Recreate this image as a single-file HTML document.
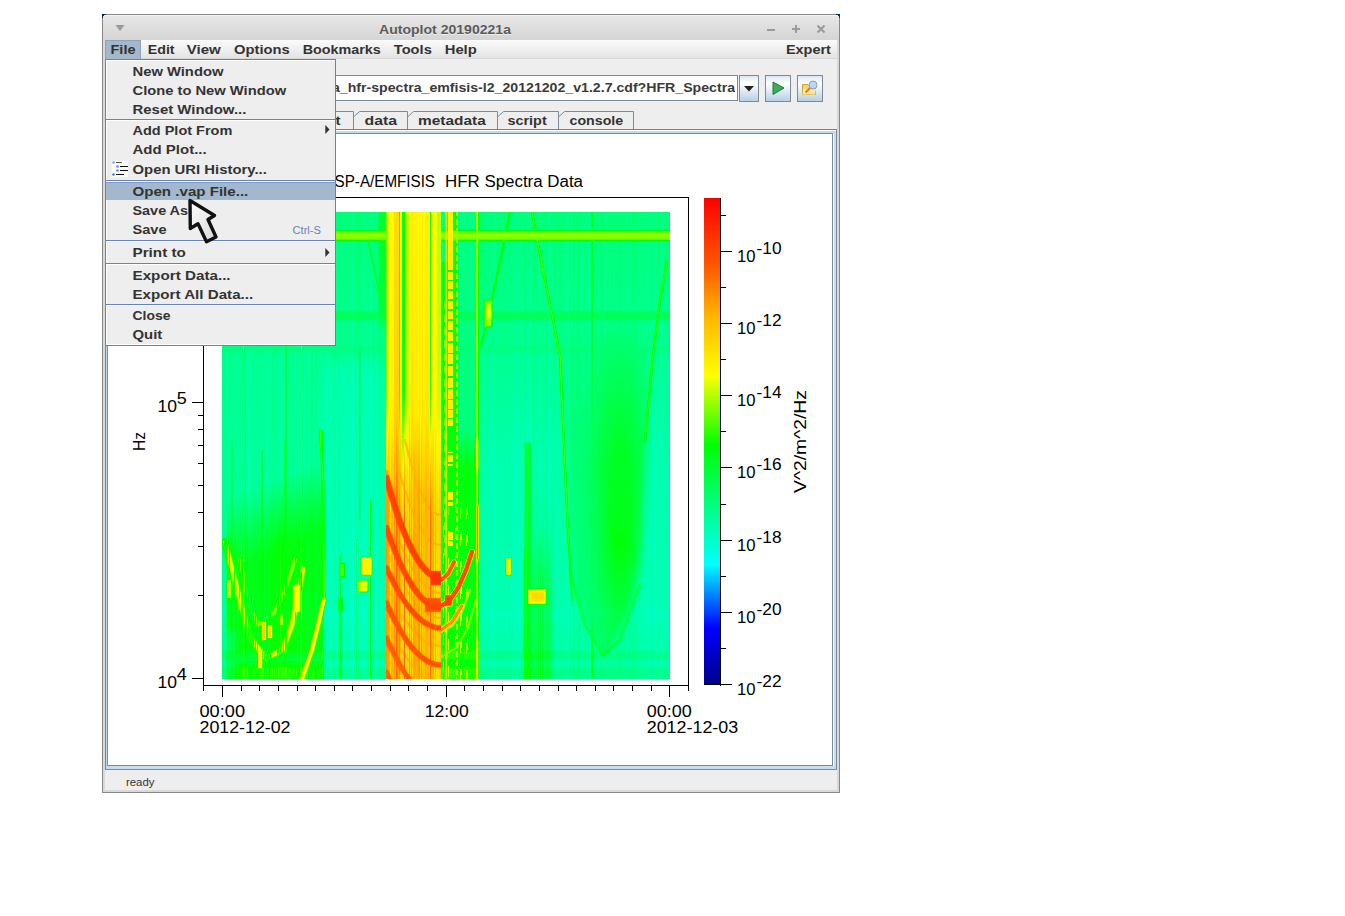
<!DOCTYPE html>
<html><head><meta charset="utf-8"><style>html,body{margin:0;padding:0;background:#fff;width:1345px;height:916px;overflow:hidden;position:relative} #spec i{position:absolute;top:212px;height:467px;display:block}</style></head>
<body>
<svg width="1345" height="916" viewBox="0 0 1345 916" shape-rendering="crispEdges" style="position:absolute;left:0;top:0"><g font-family="Liberation Sans, sans-serif" style="white-space:pre">
<defs>
<linearGradient id="gTitle" x1="0" y1="0" x2="0" y2="1"><stop offset="0" stop-color="#e8e8e8"/><stop offset="1" stop-color="#d4d4d4"/></linearGradient>
<linearGradient id="gMenu" x1="0" y1="0" x2="0" y2="1"><stop offset="0" stop-color="#fbfbfb"/><stop offset="1" stop-color="#e2e2e2"/></linearGradient>
<linearGradient id="gBtn" x1="0" y1="0" x2="0" y2="1"><stop offset="0" stop-color="#dde8f3"/><stop offset="0.3" stop-color="#ffffff"/><stop offset="1" stop-color="#b8cfe5"/></linearGradient>
<linearGradient id="gCbar" x1="0" y1="1" x2="0" y2="0">
<stop offset="0" stop-color="#000089"/><stop offset="0.1176" stop-color="#0000ff"/><stop offset="0.2471" stop-color="#00ffff"/><stop offset="0.4941" stop-color="#00ff00"/><stop offset="0.6353" stop-color="#ffff00"/><stop offset="0.7529" stop-color="#ffb900"/><stop offset="0.8667" stop-color="#ff5400"/><stop offset="1" stop-color="#ff0000"/></linearGradient>
<linearGradient id="gCur" x1="0" y1="0" x2="1" y2="1"><stop offset="0" stop-color="#ffffff"/><stop offset="1" stop-color="#d8d8d8"/></linearGradient>
</defs>
<rect x="0" y="0" width="1345" height="916" fill="#ffffff" />
<rect x="102" y="14" width="738" height="779" fill="#888888" />
<rect x="103" y="15" width="736" height="777" fill="#d9d9d9" />
<rect x="103" y="15" width="736" height="25" fill="url(#gTitle)" />
<rect x="103" y="15" width="734" height="1" fill="#f4f4f4" />
<rect x="102" y="14" width="4" height="1" fill="#0a2a50" />
<rect x="102" y="14" width="1" height="4" fill="#0a2a50" />
<rect x="103" y="15" width="1" height="1" fill="#0a2a50" />
<rect x="836" y="14" width="4" height="1" fill="#0a2a50" />
<rect x="839" y="14" width="1" height="4" fill="#0a2a50" />
<rect x="838" y="15" width="1" height="1" fill="#0a2a50" />
<text x="379" y="34" font-size="13.5" font-weight="bold" fill="#ffffff" textLength="132" lengthAdjust="spacingAndGlyphs" opacity="0.6" transform="translate(0,1)">Autoplot 20190221a</text>
<text x="379" y="34" font-size="13.5" font-weight="bold" fill="#5a5a5a" textLength="132" lengthAdjust="spacingAndGlyphs">Autoplot 20190221a</text>
<path d="M115.5 25 L124.5 25 L120 31 Z" fill="#9a9a9a" shape-rendering="geometricPrecision"/>
<g stroke="#9a9a9a" stroke-width="2" shape-rendering="geometricPrecision" fill="none">
<path d="M767 30 H775"/><path d="M792 29 H800 M796 25 V33"/><path d="M817.5 25.5 L824.5 32.5 M824.5 25.5 L817.5 32.5"/>
</g>
<rect x="105" y="40" width="732" height="19" fill="url(#gMenu)" />
<rect x="105" y="58" width="732" height="1" fill="#d6d6d6" />
<rect x="105" y="59" width="732" height="711" fill="#eeeeee" />
<rect x="105" y="40" width="36" height="19" fill="#a3b8cc" />
<rect x="105" y="40" width="36" height="1" fill="#8fa3b8" />
<rect x="105" y="40" width="1" height="19" fill="#8fa3b8" />
<rect x="140" y="41" width="1" height="18" fill="#8fa3b8" />
<text xml:space="preserve" x="110.5" y="54" font-size="12.5" font-weight="bold" fill="#333333" textLength="25.00" lengthAdjust="spacingAndGlyphs" >File</text>
<text xml:space="preserve" x="147.8" y="54" font-size="12.5" font-weight="bold" fill="#333333" textLength="26.80" lengthAdjust="spacingAndGlyphs" >Edit</text>
<text xml:space="preserve" x="186.8" y="54" font-size="12.5" font-weight="bold" fill="#333333" textLength="33.90" lengthAdjust="spacingAndGlyphs" >View</text>
<text xml:space="preserve" x="234.1" y="54" font-size="12.5" font-weight="bold" fill="#333333" textLength="55.70" lengthAdjust="spacingAndGlyphs" >Options</text>
<text xml:space="preserve" x="302.7" y="54" font-size="12.5" font-weight="bold" fill="#333333" textLength="78.10" lengthAdjust="spacingAndGlyphs" >Bookmarks</text>
<text xml:space="preserve" x="393.8" y="54" font-size="12.5" font-weight="bold" fill="#333333" textLength="38.00" lengthAdjust="spacingAndGlyphs" >Tools</text>
<text xml:space="preserve" x="444.7" y="54" font-size="12.5" font-weight="bold" fill="#333333" textLength="32.10" lengthAdjust="spacingAndGlyphs" >Help</text>
<text xml:space="preserve" x="785.9" y="54" font-size="12.5" font-weight="bold" fill="#333333" textLength="45.00" lengthAdjust="spacingAndGlyphs" >Expert</text>
<rect x="112" y="75" width="626" height="26" fill="#7a8a99" />
<rect x="113" y="76" width="624" height="24" fill="#ffffff" />
<svg x="113" y="76" width="622" height="24"><text x="219" y="16" font-size="12.5" font-weight="bold" fill="#3a3a3a" textLength="403" lengthAdjust="spacingAndGlyphs">a_hfr-spectra_emfisis-l2_20121202_v1.2.7.cdf?HFR_Spectra</text></svg>
<rect x="739" y="75" width="20" height="27" fill="#7a8a99" />
<rect x="740" y="76" width="18" height="25" fill="url(#gBtn)" />
<path d="M744 86 H754 L749 91.5 Z" fill="#222" shape-rendering="geometricPrecision"/>
<rect x="765" y="75" width="26" height="27" fill="#7a8a99" />
<rect x="766" y="76" width="24" height="25" fill="url(#gBtn)" />
<path d="M773 82 L784 88 L773 94.5 Z" fill="#3cae5a" stroke="#1f7a3a" stroke-width="1" shape-rendering="geometricPrecision"/>
<rect x="797" y="75" width="26" height="27" fill="#7a8a99" />
<rect x="798" y="76" width="24" height="25" fill="url(#gBtn)" />
<g shape-rendering="geometricPrecision">
<path d="M802.5 84.5 H808 L809.5 86 H815.5 V94.5 H802.5 Z" fill="#f5d76e" stroke="#c9a23a" stroke-width="1"/>
<path d="M803 89 H816 L815 94.5 H802.5 Z" fill="#fbe9a0"/>
<line x1="805.5" y1="92.5" x2="810.5" y2="87.5" stroke="#e8742a" stroke-width="2"/>
<circle cx="813" cy="85" r="4" fill="#bcd6f0" stroke="#8aa2bc" stroke-width="1"/>
</g>
<path d="M290.5 129 V117 L296.5 111.5 H353.5 V129" fill="#eeeeee" stroke="#7a8a99" stroke-width="1" shape-rendering="geometricPrecision"/>
<text xml:space="preserve" x="296.5" y="125" font-size="12.5" font-weight="bold" fill="#333333" textLength="43.94" lengthAdjust="spacingAndGlyphs" >layout</text>
<path d="M353.5 129 V117 L359.5 111.5 H407.5 V129" fill="#eeeeee" stroke="#7a8a99" stroke-width="1" shape-rendering="geometricPrecision"/>
<text xml:space="preserve" x="364.5" y="125" font-size="12.5" font-weight="bold" fill="#333333" textLength="32.50" lengthAdjust="spacingAndGlyphs" >data</text>
<path d="M407.5 129 V117 L413.5 111.5 H497.5 V129" fill="#eeeeee" stroke="#7a8a99" stroke-width="1" shape-rendering="geometricPrecision"/>
<text xml:space="preserve" x="418" y="125" font-size="12.5" font-weight="bold" fill="#333333" textLength="67.72" lengthAdjust="spacingAndGlyphs" >metadata</text>
<path d="M497.5 129 V117 L503.5 111.5 H558.5 V129" fill="#eeeeee" stroke="#7a8a99" stroke-width="1" shape-rendering="geometricPrecision"/>
<text xml:space="preserve" x="507.5" y="125" font-size="12.5" font-weight="bold" fill="#333333" textLength="39.20" lengthAdjust="spacingAndGlyphs" >script</text>
<path d="M558.5 129 V117 L564.5 111.5 H633.5 V129" fill="#eeeeee" stroke="#7a8a99" stroke-width="1" shape-rendering="geometricPrecision"/>
<text xml:space="preserve" x="569.5" y="125" font-size="12.5" font-weight="bold" fill="#333333" textLength="53.70" lengthAdjust="spacingAndGlyphs" >console</text>
<rect x="105" y="129" width="732" height="641" fill="#6382bf" />
<rect x="106" y="130" width="731" height="640" fill="#7a8a99" />
<rect x="106" y="130" width="730" height="639" fill="#c8dcf0" />
<rect x="106" y="130" width="730" height="1" fill="#ffffff" />
<rect x="107" y="133" width="726" height="633" fill="#7a8a99" />
<rect x="108" y="134" width="724" height="631" fill="#ffffff" />
<rect x="836" y="129" width="1" height="641" fill="#7a8a99" />
<rect x="105" y="769" width="732" height="1" fill="#7a8a99" />
<rect x="833" y="134" width="1" height="632" fill="#ffffff" />
<rect x="105" y="770" width="732" height="20" fill="#eeeeee" />
<text xml:space="preserve" x="126" y="786" font-size="11" fill="#333333" textLength="28.50" lengthAdjust="spacingAndGlyphs" >ready</text>
<rect x="203" y="197" width="1" height="489" fill="#000" />
<rect x="203" y="197" width="486" height="1" fill="#000" />
<rect x="688" y="197" width="1" height="489" fill="#000" />
<rect x="203" y="685" width="486" height="1" fill="#000" />
<rect x="203" y="685" width="1" height="6" fill="#000" />
<rect x="222" y="685" width="1" height="12" fill="#000" />
<rect x="241" y="685" width="1" height="6" fill="#000" />
<rect x="259" y="685" width="1" height="6" fill="#000" />
<rect x="278" y="685" width="1" height="6" fill="#000" />
<rect x="297" y="685" width="1" height="6" fill="#000" />
<rect x="315" y="685" width="1" height="6" fill="#000" />
<rect x="334" y="685" width="1" height="6" fill="#000" />
<rect x="352" y="685" width="1" height="6" fill="#000" />
<rect x="371" y="685" width="1" height="6" fill="#000" />
<rect x="390" y="685" width="1" height="6" fill="#000" />
<rect x="408" y="685" width="1" height="6" fill="#000" />
<rect x="427" y="685" width="1" height="6" fill="#000" />
<rect x="446" y="685" width="1" height="12" fill="#000" />
<rect x="464" y="685" width="1" height="6" fill="#000" />
<rect x="483" y="685" width="1" height="6" fill="#000" />
<rect x="502" y="685" width="1" height="6" fill="#000" />
<rect x="520" y="685" width="1" height="6" fill="#000" />
<rect x="539" y="685" width="1" height="6" fill="#000" />
<rect x="558" y="685" width="1" height="6" fill="#000" />
<rect x="576" y="685" width="1" height="6" fill="#000" />
<rect x="595" y="685" width="1" height="6" fill="#000" />
<rect x="613" y="685" width="1" height="6" fill="#000" />
<rect x="632" y="685" width="1" height="6" fill="#000" />
<rect x="651" y="685" width="1" height="6" fill="#000" />
<rect x="669" y="685" width="1" height="12" fill="#000" />
<rect x="688" y="685" width="1" height="6" fill="#000" />
<rect x="192" y="678" width="11" height="1" fill="#000" />
<rect x="198" y="595" width="5" height="1" fill="#000" />
<rect x="198" y="546" width="5" height="1" fill="#000" />
<rect x="198" y="512" width="5" height="1" fill="#000" />
<rect x="198" y="485" width="5" height="1" fill="#000" />
<rect x="198" y="463" width="5" height="1" fill="#000" />
<rect x="198" y="445" width="5" height="1" fill="#000" />
<rect x="198" y="429" width="5" height="1" fill="#000" />
<rect x="198" y="415" width="5" height="1" fill="#000" />
<rect x="192" y="402" width="11" height="1" fill="#000" />
<rect x="198" y="319" width="5" height="1" fill="#000" />
<rect x="198" y="270" width="5" height="1" fill="#000" />
<rect x="198" y="236" width="5" height="1" fill="#000" />
<rect x="198" y="209" width="5" height="1" fill="#000" />
<text xml:space="preserve" x="157.5" y="412" font-size="16" fill="#000" textLength="19.50" lengthAdjust="spacingAndGlyphs" >10</text>
<text xml:space="preserve" x="176.8" y="403.5" font-size="16" fill="#000" textLength="10.00" lengthAdjust="spacingAndGlyphs" >5</text>
<text xml:space="preserve" x="157.5" y="688" font-size="16" fill="#000" textLength="19.50" lengthAdjust="spacingAndGlyphs" >10</text>
<text xml:space="preserve" x="176.8" y="679.5" font-size="16" fill="#000" textLength="10.00" lengthAdjust="spacingAndGlyphs" >4</text>
<text x="0" y="0" font-size="16" fill="#000" textLength="19" lengthAdjust="spacingAndGlyphs" transform="translate(145,451) rotate(-90)">Hz</text>
<text xml:space="preserve" x="199.5" y="717" font-size="16" fill="#000" textLength="45.50" lengthAdjust="spacingAndGlyphs" >00:00</text>
<text xml:space="preserve" x="199.5" y="733" font-size="16" fill="#000" textLength="91.00" lengthAdjust="spacingAndGlyphs" >2012-12-02</text>
<text xml:space="preserve" x="424.8" y="717" font-size="16" fill="#000" textLength="44.00" lengthAdjust="spacingAndGlyphs" >12:00</text>
<text xml:space="preserve" x="646.7" y="717" font-size="16" fill="#000" textLength="45.00" lengthAdjust="spacingAndGlyphs" >00:00</text>
<text xml:space="preserve" x="646.7" y="733" font-size="16" fill="#000" textLength="91.50" lengthAdjust="spacingAndGlyphs" >2012-12-03</text>
<text xml:space="preserve" x="313.5" y="187" font-size="16" fill="#000" textLength="121.50" lengthAdjust="spacingAndGlyphs" >RBSP-A/EMFISIS</text>
<text xml:space="preserve" x="445" y="187" font-size="16" fill="#000" textLength="138.00" lengthAdjust="spacingAndGlyphs" >HFR Spectra Data</text>
<rect x="704" y="198" width="16" height="487" fill="url(#gCbar)" />
<rect x="720" y="198" width="1" height="488" fill="#000" />
<rect x="704" y="684" width="16" height="1" fill="#000" />
<rect x="720" y="684" width="12" height="1" fill="#000" />
<text xml:space="preserve" x="737" y="695" font-size="16" fill="#000" textLength="18.50" lengthAdjust="spacingAndGlyphs" >10</text>
<text xml:space="preserve" x="756.5" y="687" font-size="16" fill="#000" textLength="25.00" lengthAdjust="spacingAndGlyphs" >-22</text>
<rect x="720" y="648" width="6" height="1" fill="#000" />
<rect x="720" y="612" width="12" height="1" fill="#000" />
<text xml:space="preserve" x="737" y="623" font-size="16" fill="#000" textLength="18.50" lengthAdjust="spacingAndGlyphs" >10</text>
<text xml:space="preserve" x="756.5" y="615" font-size="16" fill="#000" textLength="25.00" lengthAdjust="spacingAndGlyphs" >-20</text>
<rect x="720" y="576" width="6" height="1" fill="#000" />
<rect x="720" y="540" width="12" height="1" fill="#000" />
<text xml:space="preserve" x="737" y="551" font-size="16" fill="#000" textLength="18.50" lengthAdjust="spacingAndGlyphs" >10</text>
<text xml:space="preserve" x="756.5" y="543" font-size="16" fill="#000" textLength="25.00" lengthAdjust="spacingAndGlyphs" >-18</text>
<rect x="720" y="504" width="6" height="1" fill="#000" />
<rect x="720" y="467" width="12" height="1" fill="#000" />
<text xml:space="preserve" x="737" y="478" font-size="16" fill="#000" textLength="18.50" lengthAdjust="spacingAndGlyphs" >10</text>
<text xml:space="preserve" x="756.5" y="470" font-size="16" fill="#000" textLength="25.00" lengthAdjust="spacingAndGlyphs" >-16</text>
<rect x="720" y="431" width="6" height="1" fill="#000" />
<rect x="720" y="395" width="12" height="1" fill="#000" />
<text xml:space="preserve" x="737" y="406" font-size="16" fill="#000" textLength="18.50" lengthAdjust="spacingAndGlyphs" >10</text>
<text xml:space="preserve" x="756.5" y="398" font-size="16" fill="#000" textLength="25.00" lengthAdjust="spacingAndGlyphs" >-14</text>
<rect x="720" y="359" width="6" height="1" fill="#000" />
<rect x="720" y="323" width="12" height="1" fill="#000" />
<text xml:space="preserve" x="737" y="334" font-size="16" fill="#000" textLength="18.50" lengthAdjust="spacingAndGlyphs" >10</text>
<text xml:space="preserve" x="756.5" y="326" font-size="16" fill="#000" textLength="25.00" lengthAdjust="spacingAndGlyphs" >-12</text>
<rect x="720" y="287" width="6" height="1" fill="#000" />
<rect x="720" y="251" width="12" height="1" fill="#000" />
<text xml:space="preserve" x="737" y="262" font-size="16" fill="#000" textLength="18.50" lengthAdjust="spacingAndGlyphs" >10</text>
<text xml:space="preserve" x="756.5" y="254" font-size="16" fill="#000" textLength="25.00" lengthAdjust="spacingAndGlyphs" >-10</text>
<rect x="720" y="215" width="6" height="1" fill="#000" />
<text x="0" y="0" font-size="16" fill="#000" textLength="103" lengthAdjust="spacingAndGlyphs" transform="translate(806,493) rotate(-90)">V^2/m^2/Hz</text>
</g></svg><div id="spec"><i style="left:222px;width:1px;background:linear-gradient(#00ff8a 0px,#00ff8d 16.5px,#00ff62 17.5px,#00ff14 18.5px,#56ff00 19.5px,#81ff00 21.5px,#9bff00 23.5px,#75ff00 26.5px,#55ff00 27.5px,#00ff14 28.5px,#00ff63 29.5px,#00ff8e 30.5px,#00ff90 97.5px,#00ff5e 100.5px,#00ff5e 106.5px,#00ff90 109.5px,#00ff8c 132.5px,#00ff7d 137.5px,#00ff95 143.5px,#00ff99 324.5px,#00ff88 325.5px,#00ff07 328.5px,#19ff00 329.5px,#19ff00 330.5px,#01ff00 331.5px,#00ff7b 339.5px,#00ff99 344.5px,#00ff9d 393.5px,#00ffa4 401.5px,#00ff90 437.5px,#00ff73 440.5px,#00ff75 446.5px,#00ff92 449.5px,#00ff8a 454.5px,#00ff73 457.5px,#00ff7f 467px)"></i><i style="left:223px;width:1px;background:linear-gradient(#00ff85 0px,#00ff8a 16.5px,#00ff60 17.5px,#00ff13 18.5px,#56ff00 19.5px,#81ff00 21.5px,#9bff00 23.5px,#75ff00 26.5px,#56ff00 27.5px,#00ff13 28.5px,#00ff60 29.5px,#00ff8a 30.5px,#00ff8c 97.5px,#00ff5a 101.5px,#00ff5d 106.5px,#00ff8d 109.5px,#00ff89 132.5px,#00ff7b 137.5px,#00ff91 143.5px,#00ff93 324.5px,#00ff45 326.5px,#00ff06 327.5px,#59ff00 328.5px,#c9ff00 329.5px,#caff00 330.5px,#62ff00 332.5px,#2aff00 333.5px,#00ff01 335.5px,#00ff6f 342.5px,#00ff95 347.5px,#00ff9a 393.5px,#00ffa1 401.5px,#00ff8d 437.5px,#00ff70 440.5px,#00ff73 446.5px,#00ff8f 449.5px,#00ff87 454.5px,#00ff70 457.5px,#00ff7b 467px)"></i><i style="left:224px;width:1px;background:linear-gradient(#00ff86 0px,#00ff8a 16.5px,#00ff60 17.5px,#00ff13 18.5px,#56ff00 19.5px,#81ff00 21.5px,#9bff00 23.5px,#75ff00 26.5px,#56ff00 27.5px,#00ff13 28.5px,#00ff60 29.5px,#00ff8b 30.5px,#00ff8d 97.5px,#00ff5d 100.5px,#00ff5d 106.5px,#00ff90 110.5px,#00ff8a 132.5px,#00ff7b 137.5px,#00ff92 143.5px,#00ff90 324.5px,#00ff0f 327.5px,#00ff12 338.5px,#00ff94 350.5px,#00ff9a 393.5px,#00ffa1 401.5px,#00ff8c 437.5px,#00ff70 440.5px,#00ff72 446.5px,#00ff8f 449.5px,#00ff87 454.5px,#00ff70 457.5px,#00ff7b 467px)"></i><i style="left:225px;width:1px;background:linear-gradient(#00ff8b 0px,#00ff8e 16.5px,#00ff63 17.5px,#00ff15 18.5px,#55ff00 19.5px,#81ff00 21.5px,#9bff00 23.5px,#75ff00 26.5px,#55ff00 27.5px,#00ff15 28.5px,#00ff64 29.5px,#00ff8f 30.5px,#00ff91 97.5px,#00ff5f 100.5px,#00ff5f 106.5px,#00ff92 109.5px,#00ff8d 132.5px,#00ff7d 137.5px,#00ff96 142.5px,#00ff94 323.5px,#00ff8e 324.5px,#00ff0f 327.5px,#00ff0c 341.5px,#00ff8d 354.5px,#00ff92 393.5px,#00ff99 401.5px,#00ff8b 429.5px,#00ff89 437.5px,#00ff69 440.5px,#00ff6a 446.5px,#00ff8b 449.5px,#00ff83 454.5px,#00ff6d 457.5px,#00ff77 467px)"></i><i style="left:226px;width:1px;background:linear-gradient(#00ff89 0px,#00ff8c 16.5px,#00ff61 17.5px,#00ff14 18.5px,#56ff00 19.5px,#81ff00 21.5px,#9bff00 23.5px,#75ff00 26.5px,#56ff00 27.5px,#00ff14 28.5px,#00ff62 29.5px,#00ff8d 30.5px,#00ff90 97.5px,#00ff5e 100.5px,#00ff5e 106.5px,#00ff91 109.5px,#00ff8d 132.5px,#00ff7d 137.5px,#00ff96 142.5px,#00ff92 301.5px,#00ff7e 324.5px,#00ff14 327.5px,#00ff03 329.5px,#00ff0b 346.5px,#00ff6a 358.5px,#00ff64 367.5px,#00ff48 369.5px,#00ff4d 385.5px,#00ff69 387.5px,#00ff75 401.5px,#00ff69 413.5px,#00ff7d 429.5px,#00ff7b 437.5px,#00ff4d 441.5px,#00ff50 446.5px,#00ff7d 450.5px,#00ff75 454.5px,#00ff5e 457.5px,#00ff62 467px)"></i><i style="left:227px;width:1px;background:linear-gradient(#00ff81 0px,#00ff84 16.5px,#00ff5b 17.5px,#00ff11 18.5px,#56ff00 19.5px,#81ff00 21.5px,#9bff00 23.5px,#75ff00 26.5px,#56ff00 27.5px,#00ff11 28.5px,#00ff5c 29.5px,#00ff86 30.5px,#00ff8f 97.5px,#00ff5e 100.5px,#00ff5e 106.5px,#00ff91 109.5px,#00ff8f 132.5px,#00ff7f 137.5px,#00ff99 142.5px,#00ff9f 288.5px,#00ff59 324.5px,#00ff16 327.5px,#11ff00 328.5px,#2bff00 329.5px,#beff00 332.5px,#e3ff00 334.5px,#ddff00 345.5px,#a0ff00 347.5px,#28ff00 350.5px,#00ff06 354.5px,#00ff1c 366.5px,#00ff09 367.5px,#7aff00 368.5px,#99ff00 369.5px,#99ff00 384.5px,#7aff00 385.5px,#00ff09 386.5px,#00ff1c 388.5px,#00ff27 401.5px,#00ff1c 414.5px,#00ff5d 421.5px,#00ff5b 437.5px,#00ff41 440.5px,#00ff43 446.5px,#00ff5e 449.5px,#00ff56 454.5px,#00ff3f 457.5px,#00ff39 464.5px,#00ff2f 465.5px,#00ff42 467px)"></i><i style="left:228px;width:1px;background:linear-gradient(#00ff76 0px,#00ff78 16.5px,#00ff52 17.5px,#00ff0d 18.5px,#57ff00 19.5px,#81ff00 21.5px,#9bff00 23.5px,#75ff00 26.5px,#57ff00 27.5px,#00ff0d 28.5px,#00ff54 29.5px,#00ff7b 30.5px,#00ff86 97.5px,#00ff58 101.5px,#00ff5b 106.5px,#00ff8b 110.5px,#00ff88 132.5px,#00ff7a 137.5px,#00ff91 143.5px,#00ff99 286.5px,#00ff4d 325.5px,#00ff03 330.5px,#3dff00 333.5px,#c8ff00 336.5px,#e4ff00 338.5px,#e6ff00 348.5px,#c2ff00 350.5px,#2aff00 354.5px,#00ff01 358.5px,#00ff15 366.5px,#00ff00 367.5px,#9bff00 368.5px,#bfff00 369.5px,#bfff00 384.5px,#9bff00 385.5px,#00ff00 386.5px,#00ff15 387.5px,#00ff20 401.5px,#00ff16 414.5px,#00ff5a 421.5px,#00ff59 437.5px,#00ff3f 440.5px,#00ff42 446.5px,#00ff5c 449.5px,#00ff53 454.5px,#00ff3c 457.5px,#00ff36 464.5px,#00ff2c 465.5px,#00ff3f 467px)"></i><i style="left:229px;width:1px;background:linear-gradient(#00ff7b 0px,#00ff7e 16.5px,#00ff56 17.5px,#00ff0e 18.5px,#57ff00 19.5px,#81ff00 21.5px,#9bff00 23.5px,#75ff00 26.5px,#57ff00 27.5px,#00ff0f 28.5px,#00ff58 29.5px,#00ff80 30.5px,#00ff8b 97.5px,#00ff5c 100.5px,#00ff5d 106.5px,#00ff90 110.5px,#00ff8c 132.5px,#00ff7d 137.5px,#00ff96 142.5px,#00ff9e 286.5px,#00ff4e 326.5px,#00ff00 335.5px,#16ff00 344.5px,#12ff00 358.5px,#00ff0d 365.5px,#00ff11 366.5px,#00ff00 367.5px,#9bff00 368.5px,#bfff00 369.5px,#bfff00 384.5px,#9aff00 385.5px,#00ff03 386.5px,#00ff18 387.5px,#00ff23 401.5px,#00ff19 414.5px,#00ff5c 421.5px,#00ff5a 437.5px,#00ff40 440.5px,#00ff43 446.5px,#00ff5d 449.5px,#00ff54 454.5px,#00ff3d 457.5px,#00ff37 464.5px,#00ff2d 465.5px,#00ff41 467px)"></i><i style="left:230px;width:1px;background:linear-gradient(#00ff74 0px,#00ff77 16.5px,#00ff51 17.5px,#00ff0c 18.5px,#57ff00 19.5px,#81ff00 21.5px,#9bff00 23.5px,#75ff00 26.5px,#57ff00 27.5px,#00ff0d 28.5px,#00ff53 29.5px,#00ff7a 30.5px,#00ff85 97.5px,#00ff57 101.5px,#00ff5a 106.5px,#00ff89 110.5px,#00ff86 132.5px,#00ff79 137.5px,#00ff8f 143.5px,#00ff99 283.5px,#00ff3d 327.5px,#02ff00 337.5px,#3cff00 340.5px,#bdff00 343.5px,#e6ff00 345.5px,#e6ff00 356.5px,#9cff00 359.5px,#2eff00 362.5px,#0dff00 366.5px,#21ff00 367.5px,#89ff00 368.5px,#a1ff00 369.5px,#9fff00 384.5px,#85ff00 385.5px,#11ff00 386.5px,#00ff05 388.5px,#00ff10 401.5px,#00ff06 414.5px,#00ff54 421.5px,#00ff52 437.5px,#00ff39 439.5px,#00ff40 446.5px,#00ff59 448.5px,#00ff4d 454.5px,#00ff36 457.5px,#00ff2e 464.5px,#00ff23 465.5px,#00ff37 467px)"></i><i style="left:231px;width:1px;background:linear-gradient(#00ff8a 0px,#00ff8c 16.5px,#00ff62 17.5px,#00ff14 18.5px,#56ff00 19.5px,#81ff00 21.5px,#9bff00 23.5px,#75ff00 26.5px,#55ff00 27.5px,#00ff15 28.5px,#00ff64 29.5px,#00ff8f 30.5px,#00ff9a 97.5px,#00ff63 100.5px,#00ff63 106.5px,#00ff9c 109.5px,#00ff99 132.5px,#00ff85 136.5px,#00ffa5 142.5px,#00ffb0 226.5px,#00ff6e 229.5px,#00ff5d 296.5px,#00ff1c 335.5px,#02ff00 340.5px,#2dff00 343.5px,#c8ff00 347.5px,#e8ff00 349.5px,#e6ff00 360.5px,#9dff00 363.5px,#37ff00 366.5px,#2bff00 367.5px,#26ff00 384.5px,#09ff00 388.5px,#00ff02 415.5px,#00ff36 420.5px,#00ff37 437.5px,#00ff1f 440.5px,#00ff23 446.5px,#00ff3a 449.5px,#00ff31 454.5px,#00ff1b 457.5px,#00ff11 465.5px,#00ff27 467px)"></i><i style="left:232px;width:1px;background:linear-gradient(#00ff6e 0px,#00ff70 16.5px,#00ff4c 17.5px,#00ff09 18.5px,#58ff00 19.5px,#81ff00 21.5px,#9bff00 23.5px,#75ff00 26.5px,#58ff00 27.5px,#00ff0a 28.5px,#00ff4e 29.5px,#00ff73 30.5px,#00ff7e 97.5px,#00ff55 101.5px,#00ff63 107.5px,#00ff82 110.5px,#00ff80 132.5px,#00ff7a 138.5px,#00ff8a 148.5px,#00ff94 226.5px,#00ff5f 229.5px,#00ff4d 301.5px,#00ff19 339.5px,#03ff00 344.5px,#2eff00 347.5px,#ccff00 351.5px,#e7ff00 353.5px,#e1ff00 364.5px,#8aff00 367.5px,#3cff00 369.5px,#0bff00 373.5px,#00ff16 394.5px,#00ff0f 402.5px,#00ff12 415.5px,#00ff3c 422.5px,#00ff3a 437.5px,#00ff21 440.5px,#00ff23 446.5px,#00ff3d 449.5px,#00ff34 454.5px,#00ff1d 457.5px,#00ff15 465.5px,#00ff29 467px)"></i><i style="left:233px;width:1px;background:linear-gradient(#00ff7b 0px,#00ff7e 16.5px,#00ff57 17.5px,#00ff0f 18.5px,#57ff00 19.5px,#81ff00 21.5px,#9bff00 23.5px,#75ff00 26.5px,#57ff00 27.5px,#00ff0f 28.5px,#00ff58 29.5px,#00ff81 30.5px,#00ff8b 97.5px,#00ff5c 100.5px,#00ff5d 106.5px,#00ff8e 109.5px,#00ff8c 132.5px,#00ff7d 137.5px,#00ff96 142.5px,#00ffa0 283.5px,#00ff2c 341.5px,#00ff02 348.5px,#2cff00 351.5px,#cdff00 355.5px,#e6ff00 357.5px,#dcff00 368.5px,#77ff00 371.5px,#2aff00 373.5px,#00ff04 377.5px,#00ff1d 389.5px,#00ff29 401.5px,#00ff1d 412.5px,#00ff35 417.5px,#00ff58 422.5px,#00ff56 437.5px,#00ff3e 440.5px,#00ff42 446.5px,#00ff59 449.5px,#00ff50 454.5px,#00ff3a 457.5px,#00ff2c 465.5px,#00ff41 467px)"></i><i style="left:234px;width:1px;background:linear-gradient(#00ff75 0px,#00ff78 16.5px,#00ff52 17.5px,#00ff0c 18.5px,#57ff00 19.5px,#81ff00 21.5px,#9bff00 23.5px,#75ff00 26.5px,#57ff00 27.5px,#00ff0d 28.5px,#00ff53 29.5px,#00ff7a 30.5px,#00ff85 97.5px,#00ff58 101.5px,#00ff5a 106.5px,#00ff8a 110.5px,#00ff87 132.5px,#00ff79 137.5px,#00ff90 143.5px,#00ff98 284.5px,#00ff18 347.5px,#0fff00 354.5px,#1cff00 373.5px,#00ff11 385.5px,#00ff29 400.5px,#00ff1a 409.5px,#00ff26 416.5px,#00ff4e 422.5px,#00ff4b 437.5px,#00ff33 439.5px,#00ff4b 447.5px,#00ff50 449.5px,#00ff46 454.5px,#00ff2f 457.5px,#00ff23 465.5px,#00ff3b 467px)"></i><i style="left:235px;width:1px;background:linear-gradient(#00ff7c 0px,#00ff7e 16.5px,#00ff57 17.5px,#00ff0f 18.5px,#57ff00 19.5px,#81ff00 21.5px,#9bff00 23.5px,#75ff00 26.5px,#57ff00 27.5px,#00ff0f 28.5px,#00ff59 29.5px,#00ff81 30.5px,#00ff8c 97.5px,#00ff5a 101.5px,#00ff5d 106.5px,#00ff91 110.5px,#00ff8d 132.5px,#00ff7d 137.5px,#00ff97 142.5px,#00ff9f 282.5px,#00ff2e 329.5px,#07ff00 351.5px,#2aff00 357.5px,#deff00 363.5px,#e8ff00 375.5px,#abff00 378.5px,#2cff00 382.5px,#00ff0a 396.5px,#00ff06 416.5px,#00ff2d 422.5px,#00ff2b 437.5px,#00ff16 439.5px,#00ff32 441.5px,#00ff35 446.5px,#00ff49 448.5px,#00ff2d 450.5px,#00ff25 454.5px,#00ff0e 457.5px,#00ff03 465.5px,#00ff25 467px)"></i><i style="left:236px;width:1px;background:linear-gradient(#00ff7e 0px,#00ff80 16.5px,#00ff58 17.5px,#00ff0f 18.5px,#57ff00 19.5px,#81ff00 21.5px,#9bff00 23.5px,#75ff00 26.5px,#56ff00 27.5px,#00ff10 28.5px,#00ff5a 29.5px,#00ff83 30.5px,#00ff8e 97.5px,#00ff5d 100.5px,#00ff5e 106.5px,#00ff90 109.5px,#00ff8f 132.5px,#00ff7d 136.5px,#00ff99 143.5px,#00ffa1 282.5px,#08ff00 358.5px,#33ff00 362.5px,#c8ff00 366.5px,#e8ff00 368.5px,#e6ff00 379.5px,#9eff00 382.5px,#2dff00 385.5px,#00ff01 391.5px,#00ff1b 398.5px,#00ff0c 412.5px,#00ff2a 425.5px,#00ff28 437.5px,#00ff14 439.5px,#00ff31 441.5px,#00ff34 446.5px,#00ff48 448.5px,#00ff2a 450.5px,#00ff22 454.5px,#00ff0b 457.5px,#00ff04 465.5px,#00ff29 467px)"></i><i style="left:237px;width:1px;background:linear-gradient(#00ff77 0px,#00ff79 16.5px,#00ff53 17.5px,#00ff0d 18.5px,#57ff00 19.5px,#81ff00 21.5px,#9bff00 23.5px,#75ff00 26.5px,#57ff00 27.5px,#00ff0e 28.5px,#00ff55 29.5px,#00ff7c 30.5px,#00ff87 97.5px,#00ff58 101.5px,#00ff5b 106.5px,#00ff8c 110.5px,#00ff88 132.5px,#00ff7a 137.5px,#00ff92 143.5px,#00ff9a 283.5px,#00ff2c 346.5px,#00ff1c 348.5px,#00ff24 355.5px,#0bff00 364.5px,#29ff00 366.5px,#c5ff00 370.5px,#e6ff00 372.5px,#e3ff00 383.5px,#b3ff00 385.5px,#42ff00 388.5px,#00ff09 394.5px,#00ff32 400.5px,#00ff24 410.5px,#00ff2f 437.5px,#00ff1a 439.5px,#00ff34 441.5px,#00ff36 446.5px,#00ff4b 448.5px,#00ff32 450.5px,#00ff2a 454.5px,#00ff13 457.5px,#00ff10 465.5px,#00ff33 467px)"></i><i style="left:238px;width:1px;background:linear-gradient(#00ff74 0px,#00ff76 16.5px,#00ff51 17.5px,#00ff0c 18.5px,#58ff00 19.5px,#81ff00 21.5px,#9bff00 23.5px,#75ff00 26.5px,#57ff00 27.5px,#00ff0c 28.5px,#00ff52 29.5px,#00ff79 30.5px,#00ff84 97.5px,#00ff57 101.5px,#00ff5a 106.5px,#00ff89 110.5px,#00ff86 132.5px,#00ff78 137.5px,#00ff8f 143.5px,#00ff97 282.5px,#00ff1a 345.5px,#18ff00 346.5px,#5bff00 347.5px,#5dff00 348.5px,#05ff00 352.5px,#00ff0e 359.5px,#0eff00 367.5px,#3bff00 370.5px,#cdff00 374.5px,#e7ff00 376.5px,#e4ff00 387.5px,#99ff00 390.5px,#84ff00 396.5px,#6fff00 397.5px,#12ff00 398.5px,#00ff16 400.5px,#00ff14 437.5px,#00ff01 439.5px,#00ff23 440.5px,#00ff3b 447.5px,#00ff40 448.5px,#00ff1e 449.5px,#00ff0e 454.5px,#0eff00 457.5px,#11ff00 465.5px,#00ff20 467px)"></i><i style="left:239px;width:1px;background:linear-gradient(#00ff7c 0px,#00ff7f 16.5px,#00ff57 17.5px,#00ff0f 18.5px,#57ff00 19.5px,#81ff00 21.5px,#9bff00 23.5px,#75ff00 26.5px,#57ff00 27.5px,#00ff10 28.5px,#00ff59 29.5px,#00ff81 30.5px,#00ff8c 97.5px,#00ff5d 100.5px,#00ff5d 106.5px,#00ff8f 109.5px,#00ff8d 132.5px,#00ff7e 137.5px,#00ff97 142.5px,#00ff9f 282.5px,#00ff1f 353.5px,#00ff0a 368.5px,#1bff00 381.5px,#1bff00 384.5px,#2fff00 385.5px,#87ff00 386.5px,#9bff00 388.5px,#9bff00 396.5px,#85ff00 397.5px,#20ff00 398.5px,#00ff0d 399.5px,#00ff1d 424.5px,#00ff1b 437.5px,#00ff08 439.5px,#00ff26 440.5px,#00ff3d 447.5px,#00ff43 448.5px,#00ff25 449.5px,#00ff15 454.5px,#02ff00 457.5px,#02ff00 465.5px,#00ff29 467px)"></i><i style="left:240px;width:1px;background:linear-gradient(#00ff7c 0px,#00ff7e 16.5px,#00ff57 17.5px,#00ff0f 18.5px,#57ff00 19.5px,#81ff00 21.5px,#9bff00 23.5px,#75ff00 26.5px,#57ff00 27.5px,#00ff0f 28.5px,#00ff59 29.5px,#00ff81 30.5px,#00ff8c 97.5px,#00ff5a 101.5px,#00ff5d 106.5px,#00ff91 110.5px,#00ff8d 132.5px,#00ff7d 137.5px,#00ff97 142.5px,#00ff9f 281.5px,#00ff21 344.5px,#00ff13 345.5px,#57ff00 346.5px,#7bff00 347.5px,#7aff00 356.5px,#30ff00 360.5px,#01ff00 362.5px,#00ff14 367.5px,#0cff00 375.5px,#3cff00 378.5px,#d1ff00 382.5px,#e7ff00 384.5px,#e0ff00 395.5px,#89ff00 398.5px,#33ff00 400.5px,#00ff00 404.5px,#00ff16 416.5px,#00ff14 437.5px,#00ff01 439.5px,#00ff23 440.5px,#00ff3b 447.5px,#00ff40 448.5px,#00ff1e 449.5px,#00ff0e 454.5px,#0fff00 457.5px,#0fff00 465.5px,#00ff24 467px)"></i><i style="left:241px;width:1px;background:linear-gradient(#00ff75 0px,#00ff78 16.5px,#00ff51 17.5px,#00ff0c 18.5px,#57ff00 19.5px,#81ff00 21.5px,#9bff00 23.5px,#75ff00 26.5px,#57ff00 27.5px,#00ff0d 28.5px,#00ff53 29.5px,#00ff7a 30.5px,#00ff85 97.5px,#00ff58 101.5px,#00ff5a 106.5px,#00ff8a 110.5px,#00ff87 132.5px,#00ff79 137.5px,#00ff90 143.5px,#00ff98 281.5px,#00ff17 352.5px,#00ff07 375.5px,#31ff00 389.5px,#2eff00 397.5px,#00ff0a 410.5px,#00ff12 437.5px,#00ff00 439.5px,#00ff22 440.5px,#00ff3a 447.5px,#00ff3f 448.5px,#00ff1c 449.5px,#00ff0c 454.5px,#12ff00 458.5px,#12ff00 465.5px,#00ff21 467px)"></i><i style="left:242px;width:1px;background:linear-gradient(#00ff72 0px,#00ff6d 16.5px,#00ff4a 17.5px,#00ff08 18.5px,#58ff00 19.5px,#81ff00 21.5px,#9bff00 23.5px,#75ff00 26.5px,#58ff00 27.5px,#00ff09 28.5px,#00ff4b 29.5px,#00ff70 30.5px,#00ff7a 97.5px,#00ff53 101.5px,#00ff61 107.5px,#00ff7e 110.5px,#00ff76 133.5px,#00ff7d 139.5px,#00ff8e 275.5px,#00ff3e 321.5px,#00ff0b 357.5px,#07ff00 380.5px,#2aff00 390.5px,#1eff00 408.5px,#00ff08 415.5px,#00ff09 437.5px,#10ff00 439.5px,#00ff1b 441.5px,#00ff1d 446.5px,#00ff30 448.5px,#00ff12 449.5px,#00ff03 454.5px,#21ff00 456.5px,#20ff00 465.5px,#00ff1c 467px)"></i><i style="left:243px;width:1px;background:linear-gradient(#1eff00 0px,#8aff00 1.5px,#9bff00 3.5px,#9bff00 345.5px,#a9ff00 346.5px,#fffe00 347.5px,#ffb900 349.5px,#ffb900 411.5px,#fffe00 413.5px,#a9ff00 414.5px,#9bff00 417.5px,#93ff00 465.5px,#4dff00 467px)"></i><i style="left:244px;width:1px;background:linear-gradient(#00ff68 0px,#00ff64 16.5px,#00ff42 17.5px,#00ff05 18.5px,#59ff00 19.5px,#81ff00 21.5px,#9bff00 23.5px,#75ff00 26.5px,#59ff00 27.5px,#00ff05 28.5px,#00ff44 29.5px,#00ff66 30.5px,#00ff71 97.5px,#00ff4f 101.5px,#00ff5b 107.5px,#00ff74 110.5px,#00ff6f 133.5px,#00ff86 272.5px,#00ff41 315.5px,#09ff00 357.5px,#7fff00 364.5px,#7fff00 376.5px,#04ff00 384.5px,#24ff00 391.5px,#3aff00 393.5px,#dcff00 398.5px,#e7ff00 408.5px,#c9ff00 410.5px,#4bff00 413.5px,#19ff00 416.5px,#00ff04 423.5px,#00ff02 437.5px,#1cff00 439.5px,#00ff10 440.5px,#00ff28 447.5px,#00ff2d 448.5px,#00ff0c 449.5px,#06ff00 454.5px,#2eff00 456.5px,#2dff00 465.5px,#00ff14 467px)"></i><i style="left:245px;width:1px;background:linear-gradient(#00ff80 0px,#00ff83 16.5px,#00ff5a 17.5px,#00ff10 18.5px,#56ff00 19.5px,#81ff00 21.5px,#9bff00 23.5px,#75ff00 26.5px,#56ff00 27.5px,#00ff11 28.5px,#00ff5c 29.5px,#00ff85 30.5px,#00ff90 97.5px,#00ff5e 100.5px,#00ff5f 106.5px,#00ff92 109.5px,#00ff91 132.5px,#00ff7f 136.5px,#00ff9b 143.5px,#00ffa3 279.5px,#00ff18 350.5px,#00ff0a 390.5px,#0cff00 395.5px,#1dff00 406.5px,#13ff00 417.5px,#00ff0d 423.5px,#00ff13 437.5px,#00ff01 439.5px,#00ff23 440.5px,#00ff2d 446.5px,#00ff40 448.5px,#00ff1e 449.5px,#00ff0d 454.5px,#0fff00 458.5px,#0fff00 465.5px,#00ff25 467px)"></i><i style="left:246px;width:1px;background:linear-gradient(#00ff8a 0px,#00ff8d 16.5px,#00ff62 17.5px,#00ff14 18.5px,#55ff00 19.5px,#81ff00 21.5px,#9bff00 23.5px,#75ff00 26.5px,#55ff00 27.5px,#00ff15 28.5px,#00ff64 29.5px,#00ff90 30.5px,#00ff9a 97.5px,#00ff63 100.5px,#00ff63 106.5px,#00ff9c 109.5px,#00ff9a 132.5px,#00ff85 136.5px,#00ffa5 142.5px,#00ffae 277.5px,#00ff42 322.5px,#00ff0a 354.5px,#00ff0a 396.5px,#22ff00 405.5px,#16ff00 421.5px,#00ff07 428.5px,#0aff00 438.5px,#10ff00 439.5px,#00ff1e 440.5px,#00ff3a 448.5px,#00ff13 449.5px,#00ff01 454.5px,#25ff00 456.5px,#25ff00 465.5px,#00ff1e 467px)"></i><i style="left:247px;width:1px;background:linear-gradient(#00ff81 0px,#00ff84 16.5px,#00ff5b 17.5px,#00ff11 18.5px,#56ff00 19.5px,#81ff00 21.5px,#9bff00 23.5px,#75ff00 26.5px,#56ff00 27.5px,#00ff12 28.5px,#00ff5d 29.5px,#00ff87 30.5px,#00ff91 97.5px,#00ff5f 100.5px,#00ff5f 106.5px,#00ff93 109.5px,#00ff92 132.5px,#00ff80 136.5px,#00ff9c 142.5px,#00ffa4 277.5px,#00ff08 348.5px,#0aff00 372.5px,#7fff00 379.5px,#82ff00 389.5px,#55ff00 391.5px,#0dff00 393.5px,#00ff0e 397.5px,#18ff00 402.5px,#39ff00 404.5px,#bcff00 407.5px,#e8ff00 409.5px,#e7ff00 418.5px,#b7ff00 420.5px,#34ff00 423.5px,#0cff00 427.5px,#00ff01 437.5px,#18ff00 439.5px,#00ff1c 440.5px,#00ff38 448.5px,#00ff0e 449.5px,#06ff00 454.5px,#2eff00 456.5px,#2eff00 465.5px,#00ff18 467px)"></i><i style="left:248px;width:1px;background:linear-gradient(#00ff7e 0px,#00ff81 16.5px,#00ff59 17.5px,#00ff10 18.5px,#57ff00 19.5px,#81ff00 21.5px,#9bff00 23.5px,#75ff00 26.5px,#56ff00 27.5px,#00ff10 28.5px,#00ff5b 29.5px,#00ff84 30.5px,#00ff8e 97.5px,#00ff5b 101.5px,#00ff5e 106.5px,#00ff91 109.5px,#00ff8f 132.5px,#00ff7f 137.5px,#00ff99 142.5px,#00ffa2 277.5px,#00ff24 350.5px,#00ff26 393.5px,#00ff2d 399.5px,#06ff00 406.5px,#19ff00 414.5px,#0eff00 426.5px,#00ff19 431.5px,#00ff20 437.5px,#00ff0d 439.5px,#00ff2f 441.5px,#00ff31 446.5px,#00ff45 448.5px,#00ff29 449.5px,#00ff1a 454.5px,#00ff03 457.5px,#00ff03 465.5px,#00ff2e 467px)"></i><i style="left:249px;width:1px;background:linear-gradient(#00ff84 0px,#00ff87 16.5px,#00ff5e 17.5px,#00ff12 18.5px,#56ff00 19.5px,#81ff00 21.5px,#9bff00 23.5px,#75ff00 26.5px,#56ff00 27.5px,#00ff13 28.5px,#00ff5f 29.5px,#00ff8a 30.5px,#00ff94 97.5px,#00ff60 100.5px,#00ff61 106.5px,#00ff97 109.5px,#00ff94 132.5px,#00ff81 136.5px,#00ff9f 142.5px,#00ffa8 276.5px,#00ff14 348.5px,#00ff0d 381.5px,#07ff00 383.5px,#7aff00 388.5px,#7fff00 394.5px,#4bff00 396.5px,#00ff13 398.5px,#00ff1c 401.5px,#0bff00 408.5px,#29ff00 410.5px,#d1ff00 414.5px,#e7ff00 416.5px,#e7ff00 424.5px,#bbff00 426.5px,#2bff00 429.5px,#00ff01 431.5px,#00ff0f 437.5px,#03ff00 439.5px,#00ff21 440.5px,#00ff39 447.5px,#00ff3e 448.5px,#00ff1a 449.5px,#09ff00 455.5px,#17ff00 458.5px,#17ff00 465.5px,#00ff23 467px)"></i><i style="left:250px;width:1px;background:linear-gradient(#00ff87 0px,#00ff89 16.5px,#00ff5f 17.5px,#00ff13 18.5px,#56ff00 19.5px,#81ff00 21.5px,#9bff00 23.5px,#75ff00 26.5px,#56ff00 27.5px,#00ff14 28.5px,#00ff61 29.5px,#00ff8c 30.5px,#00ff97 97.5px,#00ff61 100.5px,#00ff62 106.5px,#00ff99 109.5px,#00ff97 132.5px,#00ff83 136.5px,#00ffa2 142.5px,#00ffaa 276.5px,#00ff1d 348.5px,#00ff1e 393.5px,#00ff26 401.5px,#09ff00 412.5px,#1cff00 420.5px,#16ff00 430.5px,#00ff0c 433.5px,#00ff18 437.5px,#00ff05 439.5px,#00ff25 440.5px,#00ff3c 447.5px,#00ff42 448.5px,#00ff22 449.5px,#00ff12 454.5px,#07ff00 457.5px,#07ff00 465.5px,#00ff2a 467px)"></i><i style="left:251px;width:1px;background:linear-gradient(#00ff7a 0px,#00ff7d 16.5px,#00ff56 17.5px,#00ff0e 18.5px,#57ff00 19.5px,#81ff00 21.5px,#9bff00 23.5px,#75ff00 26.5px,#57ff00 27.5px,#00ff0f 28.5px,#00ff57 29.5px,#00ff80 30.5px,#00ff8a 97.5px,#00ff5a 101.5px,#00ff5c 106.5px,#00ff8d 109.5px,#00ff8c 132.5px,#00ff7d 137.5px,#00ff95 142.5px,#00ff9d 276.5px,#00ff13 347.5px,#00ff0b 389.5px,#0cff00 390.5px,#7aff00 393.5px,#7fff00 399.5px,#4cff00 401.5px,#00ff03 403.5px,#00ff0f 408.5px,#09ff00 414.5px,#41ff00 417.5px,#c9ff00 420.5px,#e7ff00 422.5px,#e7ff00 429.5px,#c0ff00 430.5px,#23ff00 432.5px,#00ff02 434.5px,#00ff0e 437.5px,#05ff00 439.5px,#00ff21 440.5px,#00ff3d 448.5px,#00ff19 449.5px,#0aff00 455.5px,#18ff00 458.5px,#18ff00 465.5px,#00ff1f 467px)"></i><i style="left:252px;width:1px;background:linear-gradient(#00ff73 0px,#00ff76 16.5px,#00ff50 17.5px,#00ff0c 18.5px,#58ff00 19.5px,#81ff00 21.5px,#9bff00 23.5px,#75ff00 26.5px,#57ff00 27.5px,#00ff0c 28.5px,#00ff52 29.5px,#00ff78 30.5px,#00ff83 97.5px,#00ff57 101.5px,#00ff59 106.5px,#00ff88 110.5px,#00ff85 132.5px,#00ff78 137.5px,#00ff8e 143.5px,#00ff96 276.5px,#00ff1f 349.5px,#00ff22 393.5px,#00ff2a 401.5px,#00ff07 416.5px,#1aff00 425.5px,#11ff00 433.5px,#00ff12 436.5px,#00ff09 439.5px,#00ff26 440.5px,#00ff3d 447.5px,#00ff43 448.5px,#00ff25 449.5px,#00ff16 454.5px,#00ff00 457.5px,#00ff00 465.5px,#00ff28 467px)"></i><i style="left:253px;width:1px;background:linear-gradient(#00ff7c 0px,#00ff7f 16.5px,#00ff57 17.5px,#00ff0f 18.5px,#57ff00 19.5px,#81ff00 21.5px,#9bff00 23.5px,#75ff00 26.5px,#57ff00 27.5px,#00ff10 28.5px,#00ff59 29.5px,#00ff82 30.5px,#00ff8d 97.5px,#00ff5d 100.5px,#00ff5d 106.5px,#00ff8f 109.5px,#00ff8d 132.5px,#00ff7e 137.5px,#00ff97 142.5px,#00ffa0 274.5px,#00ff10 347.5px,#00ff12 393.5px,#00ff19 401.5px,#09ff00 420.5px,#20ff00 428.5px,#13ff00 435.5px,#00ff00 437.5px,#0bff00 439.5px,#00ff20 440.5px,#00ff3c 448.5px,#00ff17 449.5px,#00ff06 454.5px,#1dff00 457.5px,#1dff00 465.5px,#00ff1e 467px)"></i><i style="left:254px;width:1px;background:linear-gradient(#00ff81 0px,#00ff83 16.5px,#00ff5b 17.5px,#00ff11 18.5px,#56ff00 19.5px,#81ff00 21.5px,#9bff00 23.5px,#75ff00 26.5px,#56ff00 27.5px,#00ff11 28.5px,#00ff5c 29.5px,#00ff86 30.5px,#00ff91 97.5px,#00ff5f 100.5px,#00ff5f 106.5px,#00ff93 109.5px,#00ff91 132.5px,#00ff7f 136.5px,#00ff9c 142.5px,#00ffa4 274.5px,#00ff11 346.5px,#00ff13 393.5px,#00ff1d 396.5px,#00ff11 397.5px,#4dff00 399.5px,#7fff00 401.5px,#7bff00 407.5px,#0eff00 410.5px,#00ff0f 413.5px,#08ff00 423.5px,#31ff00 426.5px,#d3ff00 428.5px,#e7ff00 430.5px,#e7ff00 433.5px,#c6ff00 434.5px,#26ff00 436.5px,#0bff00 437.5px,#17ff00 439.5px,#00ff1c 440.5px,#00ff29 444.5px,#00ff3d 448.5px,#00ff18 449.5px,#00ff07 454.5px,#1bff00 457.5px,#1bff00 465.5px,#00ff20 467px)"></i><i style="left:255px;width:1px;background:linear-gradient(#00ff77 0px,#00ff7a 16.5px,#00ff53 17.5px,#00ff0d 18.5px,#57ff00 19.5px,#81ff00 21.5px,#9bff00 23.5px,#75ff00 26.5px,#57ff00 27.5px,#00ff0e 28.5px,#00ff55 29.5px,#00ff7d 30.5px,#00ff88 97.5px,#00ff59 101.5px,#00ff5b 106.5px,#00ff8a 109.5px,#00ff89 132.5px,#00ff7b 137.5px,#00ff92 142.5px,#00ff9b 274.5px,#00ff14 346.5px,#00ff16 393.5px,#00ff1d 401.5px,#00ff05 424.5px,#1eff00 430.5px,#18ff00 437.5px,#0cff00 438.5px,#28ff00 439.5px,#00ff0d 440.5px,#00ff29 442.5px,#00ff2c 446.5px,#00ff3e 448.5px,#00ff1a 449.5px,#08ff00 455.5px,#16ff00 458.5px,#16ff00 465.5px,#00ff20 467px)"></i><i style="left:256px;width:1px;background:linear-gradient(#00ff75 0px,#00ff77 16.5px,#00ff51 17.5px,#00ff0c 18.5px,#57ff00 19.5px,#81ff00 21.5px,#9bff00 23.5px,#75ff00 26.5px,#57ff00 27.5px,#00ff0d 28.5px,#00ff53 29.5px,#00ff7a 30.5px,#00ff85 97.5px,#00ff58 101.5px,#00ff5a 106.5px,#00ff89 110.5px,#00ff87 132.5px,#00ff79 137.5px,#00ff90 143.5px,#00ff98 274.5px,#00ff1c 347.5px,#00ff1f 393.5px,#00ff2b 400.5px,#00ff10 402.5px,#14ff00 403.5px,#6bff00 405.5px,#7cff00 407.5px,#77ff00 412.5px,#59ff00 413.5px,#16ff00 414.5px,#00ff1b 415.5px,#00ff0e 426.5px,#0fff00 428.5px,#33ff00 429.5px,#98ff00 430.5px,#deff00 431.5px,#e4ff00 436.5px,#abff00 437.5px,#48ff00 438.5px,#12ff00 439.5px,#00ff0f 441.5px,#00ff2d 444.5px,#00ff42 448.5px,#00ff23 449.5px,#00ff13 454.5px,#05ff00 457.5px,#05ff00 465.5px,#00ff26 467px)"></i><i style="left:257px;width:1px;background:linear-gradient(#00ff7d 0px,#00ff80 16.5px,#00ff58 17.5px,#00ff0f 18.5px,#57ff00 19.5px,#81ff00 21.5px,#9bff00 23.5px,#75ff00 26.5px,#57ff00 27.5px,#00ff10 28.5px,#00ff5a 29.5px,#00ff82 30.5px,#00ff8d 97.5px,#00ff5d 100.5px,#00ff5e 106.5px,#00ff92 110.5px,#00ff8e 132.5px,#00ff7e 137.5px,#00ff98 142.5px,#00ffa0 273.5px,#00ff15 345.5px,#00ff17 393.5px,#00ff1e 401.5px,#00ff13 423.5px,#09ff00 429.5px,#1eff00 433.5px,#26ff00 437.5px,#46ff00 438.5px,#49ff00 439.5px,#15ff00 441.5px,#31ff00 442.5px,#05ff00 444.5px,#00ff16 448.5px,#0bff00 449.5px,#17ff00 454.5px,#0eff00 455.5px,#1dff00 456.5px,#14ff00 465.5px,#00ff22 467px)"></i><i style="left:258px;width:1px;background:linear-gradient(#00ff76 0px,#00ff79 16.5px,#00ff52 17.5px,#00ff0d 18.5px,#57ff00 19.5px,#81ff00 21.5px,#9bff00 23.5px,#75ff00 26.5px,#57ff00 27.5px,#00ff0d 28.5px,#00ff54 29.5px,#00ff7b 30.5px,#00ff86 97.5px,#00ff58 101.5px,#00ff5b 106.5px,#00ff8b 110.5px,#00ff88 132.5px,#00ff7a 137.5px,#00ff91 142.5px,#00ff99 273.5px,#00ff1d 346.5px,#00ff20 393.5px,#00ff27 401.5px,#00ff1b 406.5px,#14ff00 408.5px,#6bff00 410.5px,#7cff00 412.5px,#7cff00 413.5px,#59ff00 414.5px,#00ff0f 415.5px,#00ff1c 419.5px,#00ff14 428.5px,#00ff02 430.5px,#19ff00 431.5px,#4fff00 432.5px,#b1ff00 433.5px,#e5ff00 434.5px,#f4ff00 437.5px,#ffea00 439.5px,#fff800 450.5px,#fff800 454.5px,#e0ff00 455.5px,#37ff00 456.5px,#05ff00 457.5px,#05ff00 465.5px,#00ff27 467px)"></i><i style="left:259px;width:1px;background:linear-gradient(#00ff72 0px,#00ff75 16.5px,#00ff4f 17.5px,#00ff0b 18.5px,#58ff00 19.5px,#81ff00 21.5px,#9bff00 23.5px,#75ff00 26.5px,#58ff00 27.5px,#00ff0c 28.5px,#00ff51 29.5px,#00ff77 30.5px,#00ff82 97.5px,#00ff56 101.5px,#00ff59 106.5px,#00ff87 110.5px,#00ff84 132.5px,#00ff77 137.5px,#00ff8d 143.5px,#00ff95 273.5px,#00ff20 345.5px,#00ff23 393.5px,#00ff2a 401.5px,#00ff19 408.5px,#2fff00 409.5px,#7aff00 410.5px,#70ff00 413.5px,#15ff00 414.5px,#00ff1e 415.5px,#00ff19 429.5px,#0aff00 432.5px,#2cff00 433.5px,#8fff00 434.5px,#dbff00 435.5px,#f6ff00 437.5px,#ffe400 439.5px,#ffe400 454.5px,#fff800 455.5px,#3cff00 456.5px,#00ff00 457.5px,#00ff00 465.5px,#00ff28 467px)"></i><i style="left:260px;width:1px;background:linear-gradient(#00ff7c 0px,#00ff7f 16.5px,#00ff57 17.5px,#00ff0f 18.5px,#57ff00 19.5px,#81ff00 21.5px,#9bff00 23.5px,#75ff00 26.5px,#57ff00 27.5px,#00ff10 28.5px,#00ff59 29.5px,#00ff82 30.5px,#00ff8c 97.5px,#00ff5d 100.5px,#00ff5d 106.5px,#00ff8f 109.5px,#00ff8d 132.5px,#00ff7e 137.5px,#00ff97 142.5px,#00ff9f 272.5px,#00ff0e 343.5px,#00ff0f 393.5px,#00ff17 401.5px,#00ff0b 407.5px,#2aff00 408.5px,#77ff00 409.5px,#7fff00 412.5px,#00ff06 414.5px,#02ff00 432.5px,#2aff00 434.5px,#cbff00 436.5px,#f8ff00 437.5px,#ffe400 439.5px,#ffe400 454.5px,#fff600 455.5px,#23ff00 456.5px,#21ff00 465.5px,#00ff1c 467px)"></i><i style="left:261px;width:1px;background:linear-gradient(#00ff81 0px,#00ff84 16.5px,#00ff5b 17.5px,#00ff11 18.5px,#56ff00 19.5px,#81ff00 21.5px,#9bff00 23.5px,#75ff00 26.5px,#56ff00 27.5px,#00ff12 28.5px,#00ff5d 29.5px,#00ff87 30.5px,#00ff91 97.5px,#00ff5f 100.5px,#00ff5f 106.5px,#00ff93 109.5px,#00ff92 132.5px,#00ff80 136.5px,#00ff9c 142.5px,#00ffa7 236.5px,#00ff56 239.5px,#00ff39 296.5px,#00ff0b 352.5px,#00ff0f 393.5px,#00ff16 401.5px,#05ff00 407.5px,#61ff00 408.5px,#a1ff00 410.5px,#a8ff00 411.5px,#7fff00 412.5px,#2cff00 413.5px,#15ff00 414.5px,#15ff00 426.5px,#00ff0b 429.5px,#02ff00 434.5px,#16ff00 435.5px,#48ff00 436.5px,#c0ff00 437.5px,#ffee00 438.5px,#fff800 454.5px,#e0ff00 455.5px,#3cff00 456.5px,#22ff00 457.5px,#21ff00 465.5px,#00ff11 467px)"></i><i style="left:262px;width:1px;background:linear-gradient(#00ff78 0px,#00ff7a 16.5px,#00ff54 17.5px,#00ff0d 18.5px,#57ff00 19.5px,#81ff00 21.5px,#9bff00 23.5px,#75ff00 26.5px,#57ff00 27.5px,#00ff0e 28.5px,#00ff55 29.5px,#00ff7d 30.5px,#00ff88 97.5px,#00ff59 101.5px,#00ff5b 106.5px,#00ff8d 110.5px,#00ff89 132.5px,#00ff7b 137.5px,#00ff93 143.5px,#00ff9d 236.5px,#00ff51 239.5px,#00ff35 292.5px,#04ff00 346.5px,#00ff08 394.5px,#05ff00 408.5px,#35ff00 409.5px,#fff300 410.5px,#ffe100 412.5px,#ffe100 426.5px,#fff300 427.5px,#35ff00 428.5px,#05ff00 429.5px,#1aff00 436.5px,#28ff00 437.5px,#4cff00 438.5px,#3aff00 446.5px,#1cff00 448.5px,#35ff00 449.5px,#2cff00 455.5px,#3fff00 456.5px,#3bff00 465.5px,#00ff02 467px)"></i><i style="left:263px;width:1px;background:linear-gradient(#00ff78 0px,#00ff7b 16.5px,#00ff54 17.5px,#00ff0e 18.5px,#57ff00 19.5px,#81ff00 21.5px,#9bff00 23.5px,#75ff00 26.5px,#57ff00 27.5px,#00ff0e 28.5px,#00ff56 29.5px,#00ff7e 30.5px,#00ff89 97.5px,#00ff59 101.5px,#00ff5c 106.5px,#00ff8b 109.5px,#00ff8a 132.5px,#00ff7b 137.5px,#00ff93 142.5px,#00ff9c 270.5px,#00ff09 341.5px,#00ff09 393.5px,#00ff11 401.5px,#00ff00 405.5px,#81ff00 407.5px,#82ff00 408.5px,#adff00 409.5px,#ffdb00 410.5px,#ffcc00 412.5px,#ffcc00 426.5px,#ffe200 427.5px,#37ff00 428.5px,#00ff05 429.5px,#09ff00 436.5px,#2bff00 438.5px,#b8ff00 440.5px,#e3ff00 441.5px,#e3ff00 445.5px,#c7ff00 446.5px,#5dff00 447.5px,#1aff00 448.5px,#00ff05 452.5px,#04ff00 454.5px,#2cff00 456.5px,#2cff00 465.5px,#00ff17 467px)"></i><i style="left:264px;width:1px;background:linear-gradient(#00ff71 0px,#00ff74 16.5px,#00ff4f 17.5px,#00ff0b 18.5px,#58ff00 19.5px,#81ff00 21.5px,#9bff00 23.5px,#75ff00 26.5px,#58ff00 27.5px,#00ff0c 28.5px,#00ff51 29.5px,#00ff77 30.5px,#00ff82 97.5px,#00ff56 101.5px,#00ff59 106.5px,#00ff86 110.5px,#00ff84 132.5px,#00ff77 137.5px,#00ff8d 143.5px,#00ff94 272.5px,#00ff28 344.5px,#00ff2b 393.5px,#00ff32 401.5px,#00ff27 408.5px,#05ff00 409.5px,#ffe500 410.5px,#ffcc00 411.5px,#ffcc00 426.5px,#ffe500 427.5px,#05ff00 428.5px,#00ff27 429.5px,#00ff1f 436.5px,#0aff00 438.5px,#30ff00 439.5px,#3fff00 445.5px,#24ff00 447.5px,#0bff00 448.5px,#00ff27 453.5px,#00ff08 457.5px,#00ff08 465.5px,#00ff2e 467px)"></i><i style="left:265px;width:1px;background:linear-gradient(#00ff85 0px,#00ff88 16.5px,#00ff5e 17.5px,#00ff12 18.5px,#56ff00 19.5px,#81ff00 21.5px,#9bff00 23.5px,#75ff00 26.5px,#56ff00 27.5px,#00ff13 28.5px,#00ff60 29.5px,#00ff8a 30.5px,#00ff95 97.5px,#00ff61 100.5px,#00ff61 106.5px,#00ff97 109.5px,#00ff95 132.5px,#00ff82 136.5px,#00ffa0 142.5px,#00ffa8 269.5px,#00ff0f 340.5px,#00ff0f 393.5px,#00ff16 401.5px,#00ff0b 403.5px,#16ff00 404.5px,#69ff00 405.5px,#80ff00 406.5px,#81ff00 409.5px,#fff200 410.5px,#ffe200 412.5px,#ffe200 426.5px,#fff500 427.5px,#24ff00 428.5px,#00ff0b 429.5px,#00ff05 437.5px,#2eff00 439.5px,#19ff00 441.5px,#65ff00 442.5px,#cbff00 443.5px,#e2ff00 444.5px,#d6ff00 448.5px,#59ff00 449.5px,#11ff00 450.5px,#00ff0a 452.5px,#00ff03 454.5px,#22ff00 456.5px,#22ff00 465.5px,#00ff1e 467px)"></i><i style="left:266px;width:1px;background:linear-gradient(#00ff80 0px,#00ff83 16.5px,#00ff5a 17.5px,#00ff10 18.5px,#56ff00 19.5px,#81ff00 21.5px,#9bff00 23.5px,#75ff00 26.5px,#56ff00 27.5px,#00ff11 28.5px,#00ff5c 29.5px,#00ff85 30.5px,#00ff90 97.5px,#00ff5e 100.5px,#00ff5f 106.5px,#00ff92 109.5px,#00ff91 132.5px,#00ff7f 136.5px,#00ff9b 143.5px,#00ffa3 269.5px,#00ff1e 341.5px,#00ff20 393.5px,#00ff27 401.5px,#00ff15 409.5px,#0aff00 410.5px,#16ff00 416.5px,#16ff00 426.5px,#0aff00 427.5px,#00ff1c 429.5px,#00ff19 437.5px,#05ff00 439.5px,#0aff00 441.5px,#3bff00 443.5px,#0aff00 444.5px,#14ff00 449.5px,#00ff0e 451.5px,#00ff14 454.5px,#04ff00 458.5px,#04ff00 465.5px,#00ff29 467px)"></i><i style="left:267px;width:1px;background:linear-gradient(#00ff81 0px,#00ff84 16.5px,#00ff5b 17.5px,#00ff11 18.5px,#56ff00 19.5px,#81ff00 21.5px,#9bff00 23.5px,#75ff00 26.5px,#56ff00 27.5px,#00ff12 28.5px,#00ff5d 29.5px,#00ff87 30.5px,#00ff91 97.5px,#00ff5f 100.5px,#00ff5f 106.5px,#00ff94 109.5px,#00ff92 132.5px,#00ff80 136.5px,#00ff9c 142.5px,#00ffa5 268.5px,#00ff12 339.5px,#00ff12 393.5px,#00ff19 401.5px,#00ff0c 402.5px,#7fff00 404.5px,#76ff00 407.5px,#28ff00 408.5px,#00ff0d 409.5px,#00ff08 412.5px,#25ff00 414.5px,#1bff00 425.5px,#00ff08 426.5px,#00ff0b 437.5px,#0aff00 439.5px,#00ff11 440.5px,#00ff01 441.5px,#67ff00 443.5px,#e1ff00 444.5px,#e2ff00 447.5px,#94ff00 448.5px,#28ff00 449.5px,#07ff00 450.5px,#00ff06 454.5px,#1dff00 457.5px,#1dff00 465.5px,#00ff1f 467px)"></i><i style="left:268px;width:1px;background:linear-gradient(#00ff89 0px,#00ff8b 16.5px,#00ff61 17.5px,#00ff14 18.5px,#56ff00 19.5px,#81ff00 21.5px,#9bff00 23.5px,#75ff00 26.5px,#55ff00 27.5px,#00ff14 28.5px,#00ff63 29.5px,#00ff8e 30.5px,#00ff99 97.5px,#00ff62 100.5px,#00ff63 106.5px,#00ff9b 109.5px,#00ff98 132.5px,#00ff84 136.5px,#00ffa4 142.5px,#00ffab 268.5px,#00ff11 339.5px,#00ff12 393.5px,#00ff19 401.5px,#00ff0e 411.5px,#1bff00 412.5px,#fffe00 413.5px,#ffec00 415.5px,#ffec00 424.5px,#fffe00 425.5px,#1bff00 426.5px,#00ff0e 427.5px,#00ff0b 437.5px,#11ff00 439.5px,#00ff05 440.5px,#39ff00 442.5px,#0cff00 443.5px,#00ff06 454.5px,#1dff00 457.5px,#1dff00 465.5px,#00ff21 467px)"></i><i style="left:269px;width:1px;background:linear-gradient(#00ff79 0px,#00ff7c 16.5px,#00ff55 17.5px,#00ff0e 18.5px,#57ff00 19.5px,#81ff00 21.5px,#9bff00 23.5px,#75ff00 26.5px,#57ff00 27.5px,#00ff0f 28.5px,#00ff57 29.5px,#00ff7f 30.5px,#00ff8a 97.5px,#00ff59 101.5px,#00ff5c 106.5px,#00ff8c 109.5px,#00ff8b 132.5px,#00ff7c 137.5px,#00ff94 142.5px,#00ff9d 268.5px,#00ff28 341.5px,#00ff2b 393.5px,#00ff36 400.5px,#00ff14 401.5px,#5bff00 402.5px,#79ff00 403.5px,#79ff00 405.5px,#43ff00 406.5px,#00ff16 407.5px,#00ff27 409.5px,#00ff27 411.5px,#00ff00 412.5px,#ffef00 413.5px,#ffd800 414.5px,#ffd800 424.5px,#ffef00 425.5px,#00ff00 426.5px,#00ff27 427.5px,#00ff24 437.5px,#00ff02 439.5px,#0dff00 441.5px,#82ff00 442.5px,#e2ff00 443.5px,#e1ff00 446.5px,#0bff00 448.5px,#00ff27 452.5px,#00ff08 457.5px,#00ff08 465.5px,#00ff30 467px)"></i><i style="left:270px;width:1px;background:linear-gradient(#00ff76 0px,#00ff79 16.5px,#00ff53 17.5px,#00ff0d 18.5px,#57ff00 19.5px,#81ff00 21.5px,#9bff00 23.5px,#75ff00 26.5px,#57ff00 27.5px,#00ff0d 28.5px,#00ff54 29.5px,#00ff7b 30.5px,#00ff86 97.5px,#00ff58 101.5px,#00ff5b 106.5px,#00ff8b 110.5px,#00ff88 132.5px,#00ff7a 137.5px,#00ff91 142.5px,#00ff99 268.5px,#00ff13 339.5px,#00ff15 393.5px,#00ff1c 401.5px,#00ff11 411.5px,#20ff00 412.5px,#ffed00 413.5px,#ffd800 414.5px,#ffd800 424.5px,#ffed00 425.5px,#20ff00 426.5px,#00ff11 427.5px,#00ff0f 437.5px,#05ff00 438.5px,#24ff00 439.5px,#24ff00 440.5px,#3cff00 441.5px,#0bff00 442.5px,#0bff00 446.5px,#1bff00 447.5px,#00ff0e 448.5px,#00ff09 454.5px,#17ff00 457.5px,#17ff00 465.5px,#00ff1f 467px)"></i><i style="left:271px;width:1px;background:linear-gradient(#00ff81 0px,#00ff83 16.5px,#00ff5b 17.5px,#00ff11 18.5px,#56ff00 19.5px,#81ff00 21.5px,#9bff00 23.5px,#75ff00 26.5px,#56ff00 27.5px,#00ff11 28.5px,#00ff5c 29.5px,#00ff86 30.5px,#00ff91 97.5px,#00ff5f 100.5px,#00ff5f 106.5px,#00ff93 109.5px,#00ff91 132.5px,#00ff7f 136.5px,#00ff9c 142.5px,#00ffa3 267.5px,#00ff14 338.5px,#00ff15 393.5px,#00ff1b 399.5px,#3bff00 400.5px,#7eff00 401.5px,#75ff00 404.5px,#24ff00 405.5px,#00ff11 406.5px,#00ff11 411.5px,#16ff00 412.5px,#fffe00 413.5px,#ffed00 415.5px,#ffed00 424.5px,#fffe00 425.5px,#16ff00 426.5px,#00ff11 427.5px,#00ff0d 437.5px,#0eff00 438.5px,#32ff00 439.5px,#1fff00 440.5px,#a2ff00 441.5px,#e2ff00 442.5px,#dcff00 445.5px,#50ff00 446.5px,#15ff00 447.5px,#00ff1c 448.5px,#09ff00 455.5px,#17ff00 458.5px,#17ff00 465.5px,#00ff22 467px)"></i><i style="left:272px;width:1px;background:linear-gradient(#00ff6f 0px,#00ff72 16.5px,#00ff4d 17.5px,#00ff0a 18.5px,#58ff00 19.5px,#81ff00 21.5px,#9bff00 23.5px,#75ff00 26.5px,#58ff00 27.5px,#00ff0b 28.5px,#00ff4f 29.5px,#00ff74 30.5px,#00ff80 97.5px,#00ff55 101.5px,#00ff64 107.5px,#00ff84 110.5px,#00ff82 132.5px,#00ff76 137.5px,#00ff8a 143.5px,#00ff91 267.5px,#00ff05 338.5px,#00ff06 393.5px,#00ff11 397.5px,#3fff00 399.5px,#7aff00 400.5px,#82ff00 403.5px,#03ff00 405.5px,#04ff00 412.5px,#2cff00 413.5px,#36ff00 424.5px,#2cff00 425.5px,#04ff00 426.5px,#07ff00 437.5px,#21ff00 439.5px,#66ff00 440.5px,#dfff00 441.5px,#e3ff00 444.5px,#9bff00 445.5px,#19ff00 446.5px,#00ff07 447.5px,#00ff24 448.5px,#00ff02 450.5px,#09ff00 454.5px,#31ff00 456.5px,#31ff00 465.5px,#00ff12 467px)"></i><i style="left:273px;width:1px;background:linear-gradient(#00ff74 0px,#00ff76 16.5px,#00ff51 17.5px,#00ff0c 18.5px,#58ff00 19.5px,#81ff00 21.5px,#9bff00 23.5px,#75ff00 26.5px,#57ff00 27.5px,#00ff0c 28.5px,#00ff52 29.5px,#00ff79 30.5px,#00ff84 97.5px,#00ff57 101.5px,#00ff5a 106.5px,#00ff89 110.5px,#00ff86 132.5px,#00ff79 137.5px,#00ff8f 143.5px,#00ff96 267.5px,#00ff1e 339.5px,#00ff21 393.5px,#00ff2a 395.5px,#00ff16 396.5px,#29ff00 397.5px,#5dff00 398.5px,#7aff00 399.5px,#7cff00 402.5px,#4aff00 403.5px,#00ff0d 404.5px,#00ff1d 406.5px,#00ff19 436.5px,#00ff0a 437.5px,#35ff00 439.5px,#bcff00 440.5px,#e2ff00 441.5px,#e2ff00 443.5px,#cdff00 444.5px,#2eff00 445.5px,#1cff00 446.5px,#00ff1b 447.5px,#00ff39 448.5px,#00ff1d 450.5px,#00ff15 454.5px,#03ff00 457.5px,#03ff00 465.5px,#00ff27 467px)"></i><i style="left:274px;width:1px;background:linear-gradient(#00ff75 0px,#00ff78 16.5px,#00ff52 17.5px,#00ff0c 18.5px,#57ff00 19.5px,#81ff00 21.5px,#9bff00 23.5px,#75ff00 26.5px,#57ff00 27.5px,#00ff0d 28.5px,#00ff54 29.5px,#00ff7b 30.5px,#00ff86 97.5px,#00ff58 101.5px,#00ff5a 106.5px,#00ff8a 110.5px,#00ff87 132.5px,#00ff79 137.5px,#00ff90 142.5px,#00ff99 265.5px,#00ff08 337.5px,#00ff06 393.5px,#44ff00 395.5px,#82ff00 397.5px,#82ff00 401.5px,#6cff00 402.5px,#1dff00 403.5px,#00ff05 404.5px,#01ff00 436.5px,#2bff00 438.5px,#9cff00 439.5px,#e3ff00 440.5px,#e3ff00 443.5px,#0dff00 445.5px,#01ff00 446.5px,#00ff37 448.5px,#00ff0f 449.5px,#04ff00 454.5px,#2cff00 456.5px,#2cff00 465.5px,#00ff16 467px)"></i><i style="left:275px;width:1px;background:linear-gradient(#00ff77 0px,#00ff7a 16.5px,#00ff53 17.5px,#00ff0d 18.5px,#57ff00 19.5px,#81ff00 21.5px,#9bff00 23.5px,#75ff00 26.5px,#57ff00 27.5px,#00ff0e 28.5px,#00ff55 29.5px,#00ff7d 30.5px,#00ff87 97.5px,#00ff59 101.5px,#00ff5b 106.5px,#00ff8a 109.5px,#00ff89 132.5px,#00ff7b 137.5px,#00ff92 142.5px,#00ff9a 266.5px,#00ff1d 338.5px,#00ff17 391.5px,#00ff01 392.5px,#65ff00 394.5px,#7cff00 395.5px,#7aff00 400.5px,#5aff00 401.5px,#15ff00 402.5px,#00ff1b 403.5px,#00ff16 435.5px,#0cff00 437.5px,#58ff00 438.5px,#d5ff00 439.5px,#e2ff00 442.5px,#baff00 443.5px,#25ff00 444.5px,#00ff12 446.5px,#00ff35 447.5px,#00ff42 448.5px,#00ff23 449.5px,#00ff14 454.5px,#04ff00 458.5px,#04ff00 465.5px,#00ff27 467px)"></i><i style="left:276px;width:1px;background:linear-gradient(#00ff73 0px,#00ff75 16.5px,#00ff50 17.5px,#00ff0b 18.5px,#58ff00 19.5px,#81ff00 21.5px,#9bff00 23.5px,#75ff00 26.5px,#58ff00 27.5px,#00ff0c 28.5px,#00ff52 29.5px,#00ff78 30.5px,#00ff83 97.5px,#00ff57 101.5px,#00ff59 106.5px,#00ff87 110.5px,#00ff85 132.5px,#00ff78 137.5px,#00ff8e 143.5px,#00ff95 266.5px,#00ff14 337.5px,#00ff0d 389.5px,#0fff00 390.5px,#6dff00 392.5px,#7eff00 394.5px,#7bff00 398.5px,#00ff0e 401.5px,#00ff08 435.5px,#05ff00 436.5px,#2dff00 437.5px,#b0ff00 438.5px,#e6ff00 439.5px,#deff00 442.5px,#5bff00 443.5px,#00ff03 445.5px,#00ff39 447.5px,#00ff3e 448.5px,#00ff1b 449.5px,#07ff00 455.5px,#15ff00 458.5px,#15ff00 465.5px,#00ff1f 467px)"></i><i style="left:277px;width:1px;background:linear-gradient(#00ff86 0px,#00ff88 16.5px,#00ff5e 17.5px,#00ff12 18.5px,#56ff00 19.5px,#81ff00 21.5px,#9bff00 23.5px,#75ff00 26.5px,#56ff00 27.5px,#00ff13 28.5px,#00ff60 29.5px,#00ff8b 30.5px,#00ff95 97.5px,#00ff61 100.5px,#00ff61 106.5px,#00ff98 109.5px,#00ff95 132.5px,#00ff82 136.5px,#00ffa0 142.5px,#00ffa9 264.5px,#00ff1b 336.5px,#00ff1c 393.5px,#00ff24 401.5px,#00ff18 413.5px,#00ff11 434.5px,#1cff00 438.5px,#0aff00 442.5px,#31ff00 443.5px,#0aff00 444.5px,#00ff3c 447.5px,#00ff41 448.5px,#00ff20 449.5px,#00ff10 454.5px,#0aff00 458.5px,#0aff00 465.5px,#00ff28 467px)"></i><i style="left:278px;width:1px;background:linear-gradient(#00ff75 0px,#00ff78 16.5px,#00ff52 17.5px,#00ff0c 18.5px,#57ff00 19.5px,#81ff00 21.5px,#9bff00 23.5px,#75ff00 26.5px,#57ff00 27.5px,#00ff0d 28.5px,#00ff54 29.5px,#00ff7b 30.5px,#00ff86 97.5px,#00ff58 101.5px,#00ff5a 106.5px,#00ff8a 110.5px,#00ff87 132.5px,#00ff7a 137.5px,#00ff91 143.5px,#00ff99 263.5px,#00ff00 334.5px,#00ff08 394.5px,#10ff00 434.5px,#26ff00 438.5px,#0dff00 441.5px,#3fff00 442.5px,#00ff03 444.5px,#00ff33 447.5px,#00ff35 448.5px,#00ff07 449.5px,#05ff00 453.5px,#3cff00 456.5px,#3cff00 465.5px,#00ff0f 467px)"></i><i style="left:279px;width:1px;background:linear-gradient(#00ff76 0px,#00ff78 16.5px,#00ff52 17.5px,#00ff0c 18.5px,#57ff00 19.5px,#81ff00 21.5px,#9bff00 23.5px,#75ff00 26.5px,#57ff00 27.5px,#00ff0d 28.5px,#00ff54 29.5px,#00ff7b 30.5px,#00ff86 97.5px,#00ff58 101.5px,#00ff5a 106.5px,#00ff8a 110.5px,#00ff87 132.5px,#00ff7a 137.5px,#00ff91 143.5px,#00ff99 263.5px,#00ff0a 335.5px,#02ff00 383.5px,#79ff00 386.5px,#79ff00 392.5px,#00ff0e 395.5px,#00ff13 401.5px,#12ff00 405.5px,#0dff00 412.5px,#00ff07 416.5px,#01ff00 433.5px,#28ff00 435.5px,#99ff00 436.5px,#e8ff00 437.5px,#e3ff00 440.5px,#87ff00 441.5px,#11ff00 442.5px,#00ff13 444.5px,#00ff3a 448.5px,#00ff11 449.5px,#00ff00 454.5px,#29ff00 456.5px,#29ff00 465.5px,#00ff17 467px)"></i><i style="left:280px;width:1px;background:linear-gradient(#00ff89 0px,#00ff8c 16.5px,#00ff61 17.5px,#00ff14 18.5px,#56ff00 19.5px,#81ff00 21.5px,#9bff00 23.5px,#75ff00 26.5px,#55ff00 27.5px,#00ff15 28.5px,#00ff63 29.5px,#00ff8e 30.5px,#00ff99 97.5px,#00ff62 100.5px,#00ff63 106.5px,#00ff9b 109.5px,#00ff99 132.5px,#00ff84 136.5px,#00ffa4 142.5px,#00ffab 262.5px,#00ff43 301.5px,#09ff00 329.5px,#1bff00 354.5px,#1bff00 401.5px,#30ff00 402.5px,#8fff00 403.5px,#a5ff00 404.5px,#a5ff00 411.5px,#8fff00 412.5px,#30ff00 413.5px,#1bff00 414.5px,#26ff00 439.5px,#13ff00 440.5px,#3dff00 441.5px,#00ff05 443.5px,#00ff2f 447.5px,#00ff30 448.5px,#05ff00 449.5px,#1bff00 450.5px,#1bff00 465.5px,#00ff0b 467px)"></i><i style="left:281px;width:1px;background:linear-gradient(#00ff78 0px,#00ff7a 16.5px,#00ff54 17.5px,#00ff0d 18.5px,#57ff00 19.5px,#81ff00 21.5px,#9bff00 23.5px,#75ff00 26.5px,#57ff00 27.5px,#00ff0e 28.5px,#00ff55 29.5px,#00ff7d 30.5px,#00ff88 97.5px,#00ff59 101.5px,#00ff5b 106.5px,#00ff8d 110.5px,#00ff89 132.5px,#00ff7b 137.5px,#00ff93 143.5px,#00ff9a 263.5px,#00ff09 334.5px,#09ff00 379.5px,#7dff00 382.5px,#82ff00 387.5px,#75ff00 388.5px,#00ff00 391.5px,#00ff16 398.5px,#00ff12 401.5px,#14ff00 402.5px,#9fff00 403.5px,#bfff00 404.5px,#bfff00 411.5px,#9fff00 412.5px,#14ff00 413.5px,#00ff06 415.5px,#0bff00 429.5px,#2cff00 432.5px,#e8ff00 436.5px,#e6ff00 439.5px,#6fff00 440.5px,#00ff00 442.5px,#00ff25 444.5px,#00ff39 448.5px,#00ff10 449.5px,#02ff00 454.5px,#2aff00 456.5px,#2aff00 465.5px,#00ff17 467px)"></i><i style="left:282px;width:1px;background:linear-gradient(#00ff7d 0px,#00ff7f 16.5px,#00ff57 17.5px,#00ff0f 18.5px,#57ff00 19.5px,#81ff00 21.5px,#9bff00 23.5px,#75ff00 26.5px,#57ff00 27.5px,#00ff10 28.5px,#00ff59 29.5px,#00ff82 30.5px,#00ff8d 97.5px,#00ff5d 100.5px,#00ff5d 106.5px,#00ff8f 109.5px,#00ff8e 132.5px,#00ff7e 137.5px,#00ff98 142.5px,#00ff9f 262.5px,#00ff08 332.5px,#00ff02 376.5px,#10ff00 377.5px,#64ff00 379.5px,#7fff00 380.5px,#82ff00 385.5px,#73ff00 386.5px,#00ff00 389.5px,#00ff13 400.5px,#12ff00 402.5px,#86ff00 403.5px,#a0ff00 404.5px,#a0ff00 411.5px,#86ff00 412.5px,#12ff00 413.5px,#00ff04 415.5px,#0bff00 426.5px,#28ff00 429.5px,#7fff00 431.5px,#d7ff00 433.5px,#e8ff00 435.5px,#e8ff00 438.5px,#bfff00 439.5px,#24ff00 440.5px,#00ff0d 442.5px,#00ff26 444.5px,#00ff38 448.5px,#00ff0e 449.5px,#06ff00 454.5px,#2fff00 456.5px,#2fff00 465.5px,#00ff17 467px)"></i><i style="left:283px;width:1px;background:linear-gradient(#00ff74 0px,#00ff77 16.5px,#00ff51 17.5px,#00ff0c 18.5px,#58ff00 19.5px,#81ff00 21.5px,#9bff00 23.5px,#75ff00 26.5px,#57ff00 27.5px,#00ff0d 28.5px,#00ff53 29.5px,#00ff79 30.5px,#00ff84 97.5px,#00ff57 101.5px,#00ff5a 106.5px,#00ff89 110.5px,#00ff86 132.5px,#00ff79 137.5px,#00ff8f 143.5px,#00ff96 262.5px,#00ff07 332.5px,#00ff08 393.5px,#00ff0f 401.5px,#17ff00 406.5px,#12ff00 412.5px,#00ff04 414.5px,#09ff00 423.5px,#23ff00 432.5px,#1eff00 439.5px,#2aff00 440.5px,#00ff03 441.5px,#00ff25 443.5px,#00ff38 448.5px,#00ff0e 449.5px,#06ff00 454.5px,#2eff00 456.5px,#2eff00 465.5px,#00ff15 467px)"></i><i style="left:284px;width:1px;background:linear-gradient(#00ff7e 0px,#00ff81 16.5px,#00ff59 17.5px,#00ff10 18.5px,#57ff00 19.5px,#81ff00 21.5px,#9bff00 23.5px,#75ff00 26.5px,#56ff00 27.5px,#00ff10 28.5px,#00ff5a 29.5px,#00ff83 30.5px,#00ff8e 97.5px,#00ff5b 101.5px,#00ff5e 106.5px,#00ff90 109.5px,#00ff8f 132.5px,#00ff7f 137.5px,#00ff99 142.5px,#00ffa4 226.5px,#00ff54 229.5px,#00ff37 286.5px,#00ff08 341.5px,#00ff01 371.5px,#11ff00 372.5px,#76ff00 375.5px,#7dff00 381.5px,#65ff00 382.5px,#06ff00 384.5px,#00ff17 400.5px,#00ff08 408.5px,#07ff00 422.5px,#25ff00 424.5px,#49ff00 425.5px,#b9ff00 427.5px,#ddff00 428.5px,#e7ff00 436.5px,#ddff00 437.5px,#9eff00 438.5px,#25ff00 439.5px,#27ff00 440.5px,#00ff01 442.5px,#00ff12 447.5px,#00ff1b 448.5px,#00ff08 451.5px,#00ff00 454.5px,#28ff00 456.5px,#27ff00 465.5px,#00ff0e 467px)"></i><i style="left:285px;width:1px;background:linear-gradient(#00ff58 0px,#00ff49 5.5px,#00ff49 16.5px,#08ff00 18.5px,#5cff00 19.5px,#9bff00 23.5px,#5cff00 27.5px,#08ff00 28.5px,#00ff4a 30.5px,#00ff45 99.5px,#00ff55 226.5px,#00ff28 230.5px,#00ff0a 324.5px,#00ff08 393.5px,#00ff10 401.5px,#00ff04 413.5px,#15ff00 421.5px,#18ff00 438.5px,#3aff00 439.5px,#0eff00 441.5px,#00ff09 447.5px,#00ff14 448.5px,#05ff00 454.5px,#2dff00 456.5px,#2dff00 465.5px,#00ff08 467px)"></i><i style="left:286px;width:1px;background:linear-gradient(#00ff57 0px,#00ff48 3.5px,#00ff48 16.5px,#09ff00 18.5px,#5cff00 19.5px,#9bff00 23.5px,#5cff00 27.5px,#08ff00 28.5px,#00ff49 30.5px,#00ff45 99.5px,#00ff4a 108.5px,#00ff4e 270.5px,#00ff1a 315.5px,#03ff00 342.5px,#00ff09 394.5px,#11ff00 415.5px,#26ff00 426.5px,#17ff00 438.5px,#36ff00 439.5px,#00ff0e 440.5px,#00ff25 447.5px,#00ff2f 448.5px,#00ff08 449.5px,#03ff00 453.5px,#39ff00 456.5px,#39ff00 465.5px,#00ff11 467px)"></i><i style="left:287px;width:1px;background:linear-gradient(#00ff82 0px,#00ff84 16.5px,#00ff5c 17.5px,#00ff11 18.5px,#56ff00 19.5px,#81ff00 21.5px,#9bff00 23.5px,#75ff00 26.5px,#56ff00 27.5px,#00ff12 28.5px,#00ff5d 29.5px,#00ff87 30.5px,#00ff92 97.5px,#00ff5f 100.5px,#00ff60 106.5px,#00ff94 109.5px,#00ff92 132.5px,#00ff80 136.5px,#00ff9d 142.5px,#00ffa4 260.5px,#00ff15 332.5px,#00ff11 361.5px,#14ff00 363.5px,#77ff00 366.5px,#77ff00 374.5px,#00ff06 378.5px,#00ff13 384.5px,#00ff1e 394.5px,#00ff17 402.5px,#05ff00 414.5px,#26ff00 416.5px,#86ff00 418.5px,#ddff00 420.5px,#e7ff00 428.5px,#ddff00 429.5px,#86ff00 431.5px,#26ff00 433.5px,#00ff01 436.5px,#0aff00 439.5px,#00ff21 440.5px,#00ff3a 447.5px,#00ff3f 448.5px,#00ff1b 449.5px,#06ff00 455.5px,#14ff00 458.5px,#14ff00 465.5px,#00ff23 467px)"></i><i style="left:288px;width:1px;background:linear-gradient(#00ff76 0px,#00ff78 16.5px,#00ff52 17.5px,#00ff0c 18.5px,#57ff00 19.5px,#81ff00 21.5px,#9bff00 23.5px,#75ff00 26.5px,#57ff00 27.5px,#00ff0d 28.5px,#00ff54 29.5px,#00ff7b 30.5px,#00ff86 97.5px,#00ff58 101.5px,#00ff5a 106.5px,#00ff8a 110.5px,#00ff87 132.5px,#00ff7a 137.5px,#00ff91 143.5px,#00ff98 260.5px,#00ff0e 331.5px,#00ff0a 358.5px,#00ff00 359.5px,#79ff00 363.5px,#79ff00 371.5px,#00ff00 375.5px,#00ff0c 387.5px,#00ff17 401.5px,#0bff00 411.5px,#24ff00 413.5px,#42ff00 414.5px,#d5ff00 417.5px,#e8ff00 419.5px,#e4ff00 426.5px,#9dff00 428.5px,#30ff00 430.5px,#00ff00 434.5px,#0cff00 439.5px,#00ff1f 440.5px,#00ff2a 446.5px,#00ff3c 448.5px,#00ff15 449.5px,#00ff04 454.5px,#20ff00 456.5px,#20ff00 465.5px,#00ff1b 467px)"></i><i style="left:289px;width:1px;background:linear-gradient(#00ff7b 0px,#00ff7e 16.5px,#00ff57 17.5px,#00ff0f 18.5px,#57ff00 19.5px,#81ff00 21.5px,#9bff00 23.5px,#75ff00 26.5px,#57ff00 27.5px,#00ff0f 28.5px,#00ff58 29.5px,#00ff81 30.5px,#00ff8c 97.5px,#00ff5c 100.5px,#00ff5d 106.5px,#00ff8e 109.5px,#00ff8d 132.5px,#00ff7d 137.5px,#00ff96 142.5px,#00ff9e 259.5px,#00ff11 330.5px,#00ff0d 355.5px,#00ff02 356.5px,#78ff00 360.5px,#78ff00 368.5px,#00ff02 372.5px,#00ff0e 384.5px,#00ff1a 394.5px,#00ff12 401.5px,#08ff00 406.5px,#3eff00 411.5px,#c9ff00 414.5px,#e4ff00 415.5px,#e7ff00 423.5px,#d5ff00 424.5px,#3fff00 427.5px,#07ff00 430.5px,#00ff0c 437.5px,#08ff00 439.5px,#00ff20 440.5px,#00ff38 447.5px,#00ff3d 448.5px,#00ff17 449.5px,#00ff06 454.5px,#1cff00 457.5px,#1cff00 465.5px,#00ff1e 467px)"></i><i style="left:290px;width:1px;background:linear-gradient(#00ff76 0px,#00ff79 16.5px,#00ff53 17.5px,#00ff0d 18.5px,#57ff00 19.5px,#81ff00 21.5px,#9bff00 23.5px,#75ff00 26.5px,#57ff00 27.5px,#00ff0d 28.5px,#00ff54 29.5px,#00ff7c 30.5px,#00ff87 97.5px,#00ff58 101.5px,#00ff5b 106.5px,#00ff8b 110.5px,#00ff88 132.5px,#00ff7a 137.5px,#00ff92 143.5px,#00ff99 258.5px,#00ff09 330.5px,#07ff00 353.5px,#7bff00 357.5px,#7bff00 365.5px,#07ff00 369.5px,#00ff0b 399.5px,#2cff00 405.5px,#cfff00 411.5px,#e8ff00 414.5px,#dfff00 421.5px,#8fff00 423.5px,#2cff00 425.5px,#04ff00 429.5px,#00ff04 437.5px,#14ff00 439.5px,#00ff27 441.5px,#00ff29 446.5px,#00ff39 448.5px,#00ff10 449.5px,#01ff00 454.5px,#29ff00 456.5px,#29ff00 465.5px,#00ff17 467px)"></i><i style="left:291px;width:1px;background:linear-gradient(#00ff7f 0px,#00ff81 16.5px,#00ff59 17.5px,#00ff10 18.5px,#57ff00 19.5px,#81ff00 21.5px,#9bff00 23.5px,#75ff00 26.5px,#56ff00 27.5px,#00ff11 28.5px,#00ff5b 29.5px,#00ff84 30.5px,#00ff8f 97.5px,#00ff5e 100.5px,#00ff5e 106.5px,#00ff91 109.5px,#00ff90 132.5px,#00ff7e 136.5px,#00ff9a 143.5px,#00ffa2 258.5px,#00ff16 329.5px,#00ff11 349.5px,#00ff06 350.5px,#3bff00 352.5px,#77ff00 354.5px,#77ff00 362.5px,#00ff06 366.5px,#00ff13 374.5px,#00ff0b 397.5px,#2fff00 401.5px,#c9ff00 406.5px,#e7ff00 409.5px,#e3ff00 418.5px,#99ff00 420.5px,#2cff00 422.5px,#00ff00 425.5px,#00ff13 436.5px,#01ff00 439.5px,#00ff22 440.5px,#00ff3e 448.5px,#00ff1b 449.5px,#06ff00 455.5px,#14ff00 458.5px,#14ff00 465.5px,#00ff22 467px)"></i><i style="left:292px;width:1px;background:linear-gradient(#00ff72 0px,#00ff74 16.5px,#00ff4f 17.5px,#00ff0b 18.5px,#58ff00 19.5px,#81ff00 21.5px,#9bff00 23.5px,#75ff00 26.5px,#58ff00 27.5px,#00ff0c 28.5px,#00ff51 29.5px,#00ff77 30.5px,#00ff82 97.5px,#00ff56 101.5px,#00ff59 106.5px,#00ff86 110.5px,#00ff84 132.5px,#00ff77 137.5px,#00ff8d 143.5px,#00ff94 258.5px,#00ff12 329.5px,#00ff0f 346.5px,#00ff03 347.5px,#78ff00 351.5px,#78ff00 359.5px,#00ff03 363.5px,#00ff10 371.5px,#10ff00 376.5px,#29ff00 390.5px,#50ff00 396.5px,#d9ff00 402.5px,#e7ff00 409.5px,#e7ff00 415.5px,#d4ff00 416.5px,#3dff00 419.5px,#05ff00 422.5px,#00ff10 436.5px,#05ff00 439.5px,#00ff21 440.5px,#00ff3d 448.5px,#00ff19 449.5px,#0bff00 455.5px,#19ff00 458.5px,#19ff00 465.5px,#00ff1d 467px)"></i><i style="left:293px;width:1px;background:linear-gradient(#00ff76 0px,#00ff78 16.5px,#00ff52 17.5px,#00ff0c 18.5px,#57ff00 19.5px,#81ff00 21.5px,#9bff00 23.5px,#75ff00 26.5px,#57ff00 27.5px,#00ff0d 28.5px,#00ff54 29.5px,#00ff7b 30.5px,#00ff86 97.5px,#00ff58 101.5px,#00ff5a 106.5px,#00ff8a 110.5px,#00ff87 132.5px,#00ff7a 137.5px,#00ff91 143.5px,#00ff98 257.5px,#00ff0d 329.5px,#00ff0b 345.5px,#62ff00 347.5px,#80ff00 349.5px,#79ff00 356.5px,#00ff00 360.5px,#00ff0b 371.5px,#11ff00 372.5px,#b5ff00 373.5px,#dbff00 374.5px,#efff00 393.5px,#feff00 399.5px,#e8ff00 401.5px,#deff00 413.5px,#8bff00 415.5px,#2aff00 417.5px,#00ff00 421.5px,#00ff09 437.5px,#0dff00 439.5px,#00ff1f 440.5px,#00ff3b 448.5px,#00ff14 449.5px,#00ff03 454.5px,#21ff00 456.5px,#21ff00 465.5px,#00ff1a 467px)"></i><i style="left:294px;width:1px;background:linear-gradient(#00ff7c 0px,#00ff7f 16.5px,#00ff57 17.5px,#00ff0f 18.5px,#57ff00 19.5px,#81ff00 21.5px,#9bff00 23.5px,#75ff00 26.5px,#57ff00 27.5px,#00ff10 28.5px,#00ff59 29.5px,#00ff81 30.5px,#00ff8c 97.5px,#00ff5a 101.5px,#00ff5d 106.5px,#00ff91 110.5px,#00ff8d 132.5px,#00ff7e 137.5px,#00ff97 142.5px,#00ff9e 257.5px,#00ff10 328.5px,#00ff0d 344.5px,#00ff02 345.5px,#61ff00 346.5px,#80ff00 347.5px,#79ff00 353.5px,#00ff01 357.5px,#00ff0d 369.5px,#00ff0c 371.5px,#17ff00 372.5px,#dbff00 373.5px,#fffc00 374.5px,#fffd00 399.5px,#e8ff00 401.5px,#e1ff00 408.5px,#9fff00 411.5px,#60ff00 413.5px,#2fff00 414.5px,#00ff00 418.5px,#00ff0d 436.5px,#0aff00 439.5px,#00ff1f 440.5px,#00ff3c 448.5px,#00ff16 449.5px,#00ff05 454.5px,#1eff00 457.5px,#1eff00 465.5px,#00ff1d 467px)"></i><i style="left:295px;width:1px;background:linear-gradient(#00ff75 0px,#00ff78 16.5px,#00ff52 17.5px,#00ff0c 18.5px,#57ff00 19.5px,#81ff00 21.5px,#9bff00 23.5px,#75ff00 26.5px,#57ff00 27.5px,#00ff0d 28.5px,#00ff54 29.5px,#00ff7b 30.5px,#00ff86 97.5px,#00ff58 101.5px,#00ff5a 106.5px,#00ff8a 110.5px,#00ff87 132.5px,#00ff79 137.5px,#00ff90 142.5px,#00ff98 257.5px,#00ff1a 329.5px,#00ff0f 371.5px,#16ff00 372.5px,#dbff00 373.5px,#fffc00 374.5px,#fffc00 398.5px,#e2ff00 399.5px,#41ff00 400.5px,#1cff00 401.5px,#09ff00 412.5px,#00ff19 425.5px,#00ff16 437.5px,#00ff04 439.5px,#00ff24 440.5px,#00ff2e 446.5px,#00ff41 448.5px,#00ff21 449.5px,#00ff11 454.5px,#09ff00 457.5px,#09ff00 465.5px,#00ff25 467px)"></i><i style="left:296px;width:1px;background:linear-gradient(#00ff70 0px,#00ff73 16.5px,#00ff4e 17.5px,#00ff0a 18.5px,#58ff00 19.5px,#81ff00 21.5px,#9bff00 23.5px,#75ff00 26.5px,#58ff00 27.5px,#00ff0b 28.5px,#00ff50 29.5px,#00ff75 30.5px,#00ff81 97.5px,#00ff56 101.5px,#00ff58 106.5px,#00ff85 110.5px,#00ff83 132.5px,#00ff76 137.5px,#00ff8b 143.5px,#00ff93 256.5px,#00ff06 327.5px,#00ff03 345.5px,#66ff00 347.5px,#66ff00 348.5px,#0dff00 351.5px,#00ff03 355.5px,#10ff00 370.5px,#12ff00 371.5px,#3cff00 372.5px,#e2ff00 373.5px,#fffc00 374.5px,#fffe00 399.5px,#adff00 401.5px,#39ff00 405.5px,#0dff00 411.5px,#00ff03 428.5px,#00ff01 437.5px,#1aff00 439.5px,#00ff1b 440.5px,#00ff38 448.5px,#00ff0d 449.5px,#07ff00 454.5px,#30ff00 456.5px,#30ff00 465.5px,#00ff13 467px)"></i><i style="left:297px;width:1px;background:linear-gradient(#00ff6c 0px,#00ff6e 16.5px,#00ff4a 17.5px,#00ff09 18.5px,#58ff00 19.5px,#81ff00 21.5px,#9bff00 23.5px,#75ff00 26.5px,#58ff00 27.5px,#00ff09 28.5px,#00ff4c 29.5px,#00ff71 30.5px,#00ff7c 97.5px,#00ff54 101.5px,#00ff62 107.5px,#00ff81 110.5px,#00ff7f 132.5px,#00ff79 138.5px,#00ff89 154.5px,#00ff8d 258.5px,#00ff1f 329.5px,#00ff1e 346.5px,#00ff11 348.5px,#00ff1d 355.5px,#03ff00 367.5px,#2dff00 371.5px,#66ff00 372.5px,#eeff00 373.5px,#fffc00 375.5px,#fffc00 398.5px,#e7ff00 399.5px,#4bff00 400.5px,#1dff00 401.5px,#00ff05 405.5px,#00ff1e 420.5px,#00ff1c 437.5px,#00ff09 439.5px,#00ff26 440.5px,#00ff3d 447.5px,#00ff43 448.5px,#00ff25 449.5px,#00ff16 454.5px,#00ff00 457.5px,#00ff00 465.5px,#00ff26 467px)"></i><i style="left:298px;width:1px;background:linear-gradient(#00ff88 0px,#00ff8a 16.5px,#00ff60 17.5px,#00ff13 18.5px,#56ff00 19.5px,#81ff00 21.5px,#9bff00 23.5px,#75ff00 26.5px,#56ff00 27.5px,#00ff14 28.5px,#00ff62 29.5px,#00ff8d 30.5px,#00ff97 97.5px,#00ff62 100.5px,#00ff62 106.5px,#00ff9a 109.5px,#00ff97 132.5px,#00ff83 136.5px,#00ffa2 142.5px,#00ffaa 255.5px,#00ff20 326.5px,#00ff12 355.5px,#08ff00 362.5px,#37ff00 366.5px,#fffd00 373.5px,#fffc00 398.5px,#deff00 399.5px,#23ff00 400.5px,#00ff13 401.5px,#00ff1b 437.5px,#00ff08 439.5px,#00ff26 440.5px,#00ff3d 447.5px,#00ff43 448.5px,#00ff24 449.5px,#00ff15 454.5px,#02ff00 457.5px,#02ff00 465.5px,#00ff2c 467px)"></i><i style="left:299px;width:1px;background:linear-gradient(#00ff73 0px,#00ff76 16.5px,#00ff50 17.5px,#00ff0c 18.5px,#58ff00 19.5px,#81ff00 21.5px,#9bff00 23.5px,#75ff00 26.5px,#57ff00 27.5px,#00ff0c 28.5px,#00ff52 29.5px,#00ff79 30.5px,#00ff84 97.5px,#00ff57 101.5px,#00ff59 106.5px,#00ff88 110.5px,#00ff85 132.5px,#00ff78 137.5px,#00ff8e 143.5px,#00ff95 256.5px,#00ff20 327.5px,#00ff16 353.5px,#0aff00 358.5px,#1aff00 371.5px,#39ff00 372.5px,#c3ff00 373.5px,#e2ff00 374.5px,#daff00 398.5px,#b2ff00 399.5px,#00ff0d 400.5px,#00ff22 401.5px,#00ff1c 437.5px,#00ff09 439.5px,#00ff26 440.5px,#00ff3d 447.5px,#00ff43 448.5px,#00ff25 449.5px,#00ff16 454.5px,#00ff00 457.5px,#00ff00 463.5px,#0cff00 464.5px,#32ff00 465.5px,#2fff00 467px)"></i><i style="left:300px;width:1px;background:linear-gradient(#00ff6d 0px,#00ff6b 16.5px,#00ff48 17.5px,#00ff08 18.5px,#59ff00 19.5px,#81ff00 21.5px,#9bff00 23.5px,#75ff00 26.5px,#58ff00 27.5px,#00ff08 28.5px,#00ff4a 29.5px,#00ff6e 30.5px,#00ff78 97.5px,#00ff52 101.5px,#00ff60 107.5px,#00ff7c 110.5px,#00ff7b 132.5px,#00ff76 138.5px,#00ff85 160.5px,#00ff87 256.5px,#00ff00 324.5px,#0bff00 352.5px,#2cff00 357.5px,#33ff00 372.5px,#4fff00 374.5px,#38ff00 394.5px,#29ff00 399.5px,#00ff07 401.5px,#0bff00 437.5px,#28ff00 439.5px,#00ff11 440.5px,#00ff2d 448.5px,#00ff05 449.5px,#15ff00 454.5px,#3dff00 456.5px,#3dff00 460.5px,#0eff00 461.5px,#55ff00 463.5px,#dcff00 467px)"></i><i style="left:301px;width:1px;background:linear-gradient(#3eff00 0px,#adff00 1.5px,#bfff00 3.5px,#bfff00 357.5px,#d2ff00 358.5px,#ffe400 359.5px,#ff6c00 361.5px,#ff6c00 378.5px,#ffe400 380.5px,#d2ff00 381.5px,#bfff00 383.5px,#bfff00 462.5px,#fffe00 464.5px,#fffc00 467px)"></i><i style="left:302px;width:1px;background:linear-gradient(#00ff79 0px,#00ff77 16.5px,#00ff51 17.5px,#00ff0c 18.5px,#58ff00 19.5px,#81ff00 21.5px,#9bff00 23.5px,#75ff00 26.5px,#57ff00 27.5px,#00ff0d 28.5px,#00ff52 29.5px,#00ff79 30.5px,#00ff83 97.5px,#00ff57 101.5px,#00ff59 106.5px,#00ff88 110.5px,#00ff85 132.5px,#00ff78 137.5px,#00ff8e 143.5px,#00ff93 255.5px,#00ff14 325.5px,#00ff10 351.5px,#10ff00 353.5px,#5aff00 354.5px,#dcff00 355.5px,#e4ff00 367.5px,#b3ff00 370.5px,#32ff00 375.5px,#00ff00 382.5px,#00ff21 400.5px,#00ff12 408.5px,#00ff10 437.5px,#05ff00 439.5px,#00ff21 441.5px,#00ff24 446.5px,#00ff37 448.5px,#00ff19 449.5px,#0cff00 455.5px,#36ff00 456.5px,#2fff00 457.5px,#d7ff00 460.5px,#fcff00 461.5px,#fffc00 467px)"></i><i style="left:303px;width:1px;background:linear-gradient(#00ff70 0px,#00ff73 16.5px,#00ff4e 17.5px,#00ff0a 18.5px,#58ff00 19.5px,#81ff00 21.5px,#9bff00 23.5px,#75ff00 26.5px,#58ff00 27.5px,#00ff0b 28.5px,#00ff50 29.5px,#00ff75 30.5px,#00ff81 97.5px,#00ff56 101.5px,#00ff58 106.5px,#00ff85 110.5px,#00ff83 132.5px,#00ff76 137.5px,#00ff8b 143.5px,#00ff92 255.5px,#00ff1e 325.5px,#00ff1a 351.5px,#03ff00 353.5px,#51ff00 354.5px,#dcff00 355.5px,#e1ff00 362.5px,#a7ff00 365.5px,#2eff00 369.5px,#00ff01 374.5px,#00ff1c 391.5px,#00ff2c 400.5px,#00ff1c 408.5px,#00ff1a 437.5px,#00ff07 439.5px,#00ff26 440.5px,#00ff2f 446.5px,#00ff42 448.5px,#00ff24 449.5px,#00ff0a 453.5px,#1eff00 454.5px,#d2ff00 457.5px,#f9ff00 458.5px,#fffe00 467px)"></i><i style="left:304px;width:1px;background:linear-gradient(#00ff85 0px,#00ff88 16.5px,#00ff5e 17.5px,#00ff12 18.5px,#56ff00 19.5px,#81ff00 21.5px,#9bff00 23.5px,#75ff00 26.5px,#56ff00 27.5px,#00ff13 28.5px,#00ff60 29.5px,#00ff8a 30.5px,#00ff95 97.5px,#00ff60 100.5px,#00ff61 106.5px,#00ff97 109.5px,#00ff95 132.5px,#00ff82 136.5px,#00ffa0 142.5px,#00ffa7 252.5px,#00ff0c 323.5px,#00ff02 352.5px,#0cff00 353.5px,#2eff00 354.5px,#a4ff00 355.5px,#deff00 356.5px,#d1ff00 358.5px,#29ff00 365.5px,#00ff00 373.5px,#00ff14 394.5px,#00ff0d 402.5px,#0aff00 438.5px,#10ff00 439.5px,#00ff1e 440.5px,#00ff3a 448.5px,#00ff11 449.5px,#07ff00 450.5px,#d3ff00 454.5px,#f8ff00 455.5px,#fffd00 463.5px,#e8ff00 464.5px,#bbff00 465.5px,#61ff00 467px)"></i><i style="left:305px;width:1px;background:linear-gradient(#00ff76 0px,#00ff78 16.5px,#00ff52 17.5px,#00ff0d 18.5px,#57ff00 19.5px,#81ff00 21.5px,#9bff00 23.5px,#75ff00 26.5px,#57ff00 27.5px,#00ff0d 28.5px,#00ff54 29.5px,#00ff7b 30.5px,#00ff86 97.5px,#00ff58 101.5px,#00ff5b 106.5px,#00ff8b 110.5px,#00ff88 132.5px,#00ff7a 137.5px,#00ff91 143.5px,#00ff98 253.5px,#00ff1d 324.5px,#00ff16 352.5px,#04ff00 354.5px,#52ff00 356.5px,#52ff00 357.5px,#27ff00 359.5px,#00ff03 364.5px,#00ff1b 382.5px,#00ff27 394.5px,#00ff1f 402.5px,#00ff19 437.5px,#00ff06 439.5px,#00ff25 440.5px,#00ff2b 447.5px,#00ff12 448.5px,#8eff00 450.5px,#f3ff00 452.5px,#fffc00 458.5px,#fffd00 460.5px,#e8ff00 461.5px,#3cff00 464.5px,#3bff00 465.5px,#00ff1d 467px)"></i><i style="left:306px;width:1px;background:linear-gradient(#00ff70 0px,#00ff72 16.5px,#00ff4e 17.5px,#00ff0a 18.5px,#58ff00 19.5px,#81ff00 21.5px,#9bff00 23.5px,#75ff00 26.5px,#58ff00 27.5px,#00ff0b 28.5px,#00ff4f 29.5px,#00ff75 30.5px,#00ff80 97.5px,#00ff56 101.5px,#00ff58 106.5px,#00ff85 110.5px,#00ff82 132.5px,#00ff7c 138.5px,#00ff8c 148.5px,#00ff91 254.5px,#00ff1f 324.5px,#00ff16 353.5px,#00ff02 358.5px,#00ff1e 374.5px,#00ff29 394.5px,#00ff22 402.5px,#00ff1c 437.5px,#00ff08 439.5px,#00ff26 440.5px,#00ff2d 443.5px,#00ff00 445.5px,#14ff00 446.5px,#b2ff00 448.5px,#efff00 449.5px,#fffc00 451.5px,#fffc00 457.5px,#ecff00 458.5px,#3fff00 461.5px,#3cff00 462.5px,#12ff00 463.5px,#01ff00 465.5px,#00ff27 467px)"></i><i style="left:307px;width:1px;background:linear-gradient(#00ff88 0px,#00ff8a 16.5px,#00ff60 17.5px,#00ff13 18.5px,#56ff00 19.5px,#81ff00 21.5px,#9bff00 23.5px,#75ff00 26.5px,#56ff00 27.5px,#00ff14 28.5px,#00ff62 29.5px,#00ff8d 30.5px,#00ff98 97.5px,#00ff62 100.5px,#00ff62 106.5px,#00ff9a 109.5px,#00ff97 132.5px,#00ff83 136.5px,#00ffa3 142.5px,#00ffa9 251.5px,#00ff0c 320.5px,#00ff06 392.5px,#00ff16 400.5px,#00ff06 408.5px,#00ff04 437.5px,#14ff00 439.5px,#00ff1d 440.5px,#00ff1b 441.5px,#03ff00 442.5px,#13ff00 443.5px,#acff00 445.5px,#e6ff00 446.5px,#fffc00 447.5px,#fffc00 454.5px,#f3ff00 455.5px,#2bff00 459.5px,#3bff00 460.5px,#29ff00 462.5px,#29ff00 465.5px,#00ff1c 467px)"></i><i style="left:308px;width:1px;background:linear-gradient(#00ff7d 0px,#00ff80 16.5px,#00ff58 17.5px,#00ff0f 18.5px,#57ff00 19.5px,#81ff00 21.5px,#9bff00 23.5px,#75ff00 26.5px,#57ff00 27.5px,#00ff10 28.5px,#00ff5a 29.5px,#00ff82 30.5px,#00ff8d 97.5px,#00ff5d 100.5px,#00ff5e 106.5px,#00ff92 110.5px,#00ff8e 132.5px,#00ff7e 137.5px,#00ff98 142.5px,#00ffa0 251.5px,#00ff1f 322.5px,#00ff21 393.5px,#00ff28 401.5px,#00ff1d 423.5px,#00ff1b 437.5px,#00ff05 438.5px,#29ff00 439.5px,#0dff00 440.5px,#e0ff00 443.5px,#fffd00 444.5px,#fffc00 451.5px,#f3ff00 452.5px,#8dff00 454.5px,#11ff00 456.5px,#1aff00 457.5px,#03ff00 458.5px,#02ff00 465.5px,#00ff2a 467px)"></i><i style="left:309px;width:1px;background:linear-gradient(#00ff85 0px,#00ff88 16.5px,#00ff5e 17.5px,#00ff12 18.5px,#56ff00 19.5px,#81ff00 21.5px,#9bff00 23.5px,#75ff00 26.5px,#56ff00 27.5px,#00ff13 28.5px,#00ff60 29.5px,#00ff8b 30.5px,#00ff95 97.5px,#00ff61 100.5px,#00ff61 106.5px,#00ff97 109.5px,#00ff95 132.5px,#00ff82 136.5px,#00ffa0 142.5px,#00ffa8 250.5px,#00ff15 321.5px,#00ff16 393.5px,#00ff1e 401.5px,#00ff12 413.5px,#00ff0f 434.5px,#00ff03 435.5px,#41ff00 437.5px,#ddff00 440.5px,#fffe00 441.5px,#f6ff00 449.5px,#9aff00 451.5px,#25ff00 453.5px,#07ff00 454.5px,#15ff00 461.5px,#15ff00 465.5px,#00ff24 467px)"></i><i style="left:310px;width:1px;background:linear-gradient(#00ff79 0px,#00ff7b 16.5px,#00ff54 17.5px,#00ff0e 18.5px,#57ff00 19.5px,#81ff00 21.5px,#9bff00 23.5px,#75ff00 26.5px,#57ff00 27.5px,#00ff0e 28.5px,#00ff56 29.5px,#00ff7e 30.5px,#00ff89 97.5px,#00ff59 101.5px,#00ff5c 106.5px,#00ff8b 109.5px,#00ff8a 132.5px,#00ff7b 137.5px,#00ff93 142.5px,#00ff9b 250.5px,#00ff12 320.5px,#00ff12 393.5px,#00ff1a 401.5px,#00ff0e 413.5px,#00ff09 430.5px,#03ff00 431.5px,#e4ff00 437.5px,#fffe00 438.5px,#f6ff00 446.5px,#84ff00 448.5px,#02ff00 451.5px,#00ff0e 453.5px,#1cff00 457.5px,#1cff00 465.5px,#00ff1d 467px)"></i><i style="left:311px;width:1px;background:linear-gradient(#00ff6e 0px,#00ff71 16.5px,#00ff4c 17.5px,#00ff0a 18.5px,#58ff00 19.5px,#81ff00 21.5px,#9bff00 23.5px,#75ff00 26.5px,#58ff00 27.5px,#00ff0a 28.5px,#00ff4e 29.5px,#00ff73 30.5px,#00ff7f 97.5px,#00ff55 101.5px,#00ff57 106.5px,#00ff83 110.5px,#00ff81 132.5px,#00ff75 137.5px,#00ff89 143.5px,#00ff90 250.5px,#00ff16 321.5px,#00ff18 393.5px,#00ff1f 401.5px,#00ff14 423.5px,#00ff00 427.5px,#e7ff00 433.5px,#feff00 434.5px,#f9ff00 443.5px,#caff00 444.5px,#37ff00 446.5px,#05ff00 447.5px,#00ff27 448.5px,#00ff14 452.5px,#04ff00 455.5px,#13ff00 458.5px,#13ff00 465.5px,#00ff1f 467px)"></i><i style="left:312px;width:1px;background:linear-gradient(#00ff6a 0px,#00ff6c 16.5px,#00ff49 17.5px,#00ff08 18.5px,#58ff00 19.5px,#81ff00 21.5px,#9bff00 23.5px,#75ff00 26.5px,#58ff00 27.5px,#00ff09 28.5px,#00ff4b 29.5px,#00ff6f 30.5px,#00ff7a 97.5px,#00ff53 101.5px,#00ff61 107.5px,#00ff7f 110.5px,#00ff7d 132.5px,#00ff77 138.5px,#00ff86 148.5px,#00ff8b 251.5px,#00ff11 320.5px,#00ff13 393.5px,#00ff1a 401.5px,#00ff07 422.5px,#0cff00 423.5px,#ecff00 429.5px,#fffc00 431.5px,#fdff00 440.5px,#d1ff00 441.5px,#40ff00 443.5px,#00ff0d 445.5px,#00ff39 447.5px,#00ff3d 448.5px,#00ff18 449.5px,#00ff07 454.5px,#1bff00 457.5px,#1bff00 465.5px,#00ff1a 467px)"></i><i style="left:313px;width:1px;background:linear-gradient(#00ff89 0px,#00ff8c 16.5px,#00ff61 17.5px,#00ff14 18.5px,#56ff00 19.5px,#81ff00 21.5px,#9bff00 23.5px,#75ff00 26.5px,#55ff00 27.5px,#00ff15 28.5px,#00ff63 29.5px,#00ff8e 30.5px,#00ff99 97.5px,#00ff62 100.5px,#00ff63 106.5px,#00ff9b 109.5px,#00ff99 132.5px,#00ff84 136.5px,#00ffa4 142.5px,#00ffab 248.5px,#00ff02 318.5px,#00ff09 394.5px,#05ff00 417.5px,#4aff00 420.5px,#f3ff00 425.5px,#fffc00 431.5px,#fcff00 437.5px,#e6ff00 438.5px,#b6ff00 439.5px,#56ff00 440.5px,#36ff00 441.5px,#00ff05 442.5px,#00ff24 444.5px,#00ff36 448.5px,#00ff08 449.5px,#03ff00 453.5px,#39ff00 456.5px,#39ff00 465.5px,#00ff15 467px)"></i><i style="left:314px;width:1px;background:linear-gradient(#00ff7f 0px,#00ff82 16.5px,#00ff5a 17.5px,#00ff10 18.5px,#56ff00 19.5px,#81ff00 21.5px,#9bff00 23.5px,#75ff00 26.5px,#56ff00 27.5px,#00ff11 28.5px,#00ff5b 29.5px,#00ff85 30.5px,#00ff8f 97.5px,#00ff5e 100.5px,#00ff5f 106.5px,#00ff92 109.5px,#00ff90 132.5px,#00ff7e 136.5px,#00ff9a 142.5px,#00ffa2 248.5px,#00ff17 319.5px,#00ff18 393.5px,#00ff20 401.5px,#00ff08 414.5px,#0eff00 415.5px,#d8ff00 420.5px,#fffd00 422.5px,#f7ff00 433.5px,#90ff00 436.5px,#3aff00 438.5px,#2fff00 439.5px,#00ff1b 440.5px,#00ff2b 442.5px,#00ff3a 447.5px,#00ff3f 448.5px,#00ff1d 449.5px,#00ff0c 454.5px,#11ff00 458.5px,#11ff00 465.5px,#00ff24 467px)"></i><i style="left:315px;width:1px;background:linear-gradient(#00ff75 0px,#00ff77 16.5px,#00ff51 17.5px,#00ff0c 18.5px,#57ff00 19.5px,#81ff00 21.5px,#9bff00 23.5px,#75ff00 26.5px,#57ff00 27.5px,#00ff0d 28.5px,#00ff53 29.5px,#00ff7a 30.5px,#00ff85 97.5px,#00ff58 101.5px,#00ff5a 106.5px,#00ff8a 110.5px,#00ff87 132.5px,#00ff79 137.5px,#00ff90 143.5px,#00ff97 249.5px,#00ff1f 320.5px,#00ff22 393.5px,#00ff29 401.5px,#00ff0e 410.5px,#07ff00 411.5px,#dbff00 416.5px,#fffc00 418.5px,#fffd00 428.5px,#d5ff00 430.5px,#01ff00 435.5px,#00ff19 437.5px,#00ff08 439.5px,#00ff26 440.5px,#00ff3d 447.5px,#00ff43 448.5px,#00ff25 449.5px,#00ff16 454.5px,#01ff00 457.5px,#01ff00 465.5px,#00ff28 467px)"></i><i style="left:316px;width:1px;background:linear-gradient(#00ff6e 0px,#00ff70 16.5px,#00ff4c 17.5px,#00ff09 18.5px,#58ff00 19.5px,#81ff00 21.5px,#9bff00 23.5px,#75ff00 26.5px,#58ff00 27.5px,#00ff0a 28.5px,#00ff4e 29.5px,#00ff73 30.5px,#00ff7e 97.5px,#00ff55 101.5px,#00ff63 107.5px,#00ff82 110.5px,#00ff80 132.5px,#00ff7a 138.5px,#00ff8a 148.5px,#00ff8f 250.5px,#00ff26 320.5px,#00ff29 393.5px,#00ff30 401.5px,#00ff12 406.5px,#03ff00 407.5px,#dfff00 412.5px,#faff00 413.5px,#fffd00 424.5px,#cdff00 426.5px,#18ff00 430.5px,#00ff08 431.5px,#00ff25 434.5px,#00ff15 438.5px,#00ff0f 439.5px,#00ff30 441.5px,#00ff32 446.5px,#00ff46 448.5px,#00ff2b 449.5px,#00ff1d 454.5px,#00ff06 457.5px,#00ff06 465.5px,#00ff2b 467px)"></i><i style="left:317px;width:1px;background:linear-gradient(#00ff77 0px,#00ff7a 16.5px,#00ff53 17.5px,#00ff0d 18.5px,#57ff00 19.5px,#81ff00 21.5px,#9bff00 23.5px,#75ff00 26.5px,#57ff00 27.5px,#00ff0e 28.5px,#00ff55 29.5px,#00ff7c 30.5px,#00ff87 97.5px,#00ff58 101.5px,#00ff5b 106.5px,#00ff8a 109.5px,#00ff89 132.5px,#00ff7b 137.5px,#00ff92 142.5px,#00ff98 248.5px,#00ff13 318.5px,#00ff15 393.5px,#00ff20 400.5px,#00ff01 402.5px,#e8ff00 408.5px,#feff00 409.5px,#fffe00 420.5px,#a8ff00 423.5px,#09ff00 427.5px,#00ff11 432.5px,#00ff0e 437.5px,#04ff00 439.5px,#00ff21 440.5px,#00ff39 447.5px,#00ff3e 448.5px,#00ff19 449.5px,#0aff00 455.5px,#18ff00 458.5px,#18ff00 465.5px,#00ff1f 467px)"></i><i style="left:318px;width:1px;background:linear-gradient(#00ff81 0px,#00ff83 16.5px,#00ff5b 17.5px,#00ff11 18.5px,#56ff00 19.5px,#81ff00 21.5px,#9bff00 23.5px,#75ff00 26.5px,#56ff00 27.5px,#00ff11 28.5px,#00ff5c 29.5px,#00ff86 30.5px,#00ff91 97.5px,#00ff5f 100.5px,#00ff5f 106.5px,#00ff93 109.5px,#00ff91 132.5px,#00ff7f 136.5px,#00ff9c 142.5px,#00ffaa 216.5px,#00ffa0 219.5px,#00ffa0 249.5px,#00ff15 317.5px,#00ff16 393.5px,#00ff1a 397.5px,#00ff0b 398.5px,#ecff00 404.5px,#fffc00 406.5px,#feff00 416.5px,#a0ff00 419.5px,#01ff00 423.5px,#00ff12 427.5px,#00ff10 437.5px,#02ff00 439.5px,#00ff22 440.5px,#00ff3e 448.5px,#00ff1b 449.5px,#07ff00 455.5px,#15ff00 458.5px,#15ff00 465.5px,#00ff23 467px)"></i><i style="left:319px;width:1px;background:linear-gradient(#00ff78 0px,#00ff7b 16.5px,#00ff54 17.5px,#00ff0d 18.5px,#57ff00 19.5px,#81ff00 21.5px,#9bff00 23.5px,#75ff00 26.5px,#57ff00 27.5px,#00ff0e 28.5px,#00ff56 29.5px,#00ff7d 30.5px,#00ff88 97.5px,#00ff59 101.5px,#00ff5b 106.5px,#00ff8b 109.5px,#00ff8a 132.5px,#00ff7b 137.5px,#00ff93 142.5px,#00ffa2 215.5px,#00ff98 216.5px,#00ff0a 217.5px,#1aff00 218.5px,#00ff0a 221.5px,#00ff95 235.5px,#00ff9b 246.5px,#00ff0d 317.5px,#00ff05 393.5px,#60ff00 396.5px,#f1ff00 400.5px,#fffc00 403.5px,#fbff00 412.5px,#9eff00 415.5px,#09ff00 419.5px,#00ff0b 436.5px,#0dff00 439.5px,#00ff1f 440.5px,#00ff3b 448.5px,#00ff14 449.5px,#00ff03 454.5px,#22ff00 456.5px,#22ff00 465.5px,#00ff1b 467px)"></i><i style="left:320px;width:1px;background:linear-gradient(#00ff7b 0px,#00ff7d 16.5px,#00ff56 17.5px,#00ff0e 18.5px,#57ff00 19.5px,#81ff00 21.5px,#9bff00 23.5px,#75ff00 26.5px,#57ff00 27.5px,#00ff0f 28.5px,#00ff58 29.5px,#00ff80 30.5px,#00ff8b 97.5px,#00ff5c 100.5px,#00ff5d 106.5px,#00ff90 110.5px,#00ff8c 132.5px,#00ff7d 137.5px,#00ff96 142.5px,#00ffa7 215.5px,#00ff9c 216.5px,#00ff0b 217.5px,#25ff00 218.5px,#40ff00 223.5px,#35ff00 232.5px,#00ff05 237.5px,#00ff88 251.5px,#00ff89 260.5px,#00ff19 314.5px,#00ff12 388.5px,#0fff00 390.5px,#d8ff00 395.5px,#fffd00 397.5px,#f8ff00 408.5px,#91ff00 411.5px,#15ff00 414.5px,#00ff05 415.5px,#00ff14 421.5px,#00ff12 437.5px,#00ff00 439.5px,#00ff22 440.5px,#00ff3a 447.5px,#00ff3f 448.5px,#00ff1c 449.5px,#00ff0c 454.5px,#12ff00 458.5px,#12ff00 465.5px,#00ff23 467px)"></i><i style="left:321px;width:1px;background:linear-gradient(#00ff7c 0px,#00ff7f 16.5px,#00ff57 17.5px,#00ff0f 18.5px,#57ff00 19.5px,#81ff00 21.5px,#9bff00 23.5px,#75ff00 26.5px,#57ff00 27.5px,#00ff10 28.5px,#00ff59 29.5px,#00ff81 30.5px,#00ff8c 97.5px,#00ff5d 100.5px,#00ff5d 106.5px,#00ff8f 109.5px,#00ff8d 132.5px,#00ff7e 137.5px,#00ff97 142.5px,#00ffab 216.5px,#00ff00 232.5px,#3eff00 238.5px,#33ff00 249.5px,#00ff04 254.5px,#00ff63 266.5px,#00ff3d 267.5px,#00ff10 326.5px,#00ff14 385.5px,#02ff00 386.5px,#91ff00 389.5px,#f8ff00 392.5px,#fffd00 403.5px,#d8ff00 405.5px,#0fff00 410.5px,#00ff12 412.5px,#00ff12 437.5px,#00ff00 439.5px,#00ff22 440.5px,#00ff3a 447.5px,#00ff3f 448.5px,#00ff1c 449.5px,#00ff0c 454.5px,#12ff00 458.5px,#12ff00 465.5px,#00ff24 467px)"></i><i style="left:322px;width:1px;background:linear-gradient(#00ff81 0px,#00ff83 16.5px,#00ff5b 17.5px,#00ff11 18.5px,#56ff00 19.5px,#81ff00 21.5px,#9bff00 23.5px,#75ff00 26.5px,#56ff00 27.5px,#00ff11 28.5px,#00ff5c 29.5px,#00ff86 30.5px,#00ff91 97.5px,#00ff5f 100.5px,#00ff5f 106.5px,#00ff93 109.5px,#00ff91 132.5px,#00ff7f 136.5px,#00ff9b 142.5px,#00ffab 216.5px,#00ff0c 219.5px,#0aff00 249.5px,#3fff00 255.5px,#38ff00 265.5px,#29ff00 267.5px,#09ff00 268.5px,#06ff00 385.5px,#d8ff00 387.5px,#f8ff00 388.5px,#fffe00 399.5px,#c5ff00 401.5px,#2aff00 404.5px,#09ff00 405.5px,#07ff00 437.5px,#35ff00 439.5px,#33ff00 446.5px,#05ff00 448.5px,#03ff00 453.5px,#39ff00 456.5px,#34ff00 465.5px,#00ff06 467px)"></i><i style="left:323px;width:1px;background:linear-gradient(#00ff77 0px,#00ff7a 16.5px,#00ff53 17.5px,#00ff0d 18.5px,#57ff00 19.5px,#81ff00 21.5px,#9bff00 23.5px,#75ff00 26.5px,#57ff00 27.5px,#00ff0e 28.5px,#00ff55 29.5px,#00ff7d 30.5px,#00ff88 97.5px,#00ff59 101.5px,#00ff5b 106.5px,#00ff8a 109.5px,#00ff89 132.5px,#00ff7b 137.5px,#00ff93 143.5px,#00ffac 215.5px,#00ff94 217.5px,#00ff64 219.5px,#00ff56 250.5px,#03ff00 265.5px,#66ff00 268.5px,#77ff00 333.5px,#6fff00 385.5px,#c9ff00 386.5px,#fffc00 387.5px,#fcff00 395.5px,#a6ff00 397.5px,#1fff00 399.5px,#00ff1a 400.5px,#00ff49 404.5px,#00ff47 437.5px,#00ff29 440.5px,#00ff2b 446.5px,#00ff49 449.5px,#00ff42 454.5px,#00ff2b 457.5px,#00ff2c 465.5px,#00ff4a 467px)"></i><i style="left:324px;width:1px;background:linear-gradient(#00ff78 0px,#00ff7b 16.5px,#00ff54 17.5px,#00ff0d 18.5px,#57ff00 19.5px,#81ff00 21.5px,#9bff00 23.5px,#75ff00 26.5px,#57ff00 27.5px,#00ff0e 28.5px,#00ff56 29.5px,#00ff7d 30.5px,#00ff88 97.5px,#00ff59 101.5px,#00ff5b 106.5px,#00ff8d 110.5px,#00ff8a 132.5px,#00ff7b 137.5px,#00ff93 143.5px,#00ffa7 168.5px,#00ffab 265.5px,#00ffa3 266.5px,#00ff65 267.5px,#09ff00 338.5px,#6aff00 385.5px,#bfff00 386.5px,#fffc00 387.5px,#f5ff00 391.5px,#8bff00 393.5px,#40ff00 394.5px,#00ff19 395.5px,#00ff99 398.5px,#00ffbf 400.5px,#00ffb0 409.5px,#00ffae 437.5px,#00ff91 440.5px,#00ff93 446.5px,#00ffb0 449.5px,#00ffa8 454.5px,#00ff91 457.5px,#00ff93 467px)"></i><i style="left:325px;width:1px;background:linear-gradient(#00ff7b 0px,#00ff7e 16.5px,#00ff56 17.5px,#00ff0f 18.5px,#57ff00 19.5px,#81ff00 21.5px,#9bff00 23.5px,#75ff00 26.5px,#57ff00 27.5px,#00ff0f 28.5px,#00ff58 29.5px,#00ff81 30.5px,#00ff8b 97.5px,#00ff5c 100.5px,#00ff5d 106.5px,#00ff8e 109.5px,#00ff8c 132.5px,#00ff7d 137.5px,#00ff96 142.5px,#00ffac 166.5px,#00ffac 326.5px,#00ff6c 384.5px,#00ff4d 385.5px,#31ff00 386.5px,#beff00 387.5px,#bfff00 388.5px,#2fff00 390.5px,#00ff15 391.5px,#00ff9f 394.5px,#00ffc5 396.5px,#00ffb6 417.5px,#00ffb4 437.5px,#00ff97 440.5px,#00ff99 446.5px,#00ffb6 449.5px,#00ffae 454.5px,#00ff97 457.5px,#00ff98 467px)"></i><i style="left:326px;width:1px;background:linear-gradient(#00ff7c 0px,#00ff7f 16.5px,#00ff57 17.5px,#00ff0f 18.5px,#57ff00 19.5px,#81ff00 21.5px,#9bff00 23.5px,#75ff00 26.5px,#57ff00 27.5px,#00ff10 28.5px,#00ff59 29.5px,#00ff82 30.5px,#00ff8c 97.5px,#00ff5d 100.5px,#00ff5d 106.5px,#00ff8f 109.5px,#00ff8d 132.5px,#00ff7e 137.5px,#00ff97 142.5px,#00ffaf 163.5px,#00ffb9 385.5px,#00ff4f 387.5px,#00ff4f 388.5px,#00ff9c 390.5px,#00ffb9 392.5px,#00ffc8 400.5px,#00ffb9 409.5px,#00ffb7 437.5px,#00ff9a 440.5px,#00ff9c 446.5px,#00ffb9 449.5px,#00ffb1 454.5px,#00ff9a 457.5px,#00ff9a 467px)"></i><i style="left:327px;width:1px;background:linear-gradient(#00ff85 0px,#00ff88 16.5px,#00ff5e 17.5px,#00ff12 18.5px,#56ff00 19.5px,#81ff00 21.5px,#9bff00 23.5px,#75ff00 26.5px,#56ff00 27.5px,#00ff13 28.5px,#00ff60 29.5px,#00ff8a 30.5px,#00ff95 97.5px,#00ff61 100.5px,#00ff61 106.5px,#00ff97 109.5px,#00ff95 132.5px,#00ff82 136.5px,#00ffa0 142.5px,#00ffb8 161.5px,#00ffc7 393.5px,#00ffce 401.5px,#00ffc3 423.5px,#00ffc1 437.5px,#00ffa4 440.5px,#00ffa6 446.5px,#00ffc3 449.5px,#00ffbb 454.5px,#00ffa4 457.5px,#00ffa3 467px)"></i><i style="left:328px;width:1px;background:linear-gradient(#00ff7f 0px,#00ff81 16.5px,#00ff59 17.5px,#00ff10 18.5px,#57ff00 19.5px,#81ff00 21.5px,#9bff00 23.5px,#75ff00 26.5px,#56ff00 27.5px,#00ff11 28.5px,#00ff5b 29.5px,#00ff84 30.5px,#00ff8f 97.5px,#00ff5b 101.5px,#00ff5e 106.5px,#00ff91 109.5px,#00ff8f 132.5px,#00ff7f 137.5px,#00ff99 142.5px,#00ffb1 160.5px,#00ffc0 393.5px,#00ffc8 401.5px,#00ffbc 412.5px,#00ffba 437.5px,#00ff9d 440.5px,#00ffa0 446.5px,#00ffbc 449.5px,#00ffb4 454.5px,#00ff9d 457.5px,#00ff9d 467px)"></i><i style="left:329px;width:1px;background:linear-gradient(#00ff71 0px,#00ff73 16.5px,#00ff4e 17.5px,#00ff0b 18.5px,#58ff00 19.5px,#81ff00 21.5px,#9bff00 23.5px,#75ff00 26.5px,#58ff00 27.5px,#00ff0b 28.5px,#00ff50 29.5px,#00ff76 30.5px,#00ff81 97.5px,#00ff56 101.5px,#00ff58 106.5px,#00ff85 110.5px,#00ff83 132.5px,#00ff77 137.5px,#00ffa1 151.5px,#00ffb2 393.5px,#00ffba 401.5px,#00ffae 413.5px,#00ffac 437.5px,#00ff8f 440.5px,#00ff92 446.5px,#00ffae 449.5px,#00ffa6 454.5px,#00ff8f 457.5px,#00ff8f 467px)"></i><i style="left:330px;width:1px;background:linear-gradient(#00ff7c 0px,#00ff7f 16.5px,#00ff57 17.5px,#00ff0f 18.5px,#57ff00 19.5px,#81ff00 21.5px,#9bff00 23.5px,#75ff00 26.5px,#57ff00 27.5px,#00ff10 28.5px,#00ff59 29.5px,#00ff81 30.5px,#00ff8c 97.5px,#00ff5d 100.5px,#00ff5d 106.5px,#00ff91 110.5px,#00ff8d 132.5px,#00ff7e 137.5px,#00ff97 142.5px,#00ffaf 161.5px,#00ffbe 393.5px,#00ffc5 401.5px,#00ffba 423.5px,#00ffb8 437.5px,#00ff9b 440.5px,#00ff9d 446.5px,#00ffba 449.5px,#00ffb2 454.5px,#00ff9b 457.5px,#00ff9a 467px)"></i><i style="left:331px;width:1px;background:linear-gradient(#00ff86 0px,#00ff89 16.5px,#00ff5f 17.5px,#00ff13 18.5px,#56ff00 19.5px,#81ff00 21.5px,#9bff00 23.5px,#75ff00 26.5px,#56ff00 27.5px,#00ff13 28.5px,#00ff61 29.5px,#00ff8c 30.5px,#00ff96 97.5px,#00ff61 100.5px,#00ff62 106.5px,#00ff99 109.5px,#00ff96 132.5px,#00ff83 136.5px,#00ffa1 142.5px,#00ffba 161.5px,#00ffc8 393.5px,#00ffd0 401.5px,#00ffc4 413.5px,#00ffc2 437.5px,#00ffa5 440.5px,#00ffa8 446.5px,#00ffc4 449.5px,#00ffbc 454.5px,#00ffa5 457.5px,#00ffa5 467px)"></i><i style="left:332px;width:1px;background:linear-gradient(#00ff70 0px,#00ff72 16.5px,#00ff4d 17.5px,#00ff0a 18.5px,#58ff00 19.5px,#81ff00 21.5px,#9bff00 23.5px,#75ff00 26.5px,#58ff00 27.5px,#00ff0b 28.5px,#00ff4f 29.5px,#00ff75 30.5px,#00ff80 97.5px,#00ff55 101.5px,#00ff64 107.5px,#00ff84 110.5px,#00ff82 132.5px,#00ff7c 138.5px,#00ffa2 157.5px,#00ffb1 393.5px,#00ffb9 401.5px,#00ffad 412.5px,#00ffab 437.5px,#00ff8e 440.5px,#00ff91 446.5px,#00ffad 449.5px,#00ffa5 454.5px,#00ff8e 457.5px,#00ff8e 467px)"></i><i style="left:333px;width:1px;background:linear-gradient(#00ff76 0px,#00ff79 16.5px,#00ff52 17.5px,#00ff0d 18.5px,#57ff00 19.5px,#81ff00 21.5px,#9bff00 23.5px,#75ff00 26.5px,#57ff00 27.5px,#00ff0d 28.5px,#00ff54 29.5px,#00ff7b 30.5px,#00ff86 97.5px,#00ff58 101.5px,#00ff5b 106.5px,#00ff8b 110.5px,#00ff88 132.5px,#00ff7a 137.5px,#00ff91 142.5px,#00ffa9 161.5px,#00ffb8 393.5px,#00ffbf 401.5px,#00ffb4 423.5px,#00ffb2 437.5px,#00ff95 440.5px,#00ff97 446.5px,#00ffb4 449.5px,#00ffac 454.5px,#00ff95 457.5px,#00ff94 467px)"></i><i style="left:334px;width:1px;background:linear-gradient(#00ff69 0px,#00ff6c 16.5px,#00ff48 17.5px,#00ff08 18.5px,#59ff00 19.5px,#81ff00 21.5px,#9bff00 23.5px,#75ff00 26.5px,#58ff00 27.5px,#00ff08 28.5px,#00ff4a 29.5px,#00ff6e 30.5px,#00ff7a 97.5px,#00ff53 101.5px,#00ff61 107.5px,#00ff7e 110.5px,#00ff7d 132.5px,#00ff77 138.5px,#00ff9c 158.5px,#00ffab 393.5px,#00ffb2 401.5px,#00ffa7 423.5px,#00ffa5 437.5px,#00ff88 440.5px,#00ff8a 446.5px,#00ffa7 449.5px,#00ff9f 454.5px,#00ff88 457.5px,#00ff87 467px)"></i><i style="left:335px;width:1px;background:linear-gradient(#00ff7a 0px,#00ff7d 16.5px,#00ff55 17.5px,#00ff0e 18.5px,#57ff00 19.5px,#81ff00 21.5px,#9bff00 23.5px,#75ff00 26.5px,#57ff00 27.5px,#00ff0f 28.5px,#00ff57 29.5px,#00ff7f 30.5px,#00ff8a 97.5px,#00ff5a 101.5px,#00ff5c 106.5px,#00ff8f 110.5px,#00ff8b 132.5px,#00ff7c 137.5px,#00ff95 142.5px,#00ffad 161.5px,#00ffbc 393.5px,#00ffc3 401.5px,#00ffb8 423.5px,#00ffb6 437.5px,#00ff99 440.5px,#00ff9b 446.5px,#00ffb8 449.5px,#00ffb0 454.5px,#00ff99 457.5px,#00ff98 467px)"></i><i style="left:336px;width:1px;background:linear-gradient(#00ff7e 0px,#00ff81 16.5px,#00ff59 17.5px,#00ff10 18.5px,#57ff00 19.5px,#81ff00 21.5px,#9bff00 23.5px,#75ff00 26.5px,#56ff00 27.5px,#00ff10 28.5px,#00ff5b 29.5px,#00ff84 30.5px,#00ff8e 97.5px,#00ff5b 101.5px,#00ff5e 106.5px,#00ff91 109.5px,#00ff8f 132.5px,#00ff7f 137.5px,#00ff99 142.5px,#00ffb1 160.5px,#00ffc0 393.5px,#00ffc8 401.5px,#00ffbc 412.5px,#00ffba 437.5px,#00ff9d 440.5px,#00ffa0 446.5px,#00ffbc 449.5px,#00ffb4 454.5px,#00ff9d 457.5px,#00ff9c 467px)"></i><i style="left:337px;width:1px;background:linear-gradient(#00ff86 0px,#00ff89 16.5px,#00ff5f 17.5px,#00ff13 18.5px,#56ff00 19.5px,#81ff00 21.5px,#9bff00 23.5px,#75ff00 26.5px,#56ff00 27.5px,#00ff14 28.5px,#00ff61 29.5px,#00ff8c 30.5px,#00ff96 97.5px,#00ff61 100.5px,#00ff62 106.5px,#00ff99 109.5px,#00ff96 132.5px,#00ff83 136.5px,#00ffa1 142.5px,#00ffba 161.5px,#00ffbc 385.5px,#00ff9b 387.5px,#00ffb3 399.5px,#00ffd0 401.5px,#00ffc4 413.5px,#00ffc2 437.5px,#00ffa5 440.5px,#00ffa8 446.5px,#00ffc4 449.5px,#00ffbc 454.5px,#00ffa5 457.5px,#00ffa5 467px)"></i><i style="left:338px;width:1px;background:linear-gradient(#00ff70 0px,#00ff72 16.5px,#00ff4d 17.5px,#00ff0a 18.5px,#58ff00 19.5px,#81ff00 21.5px,#9bff00 23.5px,#75ff00 26.5px,#58ff00 27.5px,#00ff0b 28.5px,#00ff4f 29.5px,#00ff75 30.5px,#00ff80 97.5px,#00ff56 101.5px,#00ff64 107.5px,#00ff84 110.5px,#00ff82 132.5px,#00ff7c 138.5px,#00ffa2 157.5px,#00ffad 384.5px,#00ff90 385.5px,#00ff3c 386.5px,#00ff1e 387.5px,#00ff2e 398.5px,#00ff4b 399.5px,#00ffa0 400.5px,#00ffb9 401.5px,#00ffad 412.5px,#00ffab 437.5px,#00ff8e 440.5px,#00ff91 446.5px,#00ffad 449.5px,#00ffa5 454.5px,#00ff8e 457.5px,#00ff8e 467px)"></i><i style="left:339px;width:1px;background:linear-gradient(#00ff65 0px,#00ff68 16.5px,#00ff45 17.5px,#00ff06 18.5px,#59ff00 19.5px,#81ff00 21.5px,#9bff00 23.5px,#75ff00 26.5px,#59ff00 27.5px,#00ff07 28.5px,#00ff47 29.5px,#00ff6b 30.5px,#00ff76 97.5px,#00ff51 101.5px,#00ff5e 107.5px,#00ff7a 110.5px,#00ff74 133.5px,#00ff7a 139.5px,#00ff98 159.5px,#00ffa1 341.5px,#00ff71 344.5px,#00ff68 350.5px,#00ff4e 352.5px,#00ff55 364.5px,#00ff6f 366.5px,#00ff6f 384.5px,#00ff57 385.5px,#00ff12 386.5px,#0aff00 388.5px,#0aff00 398.5px,#00ff21 399.5px,#00ff66 400.5px,#00ff7a 401.5px,#00ff6f 423.5px,#00ff6c 437.5px,#00ff50 440.5px,#00ff52 446.5px,#00ff6f 449.5px,#00ff67 454.5px,#00ff50 457.5px,#00ff4e 465.5px,#00ff62 467px)"></i><i style="left:340px;width:1px;background:linear-gradient(#00ff81 0px,#00ff84 16.5px,#00ff5b 17.5px,#00ff11 18.5px,#56ff00 19.5px,#81ff00 21.5px,#9bff00 23.5px,#75ff00 26.5px,#56ff00 27.5px,#00ff12 28.5px,#00ff5d 29.5px,#00ff87 30.5px,#00ff91 97.5px,#00ff5f 100.5px,#00ff5f 106.5px,#00ff94 109.5px,#00ff92 132.5px,#00ff80 136.5px,#00ff9c 142.5px,#00ffb4 160.5px,#00ffb8 341.5px,#00ff27 344.5px,#00ff13 350.5px,#35ff00 352.5px,#35ff00 363.5px,#00ff13 365.5px,#00ff20 369.5px,#00ff18 385.5px,#00ff01 386.5px,#0aff00 398.5px,#00ff28 400.5px,#00ff1e 437.5px,#00ff02 440.5px,#00ff04 446.5px,#00ff20 449.5px,#00ff18 454.5px,#00ff02 457.5px,#00ff08 465.5px,#00ff38 467px)"></i><i style="left:341px;width:1px;background:linear-gradient(#00ff80 0px,#00ff82 16.5px,#00ff5a 17.5px,#00ff10 18.5px,#56ff00 19.5px,#81ff00 21.5px,#9bff00 23.5px,#75ff00 26.5px,#56ff00 27.5px,#00ff11 28.5px,#00ff5c 29.5px,#00ff85 30.5px,#00ff90 97.5px,#00ff5e 100.5px,#00ff5f 106.5px,#00ff92 109.5px,#00ff90 132.5px,#00ff80 137.5px,#00ff9b 142.5px,#00ffb3 161.5px,#00ffbe 349.5px,#00ff8d 350.5px,#00ff01 351.5px,#52ff00 352.5px,#52ff00 363.5px,#00ff01 364.5px,#00ff8d 365.5px,#00ffbe 366.5px,#00ffbe 384.5px,#00ff95 385.5px,#00ff22 386.5px,#0aff00 387.5px,#0aff00 398.5px,#00ff31 399.5px,#00ffa5 400.5px,#00ffc9 401.5px,#00ffbe 423.5px,#00ffbb 437.5px,#00ff9f 440.5px,#00ffa1 446.5px,#00ffbe 449.5px,#00ffb6 454.5px,#00ff9f 457.5px,#00ff9e 467px)"></i><i style="left:342px;width:1px;background:linear-gradient(#00ff76 0px,#00ff78 16.5px,#00ff52 17.5px,#00ff0c 18.5px,#57ff00 19.5px,#81ff00 21.5px,#9bff00 23.5px,#75ff00 26.5px,#57ff00 27.5px,#00ff0d 28.5px,#00ff54 29.5px,#00ff7b 30.5px,#00ff86 97.5px,#00ff58 101.5px,#00ff5a 106.5px,#00ff8a 110.5px,#00ff87 132.5px,#00ff7a 137.5px,#00ff91 143.5px,#00ffa9 160.5px,#00ffb3 349.5px,#00ff85 350.5px,#01ff00 351.5px,#52ff00 352.5px,#52ff00 363.5px,#01ff00 364.5px,#00ff85 365.5px,#00ffb3 366.5px,#00ffb3 384.5px,#00ff95 385.5px,#00ff3e 386.5px,#00ff20 387.5px,#00ff2f 398.5px,#00ff4e 399.5px,#00ffa5 400.5px,#00ffbf 401.5px,#00ffb3 412.5px,#00ffb1 437.5px,#00ff94 440.5px,#00ff97 446.5px,#00ffb3 449.5px,#00ffab 454.5px,#00ff94 457.5px,#00ff94 467px)"></i><i style="left:343px;width:1px;background:linear-gradient(#00ff81 0px,#00ff84 16.5px,#00ff5b 17.5px,#00ff11 18.5px,#56ff00 19.5px,#81ff00 21.5px,#9bff00 23.5px,#75ff00 26.5px,#56ff00 27.5px,#00ff12 28.5px,#00ff5d 29.5px,#00ff87 30.5px,#00ff91 97.5px,#00ff5f 100.5px,#00ff5f 106.5px,#00ff94 109.5px,#00ff92 132.5px,#00ff80 136.5px,#00ff9c 142.5px,#00ffb5 161.5px,#00ffbf 349.5px,#00ff8e 350.5px,#00ff01 351.5px,#52ff00 352.5px,#52ff00 363.5px,#00ff01 364.5px,#00ff8e 365.5px,#00ffbf 366.5px,#00ffb7 385.5px,#00ff97 387.5px,#00ffae 399.5px,#00ffcb 401.5px,#00ffbf 412.5px,#00ffbd 437.5px,#00ffa0 440.5px,#00ffa3 446.5px,#00ffbf 449.5px,#00ffb7 454.5px,#00ffa0 457.5px,#00ffa0 467px)"></i><i style="left:344px;width:1px;background:linear-gradient(#00ff7d 0px,#00ff7f 16.5px,#00ff58 17.5px,#00ff0f 18.5px,#57ff00 19.5px,#81ff00 21.5px,#9bff00 23.5px,#75ff00 26.5px,#57ff00 27.5px,#00ff10 28.5px,#00ff59 29.5px,#00ff82 30.5px,#00ff8d 97.5px,#00ff5d 100.5px,#00ff5d 106.5px,#00ff8f 109.5px,#00ff8e 132.5px,#00ff7e 137.5px,#00ff98 142.5px,#00ffb0 161.5px,#00ffbb 349.5px,#00ff94 350.5px,#00ff27 351.5px,#00ff00 352.5px,#00ff00 363.5px,#00ff27 364.5px,#00ff94 365.5px,#00ffbb 366.5px,#00ffbf 393.5px,#00ffc6 401.5px,#00ffbb 423.5px,#00ffb8 437.5px,#00ff9c 440.5px,#00ff9e 446.5px,#00ffbb 449.5px,#00ffb3 454.5px,#00ff9c 457.5px,#00ff9b 467px)"></i><i style="left:345px;width:1px;background:linear-gradient(#00ff7d 0px,#00ff80 16.5px,#00ff58 17.5px,#00ff0f 18.5px,#57ff00 19.5px,#81ff00 21.5px,#9bff00 23.5px,#75ff00 26.5px,#57ff00 27.5px,#00ff10 28.5px,#00ff5a 29.5px,#00ff83 30.5px,#00ff8e 97.5px,#00ff5d 100.5px,#00ff5e 106.5px,#00ff90 109.5px,#00ff8e 132.5px,#00ff7e 137.5px,#00ff98 142.5px,#00ffb1 161.5px,#00ffb1 350.5px,#00ff8b 352.5px,#00ff95 364.5px,#00ffbb 366.5px,#00ffbf 393.5px,#00ffc7 401.5px,#00ffbb 413.5px,#00ffb9 437.5px,#00ff9c 440.5px,#00ff9f 446.5px,#00ffbb 449.5px,#00ffb3 454.5px,#00ff9c 457.5px,#00ff9c 467px)"></i><i style="left:346px;width:1px;background:linear-gradient(#00ff79 0px,#00ff7c 16.5px,#00ff55 17.5px,#00ff0e 18.5px,#57ff00 19.5px,#81ff00 21.5px,#9bff00 23.5px,#75ff00 26.5px,#57ff00 27.5px,#00ff0e 28.5px,#00ff56 29.5px,#00ff7e 30.5px,#00ff89 97.5px,#00ff59 101.5px,#00ff5c 106.5px,#00ff8e 110.5px,#00ff8a 132.5px,#00ff7c 137.5px,#00ff94 143.5px,#00ffac 160.5px,#00ffbb 393.5px,#00ffc2 401.5px,#00ffb7 423.5px,#00ffb4 437.5px,#00ff98 440.5px,#00ff9a 446.5px,#00ffb7 449.5px,#00ffaf 454.5px,#00ff98 457.5px,#00ff97 467px)"></i><i style="left:347px;width:1px;background:linear-gradient(#00ff72 0px,#00ff74 16.5px,#00ff4f 17.5px,#00ff0b 18.5px,#58ff00 19.5px,#81ff00 21.5px,#9bff00 23.5px,#75ff00 26.5px,#58ff00 27.5px,#00ff0c 28.5px,#00ff51 29.5px,#00ff77 30.5px,#00ff82 97.5px,#00ff56 101.5px,#00ff59 106.5px,#00ff86 110.5px,#00ff84 132.5px,#00ff77 137.5px,#00ff8d 143.5px,#00ffa5 161.5px,#00ffb3 393.5px,#00ffbb 401.5px,#00ffaf 413.5px,#00ffad 437.5px,#00ff90 440.5px,#00ff93 446.5px,#00ffaf 449.5px,#00ffa7 454.5px,#00ff90 457.5px,#00ff90 467px)"></i><i style="left:348px;width:1px;background:linear-gradient(#00ff7a 0px,#00ff7d 16.5px,#00ff56 17.5px,#00ff0e 18.5px,#57ff00 19.5px,#81ff00 21.5px,#9bff00 23.5px,#75ff00 26.5px,#57ff00 27.5px,#00ff0f 28.5px,#00ff58 29.5px,#00ff80 30.5px,#00ff8b 97.5px,#00ff5c 100.5px,#00ff5c 106.5px,#00ff8d 109.5px,#00ff8c 132.5px,#00ff7d 137.5px,#00ff95 142.5px,#00ffad 160.5px,#00ffbc 393.5px,#00ffc4 401.5px,#00ffb8 413.5px,#00ffb6 437.5px,#00ff99 440.5px,#00ff9c 446.5px,#00ffb8 449.5px,#00ffb0 454.5px,#00ff99 457.5px,#00ff98 467px)"></i><i style="left:349px;width:1px;background:linear-gradient(#00ff73 0px,#00ff76 16.5px,#00ff50 17.5px,#00ff0b 18.5px,#58ff00 19.5px,#81ff00 21.5px,#9bff00 23.5px,#75ff00 26.5px,#57ff00 27.5px,#00ff0c 28.5px,#00ff52 29.5px,#00ff78 30.5px,#00ff83 97.5px,#00ff57 101.5px,#00ff59 106.5px,#00ff88 110.5px,#00ff85 132.5px,#00ff78 137.5px,#00ff8e 143.5px,#00ffa6 160.5px,#00ffb5 393.5px,#00ffbc 401.5px,#00ffb1 423.5px,#00ffae 437.5px,#00ff92 440.5px,#00ff94 446.5px,#00ffb1 449.5px,#00ffa9 454.5px,#00ff92 457.5px,#00ff91 467px)"></i><i style="left:350px;width:1px;background:linear-gradient(#00ff7e 0px,#00ff81 16.5px,#00ff59 17.5px,#00ff10 18.5px,#57ff00 19.5px,#81ff00 21.5px,#9bff00 23.5px,#75ff00 26.5px,#56ff00 27.5px,#00ff10 28.5px,#00ff5a 29.5px,#00ff83 30.5px,#00ff8e 97.5px,#00ff5b 101.5px,#00ff5e 106.5px,#00ff90 109.5px,#00ff8f 132.5px,#00ff7e 136.5px,#00ff99 143.5px,#00ffb1 160.5px,#00ffc0 393.5px,#00ffc7 401.5px,#00ffbc 423.5px,#00ffba 437.5px,#00ff9d 440.5px,#00ff9f 446.5px,#00ffbc 449.5px,#00ffb4 454.5px,#00ff9d 457.5px,#00ff9c 467px)"></i><i style="left:351px;width:1px;background:linear-gradient(#00ff78 0px,#00ff7a 16.5px,#00ff54 17.5px,#00ff0d 18.5px,#57ff00 19.5px,#81ff00 21.5px,#9bff00 23.5px,#75ff00 26.5px,#57ff00 27.5px,#00ff0e 28.5px,#00ff56 29.5px,#00ff7d 30.5px,#00ff88 97.5px,#00ff59 101.5px,#00ff5b 106.5px,#00ff8d 110.5px,#00ff89 132.5px,#00ff7b 137.5px,#00ff93 143.5px,#00ffab 160.5px,#00ffba 393.5px,#00ffc1 401.5px,#00ffb6 423.5px,#00ffb3 437.5px,#00ff97 440.5px,#00ff99 446.5px,#00ffb6 449.5px,#00ffae 454.5px,#00ff97 457.5px,#00ff96 467px)"></i><i style="left:352px;width:1px;background:linear-gradient(#00ff8c 0px,#00ff8f 16.5px,#00ff64 17.5px,#00ff15 18.5px,#55ff00 19.5px,#81ff00 21.5px,#9bff00 23.5px,#75ff00 26.5px,#55ff00 27.5px,#00ff16 28.5px,#00ff65 29.5px,#00ff91 30.5px,#00ff9c 97.5px,#00ff64 100.5px,#00ff64 106.5px,#00ff9e 109.5px,#00ff9b 132.5px,#00ff86 136.5px,#00ffa7 142.5px,#00ffc0 162.5px,#00ffce 393.5px,#00ffda 400.5px,#00ffca 408.5px,#00ffc8 437.5px,#00ffab 440.5px,#00ffad 446.5px,#00ffca 449.5px,#00ffc2 454.5px,#00ffab 457.5px,#00ffaa 467px)"></i><i style="left:353px;width:1px;background:linear-gradient(#00ff87 0px,#00ff89 16.5px,#00ff5f 17.5px,#00ff13 18.5px,#56ff00 19.5px,#81ff00 21.5px,#9bff00 23.5px,#75ff00 26.5px,#56ff00 27.5px,#00ff14 28.5px,#00ff61 29.5px,#00ff8c 30.5px,#00ff96 97.5px,#00ff61 100.5px,#00ff62 106.5px,#00ff99 109.5px,#00ff96 132.5px,#00ff83 136.5px,#00ffa1 142.5px,#00ffba 161.5px,#00ffc8 393.5px,#00ffd0 401.5px,#00ffc4 413.5px,#00ffc2 437.5px,#00ffa5 440.5px,#00ffa8 446.5px,#00ffc4 449.5px,#00ffbc 454.5px,#00ffa5 457.5px,#00ffa5 467px)"></i><i style="left:354px;width:1px;background:linear-gradient(#00ff74 0px,#00ff77 16.5px,#00ff51 17.5px,#00ff0c 18.5px,#58ff00 19.5px,#81ff00 21.5px,#9bff00 23.5px,#75ff00 26.5px,#57ff00 27.5px,#00ff0d 28.5px,#00ff53 29.5px,#00ff79 30.5px,#00ff84 97.5px,#00ff57 101.5px,#00ff5a 106.5px,#00ff89 110.5px,#00ff86 132.5px,#00ff79 137.5px,#00ff8f 143.5px,#00ffa7 160.5px,#00ffb6 393.5px,#00ffbd 401.5px,#00ffb2 423.5px,#00ffb0 437.5px,#00ff93 440.5px,#00ff95 446.5px,#00ffb2 449.5px,#00ffaa 454.5px,#00ff93 457.5px,#00ff92 467px)"></i><i style="left:355px;width:1px;background:linear-gradient(#00ff7f 0px,#00ff82 16.5px,#00ff5a 17.5px,#00ff10 18.5px,#56ff00 19.5px,#81ff00 21.5px,#9bff00 23.5px,#75ff00 26.5px,#56ff00 27.5px,#00ff11 28.5px,#00ff5b 29.5px,#00ff85 30.5px,#00ff8f 97.5px,#00ff5e 100.5px,#00ff5f 106.5px,#00ff92 109.5px,#00ff90 132.5px,#00ff7e 136.5px,#00ff9a 142.5px,#00ffb3 161.5px,#00ffc1 393.5px,#00ffc9 401.5px,#00ffbd 413.5px,#00ffbb 437.5px,#00ff9e 440.5px,#00ffa1 446.5px,#00ffbd 449.5px,#00ffb5 454.5px,#00ff9e 457.5px,#00ff9e 467px)"></i><i style="left:356px;width:1px;background:linear-gradient(#00ff76 0px,#00ff78 16.5px,#00ff52 17.5px,#00ff0d 18.5px,#57ff00 19.5px,#81ff00 21.5px,#9bff00 23.5px,#75ff00 26.5px,#57ff00 27.5px,#00ff0d 28.5px,#00ff54 29.5px,#00ff7b 30.5px,#00ff86 97.5px,#00ff58 101.5px,#00ff5a 106.5px,#00ff8b 110.5px,#00ff88 132.5px,#00ff7a 137.5px,#00ff91 143.5px,#00ffa9 160.5px,#00ffb1 326.5px,#00ff7c 329.5px,#00ff7e 393.5px,#00ff85 401.5px,#00ff7a 423.5px,#00ff77 437.5px,#00ff5b 440.5px,#00ff5d 446.5px,#00ff7a 449.5px,#00ff72 454.5px,#00ff5b 457.5px,#00ff58 465.5px,#00ff6d 467px)"></i><i style="left:357px;width:1px;background:linear-gradient(#00ff76 0px,#00ff79 16.5px,#00ff52 17.5px,#00ff0d 18.5px,#57ff00 19.5px,#81ff00 21.5px,#9bff00 23.5px,#75ff00 26.5px,#57ff00 27.5px,#00ff0d 28.5px,#00ff54 29.5px,#00ff7b 30.5px,#00ff86 97.5px,#00ff58 101.5px,#00ff5b 106.5px,#00ff8b 110.5px,#00ff88 132.5px,#00ff7a 137.5px,#00ff91 142.5px,#00ffa9 161.5px,#00ffb4 325.5px,#00ffa9 326.5px,#00ff61 327.5px,#00ff01 328.5px,#7aff00 329.5px,#8dff00 331.5px,#91ff00 367.5px,#9fff00 374.5px,#91ff00 380.5px,#8eff00 464.5px,#7aff00 465.5px,#2aff00 467px)"></i><i style="left:358px;width:1px;background:linear-gradient(#00ff70 0px,#00ff72 16.5px,#00ff4d 17.5px,#00ff0a 18.5px,#58ff00 19.5px,#81ff00 21.5px,#9bff00 23.5px,#75ff00 26.5px,#58ff00 27.5px,#00ff0b 28.5px,#00ff4f 29.5px,#00ff75 30.5px,#00ff80 97.5px,#00ff56 101.5px,#00ff64 107.5px,#00ff84 110.5px,#00ff82 132.5px,#00ff7c 138.5px,#00ffa2 157.5px,#00ffad 366.5px,#00ff7c 367.5px,#1fff00 368.5px,#76ff00 369.5px,#76ff00 378.5px,#1fff00 379.5px,#00ff7c 380.5px,#00ffad 381.5px,#00ffb1 393.5px,#00ffb9 401.5px,#00ffad 412.5px,#00ffab 437.5px,#00ff8e 440.5px,#00ff91 446.5px,#00ffad 449.5px,#00ffa5 454.5px,#00ff8e 457.5px,#00ff8e 467px)"></i><i style="left:359px;width:1px;background:linear-gradient(#00ff74 0px,#00ff76 16.5px,#00ff51 17.5px,#00ff0c 18.5px,#58ff00 19.5px,#81ff00 21.5px,#9bff00 23.5px,#75ff00 26.5px,#57ff00 27.5px,#00ff0c 28.5px,#00ff52 29.5px,#00ff79 30.5px,#00ff84 97.5px,#00ff57 101.5px,#00ff5a 106.5px,#00ff89 110.5px,#00ff88 131.5px,#00ff4b 134.5px,#00ff43 188.5px,#00ff49 306.5px,#00ffad 309.5px,#00ffb2 366.5px,#00ff72 367.5px,#74ff00 368.5px,#e3ff00 369.5px,#e3ff00 378.5px,#74ff00 379.5px,#00ff72 380.5px,#00ffb2 381.5px,#00ffbd 394.5px,#00ffb6 402.5px,#00ffaf 437.5px,#00ff93 440.5px,#00ff95 446.5px,#00ffb2 449.5px,#00ffaa 454.5px,#00ff93 457.5px,#00ff92 467px)"></i><i style="left:360px;width:1px;background:linear-gradient(#00ff72 0px,#00ff75 16.5px,#00ff4f 17.5px,#00ff0b 18.5px,#58ff00 19.5px,#81ff00 21.5px,#9bff00 23.5px,#75ff00 26.5px,#58ff00 27.5px,#00ff0c 28.5px,#00ff51 29.5px,#00ff77 30.5px,#00ff83 97.5px,#00ff57 101.5px,#00ff59 106.5px,#00ff87 110.5px,#00ff89 131.5px,#00ff65 135.5px,#00ff7f 164.5px,#00ff87 306.5px,#00ffb0 310.5px,#00ffb0 343.5px,#00ffa1 344.5px,#00ff77 345.5px,#00ff68 348.5px,#00ff68 361.5px,#00ff77 362.5px,#00ffa1 363.5px,#00ffb0 366.5px,#00ff71 367.5px,#75ff00 368.5px,#e3ff00 369.5px,#e3ff00 378.5px,#75ff00 379.5px,#00ff71 380.5px,#00ffb0 381.5px,#00ffbb 394.5px,#00ffb4 402.5px,#00ffae 437.5px,#00ff91 440.5px,#00ff93 446.5px,#00ffb0 449.5px,#00ffa8 454.5px,#00ff91 457.5px,#00ff90 467px)"></i><i style="left:361px;width:1px;background:linear-gradient(#00ff7b 0px,#00ff7e 16.5px,#00ff57 17.5px,#00ff0f 18.5px,#57ff00 19.5px,#81ff00 21.5px,#9bff00 23.5px,#75ff00 26.5px,#57ff00 27.5px,#00ff0f 28.5px,#00ff58 29.5px,#00ff81 30.5px,#00ff8c 97.5px,#00ff5c 100.5px,#00ff5d 106.5px,#00ff8e 109.5px,#00ff8d 132.5px,#00ff7d 137.5px,#00ff96 142.5px,#00ffaf 161.5px,#00ffb9 343.5px,#00ff7f 344.5px,#45ff00 345.5px,#abff00 346.5px,#abff00 361.5px,#45ff00 362.5px,#00ff7f 363.5px,#00ffb9 364.5px,#00ffb9 366.5px,#00ff78 367.5px,#71ff00 368.5px,#e3ff00 369.5px,#e3ff00 378.5px,#71ff00 379.5px,#00ff78 380.5px,#00ffb9 381.5px,#00ffbd 393.5px,#00ffc5 401.5px,#00ffb9 412.5px,#00ffb7 437.5px,#00ff9a 440.5px,#00ff9d 446.5px,#00ffb9 449.5px,#00ffb1 454.5px,#00ff9a 457.5px,#00ff9a 467px)"></i><i style="left:362px;width:1px;background:linear-gradient(#00ff80 0px,#00ff83 16.5px,#00ff5a 17.5px,#00ff10 18.5px,#56ff00 19.5px,#81ff00 21.5px,#9bff00 23.5px,#75ff00 26.5px,#56ff00 27.5px,#00ff11 28.5px,#00ff5c 29.5px,#00ff86 30.5px,#00ff90 97.5px,#00ff5e 100.5px,#00ff5f 106.5px,#00ff93 109.5px,#00ff91 132.5px,#00ff7f 136.5px,#00ff9b 142.5px,#00ffb3 160.5px,#00ffbe 343.5px,#00ff74 344.5px,#a9ff00 345.5px,#fff000 346.5px,#fff000 361.5px,#a9ff00 362.5px,#00ff74 363.5px,#00ffbe 364.5px,#00ffbe 366.5px,#00ff7c 367.5px,#70ff00 368.5px,#e3ff00 369.5px,#e3ff00 378.5px,#70ff00 379.5px,#00ff7c 380.5px,#00ffbe 381.5px,#00ffc2 393.5px,#00ffca 401.5px,#00ffbe 413.5px,#00ffbc 437.5px,#00ff9f 440.5px,#00ffa1 446.5px,#00ffbe 449.5px,#00ffb6 454.5px,#00ff9f 457.5px,#00ff9e 467px)"></i><i style="left:363px;width:1px;background:linear-gradient(#00ff81 0px,#00ff83 16.5px,#00ff5b 17.5px,#00ff11 18.5px,#56ff00 19.5px,#81ff00 21.5px,#9bff00 23.5px,#75ff00 26.5px,#56ff00 27.5px,#00ff11 28.5px,#00ff5c 29.5px,#00ff86 30.5px,#00ff91 97.5px,#00ff5f 100.5px,#00ff5f 106.5px,#00ff93 109.5px,#00ff91 132.5px,#00ff7f 136.5px,#00ff9b 142.5px,#00ffb4 160.5px,#00ffbe 343.5px,#00ff74 344.5px,#a9ff00 345.5px,#fff000 346.5px,#fff000 361.5px,#a9ff00 362.5px,#00ff74 363.5px,#00ffbe 364.5px,#00ffbe 366.5px,#00ff7c 367.5px,#6fff00 368.5px,#e3ff00 369.5px,#e3ff00 378.5px,#6fff00 379.5px,#00ff7c 380.5px,#00ffbe 381.5px,#00ffc2 393.5px,#00ffca 401.5px,#00ffbe 413.5px,#00ffbc 437.5px,#00ff9f 440.5px,#00ffa2 446.5px,#00ffbe 449.5px,#00ffb6 454.5px,#00ff9f 457.5px,#00ff9f 467px)"></i><i style="left:364px;width:1px;background:linear-gradient(#00ff7f 0px,#00ff81 16.5px,#00ff59 17.5px,#00ff10 18.5px,#57ff00 19.5px,#81ff00 21.5px,#9bff00 23.5px,#75ff00 26.5px,#56ff00 27.5px,#00ff11 28.5px,#00ff5b 29.5px,#00ff84 30.5px,#00ff8f 97.5px,#00ff5b 101.5px,#00ff5e 106.5px,#00ff91 109.5px,#00ff8f 132.5px,#00ff7f 137.5px,#00ff99 142.5px,#00ffb2 160.5px,#00ffbc 343.5px,#00ff72 344.5px,#aaff00 345.5px,#fff000 346.5px,#fff000 361.5px,#aaff00 362.5px,#00ff72 363.5px,#00ffbc 364.5px,#00ffbc 366.5px,#00ff7b 367.5px,#70ff00 368.5px,#e3ff00 369.5px,#e3ff00 378.5px,#70ff00 379.5px,#00ff7b 380.5px,#00ffbc 381.5px,#00ffc0 393.5px,#00ffc8 401.5px,#00ffbc 412.5px,#00ffba 437.5px,#00ff9d 440.5px,#00ffa0 446.5px,#00ffbc 449.5px,#00ffb4 454.5px,#00ff9d 457.5px,#00ff9d 467px)"></i><i style="left:365px;width:1px;background:linear-gradient(#00ff84 0px,#00ff86 16.5px,#00ff5d 17.5px,#00ff12 18.5px,#56ff00 19.5px,#81ff00 21.5px,#9bff00 23.5px,#75ff00 26.5px,#56ff00 27.5px,#00ff13 28.5px,#00ff5f 29.5px,#00ff89 30.5px,#00ff94 97.5px,#00ff60 100.5px,#00ff60 106.5px,#00ff96 109.5px,#00ff94 132.5px,#00ff81 136.5px,#00ff9f 142.5px,#00ffb7 161.5px,#00ffc2 343.5px,#00ff77 344.5px,#a8ff00 345.5px,#fff000 346.5px,#fff000 361.5px,#a8ff00 362.5px,#00ff77 363.5px,#00ffc2 364.5px,#00ffc2 366.5px,#00ff7f 367.5px,#6eff00 368.5px,#e3ff00 369.5px,#e3ff00 378.5px,#6eff00 379.5px,#00ff7f 380.5px,#00ffc2 381.5px,#00ffcd 394.5px,#00ffc6 402.5px,#00ffbf 437.5px,#00ffa3 440.5px,#00ffa5 446.5px,#00ffc2 449.5px,#00ffba 454.5px,#00ffa3 457.5px,#00ffa2 467px)"></i><i style="left:366px;width:1px;background:linear-gradient(#00ff7f 0px,#00ff82 16.5px,#00ff59 17.5px,#00ff10 18.5px,#57ff00 19.5px,#81ff00 21.5px,#9bff00 23.5px,#75ff00 26.5px,#57ff00 27.5px,#00ff0f 28.5px,#00ff5b 29.5px,#00ff84 30.5px,#00ff8f 97.5px,#00ff5e 100.5px,#00ff5e 106.5px,#00ff91 109.5px,#00ff90 132.5px,#00ff7e 136.5px,#00ff9a 143.5px,#00ffb2 160.5px,#00ffbd 343.5px,#00ff73 344.5px,#a9ff00 345.5px,#fff000 346.5px,#fff000 361.5px,#a9ff00 362.5px,#00ff73 363.5px,#00ffbd 364.5px,#00ffbd 366.5px,#00ff7b 367.5px,#70ff00 368.5px,#e3ff00 369.5px,#e3ff00 378.5px,#70ff00 379.5px,#00ff7b 380.5px,#00ffbd 381.5px,#00ffc8 394.5px,#00ffc1 402.5px,#00ffbb 437.5px,#00ff9e 440.5px,#00ffa0 446.5px,#00ffbd 449.5px,#00ffb5 454.5px,#00ff9e 457.5px,#00ff9d 467px)"></i><i style="left:367px;width:1px;background:linear-gradient(#00ff7b 0px,#00ff7e 16.5px,#00ff56 17.5px,#00ff0f 18.5px,#57ff00 19.5px,#81ff00 21.5px,#9bff00 23.5px,#5dff00 27.5px,#13ff00 28.5px,#00ff57 30.5px,#00ff82 34.5px,#00ff8b 97.5px,#00ff5c 100.5px,#00ff5d 106.5px,#00ff8e 109.5px,#00ff8c 132.5px,#00ff7d 137.5px,#00ff96 142.5px,#00ffae 160.5px,#00ffb9 343.5px,#00ff70 344.5px,#abff00 345.5px,#fff000 346.5px,#fff000 361.5px,#abff00 362.5px,#00ff70 363.5px,#00ffb9 364.5px,#00ffb9 366.5px,#00ff86 367.5px,#17ff00 368.5px,#71ff00 369.5px,#71ff00 378.5px,#17ff00 379.5px,#00ff86 380.5px,#00ffb9 381.5px,#00ffbd 393.5px,#00ffc5 401.5px,#00ffb9 412.5px,#00ffb7 437.5px,#00ff9a 440.5px,#00ff9c 446.5px,#00ffb9 449.5px,#00ffb1 454.5px,#00ff9a 457.5px,#00ff99 467px)"></i><i style="left:368px;width:1px;background:linear-gradient(#00ff78 0px,#00ff7b 16.5px,#00ff54 17.5px,#00ff0e 18.5px,#57ff00 19.5px,#81ff00 21.5px,#9bff00 23.5px,#5dff00 27.5px,#19ff00 28.5px,#00ff17 29.5px,#00ff2d 30.5px,#00ff4b 34.5px,#00ff7f 38.5px,#00ff89 97.5px,#00ff59 101.5px,#00ff5c 106.5px,#00ff8b 109.5px,#00ff8a 132.5px,#00ff7b 137.5px,#00ff93 142.5px,#00ffac 161.5px,#00ffb6 343.5px,#00ff6e 344.5px,#acff00 345.5px,#fff000 346.5px,#fff000 361.5px,#acff00 362.5px,#00ff6e 363.5px,#00ffb6 364.5px,#00ffa9 367.5px,#00ff83 368.5px,#00ff76 372.5px,#00ff76 378.5px,#00ff83 379.5px,#00ffa9 380.5px,#00ffb6 384.5px,#00ffc2 394.5px,#00ffba 402.5px,#00ffb4 437.5px,#00ff97 440.5px,#00ff9a 446.5px,#00ffb6 449.5px,#00ffae 454.5px,#00ff97 457.5px,#00ff97 467px)"></i><i style="left:369px;width:1px;background:linear-gradient(#00ff7d 0px,#00ff80 16.5px,#00ff58 17.5px,#00ff0f 18.5px,#57ff00 19.5px,#81ff00 21.5px,#9bff00 23.5px,#75ff00 26.5px,#57ff00 27.5px,#00ff0a 28.5px,#00ff42 29.5px,#00ff53 30.5px,#00ff2d 34.5px,#00ff42 38.5px,#00ff85 43.5px,#00ff8d 97.5px,#00ff5d 100.5px,#00ff5e 106.5px,#00ff90 109.5px,#00ff8e 132.5px,#00ff7e 137.5px,#00ff98 142.5px,#00ffb0 160.5px,#00ffb6 343.5px,#00ff6d 344.5px,#acff00 345.5px,#fff000 346.5px,#fff000 361.5px,#acff00 362.5px,#00ff6d 363.5px,#00ffb6 364.5px,#00ffba 393.5px,#00ffc1 401.5px,#00ffb6 423.5px,#00ffb3 437.5px,#00ff97 440.5px,#00ff99 446.5px,#00ffb6 449.5px,#00ffae 454.5px,#00ff97 457.5px,#00ff98 467px)"></i><i style="left:370px;width:1px;background:linear-gradient(#00ff8a 0px,#00ff8d 16.5px,#00ff62 17.5px,#00ff14 18.5px,#55ff00 19.5px,#81ff00 21.5px,#9bff00 23.5px,#75ff00 26.5px,#55ff00 27.5px,#00ff15 28.5px,#00ff64 29.5px,#00ff90 30.5px,#00ff7a 33.5px,#00ff2d 38.5px,#00ff3b 42.5px,#00ff8f 47.5px,#00ff9a 97.5px,#00ff63 100.5px,#00ff63 106.5px,#00ff9c 109.5px,#00ff9a 132.5px,#00ff85 136.5px,#00ffa5 142.5px,#00ffbe 161.5px,#00ffbf 286.5px,#00ff02 289.5px,#0aff00 343.5px,#46ff00 344.5px,#f0ff00 345.5px,#fff000 347.5px,#fff000 361.5px,#f0ff00 362.5px,#46ff00 363.5px,#0aff00 364.5px,#0aff00 464.5px,#31ff00 465.5px,#00ff21 467px)"></i><i style="left:371px;width:1px;background:linear-gradient(#00ff7b 0px,#00ff7e 16.5px,#00ff56 17.5px,#00ff0f 18.5px,#57ff00 19.5px,#81ff00 21.5px,#9bff00 23.5px,#75ff00 26.5px,#57ff00 27.5px,#00ff0f 28.5px,#00ff58 29.5px,#00ff80 30.5px,#00ff78 37.5px,#00ff2d 43.5px,#00ff3c 47.5px,#00ff83 52.5px,#00ff8b 97.5px,#00ff5c 100.5px,#00ff5d 106.5px,#00ff8e 109.5px,#00ff8c 132.5px,#00ff7d 137.5px,#00ff96 142.5px,#00ffae 161.5px,#00ffb4 343.5px,#00ff7a 344.5px,#48ff00 345.5px,#adff00 346.5px,#adff00 361.5px,#48ff00 362.5px,#00ff7a 363.5px,#00ffb4 364.5px,#00ffb8 393.5px,#00ffbf 401.5px,#00ffb4 423.5px,#00ffb1 437.5px,#00ff95 440.5px,#00ff97 446.5px,#00ffb4 449.5px,#00ffac 454.5px,#00ff95 457.5px,#00ff96 467px)"></i><i style="left:372px;width:1px;background:linear-gradient(#00ff79 0px,#00ff7b 16.5px,#00ff54 17.5px,#00ff0e 18.5px,#57ff00 19.5px,#81ff00 21.5px,#9bff00 23.5px,#75ff00 26.5px,#57ff00 27.5px,#00ff0e 28.5px,#00ff56 29.5px,#00ff7e 30.5px,#00ff7d 41.5px,#00ff2f 47.5px,#00ff34 51.5px,#00ff83 57.5px,#00ff89 97.5px,#00ff59 101.5px,#00ff5c 106.5px,#00ff8e 110.5px,#00ff8a 132.5px,#00ff7c 137.5px,#00ff94 143.5px,#00ffac 160.5px,#00ffb7 343.5px,#00ffa8 344.5px,#00ff7d 345.5px,#00ff6e 348.5px,#00ff6e 361.5px,#00ff7d 362.5px,#00ffa8 363.5px,#00ffb7 366.5px,#00ffbb 393.5px,#00ffc2 401.5px,#00ffb7 423.5px,#00ffb4 437.5px,#00ff98 440.5px,#00ff9a 446.5px,#00ffb7 449.5px,#00ffae 454.5px,#00ff98 457.5px,#00ff97 467px)"></i><i style="left:373px;width:1px;background:linear-gradient(#00ff72 0px,#00ff74 16.5px,#00ff4f 17.5px,#00ff0b 18.5px,#58ff00 19.5px,#81ff00 21.5px,#9bff00 23.5px,#75ff00 26.5px,#58ff00 27.5px,#00ff0c 28.5px,#00ff51 29.5px,#00ff77 30.5px,#00ff75 46.5px,#00ff2e 52.5px,#00ff36 56.5px,#00ff7d 62.5px,#00ff82 97.5px,#00ff56 101.5px,#00ff59 106.5px,#00ff86 110.5px,#00ff84 132.5px,#00ff77 137.5px,#00ff8d 143.5px,#00ffa5 160.5px,#00ffb3 393.5px,#00ffbb 401.5px,#00ffaf 413.5px,#00ffad 437.5px,#00ff90 440.5px,#00ff93 446.5px,#00ffaf 449.5px,#00ffa7 454.5px,#00ff90 457.5px,#00ff90 467px)"></i><i style="left:374px;width:1px;background:linear-gradient(#00ff76 0px,#00ff78 16.5px,#00ff52 17.5px,#00ff0d 18.5px,#57ff00 19.5px,#81ff00 21.5px,#9bff00 23.5px,#75ff00 26.5px,#57ff00 27.5px,#00ff0d 28.5px,#00ff54 29.5px,#00ff7b 30.5px,#00ff77 51.5px,#00ff2d 57.5px,#00ff3b 61.5px,#00ff80 66.5px,#00ff86 97.5px,#00ff58 101.5px,#00ff5a 106.5px,#00ff8b 110.5px,#00ff88 132.5px,#00ff7a 137.5px,#00ff91 143.5px,#00ffa9 160.5px,#00ffb8 393.5px,#00ffbf 401.5px,#00ffb4 423.5px,#00ffb1 437.5px,#00ff95 440.5px,#00ff97 446.5px,#00ffb4 449.5px,#00ffac 454.5px,#00ff95 457.5px,#00ff94 467px)"></i><i style="left:375px;width:1px;background:linear-gradient(#00ff80 0px,#00ff82 16.5px,#00ff5a 17.5px,#00ff10 18.5px,#56ff00 19.5px,#81ff00 21.5px,#9bff00 23.5px,#75ff00 26.5px,#56ff00 27.5px,#00ff11 28.5px,#00ff5c 29.5px,#00ff85 30.5px,#00ff87 55.5px,#00ff30 61.5px,#00ff34 65.5px,#00ff8c 71.5px,#00ff90 97.5px,#00ff5e 100.5px,#00ff5f 106.5px,#00ff92 109.5px,#00ff90 132.5px,#00ff80 137.5px,#00ff9b 142.5px,#00ffb3 161.5px,#00ffc2 393.5px,#00ffc9 401.5px,#00ffbe 423.5px,#00ffbb 437.5px,#00ff9f 440.5px,#00ffa1 446.5px,#00ffbe 449.5px,#00ffb6 454.5px,#00ff9f 457.5px,#00ff9e 467px)"></i><i style="left:376px;width:1px;background:linear-gradient(#00ff81 0px,#00ff83 16.5px,#00ff5b 17.5px,#00ff11 18.5px,#56ff00 19.5px,#81ff00 21.5px,#9bff00 23.5px,#75ff00 26.5px,#56ff00 27.5px,#00ff11 28.5px,#00ff5c 29.5px,#00ff86 30.5px,#00ff86 60.5px,#00ff2e 66.5px,#00ff37 70.5px,#00ff89 75.5px,#00ff91 97.5px,#00ff5f 100.5px,#00ff5f 106.5px,#00ff93 109.5px,#00ff91 132.5px,#00ff7f 136.5px,#00ff9b 142.5px,#00ffb3 160.5px,#00ffc2 393.5px,#00ffca 401.5px,#00ffbe 413.5px,#00ffbc 437.5px,#00ff9f 440.5px,#00ffa2 446.5px,#00ffbe 449.5px,#00ffb6 454.5px,#00ff9f 457.5px,#00ff9f 467px)"></i><i style="left:377px;width:1px;background:linear-gradient(#00ff6a 0px,#00ff6d 16.5px,#00ff49 17.5px,#00ff08 18.5px,#58ff00 19.5px,#81ff00 21.5px,#9bff00 23.5px,#75ff00 26.5px,#58ff00 27.5px,#00ff09 28.5px,#00ff4b 29.5px,#00ff6f 30.5px,#00ff6f 65.5px,#00ff2d 71.5px,#00ff38 75.5px,#00ff76 80.5px,#00ff7b 97.5px,#00ff53 101.5px,#00ff61 107.5px,#00ff7f 110.5px,#00ff7d 132.5px,#00ff78 138.5px,#00ff9d 158.5px,#00ffac 393.5px,#00ffb3 401.5px,#00ffa8 423.5px,#00ffa5 437.5px,#00ff89 440.5px,#00ff8b 446.5px,#00ffa8 449.5px,#00ffa0 454.5px,#00ff89 457.5px,#00ff88 467px)"></i><i style="left:378px;width:1px;background:linear-gradient(#00ff6b 0px,#00ff6b 16.5px,#00ff48 17.5px,#00ff07 18.5px,#59ff00 19.5px,#81ff00 21.5px,#9bff00 23.5px,#75ff00 26.5px,#58ff00 27.5px,#00ff08 28.5px,#00ff49 29.5px,#00ff6d 30.5px,#00ff6b 70.5px,#00ff2d 76.5px,#00ff3b 80.5px,#00ff76 85.5px,#00ff79 97.5px,#00ff53 101.5px,#00ff63 107.5px,#00ff83 110.5px,#00ff86 132.5px,#00ff79 137.5px,#00ff90 143.5px,#00ffa7 160.5px,#00ffb6 393.5px,#00ffbe 401.5px,#00ffb2 413.5px,#00ffb0 437.5px,#00ff93 440.5px,#00ff95 446.5px,#00ffb2 449.5px,#00ffaa 454.5px,#00ff93 457.5px,#00ff92 467px)"></i><i style="left:379px;width:1px;background:linear-gradient(#00ff3c 0px,#00ff34 16.5px,#00ff1d 17.5px,#16ff00 18.5px,#5eff00 19.5px,#9bff00 23.5px,#5eff00 27.5px,#16ff00 28.5px,#00ff1d 29.5px,#00ff35 30.5px,#00ff36 88.5px,#00ff4d 107.5px,#00ff71 115.5px,#00ff83 125.5px,#00ff78 133.5px,#00ff79 138.5px,#00ff9e 157.5px,#00ffad 393.5px,#00ffb5 401.5px,#00ffa9 413.5px,#00ffa7 437.5px,#00ff8a 440.5px,#00ff8d 446.5px,#00ffa9 449.5px,#00ffa1 454.5px,#00ff8a 457.5px,#00ff8a 467px)"></i><i style="left:380px;width:1px;background:linear-gradient(#00ff33 0px,#00ff29 16.5px,#00ff14 17.5px,#1dff00 18.5px,#5fff00 19.5px,#9bff00 23.5px,#5fff00 27.5px,#1dff00 28.5px,#00ff15 29.5px,#00ff2a 31.5px,#00ff37 97.5px,#00ff48 107.5px,#00ff80 121.5px,#00ff76 133.5px,#00ff7e 139.5px,#00ff9c 160.5px,#00ffab 393.5px,#00ffb2 401.5px,#00ffa7 423.5px,#00ffa4 437.5px,#00ff88 440.5px,#00ff8a 446.5px,#00ffa7 449.5px,#00ff9f 454.5px,#00ff88 457.5px,#00ff87 467px)"></i><i style="left:381px;width:1px;background:linear-gradient(#00ff3a 0px,#00ff2e 4.5px,#00ff2e 16.5px,#00ff18 17.5px,#1aff00 18.5px,#5eff00 19.5px,#9bff00 23.5px,#5eff00 27.5px,#1aff00 28.5px,#00ff18 29.5px,#00ff2e 30.5px,#00ff35 96.5px,#00ff50 107.5px,#00ff75 112.5px,#00ff98 121.5px,#00ff92 132.5px,#00ff80 136.5px,#00ff9c 142.5px,#00ffb4 161.5px,#00ffc3 393.5px,#00ffca 401.5px,#00ffbf 423.5px,#00ffbd 437.5px,#00ffa0 440.5px,#00ffa2 446.5px,#00ffbf 449.5px,#00ffb7 454.5px,#00ffa0 457.5px,#00ff9f 467px)"></i><i style="left:382px;width:1px;background:linear-gradient(#00ff37 0px,#00ff2c 5.5px,#00ff2c 16.5px,#00ff16 17.5px,#1bff00 18.5px,#5eff00 19.5px,#9bff00 23.5px,#5eff00 27.5px,#1bff00 28.5px,#00ff17 29.5px,#00ff2d 31.5px,#00ff37 100.5px,#00ff4d 107.5px,#00ff74 114.5px,#00ff8e 121.5px,#00ff89 132.5px,#00ff7b 137.5px,#00ff93 143.5px,#00ffaa 163.5px,#00ffb8 393.5px,#00ffbf 401.5px,#00ffb4 423.5px,#00ffb2 437.5px,#00ff95 440.5px,#00ff97 446.5px,#00ffb4 449.5px,#00ffac 454.5px,#00ff95 457.5px,#00ff95 467px)"></i><i style="left:383px;width:1px;background:linear-gradient(#00ff37 0px,#00ff2b 6.5px,#00ff2c 16.5px,#00ff16 17.5px,#1cff00 18.5px,#5eff00 19.5px,#9bff00 23.5px,#5eff00 27.5px,#1bff00 28.5px,#00ff17 29.5px,#00ff2c 30.5px,#00ff3a 105.5px,#00ff6d 112.5px,#00ff8e 121.5px,#00ff88 132.5px,#00ff7a 137.5px,#00ff92 143.5px,#00ffa7 164.5px,#00ffb5 393.5px,#00ffbd 401.5px,#00ffb1 413.5px,#00ffaf 437.5px,#00ff92 440.5px,#00ff95 446.5px,#00ffb1 449.5px,#00ffa9 454.5px,#00ff92 457.5px,#00ff93 467px)"></i><i style="left:384px;width:1px;background:linear-gradient(#00ff37 0px,#00ff2b 6.5px,#00ff2b 16.5px,#00ff16 17.5px,#1cff00 18.5px,#5eff00 19.5px,#9bff00 23.5px,#5eff00 27.5px,#1bff00 28.5px,#00ff17 29.5px,#00ff2c 30.5px,#00ff39 96.5px,#00ff39 108.5px,#00ff5e 109.5px,#00ff8d 121.5px,#00ff88 132.5px,#00ff7a 137.5px,#00ff91 143.5px,#00ffa5 171.5px,#00ffb2 393.5px,#00ffb9 401.5px,#00ffae 423.5px,#00ffac 437.5px,#00ff8f 440.5px,#00ff91 446.5px,#00ffae 449.5px,#00ffa6 454.5px,#00ff8f 457.5px,#00ff91 467px)"></i><i style="left:385px;width:1px;background:linear-gradient(#00ff41 0px,#00ff38 16.5px,#14ff00 18.5px,#5dff00 19.5px,#9bff00 23.5px,#5dff00 27.5px,#13ff00 28.5px,#00ff38 30.5px,#00ff40 104.5px,#00ff3a 108.5px,#00ff64 109.5px,#00ff8d 121.5px,#00ff88 132.5px,#00ff7a 137.5px,#00ff91 142.5px,#00ffa7 197.5px,#00ffaf 393.5px,#00ffb7 401.5px,#00ffab 413.5px,#00ffa9 437.5px,#00ff8c 440.5px,#00ff8e 446.5px,#00ffab 449.5px,#00ffa3 454.5px,#00ff8c 457.5px,#00ff8f 467px)"></i><i style="left:386px;width:1px;background:linear-gradient(#77ff00 0px,#81ff00 181.5px,#e1ff00 214.5px,#fff900 225.5px,#ffc900 257.5px,#ffa900 258.5px,#ffa500 261.5px,#ff8500 262.5px,#ff4900 263.5px,#ff4200 274.5px,#ffa100 281.5px,#ff9900 311.5px,#ff8900 312.5px,#ff5400 313.5px,#ff4500 316.5px,#ff5300 323.5px,#ff9500 327.5px,#ff9000 352.5px,#ff6100 353.5px,#ff4b00 354.5px,#ff5900 361.5px,#ff9400 364.5px,#ff9100 387.5px,#ff5100 389.5px,#ff5e00 396.5px,#ff9900 400.5px,#ff9500 422.5px,#ff5900 424.5px,#ff5e00 430.5px,#ff9900 435.5px,#ff9600 456.5px,#ff6200 458.5px,#ff6f00 465.5px,#ff7d00 467px)"></i><i style="left:387px;width:1px;background:linear-gradient(#e3ff00 0px,#edff00 186.5px,#fff400 217.5px,#ffd300 257.5px,#ffa700 258.5px,#ffa000 261.5px,#ff8a00 262.5px,#ff5000 263.5px,#ff3f00 265.5px,#ff4600 278.5px,#ff9e00 284.5px,#ff9600 312.5px,#ff6100 313.5px,#ff4500 314.5px,#ff4c00 325.5px,#ff9e00 330.5px,#ff9b00 352.5px,#ff4c00 354.5px,#ff4d00 362.5px,#ffa000 367.5px,#ff9c00 387.5px,#ff5300 389.5px,#ff5d00 398.5px,#ffa000 402.5px,#ff9f00 422.5px,#ff5d00 424.5px,#ff5d00 432.5px,#ffa000 437.5px,#ff9f00 456.5px,#ff6600 458.5px,#ff6500 467px)"></i><i style="left:388px;width:1px;background:linear-gradient(#e3ff00 0px,#ecff00 183.5px,#fff500 208.5px,#ffc600 257.5px,#ffae00 262.5px,#ff4a00 264.5px,#ff3f00 275.5px,#ff4d00 282.5px,#ffa200 287.5px,#ffa200 312.5px,#ff5700 314.5px,#ff4500 317.5px,#ff4e00 328.5px,#ffa300 333.5px,#ffa300 352.5px,#ff5000 355.5px,#ff4d00 364.5px,#ff9c00 368.5px,#ffa300 387.5px,#ff5800 390.5px,#ff5b00 400.5px,#ffa200 404.5px,#ffa300 422.5px,#ff5a00 426.5px,#ff5c00 434.5px,#ffa300 439.5px,#ffa300 456.5px,#ff6300 460.5px,#ff6200 467px)"></i><i style="left:389px;width:1px;background:linear-gradient(#fffc00 0px,#fff100 203.5px,#ffca00 262.5px,#ffbf00 263.5px,#ff5e00 266.5px,#ff3f00 269.5px,#ff4200 284.5px,#ff7500 287.5px,#ffb400 290.5px,#ffae00 298.5px,#ffb600 313.5px,#ff5200 317.5px,#ff4500 325.5px,#ff4900 330.5px,#ffb400 335.5px,#ffb300 346.5px,#ffb900 353.5px,#ff5400 357.5px,#ff4d00 366.5px,#ffb100 370.5px,#ffb000 377.5px,#ffb900 388.5px,#ff5200 393.5px,#ff5c00 402.5px,#ffb800 406.5px,#ffb300 417.5px,#ffb900 423.5px,#ff5c00 428.5px,#ff5b00 436.5px,#ffb900 441.5px,#ffb300 452.5px,#ffaf00 458.5px,#ff6500 462.5px,#ff6200 467px)"></i><i style="left:390px;width:1px;background:linear-gradient(#fffc00 0px,#ffed00 264.5px,#ffc100 267.5px,#ff4b00 271.5px,#ff3f00 283.5px,#ff4d00 288.5px,#ffcb00 292.5px,#ffe900 295.5px,#ffd900 299.5px,#ffb700 303.5px,#ffc600 306.5px,#ffe900 309.5px,#ffe700 315.5px,#ffa200 318.5px,#ff5a00 320.5px,#ff4500 322.5px,#ff4500 332.5px,#ff7100 334.5px,#ffda00 337.5px,#ffe900 340.5px,#ffb600 345.5px,#ffcc00 348.5px,#ffe900 351.5px,#ffe700 355.5px,#ffba00 357.5px,#ff6100 359.5px,#ff4b00 361.5px,#ff4e00 368.5px,#ff6900 369.5px,#ffc600 371.5px,#ffe900 373.5px,#ffe800 377.5px,#ffb600 381.5px,#ffc400 383.5px,#ffe700 385.5px,#ffe800 390.5px,#ffbf00 392.5px,#ff6d00 394.5px,#ff5400 395.5px,#ff5100 403.5px,#ff6200 404.5px,#ffd700 407.5px,#ffe900 409.5px,#ffde00 413.5px,#ffb600 416.5px,#ffd100 419.5px,#ffe900 422.5px,#ffe000 426.5px,#ff6300 430.5px,#ff5c00 438.5px,#ff9e00 440.5px,#ffde00 442.5px,#ffe900 447.5px,#ffb600 451.5px,#ffd100 454.5px,#ffe900 457.5px,#ffe100 460.5px,#ff6d00 464.5px,#ff6200 467px)"></i><i style="left:391px;width:1px;background:linear-gradient(#fffc00 0px,#fff100 204.5px,#ffbd00 269.5px,#ff4e00 274.5px,#ff3f00 280.5px,#ff4600 291.5px,#ffbb00 297.5px,#ffb100 309.5px,#ffb900 318.5px,#ff4f00 323.5px,#ff4700 335.5px,#ff6b00 337.5px,#ffb600 340.5px,#ffb100 350.5px,#ffbb00 357.5px,#ff9500 359.5px,#ff5900 361.5px,#ff4b00 365.5px,#ff4d00 370.5px,#ff7e00 372.5px,#ffb700 374.5px,#ffb200 381.5px,#ffb700 386.5px,#ffb200 393.5px,#ff5400 397.5px,#ff5b00 406.5px,#ffbb00 410.5px,#ffb400 421.5px,#ffb800 428.5px,#ff6100 432.5px,#ff5b00 440.5px,#ffb400 444.5px,#ffb400 451.5px,#ffb400 456.5px,#ffb900 462.5px,#ff6b00 467px)"></i><i style="left:392px;width:1px;background:linear-gradient(#fffc00 0px,#fff100 204.5px,#ffc000 272.5px,#ff4700 278.5px,#ff4400 294.5px,#ffb900 300.5px,#ffb100 312.5px,#ffb600 321.5px,#ff4c00 326.5px,#ff4b00 338.5px,#ffba00 343.5px,#ffaf00 352.5px,#ffba00 359.5px,#ff9600 361.5px,#ff4c00 364.5px,#ff4e00 372.5px,#ffb800 376.5px,#ffb000 387.5px,#ffb400 395.5px,#ff5600 399.5px,#ff5100 407.5px,#ff7500 409.5px,#ffba00 412.5px,#ffb300 423.5px,#ffb800 430.5px,#ff5900 435.5px,#ff5b00 442.5px,#ffb400 446.5px,#ffae00 454.5px,#ffb900 464.5px,#ff9700 467px)"></i><i style="left:393px;width:1px;background:linear-gradient(#fffc00 0px,#fff000 212.5px,#ffcf00 275.5px,#ff9b00 278.5px,#ff4d00 281.5px,#ff3f00 288.5px,#ff4400 297.5px,#ff6e00 299.5px,#ffbf00 302.5px,#ffc300 308.5px,#ffb000 313.5px,#ffca00 320.5px,#ffc400 324.5px,#ff7700 327.5px,#ff4900 329.5px,#ff4700 340.5px,#ff7400 342.5px,#ffb800 344.5px,#ffca00 347.5px,#ffb000 353.5px,#ffca00 359.5px,#ffc200 362.5px,#ff5f00 365.5px,#ff4b00 367.5px,#ff5000 374.5px,#ffba00 377.5px,#ffca00 380.5px,#ffbc00 385.5px,#ffb000 388.5px,#ffca00 392.5px,#ffc600 397.5px,#ff9300 399.5px,#ff5800 401.5px,#ff5200 409.5px,#ff7f00 411.5px,#ffc100 413.5px,#ffc000 420.5px,#ffb300 424.5px,#ffca00 428.5px,#ffbd00 433.5px,#ff6600 436.5px,#ff5900 442.5px,#ff5c00 444.5px,#ffc600 448.5px,#ffc000 455.5px,#ffb300 459.5px,#ffca00 463.5px,#ffca00 467px)"></i><i style="left:394px;width:1px;background:linear-gradient(#ffde00 0px,#ffd300 206.5px,#ffbc00 241.5px,#ffb400 245.5px,#ff9a00 279.5px,#ff4200 285.5px,#ff4200 300.5px,#ff9500 306.5px,#ff8e00 327.5px,#ff4600 332.5px,#ff4a00 343.5px,#ff9600 348.5px,#ff9000 364.5px,#ff4c00 368.5px,#ff4f00 376.5px,#ff9600 380.5px,#ff9300 399.5px,#ff5100 404.5px,#ff5a00 412.5px,#ff9600 416.5px,#ff8d00 435.5px,#ff5a00 439.5px,#ff6600 447.5px,#ff9600 451.5px,#ff9600 467px)"></i><i style="left:395px;width:1px;background:linear-gradient(#ffde00 0px,#ffd100 240.5px,#ffb100 244.5px,#ffce00 254.5px,#ffc500 282.5px,#ff8b00 285.5px,#ff4700 288.5px,#ff4400 303.5px,#ff6e00 305.5px,#ffbe00 308.5px,#ffbf00 314.5px,#ffaf00 319.5px,#ffc600 326.5px,#ffb700 330.5px,#ff4c00 334.5px,#ff4900 345.5px,#ff7a00 347.5px,#ffba00 349.5px,#ffc300 353.5px,#ffb100 358.5px,#ffc600 363.5px,#ffbe00 366.5px,#ff5c00 369.5px,#ff4b00 371.5px,#ff4b00 377.5px,#ff5700 378.5px,#ffbf00 381.5px,#ffc100 388.5px,#ffb000 392.5px,#ffc600 397.5px,#ffc300 401.5px,#ff9300 403.5px,#ff5800 405.5px,#ff5300 413.5px,#ff8800 415.5px,#ffc200 417.5px,#ffbd00 424.5px,#ffb200 428.5px,#ffc600 433.5px,#ffbb00 437.5px,#ff6600 440.5px,#ff5900 446.5px,#ff5f00 448.5px,#ffb800 451.5px,#ffc600 455.5px,#ffb200 463.5px,#ffc600 467px)"></i><i style="left:396px;width:1px;background:linear-gradient(#ffde00 0px,#ffd300 198.5px,#ff7400 285.5px,#ff3f00 292.5px,#ff4700 307.5px,#ff6b00 313.5px,#ff6200 333.5px,#ff4500 338.5px,#ff5000 349.5px,#ff6b00 354.5px,#ff6000 369.5px,#ff4b00 374.5px,#ff5800 381.5px,#ff6b00 385.5px,#ff6600 404.5px,#ff5100 410.5px,#ff5f00 417.5px,#ff6b00 429.5px,#ff5f00 441.5px,#ff6400 452.5px,#ff6b00 467px)"></i><i style="left:397px;width:1px;background:linear-gradient(#ffde00 0px,#ffd300 203.5px,#ff8800 289.5px,#ff4000 295.5px,#ff4400 309.5px,#ff8700 314.5px,#ff7f00 335.5px,#ff4900 339.5px,#ff4a00 350.5px,#ff8900 355.5px,#ff8100 370.5px,#ff4b00 374.5px,#ff5800 382.5px,#ff8900 385.5px,#ff8700 405.5px,#ff5100 410.5px,#ff5400 417.5px,#ff8900 421.5px,#ff8200 441.5px,#ff5900 445.5px,#ff5f00 452.5px,#ff8900 456.5px,#ff8900 467px)"></i><i style="left:398px;width:1px;background:linear-gradient(#ffde00 0px,#ffd200 215.5px,#ffb500 252.5px,#ffb600 260.5px,#ffa700 292.5px,#ff4800 297.5px,#ff4900 312.5px,#ffaa00 317.5px,#ffa500 337.5px,#ff4600 342.5px,#ff4a00 352.5px,#ffa500 356.5px,#ffaa00 371.5px,#ff5000 375.5px,#ff5100 383.5px,#ffa400 386.5px,#ffa700 407.5px,#ff5300 411.5px,#ff5b00 419.5px,#ffa600 422.5px,#ffaa00 442.5px,#ff5f00 446.5px,#ff5a00 453.5px,#ffa900 457.5px,#ffaa00 467px)"></i><i style="left:399px;width:1px;background:linear-gradient(#0aff00 0px,#13ff00 178.5px,#68ff00 204.5px,#fffc00 233.5px,#ffcc00 254.5px,#ffaf00 260.5px,#ffb900 269.5px,#ff8900 295.5px,#ff4000 301.5px,#ff4900 315.5px,#ff8600 320.5px,#ff7d00 340.5px,#ff4700 344.5px,#ff5000 355.5px,#ff8600 359.5px,#ff7b00 374.5px,#ff4d00 377.5px,#ff5300 385.5px,#ff8600 388.5px,#ff8300 409.5px,#ff5200 413.5px,#ff5b00 421.5px,#ff8600 424.5px,#ff7e00 445.5px,#ff5900 449.5px,#ff6600 456.5px,#ff8600 460.5px,#ff8600 467px)"></i><i style="left:400px;width:1px;background:linear-gradient(#fffc00 0px,#fff100 205.5px,#ffc600 258.5px,#ffb000 264.5px,#ffc800 271.5px,#ffba00 298.5px,#ff4900 303.5px,#ff4700 317.5px,#ffb000 321.5px,#ffbd00 326.5px,#ffb200 333.5px,#ffb600 342.5px,#ff4c00 346.5px,#ff4800 356.5px,#ff7900 358.5px,#ffb700 360.5px,#ffb200 365.5px,#ffba00 375.5px,#ff5c00 378.5px,#ff4b00 380.5px,#ff4f00 386.5px,#ffb500 389.5px,#ffb300 398.5px,#ffb600 411.5px,#ff5e00 414.5px,#ff5100 418.5px,#ff5600 422.5px,#ffb500 425.5px,#ffb900 433.5px,#ffaf00 437.5px,#ffbd00 445.5px,#ffa800 447.5px,#ff5b00 450.5px,#ff6400 457.5px,#ffba00 460.5px,#ffbd00 467px)"></i><i style="left:401px;width:1px;background:linear-gradient(#fffc00 0px,#fff000 219.5px,#ffd600 261.5px,#ffb400 266.5px,#ffda00 274.5px,#ffd000 301.5px,#ffa500 303.5px,#ff4900 306.5px,#ff4200 319.5px,#ff7400 321.5px,#ffbe00 323.5px,#ffd500 325.5px,#ffc800 330.5px,#ffb200 334.5px,#ffd500 339.5px,#ffd100 344.5px,#ff9f00 346.5px,#ff5300 348.5px,#ff4500 352.5px,#ff4800 358.5px,#ff8900 360.5px,#ffcd00 362.5px,#ffca00 366.5px,#ffb200 369.5px,#ffd500 374.5px,#ffcd00 377.5px,#ffb100 378.5px,#ff5700 380.5px,#ff4b00 386.5px,#ff5f00 388.5px,#ffbf00 390.5px,#ffd500 392.5px,#ffca00 399.5px,#ffb200 402.5px,#ffd500 406.5px,#ffd500 412.5px,#ffab00 414.5px,#ff5b00 416.5px,#ff5100 423.5px,#ff6500 424.5px,#ffbd00 426.5px,#ffd500 428.5px,#ffd400 434.5px,#ffb200 438.5px,#ffd500 442.5px,#ffcf00 448.5px,#ff9000 450.5px,#ff5a00 452.5px,#ff5b00 458.5px,#ffc500 461.5px,#ffd500 464.5px,#ffd500 467px)"></i><i style="left:402px;width:1px;background:linear-gradient(#0aff00 0px,#13ff00 181.5px,#6eff00 217.5px,#fffc00 259.5px,#ffef00 264.5px,#ffb900 268.5px,#ffc300 272.5px,#ffeb00 276.5px,#ffd500 304.5px,#ffa500 306.5px,#ff5c00 308.5px,#ff3f00 310.5px,#ff4900 322.5px,#ffbb00 325.5px,#ffdc00 327.5px,#ffd200 332.5px,#ffb400 336.5px,#ffdc00 341.5px,#ffdb00 346.5px,#ffb000 348.5px,#ff5c00 350.5px,#ff4500 352.5px,#ff4800 360.5px,#ff6000 361.5px,#ffbe00 363.5px,#ffdc00 365.5px,#ffcd00 368.5px,#ffb400 371.5px,#ffdc00 375.5px,#ffdc00 378.5px,#ffcd00 379.5px,#ff5000 382.5px,#ff5000 389.5px,#ffd400 392.5px,#ffd800 400.5px,#ffb400 403.5px,#ffc700 405.5px,#ffdc00 407.5px,#ffdb00 414.5px,#ffa600 416.5px,#ff5500 418.5px,#ff5500 425.5px,#ffd100 428.5px,#ffdc00 435.5px,#ffb400 439.5px,#ffdc00 443.5px,#ffd100 450.5px,#ff6300 453.5px,#ff5900 459.5px,#ff6400 460.5px,#ffbc00 462.5px,#ffdc00 464.5px,#ffdc00 467px)"></i><i style="left:403px;width:1px;background:linear-gradient(#0aff00 0px,#14ff00 182.5px,#74ff00 220.5px,#89ff00 226.5px,#acff00 227.5px,#b0ff00 228.5px,#96ff00 229.5px,#fffc00 262.5px,#fff300 267.5px,#ffbb00 271.5px,#ffc100 275.5px,#ffec00 279.5px,#ffd600 307.5px,#ffa100 309.5px,#ff5300 311.5px,#ff3f00 314.5px,#ff4300 324.5px,#ff8300 326.5px,#ffce00 328.5px,#ffe000 330.5px,#ffdb00 334.5px,#ffb500 338.5px,#ffe000 343.5px,#ffd500 349.5px,#ff8f00 351.5px,#ff4900 353.5px,#ff4900 362.5px,#ff9700 364.5px,#ffc400 365.5px,#ffe000 367.5px,#ffcd00 370.5px,#ffb500 373.5px,#ffe000 376.5px,#ffde00 380.5px,#ffc600 381.5px,#ff6300 383.5px,#ff4b00 384.5px,#ff4b00 390.5px,#ff6300 391.5px,#ffcc00 393.5px,#ffe000 395.5px,#ffd700 402.5px,#ffb500 404.5px,#ffd300 407.5px,#ffe000 411.5px,#ffdc00 416.5px,#ffc500 417.5px,#ff6900 419.5px,#ff5200 420.5px,#ff5100 426.5px,#ff6400 427.5px,#ffc700 429.5px,#ffde00 430.5px,#ffd700 438.5px,#ffb500 440.5px,#ffbd00 442.5px,#ffe000 444.5px,#ffdf00 451.5px,#ffaa00 453.5px,#ff5d00 455.5px,#ff5a00 461.5px,#ff7600 462.5px,#ffcf00 464.5px,#ffe000 467px)"></i><i style="left:404px;width:1px;background:linear-gradient(#0aff00 0px,#14ff00 178.5px,#68ff00 202.5px,#ecff00 225.5px,#fffb00 226.5px,#ffc600 227.5px,#ffcc00 229.5px,#fff300 233.5px,#ff6f00 298.5px,#ff6500 310.5px,#ff3f00 316.5px,#ff4b00 328.5px,#ff6b00 332.5px,#ff6800 351.5px,#ff4500 356.5px,#ff4c00 365.5px,#ff6b00 369.5px,#ff6800 382.5px,#ff4b00 387.5px,#ff5400 393.5px,#ff6b00 396.5px,#ff6200 419.5px,#ff5100 425.5px,#ff6100 430.5px,#ff6100 455.5px,#ff6000 464.5px,#ff6a00 467px)"></i><i style="left:405px;width:1px;background:linear-gradient(#bfff00 0px,#caff00 196.5px,#e7ff00 225.5px,#fffe00 226.5px,#ffc700 227.5px,#ffc100 232.5px,#f6ff00 237.5px,#ffec00 274.5px,#ffb900 278.5px,#ffc100 281.5px,#fff200 285.5px,#ffeb00 312.5px,#ffbc00 314.5px,#ff6000 316.5px,#ff3f00 318.5px,#ff4a00 329.5px,#ffce00 332.5px,#fff000 334.5px,#ffef00 338.5px,#ffb800 342.5px,#ffc200 344.5px,#fff000 347.5px,#ffe900 353.5px,#ffa500 355.5px,#ff4c00 357.5px,#ff4e00 366.5px,#ffb800 368.5px,#fff000 370.5px,#ffe300 373.5px,#ffb900 375.5px,#ffbe00 377.5px,#ffed00 379.5px,#ffef00 383.5px,#ffd900 384.5px,#ff6c00 386.5px,#ff4c00 387.5px,#ff4c00 393.5px,#ff7100 394.5px,#ffb700 395.5px,#ffe200 396.5px,#fff000 399.5px,#ffe500 405.5px,#ffb800 407.5px,#ffc500 409.5px,#fff000 411.5px,#ffef00 419.5px,#ffb100 421.5px,#ff7600 422.5px,#ff5300 423.5px,#ff5100 429.5px,#ff6b00 430.5px,#ffd900 432.5px,#fff000 433.5px,#ffe700 441.5px,#ffb900 443.5px,#ffc100 445.5px,#ffef00 447.5px,#fff000 454.5px,#ffe300 455.5px,#ffc100 456.5px,#ff6100 458.5px,#ff5b00 464.5px,#ff7f00 465.5px,#ffbc00 467px)"></i><i style="left:406px;width:1px;background:linear-gradient(#bfff00 0px,#c9ff00 189.5px,#fff800 227.5px,#ffbb00 232.5px,#ffca00 237.5px,#fff700 241.5px,#ffdf00 277.5px,#ffb500 281.5px,#ffca00 285.5px,#ffe200 289.5px,#ffd500 315.5px,#ff9a00 317.5px,#ff4e00 319.5px,#ff3f00 322.5px,#ff4500 331.5px,#ff8e00 333.5px,#ffbe00 334.5px,#ffdf00 336.5px,#ffd700 341.5px,#ffb400 344.5px,#ffcc00 347.5px,#ffdf00 350.5px,#ffda00 355.5px,#ff9900 357.5px,#ff4b00 359.5px,#ff4500 367.5px,#ff5200 368.5px,#ffb600 370.5px,#ffd600 371.5px,#ffde00 374.5px,#ffb400 377.5px,#ffc000 379.5px,#ffdf00 381.5px,#ffd800 385.5px,#ffba00 386.5px,#ff5300 388.5px,#ff4b00 394.5px,#ff5c00 395.5px,#ffc900 397.5px,#ffdf00 398.5px,#ffde00 406.5px,#ffb400 409.5px,#ffdf00 413.5px,#ffd900 421.5px,#ffbf00 422.5px,#ff5f00 424.5px,#ff5100 427.5px,#ff5a00 431.5px,#ffbf00 433.5px,#ffdb00 434.5px,#ffdf00 442.5px,#ffb400 445.5px,#ffc700 447.5px,#ffdf00 449.5px,#ffdd00 456.5px,#ff9f00 458.5px,#ff7000 459.5px,#ff5900 460.5px,#ff5900 465.5px,#ff6a00 467px)"></i><i style="left:407px;width:1px;background:linear-gradient(#bfff00 0px,#c9ff00 186.5px,#fff900 224.5px,#ffee00 231.5px,#ffb900 236.5px,#ffc700 241.5px,#ffe900 245.5px,#ffce00 280.5px,#ffb100 285.5px,#ffcd00 292.5px,#ffc800 317.5px,#ff9c00 319.5px,#ff5500 321.5px,#ff3f00 323.5px,#ff4200 333.5px,#ff5500 334.5px,#ffc200 337.5px,#ffc700 343.5px,#ffb000 347.5px,#ffca00 352.5px,#ffc600 357.5px,#ff8a00 359.5px,#ff4900 361.5px,#ff4500 369.5px,#ff5700 370.5px,#ffb100 372.5px,#ffc800 373.5px,#ffbe00 377.5px,#ffb200 380.5px,#ffca00 384.5px,#ffbb00 387.5px,#ff5f00 389.5px,#ff4b00 391.5px,#ff5000 396.5px,#ffac00 398.5px,#ffc800 399.5px,#ffc500 408.5px,#ffb000 411.5px,#ffca00 415.5px,#ffca00 422.5px,#ffbe00 423.5px,#ff5200 426.5px,#ff5200 432.5px,#ff6d00 433.5px,#ffc300 435.5px,#ffc700 444.5px,#ffb000 447.5px,#ffca00 451.5px,#ffc400 458.5px,#ff5e00 461.5px,#ff5900 467px)"></i><i style="left:408px;width:1px;background:linear-gradient(#bfff00 0px,#caff00 191.5px,#fff500 235.5px,#ffba00 240.5px,#ffc200 244.5px,#fff300 248.5px,#ffde00 283.5px,#ffb500 287.5px,#ffc200 290.5px,#ffe200 293.5px,#ffd700 320.5px,#ff9700 322.5px,#ff4a00 324.5px,#ff3f00 334.5px,#ff5900 336.5px,#ffbb00 338.5px,#ffe100 340.5px,#ffdb00 345.5px,#ffb500 348.5px,#ffce00 351.5px,#ffe100 354.5px,#ffdb00 359.5px,#ffc300 360.5px,#ff6300 362.5px,#ff4800 363.5px,#ff4a00 371.5px,#ff6d00 372.5px,#ffcf00 374.5px,#ffe100 376.5px,#ffd700 378.5px,#ffb500 380.5px,#ffbf00 382.5px,#ffe100 384.5px,#ffd900 388.5px,#ffb800 389.5px,#ff5000 391.5px,#ff4d00 397.5px,#ff7300 398.5px,#ffb500 399.5px,#ffda00 400.5px,#ffde00 409.5px,#ffb700 411.5px,#ffbd00 413.5px,#ffe100 415.5px,#ffdc00 424.5px,#ffc000 425.5px,#ff5d00 427.5px,#ff5100 433.5px,#ff6700 434.5px,#ffcf00 436.5px,#ffe100 438.5px,#ffe000 445.5px,#ffb500 448.5px,#ffcd00 450.5px,#ffe100 452.5px,#ffdf00 459.5px,#ffca00 460.5px,#ff6e00 462.5px,#ff5900 463.5px,#ff5900 467px)"></i><i style="left:409px;width:1px;background:linear-gradient(#fff900 0px,#ffee00 199.5px,#ffc300 240.5px,#ffb000 247.5px,#ffbc00 256.5px,#ff9600 312.5px,#ff9200 322.5px,#ff3f00 327.5px,#ff4b00 338.5px,#ff9000 341.5px,#ff9000 361.5px,#ff4500 365.5px,#ff4b00 373.5px,#ff9200 376.5px,#ff9500 389.5px,#ff5100 392.5px,#ff5500 399.5px,#ff8e00 401.5px,#ff9600 425.5px,#ff5100 429.5px,#ff5500 435.5px,#ff9500 438.5px,#ff9000 461.5px,#ff5a00 464.5px,#ff5900 467px)"></i><i style="left:410px;width:1px;background:linear-gradient(#fffc00 0px,#fff000 221.5px,#ffe000 243.5px,#ffb600 248.5px,#ffc600 252.5px,#ffe200 256.5px,#ffcf00 289.5px,#ffb300 293.5px,#ffd700 299.5px,#ffd600 324.5px,#ffac00 326.5px,#ff5600 328.5px,#ff3f00 330.5px,#ff4200 339.5px,#ff5a00 340.5px,#ffba00 342.5px,#ffd700 344.5px,#ffd200 349.5px,#ffb200 352.5px,#ffd700 357.5px,#ffcd00 363.5px,#ff7d00 365.5px,#ff5200 366.5px,#ff4500 370.5px,#ff4600 374.5px,#ff6200 375.5px,#ffc500 377.5px,#ffd700 379.5px,#ffbf00 382.5px,#ffb200 384.5px,#ffd700 387.5px,#ffca00 391.5px,#ff6700 393.5px,#ff4b00 394.5px,#ff4b00 399.5px,#ff5b00 400.5px,#ffc800 402.5px,#ffd700 405.5px,#ffd100 412.5px,#ffb200 414.5px,#ffc300 416.5px,#ffd700 418.5px,#ffd000 427.5px,#ffb200 428.5px,#ff5600 430.5px,#ff5500 436.5px,#ffb900 438.5px,#ffd400 439.5px,#ffd500 448.5px,#ffb200 451.5px,#ffd700 455.5px,#ffd400 462.5px,#ffbe00 463.5px,#ff6400 465.5px,#ff5900 467px)"></i><i style="left:411px;width:1px;background:linear-gradient(#fff000 0px,#ffe500 202.5px,#ffbb00 248.5px,#ffb200 255.5px,#ffb200 270.5px,#ff9600 327.5px,#ff4200 331.5px,#ff4100 341.5px,#ff9d00 345.5px,#ff9f00 364.5px,#ff7900 366.5px,#ff4900 368.5px,#ff4a00 376.5px,#ff9b00 379.5px,#ff9b00 392.5px,#ff4d00 395.5px,#ff5000 401.5px,#ff8f00 403.5px,#ff9f00 405.5px,#ff9e00 428.5px,#ff5800 431.5px,#ff5200 437.5px,#ff9b00 440.5px,#ff9f00 463.5px,#ff6400 467px)"></i><i style="left:412px;width:1px;background:linear-gradient(#ffe400 0px,#ffd900 250.5px,#ffb400 255.5px,#ffc700 259.5px,#ffdc00 263.5px,#ffd300 294.5px,#ffb300 298.5px,#ffda00 304.5px,#ffd400 329.5px,#ffbe00 330.5px,#ff6300 332.5px,#ff4600 333.5px,#ff4700 343.5px,#ffca00 346.5px,#ffda00 348.5px,#ffd200 353.5px,#ffb300 356.5px,#ffda00 360.5px,#ffd900 366.5px,#ffc500 367.5px,#ff6200 369.5px,#ff4700 370.5px,#ff4600 377.5px,#ff6500 378.5px,#ffcc00 380.5px,#ffda00 383.5px,#ffb300 386.5px,#ffc400 388.5px,#ffda00 390.5px,#ffd900 393.5px,#ffc000 394.5px,#ff5300 396.5px,#ff5100 402.5px,#ffc400 404.5px,#ffda00 405.5px,#ffda00 414.5px,#ffb300 417.5px,#ffda00 420.5px,#ffda00 429.5px,#ffcd00 430.5px,#ff6b00 432.5px,#ff5100 433.5px,#ff5100 438.5px,#ff6e00 439.5px,#ffac00 440.5px,#ffd300 441.5px,#ffd200 451.5px,#ffb300 453.5px,#ffc800 455.5px,#ffda00 457.5px,#ffd300 465.5px,#ffb200 467px)"></i><i style="left:413px;width:1px;background:linear-gradient(#fff400 0px,#ffe900 202.5px,#ffb800 255.5px,#ffb300 262.5px,#ff9b00 331.5px,#ff4300 335.5px,#ff4700 345.5px,#ff9900 348.5px,#ff9b00 368.5px,#ff4d00 371.5px,#ff4c00 379.5px,#ff9f00 382.5px,#ff9f00 394.5px,#ff7200 396.5px,#ff5200 397.5px,#ff4e00 403.5px,#ff9f00 406.5px,#ff9a00 431.5px,#ff5200 434.5px,#ff5100 439.5px,#ff7c00 441.5px,#ff9900 442.5px,#ff9e00 467px)"></i><i style="left:414px;width:1px;background:linear-gradient(#fff700 0px,#ffec00 202.5px,#ffba00 258.5px,#ffb300 265.5px,#ffa100 333.5px,#ff4300 337.5px,#ff3f00 346.5px,#ff6d00 348.5px,#ffa300 350.5px,#ffa500 369.5px,#ff7b00 371.5px,#ff4700 373.5px,#ff4700 380.5px,#ffa000 383.5px,#ff9b00 396.5px,#ff5700 398.5px,#ff4b00 403.5px,#ff4d00 404.5px,#ffa500 407.5px,#ffa300 432.5px,#ff5300 435.5px,#ff5c00 441.5px,#ff9e00 443.5px,#ffa500 467px)"></i><i style="left:415px;width:1px;background:linear-gradient(#fff500 0px,#ffea00 203.5px,#ffbb00 261.5px,#ffb000 267.5px,#ffb800 279.5px,#ffa900 335.5px,#ff4200 339.5px,#ff4300 348.5px,#ffa300 351.5px,#ffaa00 371.5px,#ff4f00 374.5px,#ff4500 381.5px,#ff5500 382.5px,#ffa200 384.5px,#ffad00 395.5px,#ffa600 397.5px,#ff5d00 399.5px,#ff4b00 401.5px,#ff4e00 405.5px,#ff9900 407.5px,#ffad00 409.5px,#ffac00 433.5px,#ff5600 436.5px,#ff5100 441.5px,#ff5d00 442.5px,#ffa500 444.5px,#ffad00 467px)"></i><i style="left:416px;width:1px;background:linear-gradient(#fff700 0px,#ffec00 203.5px,#ffbc00 264.5px,#ffb200 270.5px,#ffba00 282.5px,#ffb200 320.5px,#ffad00 337.5px,#ff5000 340.5px,#ff3f00 342.5px,#ff3f00 349.5px,#ff4b00 350.5px,#ffb100 353.5px,#ffb200 372.5px,#ffa600 373.5px,#ff5c00 375.5px,#ff4500 377.5px,#ff4f00 383.5px,#ffa100 385.5px,#ffb200 387.5px,#ffae00 398.5px,#ff6000 400.5px,#ff4b00 401.5px,#ff4e00 406.5px,#ffa000 408.5px,#ffb200 410.5px,#ffb200 434.5px,#ffa200 435.5px,#ff5900 437.5px,#ff5100 442.5px,#ff5e00 443.5px,#ffab00 445.5px,#ffb200 467px)"></i><i style="left:417px;width:1px;background:linear-gradient(#fff300 0px,#ffe800 205.5px,#ffb900 267.5px,#ffb100 273.5px,#ffa700 339.5px,#ff4b00 342.5px,#ff3f00 348.5px,#ff4300 351.5px,#ffa600 354.5px,#ffab00 374.5px,#ff4c00 377.5px,#ff4b00 384.5px,#ff9800 386.5px,#ffae00 387.5px,#ffab00 399.5px,#ff4b00 402.5px,#ff5000 407.5px,#ffa100 409.5px,#ffae00 413.5px,#ffae00 435.5px,#ffa100 436.5px,#ff5b00 438.5px,#ff5100 443.5px,#ff6000 444.5px,#ffaa00 446.5px,#ffae00 467px)"></i><i style="left:418px;width:1px;background:linear-gradient(#fffb00 0px,#fff000 200.5px,#ffae00 271.5px,#ffa400 340.5px,#ff7d00 342.5px,#ff4500 344.5px,#ff3f00 352.5px,#ff4c00 353.5px,#ff9500 355.5px,#ffa400 358.5px,#ffa400 375.5px,#ff7500 377.5px,#ff5100 378.5px,#ff4500 384.5px,#ff4800 385.5px,#ffa400 388.5px,#ffa200 400.5px,#ff4b00 403.5px,#ff5100 408.5px,#ff9c00 410.5px,#ff9a00 437.5px,#ff5900 439.5px,#ff5100 444.5px,#ff6100 445.5px,#ffa200 447.5px,#ffa400 467px)"></i><i style="left:419px;width:1px;background:linear-gradient(#fff000 0px,#ffe500 200.5px,#ff9000 307.5px,#ff9000 342.5px,#ff4000 346.5px,#ff4500 354.5px,#ff8f00 357.5px,#ff8b00 377.5px,#ff4600 380.5px,#ff4600 386.5px,#ff9000 389.5px,#ff8e00 401.5px,#ff4b00 404.5px,#ff5300 409.5px,#ff8e00 411.5px,#ff8900 438.5px,#ff5700 440.5px,#ff5100 445.5px,#ff9000 448.5px,#ff9000 467px)"></i><i style="left:420px;width:1px;background:linear-gradient(#fffb00 0px,#ffee00 223.5px,#ffd700 274.5px,#ffb300 278.5px,#ffd800 284.5px,#ffd500 311.5px,#ffb200 315.5px,#ffd600 319.5px,#ffd100 344.5px,#ffb500 345.5px,#ff4d00 347.5px,#ff3f00 350.5px,#ff4300 355.5px,#ff6b00 356.5px,#ffaf00 357.5px,#ffd300 358.5px,#ffd400 365.5px,#ffb200 368.5px,#ffd600 371.5px,#ffd400 378.5px,#ffb900 379.5px,#ff4b00 381.5px,#ff4700 387.5px,#ff7300 388.5px,#ffb900 389.5px,#ffd500 390.5px,#ffd500 393.5px,#ffb300 395.5px,#ffc300 397.5px,#ffd600 399.5px,#ffd200 402.5px,#ffab00 403.5px,#ff6500 404.5px,#ff4b00 405.5px,#ff4b00 409.5px,#ff6c00 410.5px,#ffb600 411.5px,#ffd500 412.5px,#ffce00 423.5px,#ffb200 425.5px,#ffd600 428.5px,#ffd600 438.5px,#ffca00 439.5px,#ff5d00 441.5px,#ff5300 446.5px,#ffc200 448.5px,#ffd600 450.5px,#ffd600 459.5px,#ffb300 461.5px,#ffc500 463.5px,#ffd600 465.5px,#ffd600 467px)"></i><i style="left:421px;width:1px;background:linear-gradient(#fff700 0px,#ffec00 200.5px,#ff9800 308.5px,#ff9800 345.5px,#ff6f00 347.5px,#ff4000 349.5px,#ff3f00 356.5px,#ff4f00 357.5px,#ff9300 359.5px,#ff9800 379.5px,#ff4a00 382.5px,#ff4600 388.5px,#ff9800 391.5px,#ff9400 403.5px,#ff5300 405.5px,#ff4c00 410.5px,#ff8a00 412.5px,#ff9800 415.5px,#ff8e00 440.5px,#ff5500 442.5px,#ff5400 447.5px,#ff9100 449.5px,#ff9800 467px)"></i><i style="left:422px;width:1px;background:linear-gradient(#fff000 0px,#ffe400 222.5px,#ffcb00 279.5px,#ffb000 283.5px,#ffcd00 289.5px,#ffc800 315.5px,#ffb000 318.5px,#ffcb00 323.5px,#ffc800 347.5px,#ffab00 348.5px,#ff4900 350.5px,#ff3f00 357.5px,#ff5400 358.5px,#ffc400 360.5px,#ffc500 368.5px,#ffb300 371.5px,#ffcb00 374.5px,#ffcb00 380.5px,#ffbe00 381.5px,#ff5200 383.5px,#ff4500 387.5px,#ff4800 389.5px,#ff7500 390.5px,#ffb700 391.5px,#ffcb00 393.5px,#ffbe00 396.5px,#ffb000 398.5px,#ffcb00 401.5px,#ffc400 404.5px,#ff5400 406.5px,#ff5200 411.5px,#ffc500 413.5px,#ffcb00 424.5px,#ffb000 427.5px,#ffcb00 430.5px,#ffcb00 440.5px,#ffbc00 441.5px,#ff5400 443.5px,#ff5100 447.5px,#ff6200 448.5px,#ffc900 450.5px,#ffca00 461.5px,#ffb000 463.5px,#ffcb00 467px)"></i><i style="left:423px;width:1px;background:linear-gradient(#fffa00 0px,#ffef00 205.5px,#ffba00 282.5px,#ffae00 286.5px,#ffbc00 294.5px,#ffaf00 318.5px,#ffba00 348.5px,#ffaa00 349.5px,#ff4f00 351.5px,#ff3f00 353.5px,#ff3f00 358.5px,#ff4d00 359.5px,#ffb200 361.5px,#ffb000 370.5px,#ffba00 381.5px,#ffaf00 382.5px,#ff5100 384.5px,#ff4500 389.5px,#ff4900 390.5px,#ffaa00 392.5px,#ffba00 394.5px,#ffad00 399.5px,#ffba00 404.5px,#ffab00 405.5px,#ff4e00 407.5px,#ff4b00 411.5px,#ff5b00 412.5px,#ffba00 414.5px,#ffb200 426.5px,#ffba00 441.5px,#ffa100 442.5px,#ff6f00 443.5px,#ff5200 444.5px,#ff5100 448.5px,#ff6b00 449.5px,#ffa000 450.5px,#ffba00 451.5px,#ffb000 463.5px,#ffba00 467px)"></i><i style="left:424px;width:1px;background:linear-gradient(#fffa00 0px,#ffef00 210.5px,#ffc000 284.5px,#ffb200 288.5px,#ffc700 292.5px,#ffbb00 319.5px,#ffb200 322.5px,#ffc500 326.5px,#ffbf00 350.5px,#ff5f00 352.5px,#ff4100 353.5px,#ff3f00 359.5px,#ff4f00 360.5px,#ffbe00 362.5px,#ffc200 370.5px,#ffb000 373.5px,#ffc500 376.5px,#ffbd00 383.5px,#ff5300 385.5px,#ff4500 388.5px,#ff4e00 391.5px,#ffaf00 393.5px,#ffb600 397.5px,#ffa200 399.5px,#ffc500 402.5px,#ffc500 405.5px,#ffad00 406.5px,#ff6e00 407.5px,#ff4b00 408.5px,#ff4b00 412.5px,#ff7500 413.5px,#ffb700 414.5px,#ffc500 417.5px,#ffc200 426.5px,#ffae00 428.5px,#ffc500 431.5px,#ffc400 442.5px,#ffa300 443.5px,#ff6800 444.5px,#ff5100 445.5px,#ff5400 449.5px,#ffbd00 451.5px,#ffc000 463.5px,#ffae00 465.5px,#ffba00 467px)"></i><i style="left:425px;width:1px;background:linear-gradient(#fffa00 0px,#ffef00 202.5px,#ffad00 287.5px,#ffae00 351.5px,#ff4300 354.5px,#ff3f00 360.5px,#ff4d00 361.5px,#ffac00 363.5px,#ffa700 384.5px,#ff4e00 386.5px,#ff4500 391.5px,#ff5f00 395.5px,#ff6b00 399.5px,#ff9f00 400.5px,#ffb000 404.5px,#ffaf00 406.5px,#ff5800 408.5px,#ff4b00 412.5px,#ff5100 413.5px,#ffad00 415.5px,#ffab00 443.5px,#ff5900 445.5px,#ff5100 449.5px,#ff5d00 450.5px,#ffaf00 452.5px,#ffab00 467px)"></i><i style="left:426px;width:1px;background:linear-gradient(#ffea00 0px,#ffde00 212.5px,#ffb300 288.5px,#ffb500 352.5px,#ff9d00 353.5px,#ff4600 355.5px,#ff3f00 361.5px,#ff5200 362.5px,#ffb400 364.5px,#ffb500 384.5px,#ff9b00 385.5px,#ff5700 386.5px,#ff4500 390.5px,#ff5100 398.5px,#ff6000 399.5px,#ff9d00 400.5px,#ffb500 404.5px,#ffad00 407.5px,#ff4f00 409.5px,#ff4b00 413.5px,#ff6400 414.5px,#ff9e00 415.5px,#ffb500 416.5px,#ffb500 443.5px,#ffa700 444.5px,#ff5200 446.5px,#ff5100 450.5px,#ffa500 452.5px,#ffb500 454.5px,#ffab00 467px)"></i><i style="left:427px;width:1px;background:linear-gradient(#fff600 0px,#ffeb00 204.5px,#ffae00 302.5px,#ffae00 353.5px,#ff9c00 354.5px,#ff4600 356.5px,#ff3f00 362.5px,#ff5800 363.5px,#ff8f00 364.5px,#ffae00 365.5px,#ffae00 384.5px,#ff9f00 385.5px,#ff5d00 386.5px,#ff4500 390.5px,#ff5100 398.5px,#ff5f00 399.5px,#ff9d00 400.5px,#ffae00 405.5px,#ffae00 407.5px,#ff9800 408.5px,#ff6400 409.5px,#ff4b00 410.5px,#ff4f00 414.5px,#ffaa00 416.5px,#ffae00 444.5px,#ff6400 446.5px,#ff5100 448.5px,#ff5900 451.5px,#ffac00 453.5px,#ffaa00 467px)"></i><i style="left:428px;width:1px;background:linear-gradient(#ffef00 0px,#ffe300 214.5px,#ffbd00 291.5px,#ffad00 294.5px,#ffc000 299.5px,#ffba00 324.5px,#ffb200 327.5px,#ffbf00 335.5px,#ffbf00 354.5px,#ffb000 355.5px,#ff4700 357.5px,#ff4100 363.5px,#ff6e00 364.5px,#ffb000 365.5px,#ffbf00 368.5px,#ffbb00 374.5px,#ffad00 376.5px,#ffbf00 380.5px,#ffbf00 384.5px,#ffb100 385.5px,#ff6200 386.5px,#ff4500 390.5px,#ff5100 398.5px,#ff6200 399.5px,#ffae00 400.5px,#ffbd00 408.5px,#ff5400 410.5px,#ff4b00 414.5px,#ff6700 415.5px,#ffa900 416.5px,#ffbf00 417.5px,#ffb800 429.5px,#ffb000 431.5px,#ffbf00 436.5px,#ffbb00 445.5px,#ff5700 447.5px,#ff5100 451.5px,#ff7300 452.5px,#ffb000 453.5px,#ffbf00 456.5px,#ffb600 467px)"></i><i style="left:429px;width:1px;background:linear-gradient(#fff700 0px,#ffeb00 222.5px,#ffd100 292.5px,#ffb200 295.5px,#ffd300 299.5px,#ffc800 325.5px,#ffb100 327.5px,#ffd200 330.5px,#ffd200 355.5px,#ffc300 356.5px,#ff4600 358.5px,#ff3f00 363.5px,#ff4b00 364.5px,#ffce00 366.5px,#ffd200 374.5px,#ffb200 376.5px,#ffb200 377.5px,#ffd200 379.5px,#ffd200 384.5px,#ffc300 385.5px,#ff6700 386.5px,#ff5100 387.5px,#ff4500 394.5px,#ff5100 398.5px,#ff6700 399.5px,#ffc300 400.5px,#ffc600 401.5px,#ffb100 402.5px,#ffb400 403.5px,#ffd200 405.5px,#ffd200 408.5px,#ffc300 409.5px,#ff7900 410.5px,#ff4b00 411.5px,#ff5300 415.5px,#ff9f00 416.5px,#ffd100 417.5px,#ffcf00 429.5px,#ffb100 431.5px,#ffd200 433.5px,#ffd200 445.5px,#ffbf00 446.5px,#ff7700 447.5px,#ff5100 448.5px,#ff5100 451.5px,#ff5f00 452.5px,#ffa900 453.5px,#ffd200 454.5px,#ffcd00 467px)"></i><i style="left:430px;width:1px;background:linear-gradient(#0aff00 0px,#14ff00 178.5px,#68ff00 202.5px,#fffc00 229.5px,#ff6f00 298.5px,#ff6200 357.5px,#ff3e00 359.5px,#ff4400 365.5px,#ff6000 368.5px,#ff6700 385.5px,#ff5100 387.5px,#ff4800 395.5px,#ff5500 399.5px,#ff6b00 401.5px,#ff6b00 409.5px,#ff4b00 412.5px,#ff5400 416.5px,#ff6b00 418.5px,#ff6b00 446.5px,#ff5100 449.5px,#ff5b00 453.5px,#ff6b00 458.5px,#ff6b00 467px)"></i><i style="left:431px;width:1px;background:linear-gradient(#f5ff00 0px,#fff400 206.5px,#ffb000 296.5px,#ffb400 327.5px,#ffb200 330.5px,#ffb900 357.5px,#ff8b00 358.5px,#ff3e00 359.5px,#ff3b00 366.5px,#ff4200 371.5px,#ff5000 372.5px,#ffa500 373.5px,#ffb900 375.5px,#ffb200 379.5px,#ffb900 384.5px,#ffa800 385.5px,#ff6100 386.5px,#ff5100 388.5px,#ff4500 395.5px,#ff6100 399.5px,#ffa800 400.5px,#ffb900 401.5px,#ffad00 404.5px,#ffb900 409.5px,#ffa600 410.5px,#ff6900 411.5px,#ff4b00 412.5px,#ff4b00 415.5px,#ff5900 416.5px,#ff9800 417.5px,#ffb900 418.5px,#ffb700 430.5px,#ffb400 433.5px,#ffb900 446.5px,#ffa400 447.5px,#ff6b00 448.5px,#ff5100 449.5px,#ff5100 452.5px,#ff6300 453.5px,#ff9d00 454.5px,#ffb900 455.5px,#ffb900 467px)"></i><i style="left:432px;width:1px;background:linear-gradient(#f5ff00 0px,#fff400 207.5px,#ffb100 297.5px,#ffb400 328.5px,#ffba00 357.5px,#ffa200 358.5px,#ff3d00 359.5px,#ff3200 370.5px,#ff4300 372.5px,#ffa300 373.5px,#ffba00 374.5px,#ffae00 379.5px,#ffba00 384.5px,#ffaa00 385.5px,#ff6100 386.5px,#ff5100 388.5px,#ff4500 395.5px,#ff6100 399.5px,#ffaa00 400.5px,#ffb900 402.5px,#ffb400 405.5px,#ffb800 410.5px,#ff4f00 412.5px,#ff4e00 416.5px,#ffb800 418.5px,#ffb100 431.5px,#ffb600 447.5px,#ff5400 449.5px,#ff5600 453.5px,#ffb900 455.5px,#ffba00 467px)"></i><i style="left:433px;width:1px;background:linear-gradient(#f5ff00 0px,#fff400 204.5px,#ffab00 311.5px,#ffab00 357.5px,#ff9600 358.5px,#ff4000 359.5px,#ff3200 362.5px,#ff3200 371.5px,#ff4100 372.5px,#ff9600 373.5px,#ffab00 374.5px,#ffab00 384.5px,#ff9d00 385.5px,#ff5f00 386.5px,#ff5100 389.5px,#ff4600 396.5px,#ff5f00 399.5px,#ff9d00 400.5px,#ffaa00 403.5px,#ffab00 410.5px,#ff9000 411.5px,#ff5900 412.5px,#ff4b00 415.5px,#ff4b00 416.5px,#ff6900 417.5px,#ffa000 418.5px,#ffab00 429.5px,#ffab00 447.5px,#ff9000 448.5px,#ff5e00 449.5px,#ff5100 453.5px,#ffa200 455.5px,#ffab00 467px)"></i><i style="left:434px;width:1px;background:linear-gradient(#f5ff00 0px,#fff400 229.5px,#ffdc00 298.5px,#ffb400 300.5px,#ffdc00 302.5px,#ffd700 329.5px,#ffb900 330.5px,#ffb400 331.5px,#ffdf00 333.5px,#ffdf00 357.5px,#ffca00 358.5px,#ff4900 359.5px,#ff3200 360.5px,#ff3200 371.5px,#ff4900 372.5px,#ffca00 373.5px,#ffdf00 374.5px,#ffdf00 377.5px,#ffb400 379.5px,#ffbe00 380.5px,#ffde00 381.5px,#ffdf00 384.5px,#ffce00 385.5px,#ff6a00 386.5px,#ff5100 387.5px,#ff4500 396.5px,#ff5100 398.5px,#ff6a00 399.5px,#ffce00 400.5px,#ffdf00 402.5px,#ffd700 403.5px,#ffb600 404.5px,#ffb700 405.5px,#ffd800 406.5px,#ffdf00 410.5px,#ffd200 411.5px,#ff8100 412.5px,#ff4b00 413.5px,#ff4b00 416.5px,#ff6b00 417.5px,#ffc700 418.5px,#ffdf00 419.5px,#ffdb00 431.5px,#ffba00 432.5px,#ffb500 433.5px,#ffdf00 435.5px,#ffdf00 447.5px,#ffd100 448.5px,#ff8400 449.5px,#ff5100 450.5px,#ff5100 453.5px,#ff7400 454.5px,#ffc900 455.5px,#ffdf00 456.5px,#ffdf00 467px)"></i><i style="left:435px;width:1px;background:linear-gradient(#f5ff00 0px,#fff400 204.5px,#ffac00 312.5px,#ffac00 357.5px,#ff9700 358.5px,#ff4100 359.5px,#ff3200 362.5px,#ff3200 371.5px,#ff4100 372.5px,#ff9700 373.5px,#ffac00 374.5px,#ffac00 384.5px,#ff9e00 385.5px,#ff5f00 386.5px,#ff5100 389.5px,#ff4500 396.5px,#ff5f00 399.5px,#ff9e00 400.5px,#ffac00 403.5px,#ffaa00 411.5px,#ff4d00 413.5px,#ff5300 417.5px,#ff8a00 418.5px,#ffac00 419.5px,#ffa900 448.5px,#ff5300 450.5px,#ff5b00 454.5px,#ff8e00 455.5px,#ffac00 456.5px,#ffac00 467px)"></i><i style="left:436px;width:1px;background:linear-gradient(#f5ff00 0px,#fff400 229.5px,#ffe000 299.5px,#ffb400 301.5px,#ffba00 302.5px,#ffda00 303.5px,#ffd800 330.5px,#ffb900 331.5px,#ffb500 332.5px,#ffdf00 334.5px,#ffdf00 357.5px,#ffca00 358.5px,#ff4900 359.5px,#ff3200 360.5px,#ff3200 371.5px,#ff4900 372.5px,#ffca00 373.5px,#ffdf00 374.5px,#ffdf00 378.5px,#ffb400 380.5px,#ffdf00 382.5px,#ffdf00 384.5px,#ffce00 385.5px,#ff6a00 386.5px,#ff5100 387.5px,#ff4900 397.5px,#ff6900 399.5px,#ffce00 400.5px,#ffdf00 402.5px,#ffdf00 403.5px,#ffb400 405.5px,#ffdf00 407.5px,#ffdf00 411.5px,#ffb400 412.5px,#ff5700 413.5px,#ff4b00 416.5px,#ff5000 417.5px,#ffa600 418.5px,#ffde00 419.5px,#ffdf00 431.5px,#ffb400 433.5px,#ffdf00 435.5px,#ffdf00 448.5px,#ffb500 449.5px,#ff5e00 450.5px,#ff5100 453.5px,#ff5800 454.5px,#ffab00 455.5px,#ffdf00 456.5px,#ffdf00 467px)"></i><i style="left:437px;width:1px;background:linear-gradient(#bfff00 0px,#c9ff00 186.5px,#fffa00 226.5px,#ffcd00 300.5px,#ffb100 302.5px,#ffcf00 305.5px,#ffcf00 330.5px,#ffb100 332.5px,#ffcf00 335.5px,#ffcf00 357.5px,#ffbc00 358.5px,#ff4600 359.5px,#ff3200 361.5px,#ff3200 371.5px,#ff4600 372.5px,#ffbc00 373.5px,#ffcf00 375.5px,#ffcf00 378.5px,#ffb100 380.5px,#ffcf00 383.5px,#ffc100 385.5px,#ff6600 386.5px,#ff5100 387.5px,#ff4500 397.5px,#ff6500 399.5px,#ffc100 400.5px,#ffcf00 403.5px,#ffb100 405.5px,#ffcf00 408.5px,#ffcf00 411.5px,#ffb400 412.5px,#ff5f00 413.5px,#ff4b00 415.5px,#ff4c00 417.5px,#ffcc00 419.5px,#ffcf00 431.5px,#ffb100 433.5px,#ffcf00 436.5px,#ffcf00 448.5px,#ffb500 449.5px,#ff6600 450.5px,#ff5100 451.5px,#ff5300 454.5px,#ffcc00 456.5px,#ffcf00 467px)"></i><i style="left:438px;width:1px;background:linear-gradient(#bfff00 0px,#caff00 190.5px,#fff900 235.5px,#ffdd00 300.5px,#ffb400 302.5px,#ffdc00 304.5px,#ffdc00 330.5px,#ffb400 332.5px,#ffdb00 334.5px,#ffdc00 357.5px,#ffc700 358.5px,#ff4800 359.5px,#ff3200 360.5px,#ff3200 371.5px,#ff4800 372.5px,#ffc700 373.5px,#ffdc00 374.5px,#ffdc00 378.5px,#ffb400 380.5px,#ffbb00 381.5px,#ffda00 382.5px,#ffdc00 384.5px,#ffcc00 385.5px,#ff6900 386.5px,#ff5100 387.5px,#ff4500 397.5px,#ff6600 399.5px,#ffcc00 400.5px,#ffdc00 402.5px,#ffd100 404.5px,#ffb400 405.5px,#ffba00 406.5px,#ffd900 407.5px,#ffdc00 411.5px,#ffc700 412.5px,#ff6e00 413.5px,#ff4b00 414.5px,#ff4b00 417.5px,#ffd400 419.5px,#ffd200 432.5px,#ffb400 433.5px,#ffba00 434.5px,#ffd900 435.5px,#ffdc00 448.5px,#ffc800 449.5px,#ff7400 450.5px,#ff5100 451.5px,#ff5100 454.5px,#ffd500 456.5px,#ffdc00 467px)"></i><i style="left:439px;width:1px;background:linear-gradient(#bfff00 0px,#c9ff00 187.5px,#fff900 228.5px,#ffc900 301.5px,#ffb100 302.5px,#ffd200 305.5px,#ffca00 331.5px,#ffb200 332.5px,#ffb600 333.5px,#ffcf00 334.5px,#ffd200 357.5px,#ffbe00 358.5px,#ff4600 359.5px,#ff3200 361.5px,#ff3200 371.5px,#ff4600 372.5px,#ffbe00 373.5px,#ffd200 375.5px,#ffca00 379.5px,#ffb200 380.5px,#ffb500 381.5px,#ffcf00 382.5px,#ffd200 384.5px,#ffc300 385.5px,#ff6700 386.5px,#ff5100 387.5px,#ff4500 397.5px,#ff6300 399.5px,#ffc300 400.5px,#ffd200 403.5px,#ffb200 405.5px,#ffb500 406.5px,#ffce00 407.5px,#ffd200 411.5px,#ffc300 412.5px,#ff7100 413.5px,#ff4b00 414.5px,#ff4b00 417.5px,#ffb600 419.5px,#ffd100 420.5px,#ffcb00 432.5px,#ffb200 433.5px,#ffb500 434.5px,#ffce00 435.5px,#ffd200 448.5px,#ffc400 449.5px,#ff7700 450.5px,#ff5100 451.5px,#ff5100 454.5px,#ffc900 456.5px,#ffd200 467px)"></i><i style="left:440px;width:1px;background:linear-gradient(#bfff00 0px,#c9ff00 185.5px,#fff900 223.5px,#ffc400 301.5px,#ffb000 302.5px,#ffc700 306.5px,#ffc300 331.5px,#ffb100 333.5px,#ffc700 335.5px,#ffc700 357.5px,#ffb800 358.5px,#ff5500 359.5px,#ff3400 364.5px,#ff4500 371.5px,#ff5500 372.5px,#ffb800 373.5px,#ffc700 376.5px,#ffc300 379.5px,#ffb100 381.5px,#ffc700 383.5px,#ffbc00 385.5px,#ff7500 386.5px,#ff6400 388.5px,#ff5700 391.5px,#ff4500 397.5px,#ff6e00 399.5px,#ffbc00 400.5px,#ffc400 404.5px,#ffb000 405.5px,#ffc700 409.5px,#ffbc00 412.5px,#ff7000 413.5px,#ff4b00 414.5px,#ff4b00 417.5px,#ffc200 420.5px,#ffc400 432.5px,#ffb000 433.5px,#ffc700 437.5px,#ffbd00 449.5px,#ff7700 450.5px,#ff5100 451.5px,#ff5100 454.5px,#ff7a00 455.5px,#ffbf00 456.5px,#ffc700 467px)"></i><i style="left:441px;width:1px;background:linear-gradient(#00ff8b 0px,#00ff8b 16.5px,#00ff60 17.5px,#00ff13 18.5px,#56ff00 19.5px,#81ff00 21.5px,#9bff00 23.5px,#75ff00 26.5px,#56ff00 27.5px,#00ff13 28.5px,#00ff60 29.5px,#00ff8b 30.5px,#00ff8b 48.5px,#00ff7c 49.5px,#00ff39 50.5px,#00ff2a 52.5px,#00ff30 132.5px,#00ff36 138.5px,#00ff2a 156.5px,#00ff1d 229.5px,#00ff09 277.5px,#03ff00 358.5px,#57ff00 359.5px,#6aff00 361.5px,#75ff00 363.5px,#ffdd00 364.5px,#ff6500 365.5px,#ff5200 367.5px,#ff6600 369.5px,#fffa00 370.5px,#6aff00 371.5px,#57ff00 372.5px,#03ff00 373.5px,#01ff00 385.5px,#4bff00 386.5px,#5cff00 388.5px,#5dff00 389.5px,#ffe500 390.5px,#ff5b00 391.5px,#ff4b00 393.5px,#ff4c00 395.5px,#ffd800 396.5px,#5cff00 397.5px,#4bff00 399.5px,#00ff0e 400.5px,#00ff09 413.5px,#3dff00 414.5px,#ffd500 415.5px,#ff8f00 416.5px,#ff8f00 418.5px,#ffc300 419.5px,#8fff00 420.5px,#1cff00 421.5px,#00ff09 422.5px,#00ff06 437.5px,#26ff00 440.5px,#32ff00 442.5px,#49ff00 443.5px,#77ff00 444.5px,#66ff00 445.5px,#13ff00 446.5px,#00ff09 450.5px,#00ff00 454.5px,#26ff00 456.5px,#26ff00 465.5px,#15ff00 467px)"></i><i style="left:442px;width:1px;background:linear-gradient(#00ff7a 0px,#00ff79 16.5px,#00ff53 17.5px,#00ff0d 18.5px,#57ff00 19.5px,#81ff00 21.5px,#9bff00 23.5px,#75ff00 26.5px,#57ff00 27.5px,#00ff0d 28.5px,#00ff53 29.5px,#00ff79 30.5px,#00ff7a 48.5px,#00ff6a 49.5px,#00ff25 50.5px,#00ff15 52.5px,#00ff1c 98.5px,#00ff29 106.5px,#00ff15 112.5px,#00ff1e 132.5px,#00ff2e 137.5px,#00ff15 142.5px,#00ff07 244.5px,#00ff03 362.5px,#e8ff00 363.5px,#ff8100 364.5px,#ff5900 365.5px,#ff5c00 368.5px,#ffd100 369.5px,#2aff00 370.5px,#00ff04 371.5px,#00ff04 388.5px,#8bff00 389.5px,#ff8e00 390.5px,#ff4b00 391.5px,#ff4b00 394.5px,#ff8e00 395.5px,#8aff00 396.5px,#00ff13 397.5px,#00ff04 412.5px,#0fff00 413.5px,#fff200 414.5px,#ff9300 415.5px,#ff8f00 417.5px,#ff9e00 418.5px,#e8ff00 419.5px,#56ff00 420.5px,#00ff01 421.5px,#00ff01 437.5px,#2aff00 439.5px,#2cff00 442.5px,#70ff00 443.5px,#76ff00 444.5px,#3cff00 445.5px,#00ff01 448.5px,#06ff00 454.5px,#2eff00 456.5px,#2eff00 465.5px,#21ff00 467px)"></i><i style="left:443px;width:1px;background:linear-gradient(#00ff7f 0px,#00ff7f 16.5px,#00ff57 17.5px,#00ff0f 18.5px,#57ff00 19.5px,#81ff00 21.5px,#9bff00 23.5px,#75ff00 26.5px,#57ff00 27.5px,#00ff0f 28.5px,#00ff57 29.5px,#00ff7f 30.5px,#00ff7f 48.5px,#00ff6f 49.5px,#00ff27 50.5px,#00ff16 52.5px,#00ff1d 98.5px,#00ff29 106.5px,#00ff16 113.5px,#00ff1e 132.5px,#00ff30 136.5px,#00ff16 142.5px,#00ff08 244.5px,#00ff05 286.5px,#28ff00 287.5px,#58ff00 297.5px,#00ff05 298.5px,#00ff05 313.5px,#a5ff00 314.5px,#bdff00 324.5px,#00ff05 325.5px,#00ff05 340.5px,#bfff00 341.5px,#bfff00 351.5px,#00ff05 352.5px,#00ff05 361.5px,#b4ff00 362.5px,#ff9400 363.5px,#ff5900 364.5px,#ff5900 367.5px,#fffd00 369.5px,#bfff00 370.5px,#bfff00 378.5px,#00ff05 379.5px,#00ff05 387.5px,#24ff00 388.5px,#ffc800 389.5px,#ff4b00 390.5px,#ff4b00 393.5px,#ff5d00 394.5px,#ffd100 395.5px,#bfff00 396.5px,#bfff00 405.5px,#00ff05 406.5px,#00ff04 412.5px,#c9ff00 413.5px,#ffa600 414.5px,#ff8f00 415.5px,#ff9000 417.5px,#ffe800 418.5px,#86ff00 419.5px,#1cff00 420.5px,#00ff05 421.5px,#bfff00 422.5px,#bfff00 432.5px,#00ff05 433.5px,#00ff02 437.5px,#29ff00 439.5px,#2dff00 440.5px,#0dff00 441.5px,#5aff00 442.5px,#77ff00 443.5px,#5aff00 444.5px,#0dff00 445.5px,#29ff00 446.5px,#00ff02 448.5px,#bfff00 449.5px,#bfff00 459.5px,#2dff00 460.5px,#2dff00 465.5px,#1eff00 467px)"></i><i style="left:444px;width:1px;background:linear-gradient(#00ff85 0px,#00ff85 16.5px,#00ff5c 17.5px,#00ff11 18.5px,#56ff00 19.5px,#81ff00 21.5px,#9bff00 23.5px,#75ff00 26.5px,#56ff00 27.5px,#00ff11 28.5px,#00ff5c 29.5px,#00ff85 30.5px,#00ff85 48.5px,#00ff74 49.5px,#00ff28 50.5px,#00ff17 52.5px,#00ff17 88.5px,#73ff00 89.5px,#73ff00 96.5px,#00ff18 97.5px,#00ff2a 101.5px,#73ff00 102.5px,#73ff00 109.5px,#00ff17 110.5px,#00ff17 114.5px,#73ff00 115.5px,#73ff00 122.5px,#00ff17 123.5px,#00ff17 127.5px,#73ff00 128.5px,#73ff00 135.5px,#00ff30 136.5px,#00ff18 140.5px,#73ff00 141.5px,#73ff00 148.5px,#00ff17 149.5px,#00ff17 153.5px,#73ff00 154.5px,#73ff00 161.5px,#00ff17 162.5px,#00ff17 166.5px,#73ff00 167.5px,#73ff00 174.5px,#00ff17 175.5px,#00ff17 179.5px,#73ff00 180.5px,#73ff00 187.5px,#00ff17 188.5px,#00ff17 192.5px,#73ff00 193.5px,#73ff00 200.5px,#00ff17 201.5px,#00ff17 205.5px,#73ff00 206.5px,#74ff00 213.5px,#00ff16 214.5px,#00ff15 218.5px,#74ff00 219.5px,#75ff00 226.5px,#00ff11 227.5px,#00ff0f 231.5px,#76ff00 232.5px,#78ff00 239.5px,#00ff0a 240.5px,#00ff09 244.5px,#79ff00 245.5px,#79ff00 252.5px,#00ff06 253.5px,#00ff05 257.5px,#7aff00 258.5px,#7aff00 265.5px,#00ff05 266.5px,#00ff05 270.5px,#7aff00 271.5px,#7aff00 278.5px,#00ff05 279.5px,#00ff05 283.5px,#7aff00 284.5px,#7aff00 291.5px,#00ff05 292.5px,#00ff05 296.5px,#7aff00 297.5px,#7aff00 304.5px,#00ff05 305.5px,#00ff05 309.5px,#7aff00 310.5px,#7aff00 317.5px,#00ff05 318.5px,#00ff05 322.5px,#7aff00 323.5px,#7aff00 330.5px,#00ff05 331.5px,#00ff05 335.5px,#7aff00 336.5px,#7aff00 343.5px,#00ff05 344.5px,#00ff05 360.5px,#83ff00 361.5px,#ffab00 362.5px,#ff5900 363.5px,#ff5900 366.5px,#ffab00 367.5px,#83ff00 368.5px,#00ff05 369.5px,#07ff00 382.5px,#57ff00 383.5px,#69ff00 385.5px,#6aff00 387.5px,#ffe100 388.5px,#ff5700 389.5px,#ff4900 392.5px,#ff4a00 393.5px,#ffc600 394.5px,#23ff00 395.5px,#00ff15 396.5px,#00ff05 411.5px,#73ff00 412.5px,#ffc200 413.5px,#ff8f00 414.5px,#ff8f00 416.5px,#ffcb00 417.5px,#9aff00 418.5px,#00ff04 420.5px,#00ff03 437.5px,#3bff00 441.5px,#76ff00 442.5px,#70ff00 443.5px,#2aff00 444.5px,#27ff00 446.5px,#00ff03 448.5px,#03ff00 454.5px,#2bff00 456.5px,#2bff00 465.5px,#1bff00 467px)"></i><i style="left:445px;width:1px;background:linear-gradient(#d1ff00 0px,#d1ff00 359.5px,#fff800 360.5px,#ff5900 362.5px,#ff5900 365.5px,#ff8100 366.5px,#ffe400 367.5px,#d1ff00 368.5px,#d1ff00 381.5px,#fff700 382.5px,#ff8000 383.5px,#ff5e00 384.5px,#ff5600 387.5px,#ff4000 390.5px,#ff4c00 393.5px,#ffda00 394.5px,#d1ff00 395.5px,#d1ff00 410.5px,#f3ff00 411.5px,#ff8f00 413.5px,#ff8f00 415.5px,#ffa300 416.5px,#ffe900 417.5px,#d1ff00 418.5px,#d1ff00 467px)"></i><i style="left:446px;width:1px;background:linear-gradient(#d1ff00 0px,#d1ff00 357.5px,#f4ff00 358.5px,#ffa200 360.5px,#ff5b00 361.5px,#ff5900 364.5px,#ff7400 365.5px,#ffd800 366.5px,#d2ff00 367.5px,#d1ff00 381.5px,#fff300 382.5px,#ff5e00 383.5px,#ff3f00 384.5px,#ff3f00 392.5px,#ff5000 393.5px,#fff200 394.5px,#d1ff00 395.5px,#d8ff00 410.5px,#ffd700 411.5px,#ff9400 412.5px,#ff9400 415.5px,#ffd700 416.5px,#d8ff00 417.5px,#d1ff00 467px)"></i><i style="left:447px;width:1px;background:linear-gradient(#00ff8f 0px,#00ff8f 16.5px,#00ff63 17.5px,#00ff15 18.5px,#55ff00 19.5px,#81ff00 21.5px,#9bff00 23.5px,#75ff00 26.5px,#55ff00 27.5px,#00ff15 28.5px,#00ff63 29.5px,#00ff8f 30.5px,#00ff8f 48.5px,#00ff7d 49.5px,#00ff2b 50.5px,#00ff19 52.5px,#00ff1f 98.5px,#00ff25 107.5px,#00ff19 119.5px,#00ff20 132.5px,#00ff30 137.5px,#00ff19 142.5px,#00ff0b 242.5px,#00ff07 355.5px,#27ff00 356.5px,#dbff00 357.5px,#ffc100 358.5px,#ff7000 359.5px,#ff5900 360.5px,#ff5900 363.5px,#ff7100 364.5px,#fff500 365.5px,#00ff00 366.5px,#00ff07 381.5px,#67ff00 382.5px,#ff6f00 383.5px,#ff3f00 384.5px,#ff3f00 392.5px,#ff6c00 393.5px,#67ff00 394.5px,#00ff16 395.5px,#00ff07 409.5px,#a9ff00 410.5px,#ffb000 411.5px,#ff8f00 412.5px,#ff8f00 414.5px,#ffde00 415.5px,#9bff00 416.5px,#6fff00 417.5px,#09ff00 418.5px,#00ff05 437.5px,#29ff00 439.5px,#70ff00 440.5px,#76ff00 441.5px,#39ff00 442.5px,#25ff00 446.5px,#00ff05 448.5px,#01ff00 454.5px,#29ff00 456.5px,#29ff00 465.5px,#16ff00 467px)"></i><i style="left:448px;width:1px;background:linear-gradient(#fff000 0px,#ffed00 57.5px,#00ff17 58.5px,#00ff17 59.5px,#ffed00 60.5px,#ffed00 67.5px,#00ff17 68.5px,#ffed00 69.5px,#ffed00 76.5px,#00ff17 77.5px,#00ff17 78.5px,#ffed00 79.5px,#ffed00 86.5px,#00ff17 87.5px,#00ff17 88.5px,#ffed00 89.5px,#ffed00 96.5px,#00ff17 97.5px,#00ff1d 98.5px,#ffed00 99.5px,#ffed00 106.5px,#00ff24 107.5px,#00ff1d 108.5px,#ffed00 109.5px,#ffed00 117.5px,#00ff17 118.5px,#00ff17 119.5px,#ffed00 120.5px,#ffed00 128.5px,#00ff17 129.5px,#00ff17 130.5px,#ffed00 131.5px,#ffed00 140.5px,#00ff17 141.5px,#ffed00 142.5px,#ffed00 151.5px,#00ff17 152.5px,#00ff17 153.5px,#ffed00 154.5px,#ffed00 163.5px,#00ff17 164.5px,#00ff17 165.5px,#ffed00 166.5px,#ffed00 175.5px,#00ff17 176.5px,#ffed00 177.5px,#ffed00 186.5px,#00ff17 187.5px,#ffed00 188.5px,#ffed00 196.5px,#00ff17 197.5px,#ffed00 198.5px,#ffed00 205.5px,#00ff17 206.5px,#ffed00 207.5px,#ffed00 213.5px,#00ff16 214.5px,#00ff0a 239.5px,#ffed00 240.5px,#00ff09 241.5px,#00ff09 242.5px,#ffed00 243.5px,#ffec00 249.5px,#00ff06 250.5px,#00ff06 251.5px,#ffec00 252.5px,#ffec00 253.5px,#00ff05 254.5px,#00ff05 279.5px,#ffec00 280.5px,#ffec00 287.5px,#00ff05 288.5px,#00ff05 289.5px,#ffec00 290.5px,#ffec00 293.5px,#49ff00 294.5px,#71ff00 302.5px,#00ff05 303.5px,#00ff05 318.5px,#b4ff00 319.5px,#ffec00 320.5px,#ffec00 327.5px,#bfff00 328.5px,#ffec00 329.5px,#ffec00 333.5px,#00ff05 334.5px,#00ff05 345.5px,#bfff00 346.5px,#bfff00 353.5px,#e3ff00 354.5px,#ffde00 355.5px,#ff6f00 357.5px,#ff5900 358.5px,#ff6400 363.5px,#ffe300 364.5px,#17ff00 365.5px,#00ff05 366.5px,#00ff05 372.5px,#bfff00 373.5px,#bfff00 381.5px,#fff800 382.5px,#ff6000 383.5px,#ff3f00 384.5px,#ff3f00 392.5px,#ff6f00 393.5px,#6aff00 394.5px,#00ff14 395.5px,#00ff14 399.5px,#bfff00 400.5px,#bfff00 408.5px,#fffe00 409.5px,#ffba00 410.5px,#ff8f00 411.5px,#ff8f00 413.5px,#ffc200 414.5px,#9aff00 415.5px,#93ff00 416.5px,#37ff00 417.5px,#00ff05 418.5px,#00ff05 426.5px,#bfff00 427.5px,#bfff00 437.5px,#0dff00 438.5px,#5aff00 439.5px,#77ff00 440.5px,#5aff00 441.5px,#0dff00 442.5px,#2dff00 443.5px,#28ff00 446.5px,#00ff02 448.5px,#00ff05 453.5px,#bfff00 454.5px,#bfff00 464.5px,#2dff00 465.5px,#1dff00 467px)"></i><i style="left:449px;width:1px;background:linear-gradient(#fff000 0px,#ffed00 57.5px,#00ff17 58.5px,#00ff17 59.5px,#ffed00 60.5px,#ffed00 67.5px,#00ff17 68.5px,#ffed00 69.5px,#ffed00 76.5px,#00ff17 77.5px,#00ff17 78.5px,#ffed00 79.5px,#ffed00 86.5px,#00ff17 87.5px,#00ff17 88.5px,#ffed00 89.5px,#ffed00 96.5px,#00ff18 97.5px,#00ff1d 98.5px,#ffed00 99.5px,#ffed00 106.5px,#00ff24 107.5px,#00ff1d 108.5px,#ffed00 109.5px,#ffed00 117.5px,#00ff17 118.5px,#00ff17 119.5px,#ffed00 120.5px,#ffed00 128.5px,#00ff17 129.5px,#00ff17 130.5px,#ffed00 131.5px,#ffed00 140.5px,#00ff17 141.5px,#ffed00 142.5px,#ffed00 151.5px,#00ff17 152.5px,#00ff17 153.5px,#ffed00 154.5px,#ffed00 163.5px,#00ff17 164.5px,#00ff17 165.5px,#ffed00 166.5px,#ffed00 175.5px,#00ff17 176.5px,#ffed00 177.5px,#ffed00 186.5px,#00ff17 187.5px,#ffed00 188.5px,#ffed00 196.5px,#00ff17 197.5px,#ffed00 198.5px,#ffed00 205.5px,#00ff17 206.5px,#ffed00 207.5px,#ffed00 213.5px,#00ff16 214.5px,#00ff0b 239.5px,#ffed00 240.5px,#00ff0a 241.5px,#00ff09 242.5px,#ffed00 243.5px,#ffec00 249.5px,#00ff06 250.5px,#00ff06 251.5px,#ffec00 252.5px,#ffec00 253.5px,#00ff05 254.5px,#00ff05 279.5px,#ffec00 280.5px,#ffec00 287.5px,#00ff05 288.5px,#00ff05 289.5px,#ffec00 290.5px,#ffec00 293.5px,#00ff05 294.5px,#00ff05 319.5px,#ffec00 320.5px,#ffec00 327.5px,#00ff05 328.5px,#ffec00 329.5px,#ffec00 333.5px,#00ff05 334.5px,#00ff05 351.5px,#2aff00 352.5px,#ddff00 353.5px,#ffc100 354.5px,#ff6f00 355.5px,#ff5900 356.5px,#ff5900 361.5px,#ff6f00 362.5px,#ffd200 363.5px,#34ff00 364.5px,#00ff05 365.5px,#00ff05 381.5px,#6aff00 382.5px,#ff6400 383.5px,#ff3f00 384.5px,#ff3f00 392.5px,#ff6f00 393.5px,#6aff00 394.5px,#00ff15 395.5px,#00ff05 407.5px,#1bff00 408.5px,#ffe800 409.5px,#ff9000 410.5px,#ff8f00 412.5px,#ffa600 413.5px,#c8ff00 414.5px,#67ff00 416.5px,#05ff00 417.5px,#00ff01 437.5px,#76ff00 439.5px,#70ff00 440.5px,#2aff00 441.5px,#28ff00 446.5px,#00ff03 448.5px,#04ff00 454.5px,#2cff00 456.5px,#2cff00 465.5px,#1bff00 467px)"></i><i style="left:450px;width:1px;background:linear-gradient(#fff000 0px,#ffed00 57.5px,#00ff19 58.5px,#00ff19 59.5px,#ffed00 60.5px,#ffed00 67.5px,#00ff19 68.5px,#ffed00 69.5px,#ffed00 76.5px,#00ff19 77.5px,#00ff19 78.5px,#ffed00 79.5px,#ffed00 86.5px,#00ff19 87.5px,#00ff19 88.5px,#ffed00 89.5px,#ffed00 96.5px,#00ff1a 97.5px,#00ff1f 98.5px,#ffed00 99.5px,#ffed00 106.5px,#00ff25 107.5px,#00ff1f 108.5px,#ffed00 109.5px,#ffed00 117.5px,#00ff19 118.5px,#00ff19 119.5px,#ffed00 120.5px,#ffed00 128.5px,#00ff19 129.5px,#00ff19 130.5px,#ffed00 131.5px,#ffed00 140.5px,#00ff19 141.5px,#ffed00 142.5px,#ffed00 151.5px,#00ff19 152.5px,#00ff19 153.5px,#ffed00 154.5px,#ffed00 163.5px,#00ff19 164.5px,#00ff19 165.5px,#ffed00 166.5px,#ffed00 175.5px,#00ff19 176.5px,#ffed00 177.5px,#ffed00 186.5px,#00ff19 187.5px,#ffed00 188.5px,#ffed00 196.5px,#00ff19 197.5px,#ffed00 198.5px,#ffed00 205.5px,#00ff19 206.5px,#ffed00 207.5px,#ffed00 213.5px,#00ff18 214.5px,#00ff0d 239.5px,#ffed00 240.5px,#00ff0c 241.5px,#00ff0b 242.5px,#ffed00 243.5px,#ffed00 249.5px,#00ff08 250.5px,#00ff08 251.5px,#ffec00 252.5px,#ffec00 253.5px,#00ff07 254.5px,#00ff07 279.5px,#ffec00 280.5px,#ffec00 287.5px,#00ff07 288.5px,#00ff07 289.5px,#ffec00 290.5px,#ffec00 293.5px,#00ff07 294.5px,#00ff07 319.5px,#ffec00 320.5px,#ffec00 327.5px,#00ff07 328.5px,#ffec00 329.5px,#ffec00 333.5px,#00ff07 334.5px,#00ff07 349.5px,#27ff00 350.5px,#dbff00 351.5px,#ffc100 352.5px,#ff7000 353.5px,#ff5900 354.5px,#ff5900 359.5px,#ff7000 360.5px,#ffc100 361.5px,#dbff00 362.5px,#24ff00 363.5px,#00ff07 364.5px,#00ff07 380.5px,#20ff00 381.5px,#ffe200 382.5px,#ff4800 383.5px,#ff3f00 392.5px,#ff6f00 393.5px,#67ff00 394.5px,#00ff17 395.5px,#00ff07 406.5px,#2eff00 407.5px,#f1ff00 408.5px,#ff9e00 409.5px,#ff8f00 411.5px,#ff9300 412.5px,#fff300 413.5px,#9bff00 414.5px,#8dff00 415.5px,#2aff00 416.5px,#00ff07 417.5px,#00ff07 436.5px,#18ff00 437.5px,#66ff00 438.5px,#77ff00 439.5px,#4aff00 440.5px,#28ff00 442.5px,#24ff00 446.5px,#00ff05 448.5px,#00ff00 454.5px,#28ff00 456.5px,#28ff00 465.5px,#15ff00 467px)"></i><i style="left:451px;width:1px;background:linear-gradient(#fff000 0px,#ffed00 57.5px,#00ff17 58.5px,#00ff17 59.5px,#ffed00 60.5px,#ffed00 67.5px,#00ff17 68.5px,#ffed00 69.5px,#ffed00 76.5px,#00ff17 77.5px,#00ff17 78.5px,#ffed00 79.5px,#ffed00 86.5px,#00ff17 87.5px,#00ff17 88.5px,#ffed00 89.5px,#ffed00 96.5px,#00ff18 97.5px,#00ff1d 98.5px,#ffed00 99.5px,#ffed00 106.5px,#00ff24 107.5px,#00ff1d 108.5px,#ffed00 109.5px,#ffed00 117.5px,#00ff17 118.5px,#00ff17 119.5px,#ffed00 120.5px,#ffed00 128.5px,#00ff17 129.5px,#00ff17 130.5px,#ffed00 131.5px,#ffed00 140.5px,#00ff17 141.5px,#ffed00 142.5px,#ffed00 151.5px,#00ff17 152.5px,#00ff17 153.5px,#ffed00 154.5px,#ffed00 163.5px,#00ff17 164.5px,#00ff17 165.5px,#ffed00 166.5px,#ffed00 175.5px,#00ff17 176.5px,#ffed00 177.5px,#ffed00 186.5px,#00ff17 187.5px,#ffed00 188.5px,#ffed00 196.5px,#00ff17 197.5px,#ffed00 198.5px,#ffed00 205.5px,#00ff17 206.5px,#ffed00 207.5px,#ffed00 213.5px,#00ff17 214.5px,#00ff0b 239.5px,#ffed00 240.5px,#00ff0a 241.5px,#00ff0a 242.5px,#ffed00 243.5px,#ffec00 249.5px,#00ff07 250.5px,#00ff06 251.5px,#ffec00 252.5px,#ffec00 253.5px,#00ff06 254.5px,#00ff06 279.5px,#ffec00 280.5px,#ffec00 287.5px,#00ff06 288.5px,#00ff06 289.5px,#ffec00 290.5px,#ffec00 293.5px,#00ff06 294.5px,#00ff06 319.5px,#ffec00 320.5px,#ffec00 327.5px,#00ff06 328.5px,#ffec00 329.5px,#ffec00 333.5px,#00ff06 334.5px,#00ff06 347.5px,#27ff00 348.5px,#ddff00 349.5px,#ffc100 350.5px,#ff6f00 351.5px,#ff5900 352.5px,#ff5900 357.5px,#ff6f00 358.5px,#ffc100 359.5px,#ddff00 360.5px,#29ff00 361.5px,#00ff06 362.5px,#00ff05 379.5px,#88ff00 380.5px,#ffc900 381.5px,#ff5800 382.5px,#ff4000 384.5px,#ff4900 389.5px,#ff6f00 391.5px,#ff6f00 392.5px,#ff9f00 393.5px,#57ff00 394.5px,#00ff15 395.5px,#00ff06 404.5px,#03ff00 405.5px,#9cff00 406.5px,#ffd700 407.5px,#ff9800 408.5px,#ff8f00 411.5px,#ffd400 412.5px,#90ff00 413.5px,#9bff00 414.5px,#5dff00 415.5px,#00ff00 416.5px,#00ff00 436.5px,#4bff00 437.5px,#77ff00 438.5px,#67ff00 439.5px,#1aff00 440.5px,#2bff00 442.5px,#27ff00 446.5px,#00ff03 448.5px,#03ff00 454.5px,#2bff00 456.5px,#2bff00 465.5px,#1aff00 467px)"></i><i style="left:452px;width:1px;background:linear-gradient(#fff000 0px,#ffed00 57.5px,#00ff16 58.5px,#00ff16 59.5px,#ffed00 60.5px,#ffed00 67.5px,#00ff16 68.5px,#ffed00 69.5px,#ffed00 76.5px,#00ff16 77.5px,#00ff16 78.5px,#ffed00 79.5px,#ffed00 86.5px,#00ff16 87.5px,#00ff16 88.5px,#ffed00 89.5px,#ffed00 96.5px,#00ff17 97.5px,#00ff1c 98.5px,#ffed00 99.5px,#ffed00 106.5px,#00ff23 107.5px,#00ff1c 108.5px,#ffed00 109.5px,#ffed00 117.5px,#00ff16 118.5px,#00ff16 119.5px,#ffed00 120.5px,#ffed00 128.5px,#00ff16 129.5px,#00ff16 130.5px,#ffed00 131.5px,#ffed00 140.5px,#00ff16 141.5px,#ffed00 142.5px,#ffed00 151.5px,#00ff16 152.5px,#00ff16 153.5px,#ffed00 154.5px,#ffed00 163.5px,#00ff16 164.5px,#00ff16 165.5px,#ffed00 166.5px,#ffed00 175.5px,#00ff16 176.5px,#ffed00 177.5px,#ffed00 186.5px,#00ff16 187.5px,#ffed00 188.5px,#ffed00 196.5px,#00ff16 197.5px,#ffed00 198.5px,#ffed00 205.5px,#00ff16 206.5px,#ffed00 207.5px,#ffed00 213.5px,#00ff15 214.5px,#00ff09 239.5px,#ffed00 240.5px,#00ff08 241.5px,#00ff08 242.5px,#ffec00 243.5px,#ffec00 249.5px,#00ff05 250.5px,#00ff05 251.5px,#ffec00 252.5px,#ffec00 253.5px,#00ff04 254.5px,#00ff04 279.5px,#ffec00 280.5px,#ffec00 287.5px,#00ff04 288.5px,#00ff04 289.5px,#ffec00 290.5px,#ffec00 293.5px,#00ff04 294.5px,#00ff04 319.5px,#ffec00 320.5px,#ffec00 327.5px,#00ff04 328.5px,#ffec00 329.5px,#ffec00 333.5px,#00ff04 334.5px,#00ff04 346.5px,#2aff00 347.5px,#ffd200 348.5px,#ff6f00 349.5px,#ff5900 350.5px,#ff5900 355.5px,#ff6f00 356.5px,#ffc000 357.5px,#dfff00 358.5px,#2cff00 359.5px,#00ff04 360.5px,#00ff04 377.5px,#26ff00 378.5px,#fff800 379.5px,#ff8e00 380.5px,#ff4b00 381.5px,#ff4900 386.5px,#ff5700 387.5px,#ffb800 388.5px,#e7ff00 389.5px,#6cff00 390.5px,#6cff00 392.5px,#5aff00 393.5px,#00ff05 394.5px,#00ff13 397.5px,#00ff04 403.5px,#52ff00 404.5px,#fff300 405.5px,#ffb000 406.5px,#ff8f00 407.5px,#ff8f00 410.5px,#ffba00 411.5px,#9aff00 412.5px,#9bff00 413.5px,#85ff00 414.5px,#25ff00 415.5px,#00ff04 416.5px,#00ff04 435.5px,#2cff00 436.5px,#70ff00 437.5px,#76ff00 438.5px,#3cff00 439.5px,#2aff00 446.5px,#00ff02 448.5px,#06ff00 454.5px,#2eff00 456.5px,#2eff00 465.5px,#20ff00 467px)"></i><i style="left:453px;width:1px;background:linear-gradient(#00ff16 0px,#00ff15 16.5px,#00ff05 17.5px,#61ff00 19.5px,#9bff00 23.5px,#61ff00 27.5px,#00ff05 29.5px,#00ff16 31.5px,#00ff12 49.5px,#00ff00 52.5px,#00ff0a 98.5px,#00ff21 101.5px,#00ff16 107.5px,#00ff00 111.5px,#00ff0a 132.5px,#00ff22 135.5px,#00ff17 138.5px,#00ff00 141.5px,#02ff00 227.5px,#00ff10 229.5px,#00ff05 346.5px,#b2ff00 347.5px,#ff7200 348.5px,#ff5900 349.5px,#ff5900 353.5px,#ff6f00 354.5px,#ffc100 355.5px,#ddff00 356.5px,#2aff00 357.5px,#00ff05 358.5px,#00ff05 376.5px,#88ff00 377.5px,#ffc900 378.5px,#ff5d00 379.5px,#ff4b00 381.5px,#ff4b00 385.5px,#ff8e00 386.5px,#fff900 387.5px,#23ff00 388.5px,#00ff05 389.5px,#00ff11 401.5px,#17ff00 402.5px,#c6ff00 403.5px,#ffca00 404.5px,#ff9100 405.5px,#ff8f00 409.5px,#ffbd00 410.5px,#dcff00 411.5px,#99ff00 412.5px,#6eff00 413.5px,#28ff00 414.5px,#00ff04 415.5px,#00ff05 434.5px,#0cff00 435.5px,#5aff00 436.5px,#77ff00 437.5px,#5aff00 438.5px,#0cff00 439.5px,#2bff00 440.5px,#27ff00 446.5px,#00ff03 448.5px,#03ff00 454.5px,#2bff00 456.5px,#2bff00 465.5px,#1aff00 467px)"></i><i style="left:454px;width:1px;background:linear-gradient(#00ff11 0px,#00ff11 16.5px,#00ff02 17.5px,#61ff00 19.5px,#9bff00 23.5px,#61ff00 27.5px,#00ff02 29.5px,#00ff11 32.5px,#00ff0e 49.5px,#01ff00 56.5px,#00ff0a 98.5px,#00ff21 102.5px,#00ff16 107.5px,#01ff00 110.5px,#00ff0a 132.5px,#00ff22 136.5px,#01ff00 141.5px,#03ff00 227.5px,#00ff0d 230.5px,#00ff02 346.5px,#b6ff00 347.5px,#ff7100 348.5px,#ff5900 349.5px,#ff5900 351.5px,#ff6f00 352.5px,#ffc000 353.5px,#e0ff00 354.5px,#2fff00 355.5px,#00ff02 356.5px,#00ff02 374.5px,#28ff00 375.5px,#fff800 376.5px,#ff8e00 377.5px,#ff4b00 378.5px,#ff4b00 383.5px,#ff5d00 384.5px,#ffc800 385.5px,#8dff00 386.5px,#00ff02 387.5px,#00ff10 400.5px,#78ff00 401.5px,#ffe400 402.5px,#ffa200 403.5px,#ff8f00 405.5px,#ff8f00 407.5px,#ffa200 408.5px,#ffe400 409.5px,#9bff00 410.5px,#8fff00 411.5px,#14ff00 413.5px,#00ff02 415.5px,#00ff01 434.5px,#76ff00 436.5px,#71ff00 437.5px,#2dff00 438.5px,#2dff00 446.5px,#00ff00 448.5px,#09ff00 454.5px,#31ff00 456.5px,#31ff00 465.5px,#25ff00 467px)"></i><i style="left:455px;width:1px;background:linear-gradient(#00ff11 0px,#00ff11 16.5px,#00ff01 17.5px,#61ff00 19.5px,#9bff00 23.5px,#61ff00 27.5px,#00ff01 29.5px,#00ff11 31.5px,#00ff0e 49.5px,#01ff00 56.5px,#00ff09 98.5px,#00ff21 102.5px,#00ff16 107.5px,#01ff00 110.5px,#00ff0a 132.5px,#00ff22 136.5px,#01ff00 141.5px,#03ff00 227.5px,#00ff0c 231.5px,#00ff02 288.5px,#35ff00 289.5px,#64ff00 299.5px,#00ff02 300.5px,#00ff02 315.5px,#acff00 316.5px,#beff00 326.5px,#00ff02 327.5px,#00ff02 342.5px,#bfff00 343.5px,#bfff00 346.5px,#e2ff00 347.5px,#ffb700 348.5px,#ff6a00 349.5px,#ff6a00 350.5px,#ffde00 352.5px,#e3ff00 353.5px,#00ff02 354.5px,#00ff02 369.5px,#bfff00 370.5px,#cdff00 373.5px,#ffef00 374.5px,#ff5700 376.5px,#ff4b00 382.5px,#ff8e00 383.5px,#fff800 384.5px,#29ff00 385.5px,#00ff02 386.5px,#00ff11 396.5px,#bfff00 397.5px,#bfff00 398.5px,#e5ff00 399.5px,#ffde00 400.5px,#ff8f00 402.5px,#ff9000 406.5px,#ffb900 407.5px,#caff00 408.5px,#7cff00 410.5px,#03ff00 412.5px,#00ff02 423.5px,#bfff00 424.5px,#bfff00 434.5px,#67ff00 435.5px,#77ff00 436.5px,#21ff00 438.5px,#31ff00 443.5px,#2dff00 446.5px,#00ff00 448.5px,#00ff02 450.5px,#bfff00 451.5px,#bfff00 461.5px,#31ff00 462.5px,#26ff00 467px)"></i><i style="left:456px;width:1px;background:linear-gradient(#9bff00 0px,#9bff00 3.5px,#00ff15 4.5px,#00ff15 6.5px,#9bff00 7.5px,#9bff00 12.5px,#00ff15 13.5px,#00ff15 15.5px,#9bff00 16.5px,#9bff00 21.5px,#8eff00 22.5px,#9bff00 23.5px,#8eff00 24.5px,#9bff00 28.5px,#9bff00 30.5px,#00ff15 31.5px,#00ff15 33.5px,#9bff00 34.5px,#9bff00 39.5px,#00ff15 40.5px,#00ff15 42.5px,#9bff00 43.5px,#9bff00 48.5px,#00ff12 49.5px,#00ff00 51.5px,#9bff00 52.5px,#9bff00 57.5px,#00ff00 58.5px,#00ff00 60.5px,#9bff00 61.5px,#9bff00 66.5px,#00ff00 67.5px,#00ff00 69.5px,#9bff00 70.5px,#9bff00 75.5px,#00ff00 76.5px,#00ff00 78.5px,#9bff00 79.5px,#9bff00 84.5px,#00ff00 85.5px,#00ff00 87.5px,#9bff00 88.5px,#9bff00 93.5px,#00ff00 94.5px,#00ff00 96.5px,#9bff00 97.5px,#9bff00 102.5px,#00ff21 103.5px,#00ff21 105.5px,#9bff00 106.5px,#9bff00 111.5px,#00ff00 112.5px,#00ff00 114.5px,#9bff00 115.5px,#9bff00 120.5px,#00ff00 121.5px,#00ff00 123.5px,#9bff00 124.5px,#9bff00 129.5px,#00ff00 130.5px,#00ff0a 132.5px,#9bff00 133.5px,#9bff00 138.5px,#00ff0a 139.5px,#00ff00 141.5px,#9bff00 142.5px,#9bff00 147.5px,#00ff00 148.5px,#00ff00 150.5px,#9bff00 151.5px,#9bff00 156.5px,#00ff00 157.5px,#00ff00 159.5px,#9bff00 160.5px,#9bff00 165.5px,#00ff00 166.5px,#00ff00 168.5px,#9bff00 169.5px,#9bff00 174.5px,#00ff00 175.5px,#00ff00 177.5px,#9bff00 178.5px,#9bff00 183.5px,#00ff00 184.5px,#00ff00 186.5px,#9bff00 187.5px,#9bff00 192.5px,#00ff00 193.5px,#00ff00 195.5px,#9bff00 196.5px,#9bff00 201.5px,#00ff00 202.5px,#00ff00 204.5px,#9bff00 205.5px,#9bff00 210.5px,#00ff00 211.5px,#00ff00 213.5px,#9bff00 214.5px,#9bff00 219.5px,#01ff00 220.5px,#01ff00 222.5px,#9bff00 223.5px,#9bff00 228.5px,#00ff10 229.5px,#00ff0f 231.5px,#9bff00 232.5px,#9bff00 237.5px,#00ff0b 238.5px,#00ff0a 240.5px,#9bff00 241.5px,#9bff00 246.5px,#00ff07 247.5px,#00ff06 249.5px,#9bff00 250.5px,#9bff00 255.5px,#00ff05 256.5px,#00ff05 258.5px,#9bff00 259.5px,#9bff00 264.5px,#00ff05 265.5px,#00ff05 267.5px,#9bff00 268.5px,#9bff00 273.5px,#00ff05 274.5px,#00ff05 276.5px,#9bff00 277.5px,#9bff00 282.5px,#00ff05 283.5px,#00ff05 285.5px,#9bff00 286.5px,#9bff00 291.5px,#00ff05 292.5px,#00ff05 294.5px,#9bff00 295.5px,#9bff00 300.5px,#00ff05 301.5px,#00ff05 303.5px,#9bff00 304.5px,#9bff00 309.5px,#00ff05 310.5px,#00ff05 312.5px,#9bff00 313.5px,#9bff00 318.5px,#00ff05 319.5px,#00ff05 321.5px,#9bff00 322.5px,#9bff00 327.5px,#00ff05 328.5px,#00ff05 330.5px,#9bff00 331.5px,#9bff00 336.5px,#00ff05 337.5px,#00ff05 339.5px,#9bff00 340.5px,#9bff00 345.5px,#00ff05 346.5px,#00ff05 347.5px,#28ff00 348.5px,#fff000 349.5px,#fff000 350.5px,#c2ff00 351.5px,#9bff00 352.5px,#9bff00 354.5px,#00ff05 355.5px,#00ff05 357.5px,#9bff00 358.5px,#9bff00 363.5px,#00ff05 364.5px,#00ff05 366.5px,#9bff00 367.5px,#9bff00 370.5px,#bcff00 371.5px,#ffec00 372.5px,#ffcd00 373.5px,#ff7a00 374.5px,#ff4b00 375.5px,#ff4b00 380.5px,#ff5800 381.5px,#ffc900 382.5px,#89ff00 383.5px,#00ff05 384.5px,#9bff00 385.5px,#9bff00 390.5px,#00ff05 391.5px,#00ff09 393.5px,#9bff00 394.5px,#a5ff00 397.5px,#fff900 398.5px,#ff9800 400.5px,#ff8f00 404.5px,#ffa600 405.5px,#ffda00 406.5px,#dbff00 407.5px,#1cff00 410.5px,#00ff05 411.5px,#9bff00 412.5px,#9bff00 417.5px,#00ff05 418.5px,#00ff05 420.5px,#9bff00 421.5px,#9bff00 426.5px,#00ff05 427.5px,#00ff05 429.5px,#9bff00 430.5px,#9bff00 435.5px,#1bff00 437.5px,#11ff00 438.5px,#9bff00 439.5px,#9bff00 444.5px,#2cff00 445.5px,#11ff00 447.5px,#9bff00 448.5px,#9bff00 453.5px,#04ff00 454.5px,#2cff00 456.5px,#9bff00 457.5px,#9bff00 462.5px,#2cff00 463.5px,#2cff00 465.5px,#9bff00 467px)"></i><i style="left:457px;width:1px;background:linear-gradient(#9bff00 0px,#9bff00 3.5px,#00ff7a 4.5px,#00ff7a 6.5px,#9bff00 7.5px,#9bff00 12.5px,#00ff7a 13.5px,#00ff7a 15.5px,#9bff00 16.5px,#9bff00 21.5px,#8eff00 22.5px,#9bff00 23.5px,#8eff00 24.5px,#9bff00 28.5px,#9bff00 30.5px,#00ff7a 31.5px,#00ff7a 33.5px,#9bff00 34.5px,#9bff00 39.5px,#00ff7a 40.5px,#00ff7a 42.5px,#9bff00 43.5px,#9bff00 48.5px,#00ff6d 49.5px,#00ff32 50.5px,#00ff25 51.5px,#9bff00 52.5px,#9bff00 57.5px,#00ff25 58.5px,#00ff25 60.5px,#9bff00 61.5px,#9bff00 66.5px,#00ff25 67.5px,#00ff25 69.5px,#9bff00 70.5px,#9bff00 75.5px,#00ff25 76.5px,#00ff25 78.5px,#9bff00 79.5px,#9bff00 84.5px,#00ff25 85.5px,#00ff25 87.5px,#9bff00 88.5px,#9bff00 93.5px,#00ff25 94.5px,#00ff25 96.5px,#9bff00 97.5px,#9bff00 102.5px,#00ff30 103.5px,#00ff30 105.5px,#9bff00 106.5px,#9bff00 111.5px,#00ff25 112.5px,#00ff25 114.5px,#9bff00 115.5px,#9bff00 120.5px,#00ff25 121.5px,#00ff25 123.5px,#9bff00 124.5px,#9bff00 129.5px,#00ff25 130.5px,#00ff2b 132.5px,#9bff00 133.5px,#9bff00 138.5px,#00ff2b 139.5px,#00ff25 141.5px,#9bff00 142.5px,#9bff00 147.5px,#00ff25 148.5px,#00ff25 150.5px,#9bff00 151.5px,#9bff00 156.5px,#00ff25 157.5px,#00ff25 159.5px,#9bff00 160.5px,#9bff00 165.5px,#00ff25 166.5px,#00ff25 168.5px,#9bff00 169.5px,#9bff00 174.5px,#00ff25 175.5px,#00ff25 177.5px,#9bff00 178.5px,#9bff00 183.5px,#00ff25 184.5px,#00ff25 186.5px,#9bff00 187.5px,#9bff00 192.5px,#00ff25 193.5px,#00ff25 195.5px,#9bff00 196.5px,#9bff00 201.5px,#00ff25 202.5px,#00ff25 204.5px,#9bff00 205.5px,#9bff00 210.5px,#00ff25 211.5px,#00ff24 213.5px,#9bff00 214.5px,#9bff00 219.5px,#00ff20 220.5px,#00ff1e 222.5px,#9bff00 223.5px,#9bff00 228.5px,#00ff18 229.5px,#00ff16 231.5px,#9bff00 232.5px,#9bff00 237.5px,#00ff0f 238.5px,#00ff0d 240.5px,#9bff00 241.5px,#9bff00 246.5px,#00ff07 247.5px,#00ff06 249.5px,#9bff00 250.5px,#9bff00 255.5px,#00ff04 256.5px,#00ff04 258.5px,#9bff00 259.5px,#9bff00 264.5px,#00ff04 265.5px,#00ff04 267.5px,#9bff00 268.5px,#9bff00 273.5px,#00ff04 274.5px,#00ff04 276.5px,#9bff00 277.5px,#9bff00 282.5px,#00ff04 283.5px,#00ff04 285.5px,#9bff00 286.5px,#9bff00 291.5px,#00ff04 292.5px,#00ff04 294.5px,#9bff00 295.5px,#9bff00 300.5px,#00ff04 301.5px,#00ff04 303.5px,#9bff00 304.5px,#9bff00 309.5px,#00ff04 310.5px,#00ff04 312.5px,#9bff00 313.5px,#9bff00 318.5px,#00ff04 319.5px,#00ff04 321.5px,#9bff00 322.5px,#9bff00 327.5px,#00ff04 328.5px,#00ff04 330.5px,#9bff00 331.5px,#9bff00 336.5px,#00ff04 337.5px,#00ff04 339.5px,#9bff00 340.5px,#9bff00 345.5px,#00ff04 346.5px,#00ff04 348.5px,#9bff00 349.5px,#9bff00 354.5px,#00ff04 355.5px,#00ff04 357.5px,#9bff00 358.5px,#9bff00 363.5px,#00ff04 364.5px,#00ff04 366.5px,#9bff00 367.5px,#9bff00 368.5px,#d4ff00 369.5px,#ffdf00 370.5px,#ff6100 372.5px,#ff4b00 373.5px,#ff4b00 379.5px,#ff7e00 380.5px,#ffd800 381.5px,#26ff00 382.5px,#00ff04 383.5px,#00ff04 384.5px,#9bff00 385.5px,#9bff00 390.5px,#00ff04 391.5px,#00ff08 393.5px,#9bff00 394.5px,#9bff00 395.5px,#dbff00 396.5px,#ffda00 397.5px,#ffa600 398.5px,#ff8f00 399.5px,#ff9500 403.5px,#fff900 405.5px,#a5ff00 406.5px,#9bff00 408.5px,#08ff00 409.5px,#00ff04 411.5px,#9bff00 412.5px,#9bff00 417.5px,#00ff04 418.5px,#00ff04 420.5px,#9bff00 421.5px,#9bff00 426.5px,#00ff04 427.5px,#00ff02 429.5px,#9bff00 430.5px,#9bff00 435.5px,#1cff00 436.5px,#00ff00 437.5px,#13ff00 438.5px,#9bff00 439.5px,#9bff00 444.5px,#2fff00 445.5px,#13ff00 447.5px,#9bff00 448.5px,#9bff00 453.5px,#06ff00 454.5px,#2fff00 456.5px,#9bff00 457.5px,#9bff00 462.5px,#2fff00 463.5px,#2fff00 465.5px,#9bff00 467px)"></i><i style="left:458px;width:1px;background:linear-gradient(#00ff6b 0px,#00ff6b 16.5px,#00ff47 17.5px,#00ff07 18.5px,#59ff00 19.5px,#81ff00 21.5px,#9bff00 23.5px,#75ff00 26.5px,#59ff00 27.5px,#00ff07 28.5px,#00ff47 29.5px,#00ff6b 30.5px,#00ff69 49.5px,#00ff5d 61.5px,#00ff56 98.5px,#00ff47 105.5px,#00ff5d 113.5px,#00ff54 217.5px,#07ff00 251.5px,#14ff00 366.5px,#7cff00 367.5px,#ffec00 368.5px,#ff5900 370.5px,#ff4b00 373.5px,#ff4b00 377.5px,#ff5c00 378.5px,#ffc500 379.5px,#9dff00 380.5px,#10ff00 381.5px,#0fff00 393.5px,#2fff00 394.5px,#d7ff00 395.5px,#ffc800 396.5px,#ff9100 397.5px,#ff8f00 401.5px,#ffbc00 402.5px,#fffe00 403.5px,#9bff00 404.5px,#9aff00 405.5px,#75ff00 406.5px,#12ff00 408.5px,#0fff00 427.5px,#47ff00 429.5px,#6aff00 430.5px,#76ff00 432.5px,#18ff00 435.5px,#10ff00 467px)"></i><i style="left:459px;width:1px;background:linear-gradient(#00ff83 0px,#00ff83 16.5px,#00ff5a 17.5px,#00ff10 18.5px,#56ff00 19.5px,#81ff00 21.5px,#9bff00 23.5px,#75ff00 26.5px,#56ff00 27.5px,#00ff10 28.5px,#00ff5a 29.5px,#00ff83 30.5px,#00ff81 97.5px,#00ff56 101.5px,#00ff64 107.5px,#00ff83 110.5px,#00ff7d 132.5px,#00ff77 138.5px,#00ff83 156.5px,#00ff78 217.5px,#00ff0e 254.5px,#00ff0c 363.5px,#00ff01 364.5px,#87ff00 365.5px,#ffe100 366.5px,#ff5100 368.5px,#ff4c00 376.5px,#ff9000 377.5px,#fffb00 378.5px,#18ff00 379.5px,#00ff0c 380.5px,#00ff0b 392.5px,#6bff00 393.5px,#ffe700 394.5px,#ffa300 395.5px,#ff8f00 397.5px,#ff8f00 399.5px,#ffa300 400.5px,#ffe700 401.5px,#97ff00 402.5px,#8eff00 404.5px,#05ff00 406.5px,#00ff0c 412.5px,#00ff05 426.5px,#76ff00 429.5px,#65ff00 431.5px,#02ff00 433.5px,#00ff0a 437.5px,#1fff00 440.5px,#1bff00 446.5px,#00ff0a 448.5px,#00ff04 454.5px,#1fff00 456.5px,#1fff00 465.5px,#11ff00 467px)"></i><i style="left:460px;width:1px;background:linear-gradient(#00ff89 0px,#00ff88 16.5px,#00ff5f 17.5px,#00ff12 18.5px,#56ff00 19.5px,#81ff00 21.5px,#9bff00 23.5px,#75ff00 26.5px,#56ff00 27.5px,#00ff12 28.5px,#00ff5f 29.5px,#00ff88 30.5px,#00ff87 97.5px,#00ff58 101.5px,#00ff5a 106.5px,#00ff89 110.5px,#00ff82 132.5px,#00ff7b 138.5px,#00ff89 147.5px,#00ff7e 217.5px,#00ff14 254.5px,#00ff08 278.5px,#00ff12 294.5px,#41ff00 295.5px,#78ff00 305.5px,#00ff12 306.5px,#00ff12 321.5px,#b9ff00 322.5px,#bfff00 332.5px,#00ff12 333.5px,#00ff12 348.5px,#bfff00 349.5px,#bfff00 359.5px,#00ff12 360.5px,#0cff00 362.5px,#b0ff00 363.5px,#ffd100 364.5px,#ff7c00 365.5px,#ff4c00 366.5px,#ff5100 374.5px,#ffbf00 376.5px,#fff100 377.5px,#bfff00 378.5px,#bfff00 386.5px,#00ff12 387.5px,#00ff10 391.5px,#ceff00 392.5px,#ffbf00 393.5px,#ff8f00 394.5px,#ff9100 398.5px,#ffcb00 399.5px,#b8ff00 400.5px,#9aff00 401.5px,#9bff00 402.5px,#bfff00 403.5px,#bfff00 413.5px,#00ff12 414.5px,#00ff10 424.5px,#0aff00 425.5px,#6fff00 427.5px,#6fff00 429.5px,#bfff00 430.5px,#bfff00 440.5px,#15ff00 441.5px,#11ff00 446.5px,#00ff10 448.5px,#00ff0a 454.5px,#15ff00 456.5px,#bfff00 457.5px,#bfff00 467px)"></i><i style="left:461px;width:1px;background:linear-gradient(#00ff84 0px,#00ff84 16.5px,#00ff5b 17.5px,#00ff11 18.5px,#56ff00 19.5px,#81ff00 21.5px,#9bff00 23.5px,#75ff00 26.5px,#56ff00 27.5px,#00ff11 28.5px,#00ff5b 29.5px,#00ff84 30.5px,#00ff82 97.5px,#00ff56 101.5px,#00ff58 106.5px,#00ff84 110.5px,#00ff7e 132.5px,#00ff77 138.5px,#00ff84 151.5px,#00ff79 217.5px,#00ff0f 254.5px,#00ff0d 289.5px,#2cff00 290.5px,#61ff00 300.5px,#00ff0d 301.5px,#00ff0d 317.5px,#b0ff00 318.5px,#bfff00 327.5px,#00ff0d 328.5px,#00ff0d 344.5px,#bfff00 345.5px,#bfff00 354.5px,#00ff0d 355.5px,#00ff0d 359.5px,#34ff00 360.5px,#eaff00 361.5px,#ffbe00 362.5px,#ff6900 363.5px,#ff4b00 364.5px,#ff5500 372.5px,#fff900 375.5px,#c2ff00 376.5px,#bfff00 381.5px,#00ff0d 382.5px,#00ff0d 390.5px,#32ff00 391.5px,#ffc300 392.5px,#ff8f00 393.5px,#ff8f00 396.5px,#ffb100 397.5px,#fff600 398.5px,#f9ff00 399.5px,#bfff00 400.5px,#bfff00 408.5px,#00ff0d 409.5px,#00ff0d 422.5px,#01ff00 423.5px,#65ff00 425.5px,#bfff00 426.5px,#bfff00 435.5px,#00ff0d 436.5px,#02ff00 438.5px,#1eff00 440.5px,#1aff00 446.5px,#02ff00 447.5px,#00ff0d 452.5px,#bfff00 453.5px,#bfff00 462.5px,#1eff00 463.5px,#10ff00 467px)"></i><i style="left:462px;width:1px;background:linear-gradient(#00ff8e 0px,#00ff8d 16.5px,#00ff62 17.5px,#00ff14 18.5px,#55ff00 19.5px,#81ff00 21.5px,#9bff00 23.5px,#75ff00 26.5px,#55ff00 27.5px,#00ff14 28.5px,#00ff62 29.5px,#00ff8d 30.5px,#00ff8c 97.5px,#00ff5c 100.5px,#00ff5c 106.5px,#00ff8c 109.5px,#00ff87 132.5px,#00ff79 137.5px,#00ff8e 143.5px,#00ff83 217.5px,#00ff19 254.5px,#00ff14 357.5px,#4cff00 358.5px,#fff700 359.5px,#ff5b00 361.5px,#ff4b00 363.5px,#ff4b00 369.5px,#ff6a00 370.5px,#ffc000 371.5px,#dfff00 372.5px,#24ff00 373.5px,#00ff17 374.5px,#00ff17 390.5px,#23ff00 391.5px,#ffc400 392.5px,#ff8f00 393.5px,#ff9800 395.5px,#ffda00 396.5px,#9aff00 397.5px,#9aff00 399.5px,#82ff00 400.5px,#34ff00 401.5px,#00ff10 402.5px,#00ff0f 421.5px,#18ff00 422.5px,#53ff00 423.5px,#75ff00 424.5px,#77ff00 425.5px,#63ff00 426.5px,#00ff07 428.5px,#00ff17 430.5px,#00ff15 437.5px,#0cff00 440.5px,#00ff08 447.5px,#00ff17 452.5px,#0cff00 457.5px,#0cff00 465.5px,#00ff00 467px)"></i><i style="left:463px;width:1px;background:linear-gradient(#00ff8e 0px,#00ff8d 16.5px,#00ff62 17.5px,#00ff14 18.5px,#56ff00 19.5px,#81ff00 21.5px,#9bff00 23.5px,#75ff00 26.5px,#56ff00 27.5px,#00ff14 28.5px,#00ff62 29.5px,#00ff8d 30.5px,#00ff8b 97.5px,#00ff5c 100.5px,#00ff5c 106.5px,#00ff8e 110.5px,#00ff87 132.5px,#00ff78 137.5px,#00ff8e 143.5px,#00ff84 216.5px,#00ff18 254.5px,#00ff17 354.5px,#0fff00 355.5px,#90ff00 356.5px,#ffe400 357.5px,#ff5100 359.5px,#ff4c00 367.5px,#ff7c00 368.5px,#ffd200 369.5px,#aaff00 370.5px,#04ff00 371.5px,#00ff17 372.5px,#00ff16 389.5px,#00ff0a 390.5px,#17ff00 391.5px,#caff00 392.5px,#ffc400 393.5px,#ffc400 394.5px,#e2ff00 395.5px,#9bff00 396.5px,#8eff00 397.5px,#3aff00 399.5px,#00ff09 400.5px,#00ff20 401.5px,#00ff14 419.5px,#04ff00 420.5px,#6fff00 422.5px,#6fff00 424.5px,#04ff00 426.5px,#00ff17 428.5px,#00ff15 437.5px,#0dff00 440.5px,#00ff07 447.5px,#00ff17 451.5px,#00ff0f 454.5px,#0dff00 456.5px,#0dff00 465.5px,#00ff00 467px)"></i><i style="left:464px;width:1px;background:linear-gradient(#00ff7d 0px,#00ff7d 16.5px,#00ff56 17.5px,#00ff0e 18.5px,#57ff00 19.5px,#81ff00 21.5px,#9bff00 23.5px,#75ff00 26.5px,#57ff00 27.5px,#00ff0e 28.5px,#00ff56 29.5px,#00ff7d 30.5px,#00ff7c 97.5px,#00ff53 101.5px,#00ff61 107.5px,#00ff7d 110.5px,#00ff73 133.5px,#00ff79 139.5px,#00ff74 216.5px,#00ff08 254.5px,#00ff07 351.5px,#29ff00 352.5px,#a5ff00 353.5px,#ffe700 354.5px,#ff6c00 356.5px,#ff4c00 357.5px,#ff5000 365.5px,#ffe000 367.5px,#8fff00 368.5px,#07ff00 369.5px,#00ff00 387.5px,#90ff00 391.5px,#97ff00 394.5px,#00ff0c 398.5px,#00ff12 401.5px,#0aff00 418.5px,#66ff00 420.5px,#76ff00 422.5px,#29ff00 424.5px,#00ff00 425.5px,#00ff04 437.5px,#29ff00 440.5px,#25ff00 446.5px,#00ff04 448.5px,#01ff00 454.5px,#29ff00 456.5px,#29ff00 465.5px,#1bff00 467px)"></i><i style="left:465px;width:1px;background:linear-gradient(#00ff84 0px,#00ff83 16.5px,#00ff5b 17.5px,#00ff11 18.5px,#56ff00 19.5px,#81ff00 21.5px,#9bff00 23.5px,#75ff00 26.5px,#56ff00 27.5px,#00ff11 28.5px,#00ff5b 29.5px,#00ff83 30.5px,#00ff82 97.5px,#00ff56 101.5px,#00ff58 106.5px,#00ff84 110.5px,#00ff7e 132.5px,#00ff77 138.5px,#00ff84 151.5px,#00ff79 217.5px,#00ff0f 254.5px,#00ff0d 348.5px,#1eff00 349.5px,#9cff00 350.5px,#ffe900 351.5px,#ff6c00 353.5px,#ff4c00 354.5px,#ff4b00 362.5px,#ff5a00 363.5px,#fff300 365.5px,#5aff00 366.5px,#00ff0a 367.5px,#00ff09 384.5px,#0cff00 385.5px,#89ff00 388.5px,#9bff00 390.5px,#81ff00 392.5px,#00ff0d 395.5px,#00ff1d 399.5px,#00ff0d 409.5px,#00ff06 416.5px,#76ff00 419.5px,#65ff00 421.5px,#01ff00 423.5px,#00ff0d 427.5px,#00ff0b 437.5px,#1eff00 440.5px,#1aff00 446.5px,#00ff0b 448.5px,#00ff05 454.5px,#1eff00 457.5px,#1eff00 465.5px,#10ff00 467px)"></i><i style="left:466px;width:1px;background:linear-gradient(#00ff7d 0px,#00ff7d 16.5px,#00ff55 17.5px,#00ff0e 18.5px,#57ff00 19.5px,#81ff00 21.5px,#9bff00 23.5px,#75ff00 26.5px,#57ff00 27.5px,#00ff0e 28.5px,#00ff55 29.5px,#00ff7d 30.5px,#00ff7b 97.5px,#00ff53 101.5px,#00ff60 107.5px,#00ff7d 110.5px,#00ff72 133.5px,#00ff7c 210.5px,#00ff39 235.5px,#00ff06 257.5px,#00ff06 295.5px,#52ff00 296.5px,#83ff00 306.5px,#00ff06 307.5px,#00ff06 322.5px,#bbff00 323.5px,#bfff00 333.5px,#00ff06 334.5px,#00ff06 345.5px,#29ff00 346.5px,#a5ff00 347.5px,#ffe700 348.5px,#ff6100 350.5px,#ff4b00 352.5px,#ff4b00 360.5px,#ff6800 361.5px,#f2ff00 363.5px,#3eff00 364.5px,#00ff06 365.5px,#00ff06 376.5px,#bfff00 377.5px,#bfff00 387.5px,#9aff00 388.5px,#68ff00 390.5px,#16ff00 392.5px,#00ff07 393.5px,#00ff16 399.5px,#00ff06 403.5px,#bfff00 404.5px,#bfff00 414.5px,#19ff00 415.5px,#70ff00 417.5px,#70ff00 419.5px,#19ff00 421.5px,#00ff04 422.5px,#00ff06 430.5px,#bfff00 431.5px,#bfff00 441.5px,#2aff00 442.5px,#26ff00 446.5px,#00ff04 448.5px,#02ff00 454.5px,#2aff00 456.5px,#2aff00 457.5px,#bfff00 458.5px,#bfff00 467px)"></i><i style="left:467px;width:1px;background:linear-gradient(#00ff7b 0px,#00ff7a 16.5px,#00ff53 17.5px,#00ff0d 18.5px,#57ff00 19.5px,#81ff00 21.5px,#9bff00 23.5px,#75ff00 26.5px,#57ff00 27.5px,#00ff0d 28.5px,#00ff53 29.5px,#00ff7a 30.5px,#00ff79 97.5px,#00ff52 101.5px,#00ff5f 107.5px,#00ff7b 110.5px,#00ff71 133.5px,#00ff71 216.5px,#00ff06 254.5px,#00ff04 291.5px,#40ff00 292.5px,#72ff00 302.5px,#00ff04 303.5px,#00ff04 318.5px,#b4ff00 319.5px,#bfff00 329.5px,#00ff04 330.5px,#00ff04 342.5px,#2dff00 343.5px,#a9ff00 344.5px,#ffe600 345.5px,#ff9000 346.5px,#ff6100 347.5px,#ff4b00 349.5px,#ff4c00 358.5px,#ff7a00 359.5px,#ffcd00 360.5px,#c2ff00 361.5px,#23ff00 362.5px,#00ff04 363.5px,#00ff04 372.5px,#bfff00 373.5px,#bfff00 383.5px,#9bff00 384.5px,#90ff00 386.5px,#04ff00 390.5px,#00ff13 399.5px,#bfff00 400.5px,#bfff00 410.5px,#0eff00 411.5px,#6bff00 415.5px,#76ff00 417.5px,#2cff00 419.5px,#03ff00 420.5px,#00ff04 426.5px,#bfff00 427.5px,#bfff00 437.5px,#13ff00 438.5px,#2eff00 440.5px,#2aff00 446.5px,#00ff02 448.5px,#00ff04 453.5px,#bfff00 454.5px,#bfff00 464.5px,#2eff00 465.5px,#20ff00 467px)"></i><i style="left:468px;width:1px;background:linear-gradient(#00ff87 0px,#00ff87 16.5px,#00ff5d 17.5px,#00ff12 18.5px,#56ff00 19.5px,#81ff00 21.5px,#9bff00 23.5px,#75ff00 26.5px,#56ff00 27.5px,#00ff12 28.5px,#00ff5d 29.5px,#00ff87 30.5px,#00ff85 97.5px,#00ff57 101.5px,#00ff59 106.5px,#00ff87 110.5px,#00ff81 132.5px,#00ff7a 138.5px,#00ff87 146.5px,#00ff7c 217.5px,#00ff12 254.5px,#00ff11 339.5px,#18ff00 340.5px,#98ff00 341.5px,#ffea00 342.5px,#ff6c00 344.5px,#ff4c00 345.5px,#ff4c00 355.5px,#ff6c00 356.5px,#ffea00 358.5px,#81ff00 359.5px,#00ff05 360.5px,#00ff11 366.5px,#00ff10 376.5px,#12ff00 377.5px,#8fff00 380.5px,#9bff00 382.5px,#94ff00 383.5px,#4bff00 385.5px,#00ff05 387.5px,#00ff20 399.5px,#08ff00 408.5px,#71ff00 412.5px,#76ff00 415.5px,#64ff00 416.5px,#00ff02 418.5px,#00ff11 421.5px,#00ff0f 437.5px,#17ff00 440.5px,#13ff00 446.5px,#00ff0f 448.5px,#00ff09 454.5px,#17ff00 457.5px,#17ff00 465.5px,#09ff00 467px)"></i><i style="left:469px;width:1px;background:linear-gradient(#00ff82 0px,#00ff81 16.5px,#00ff59 17.5px,#00ff10 18.5px,#57ff00 19.5px,#81ff00 21.5px,#9bff00 23.5px,#75ff00 26.5px,#57ff00 27.5px,#00ff10 28.5px,#00ff59 29.5px,#00ff81 30.5px,#00ff80 97.5px,#00ff55 101.5px,#00ff63 107.5px,#00ff82 110.5px,#00ff7c 132.5px,#00ff76 138.5px,#00ff82 156.5px,#00ff78 216.5px,#00ff0d 254.5px,#00ff0b 337.5px,#7fff00 338.5px,#ffe800 339.5px,#ff6c00 341.5px,#ff4c00 342.5px,#ff4c00 352.5px,#ff6c00 353.5px,#ffe800 355.5px,#9fff00 356.5px,#22ff00 357.5px,#00ff0b 358.5px,#00ff0b 375.5px,#19ff00 376.5px,#83ff00 377.5px,#9aff00 378.5px,#98ff00 380.5px,#5bff00 382.5px,#07ff00 384.5px,#00ff1a 400.5px,#04ff00 404.5px,#6aff00 408.5px,#77ff00 411.5px,#48ff00 414.5px,#00ff09 417.5px,#00ff09 437.5px,#22ff00 440.5px,#1eff00 446.5px,#00ff09 448.5px,#00ff03 454.5px,#22ff00 456.5px,#22ff00 465.5px,#14ff00 467px)"></i><i style="left:470px;width:1px;background:linear-gradient(#00ff82 0px,#00ff82 16.5px,#00ff59 17.5px,#00ff10 18.5px,#57ff00 19.5px,#81ff00 21.5px,#9bff00 23.5px,#75ff00 26.5px,#57ff00 27.5px,#00ff10 28.5px,#00ff59 29.5px,#00ff82 30.5px,#00ff80 97.5px,#00ff55 101.5px,#00ff57 106.5px,#00ff82 110.5px,#00ff7d 132.5px,#00ff76 138.5px,#00ff82 150.5px,#00ff77 217.5px,#00ff0d 254.5px,#00ff0c 336.5px,#7eff00 337.5px,#ff9900 338.5px,#ff4c00 339.5px,#ff4c00 349.5px,#ff6c00 350.5px,#ffe900 352.5px,#9eff00 353.5px,#21ff00 354.5px,#00ff0c 355.5px,#00ff0c 375.5px,#18ff00 376.5px,#83ff00 377.5px,#89ff00 378.5px,#0fff00 381.5px,#00ff0c 383.5px,#00ff17 394.5px,#00ff13 400.5px,#2bff00 402.5px,#71ff00 405.5px,#76ff00 408.5px,#39ff00 411.5px,#03ff00 413.5px,#00ff0c 425.5px,#00ff09 437.5px,#20ff00 440.5px,#1cff00 446.5px,#00ff09 448.5px,#00ff04 454.5px,#20ff00 456.5px,#20ff00 465.5px,#12ff00 467px)"></i><i style="left:471px;width:1px;background:linear-gradient(#00ff87 0px,#00ff86 16.5px,#00ff5d 17.5px,#00ff12 18.5px,#56ff00 19.5px,#81ff00 21.5px,#9bff00 23.5px,#75ff00 26.5px,#56ff00 27.5px,#00ff12 28.5px,#00ff5d 29.5px,#00ff86 30.5px,#00ff84 97.5px,#00ff57 101.5px,#00ff59 106.5px,#00ff87 110.5px,#00ff80 132.5px,#00ff79 138.5px,#00ff87 147.5px,#00ff7d 216.5px,#00ff11 254.5px,#00ff10 336.5px,#ffed00 337.5px,#ff4c00 338.5px,#ff4c00 346.5px,#ff6c00 347.5px,#ffea00 349.5px,#99ff00 350.5px,#1aff00 351.5px,#00ff10 352.5px,#00ff0f 376.5px,#13ff00 378.5px,#00ff10 380.5px,#00ff1b 394.5px,#00ff11 397.5px,#36ff00 399.5px,#76ff00 402.5px,#71ff00 405.5px,#0aff00 409.5px,#00ff10 415.5px,#00ff0e 437.5px,#00ff00 438.5px,#19ff00 440.5px,#15ff00 446.5px,#00ff00 447.5px,#00ff10 451.5px,#0bff00 455.5px,#19ff00 458.5px,#19ff00 465.5px,#0bff00 467px)"></i><i style="left:472px;width:1px;background:linear-gradient(#00ff88 0px,#00ff88 16.5px,#00ff5e 17.5px,#00ff12 18.5px,#56ff00 19.5px,#81ff00 21.5px,#9bff00 23.5px,#75ff00 26.5px,#56ff00 27.5px,#00ff12 28.5px,#00ff5e 29.5px,#00ff88 30.5px,#00ff86 97.5px,#00ff58 101.5px,#00ff5a 106.5px,#00ff88 110.5px,#00ff82 132.5px,#00ff75 137.5px,#00ff88 144.5px,#00ff7d 217.5px,#00ff13 254.5px,#00ff12 336.5px,#ffee00 337.5px,#ff4c00 338.5px,#ff4c00 343.5px,#ff6c00 344.5px,#ffea00 346.5px,#97ff00 347.5px,#17ff00 348.5px,#00ff11 349.5px,#00ff0d 393.5px,#00ff06 394.5px,#5fff00 397.5px,#77ff00 400.5px,#69ff00 402.5px,#00ff02 406.5px,#00ff12 411.5px,#00ff0f 437.5px,#16ff00 442.5px,#12ff00 446.5px,#00ff0f 448.5px,#00ff0a 454.5px,#16ff00 457.5px,#16ff00 465.5px,#08ff00 467px)"></i><i style="left:473px;width:1px;background:linear-gradient(#00ff7c 0px,#00ff7c 16.5px,#00ff55 17.5px,#00ff0e 18.5px,#57ff00 19.5px,#81ff00 21.5px,#9bff00 23.5px,#75ff00 26.5px,#57ff00 27.5px,#00ff0e 28.5px,#00ff55 29.5px,#00ff7c 30.5px,#00ff7b 97.5px,#00ff53 101.5px,#00ff60 107.5px,#00ff7c 110.5px,#00ff72 133.5px,#00ff73 216.5px,#00ff07 254.5px,#00ff06 336.5px,#87ff00 337.5px,#ff9800 338.5px,#ff4c00 339.5px,#ff4c00 340.5px,#ff6b00 341.5px,#ffe700 343.5px,#a6ff00 344.5px,#2aff00 345.5px,#00ff06 346.5px,#00ff02 389.5px,#3eff00 392.5px,#76ff00 395.5px,#72ff00 398.5px,#02ff00 403.5px,#00ff03 437.5px,#27ff00 439.5px,#27ff00 446.5px,#00ff03 448.5px,#03ff00 454.5px,#2bff00 456.5px,#2bff00 465.5px,#1dff00 467px)"></i><i style="left:474px;width:1px;background:linear-gradient(#00ff81 0px,#00ff81 16.5px,#00ff58 17.5px,#00ff0f 18.5px,#57ff00 19.5px,#81ff00 21.5px,#9bff00 23.5px,#75ff00 26.5px,#57ff00 27.5px,#00ff0f 28.5px,#00ff58 29.5px,#00ff81 30.5px,#00ff7f 97.5px,#00ff55 101.5px,#00ff63 107.5px,#00ff81 110.5px,#00ff7c 132.5px,#00ff75 138.5px,#00ff81 156.5px,#00ff76 217.5px,#00ff0c 254.5px,#00ff0a 337.5px,#ffec00 339.5px,#ffec00 340.5px,#a0ff00 341.5px,#23ff00 342.5px,#00ff0a 343.5px,#00ff09 386.5px,#71ff00 391.5px,#76ff00 394.5px,#3aff00 397.5px,#00ff0c 399.5px,#00ff0e 402.5px,#08ff00 438.5px,#23ff00 440.5px,#1fff00 446.5px,#00ff08 448.5px,#00ff02 454.5px,#23ff00 456.5px,#23ff00 465.5px,#15ff00 467px)"></i><i style="left:475px;width:1px;background:linear-gradient(#00ff7c 0px,#00ff7c 16.5px,#00ff55 17.5px,#00ff0e 18.5px,#57ff00 19.5px,#81ff00 21.5px,#9bff00 23.5px,#75ff00 26.5px,#57ff00 27.5px,#00ff0e 28.5px,#00ff55 29.5px,#00ff7c 30.5px,#00ff7a 97.5px,#00ff53 101.5px,#00ff60 107.5px,#00ff7c 110.5px,#00ff72 133.5px,#00ff73 216.5px,#00ff07 254.5px,#00ff05 385.5px,#17ff00 386.5px,#65ff00 387.5px,#77ff00 389.5px,#62ff00 392.5px,#00ff0d 396.5px,#00ff11 401.5px,#00ff05 412.5px,#00ff03 437.5px,#27ff00 439.5px,#27ff00 446.5px,#00ff03 448.5px,#03ff00 454.5px,#2bff00 456.5px,#2bff00 465.5px,#1dff00 467px)"></i><i style="left:476px;width:1px;background:linear-gradient(#94ff00 0px,#92ff00 16.5px,#6aff00 19.5px,#9bff00 23.5px,#6aff00 27.5px,#92ff00 31.5px,#85ff00 225.5px,#faff00 229.5px,#faff00 256.5px,#85ff00 260.5px,#89ff00 290.5px,#b3ff00 291.5px,#f8ff00 292.5px,#ffc300 295.5px,#ffc300 345.5px,#f8ff00 348.5px,#b3ff00 349.5px,#89ff00 350.5px,#83ff00 385.5px,#99ff00 386.5px,#ceff00 387.5px,#c4ff00 389.5px,#87ff00 393.5px,#85ff00 425.5px,#f2ff00 430.5px,#f2ff00 464.5px,#caff00 467px)"></i><i style="left:477px;width:1px;background:linear-gradient(#f5ff00 0px,#fff800 226.5px,#ffc700 230.5px,#ffcf00 256.5px,#f8ff00 260.5px,#fdff00 290.5px,#ffac00 293.5px,#ff6600 295.5px,#ff6600 345.5px,#ffed00 349.5px,#f5ff00 351.5px,#fffa00 426.5px,#ffd200 431.5px,#ffd900 465.5px,#ffe400 467px)"></i><i style="left:478px;width:1px;background:linear-gradient(#14ff00 0px,#12ff00 16.5px,#40ff00 18.5px,#75ff00 20.5px,#9bff00 23.5px,#63ff00 27.5px,#20ff00 29.5px,#0fff00 31.5px,#00ff08 98.5px,#00ff20 101.5px,#00ff15 107.5px,#02ff00 110.5px,#00ff0b 132.5px,#00ff23 136.5px,#00ff01 141.5px,#00ff03 226.5px,#44ff00 230.5px,#44ff00 255.5px,#00ff03 259.5px,#00ff09 290.5px,#0aff00 291.5px,#93ff00 294.5px,#aeff00 295.5px,#aeff00 345.5px,#67ff00 347.5px,#0aff00 349.5px,#00ff0b 371.5px,#00ff0f 393.5px,#00ff17 401.5px,#00ff0b 413.5px,#06ff00 427.5px,#32ff00 430.5px,#34ff00 464.5px,#1bff00 467px)"></i><i style="left:479px;width:1px;background:linear-gradient(#00ff80 0px,#00ff82 16.5px,#00ff5a 17.5px,#00ff10 18.5px,#56ff00 19.5px,#81ff00 21.5px,#9bff00 23.5px,#75ff00 26.5px,#56ff00 27.5px,#00ff11 28.5px,#00ff5c 29.5px,#00ff85 30.5px,#00ff90 97.5px,#00ff5e 100.5px,#00ff5f 106.5px,#00ff92 109.5px,#00ff97 131.5px,#00ff7b 133.5px,#00ff91 139.5px,#00ffb0 244.5px,#00ffb4 393.5px,#00ffbb 401.5px,#00ffb0 423.5px,#00ffad 437.5px,#00ff91 440.5px,#00ff93 446.5px,#00ffb0 449.5px,#00ffa7 454.5px,#00ff91 457.5px,#00ff95 467px)"></i><i style="left:480px;width:1px;background:linear-gradient(#00ff76 0px,#00ff78 16.5px,#00ff52 17.5px,#00ff0c 18.5px,#57ff00 19.5px,#81ff00 21.5px,#9bff00 23.5px,#75ff00 26.5px,#57ff00 27.5px,#00ff0d 28.5px,#00ff54 29.5px,#00ff7b 30.5px,#00ff86 97.5px,#00ff58 101.5px,#00ff5a 106.5px,#00ff8a 110.5px,#00ff88 128.5px,#00ff13 132.5px,#00ff24 133.5px,#00ff70 134.5px,#00ff91 143.5px,#00ffa6 278.5px,#00ffaa 393.5px,#00ffb2 401.5px,#00ffa6 413.5px,#00ffa4 437.5px,#00ff87 440.5px,#00ff8a 446.5px,#00ffa6 449.5px,#00ff9e 454.5px,#00ff87 457.5px,#00ff8c 467px)"></i><i style="left:481px;width:1px;background:linear-gradient(#00ff70 0px,#00ff73 16.5px,#00ff4e 17.5px,#00ff0a 18.5px,#58ff00 19.5px,#81ff00 21.5px,#9bff00 23.5px,#75ff00 26.5px,#58ff00 27.5px,#00ff0b 28.5px,#00ff50 29.5px,#00ff75 30.5px,#00ff81 97.5px,#00ff56 101.5px,#00ff58 106.5px,#00ff85 110.5px,#00ff86 124.5px,#00ff5b 126.5px,#01ff00 129.5px,#00ff05 132.5px,#00ff24 133.5px,#00ff6d 134.5px,#00ff8b 143.5px,#00ffa2 273.5px,#00ffa6 393.5px,#00ffad 401.5px,#00ffa2 423.5px,#00ff9f 437.5px,#00ff83 440.5px,#00ff85 446.5px,#00ffa2 449.5px,#00ff9a 454.5px,#00ff83 457.5px,#00ff87 467px)"></i><i style="left:482px;width:1px;background:linear-gradient(#00ff77 0px,#00ff7a 16.5px,#00ff54 17.5px,#00ff0d 18.5px,#57ff00 19.5px,#81ff00 21.5px,#9bff00 23.5px,#75ff00 26.5px,#57ff00 27.5px,#00ff0e 28.5px,#00ff55 29.5px,#00ff7d 30.5px,#00ff80 96.5px,#00ff51 101.5px,#00ff53 106.5px,#00ff82 110.5px,#00ff87 120.5px,#00ff07 125.5px,#01ff00 129.5px,#00ff75 133.5px,#00ff93 144.5px,#00ffaa 269.5px,#00ffae 393.5px,#00ffb5 401.5px,#00ffaa 423.5px,#00ffa8 437.5px,#00ff8b 440.5px,#00ff8d 446.5px,#00ffaa 449.5px,#00ffa2 454.5px,#00ff8b 457.5px,#00ff8f 467px)"></i><i style="left:483px;width:1px;background:linear-gradient(#00ff7f 0px,#00ff82 16.5px,#00ff5a 17.5px,#00ff10 18.5px,#56ff00 19.5px,#81ff00 21.5px,#9bff00 23.5px,#75ff00 26.5px,#56ff00 27.5px,#00ff11 28.5px,#00ff5b 29.5px,#00ff84 30.5px,#00ff8c 86.5px,#00ff49 89.5px,#00ff3c 98.5px,#00ff23 101.5px,#00ff2f 107.5px,#00ff49 110.5px,#00ff4d 113.5px,#00ff7c 115.5px,#00ff83 116.5px,#00ff00 121.5px,#00ff0a 126.5px,#00ff92 130.5px,#00ff80 137.5px,#00ff9a 142.5px,#00ffb2 262.5px,#00ffb6 393.5px,#00ffbe 401.5px,#00ffb2 413.5px,#00ffb0 437.5px,#00ff94 440.5px,#00ff96 446.5px,#00ffb2 449.5px,#00ffaa 454.5px,#00ff93 457.5px,#00ff97 467px)"></i><i style="left:484px;width:1px;background:linear-gradient(#00ff6e 0px,#00ff70 16.5px,#00ff4c 17.5px,#00ff0a 18.5px,#58ff00 19.5px,#81ff00 21.5px,#9bff00 23.5px,#75ff00 26.5px,#58ff00 27.5px,#00ff0a 28.5px,#00ff4e 29.5px,#00ff73 30.5px,#00ff78 86.5px,#00ff1a 88.5px,#18ff00 89.5px,#2aff00 98.5px,#3aff00 104.5px,#24ff00 111.5px,#32ff00 113.5px,#00ff04 115.5px,#02ff00 121.5px,#00ff86 127.5px,#00ff7a 133.5px,#00ff7a 138.5px,#00ff8a 147.5px,#00ffa2 264.5px,#00ffa6 393.5px,#00ffad 401.5px,#00ffa2 423.5px,#00ff9f 437.5px,#00ff83 440.5px,#00ff85 446.5px,#00ffa2 449.5px,#00ff9a 454.5px,#00ff83 457.5px,#00ff86 467px)"></i><i style="left:485px;width:1px;background:linear-gradient(#00ff85 0px,#00ff87 16.5px,#00ff5e 17.5px,#00ff12 18.5px,#56ff00 19.5px,#81ff00 21.5px,#9bff00 23.5px,#75ff00 26.5px,#56ff00 27.5px,#00ff13 28.5px,#00ff60 29.5px,#00ff8a 30.5px,#00ff95 85.5px,#00ff8b 86.5px,#0aff00 88.5px,#77ff00 89.5px,#89ff00 91.5px,#8eff00 113.5px,#0fff00 116.5px,#00ff1f 118.5px,#00ff93 122.5px,#00ff95 132.5px,#00ff82 136.5px,#00ffa0 142.5px,#00ffb9 256.5px,#00ffbd 393.5px,#00ffc5 401.5px,#00ffb9 412.5px,#00ffb7 437.5px,#00ff9a 440.5px,#00ff9d 446.5px,#00ffb9 449.5px,#00ffb1 454.5px,#00ff9a 457.5px,#00ff9d 467px)"></i><i style="left:486px;width:1px;background:linear-gradient(#00ff76 0px,#00ff79 16.5px,#00ff53 17.5px,#00ff0d 18.5px,#57ff00 19.5px,#81ff00 21.5px,#9bff00 23.5px,#75ff00 26.5px,#57ff00 27.5px,#00ff0d 28.5px,#00ff54 29.5px,#00ff7c 30.5px,#00ff7d 86.5px,#00ff40 87.5px,#1eff00 88.5px,#8aff00 89.5px,#9bff00 91.5px,#b7ff00 97.5px,#aeff00 105.5px,#9bff00 109.5px,#93ff00 113.5px,#00ff13 115.5px,#00ff5b 116.5px,#00ff8a 118.5px,#00ff88 132.5px,#00ff7a 137.5px,#00ff91 142.5px,#00ffab 252.5px,#00ffaf 393.5px,#00ffb7 401.5px,#00ffab 413.5px,#00ffa9 437.5px,#00ff8c 440.5px,#00ff8f 446.5px,#00ffab 449.5px,#00ffa3 454.5px,#00ff8c 457.5px,#00ff8f 467px)"></i><i style="left:487px;width:1px;background:linear-gradient(#00ff7b 0px,#00ff7d 16.5px,#00ff56 17.5px,#00ff0e 18.5px,#57ff00 19.5px,#81ff00 21.5px,#9bff00 23.5px,#75ff00 26.5px,#57ff00 27.5px,#00ff0f 28.5px,#00ff58 29.5px,#00ff80 30.5px,#00ff8b 85.5px,#00ff81 86.5px,#00ff43 87.5px,#1cff00 88.5px,#89ff00 89.5px,#9bff00 91.5px,#aeff00 93.5px,#d6ff00 95.5px,#d6ff00 104.5px,#9dff00 107.5px,#9bff00 112.5px,#8aff00 113.5px,#19ff00 114.5px,#00ff47 115.5px,#00ff87 116.5px,#00ff8c 132.5px,#00ff7d 137.5px,#00ff96 142.5px,#00ffb0 256.5px,#00ffb4 393.5px,#00ffbc 401.5px,#00ffb0 412.5px,#00ffae 437.5px,#00ff91 440.5px,#00ff93 446.5px,#00ffb0 449.5px,#00ffa8 454.5px,#00ff91 457.5px,#00ff93 467px)"></i><i style="left:488px;width:1px;background:linear-gradient(#00ff84 0px,#00ff87 16.5px,#00ff5e 17.5px,#00ff12 18.5px,#56ff00 19.5px,#81ff00 21.5px,#9bff00 23.5px,#75ff00 26.5px,#56ff00 27.5px,#00ff13 28.5px,#00ff5f 29.5px,#00ff8a 30.5px,#00ff8a 86.5px,#00ff4a 87.5px,#17ff00 88.5px,#89ff00 89.5px,#9bff00 91.5px,#9eff00 92.5px,#edff00 95.5px,#edff00 104.5px,#9eff00 107.5px,#9bff00 112.5px,#88ff00 113.5px,#14ff00 114.5px,#00ff90 116.5px,#00ff9d 129.5px,#00ff81 136.5px,#00ff9f 142.5px,#00ffba 253.5px,#00ffbe 393.5px,#00ffc5 401.5px,#00ffba 423.5px,#00ffb8 437.5px,#00ff9b 440.5px,#00ff9d 446.5px,#00ffba 449.5px,#00ffb2 454.5px,#00ff9b 457.5px,#00ff9d 467px)"></i><i style="left:489px;width:1px;background:linear-gradient(#00ff70 0px,#00ff73 16.5px,#00ff4e 17.5px,#00ff0b 18.5px,#58ff00 19.5px,#81ff00 21.5px,#9bff00 23.5px,#75ff00 26.5px,#58ff00 27.5px,#00ff0b 28.5px,#00ff50 29.5px,#00ff76 30.5px,#00ff81 85.5px,#00ff77 86.5px,#00ff3c 87.5px,#22ff00 88.5px,#8bff00 89.5px,#9eff00 92.5px,#edff00 95.5px,#edff00 104.5px,#9eff00 107.5px,#9bff00 112.5px,#8aff00 113.5px,#1fff00 114.5px,#00ff40 115.5px,#00ff7d 116.5px,#00ff83 132.5px,#00ff76 137.5px,#00ff8c 143.5px,#00ffa6 255.5px,#00ffaa 393.5px,#00ffb2 401.5px,#00ffa6 413.5px,#00ffa4 437.5px,#00ff87 440.5px,#00ff89 446.5px,#00ffa6 449.5px,#00ff9e 454.5px,#00ff87 457.5px,#00ff89 467px)"></i><i style="left:490px;width:1px;background:linear-gradient(#00ff78 0px,#00ff7a 16.5px,#00ff54 17.5px,#00ff0d 18.5px,#57ff00 19.5px,#81ff00 21.5px,#9bff00 23.5px,#75ff00 26.5px,#57ff00 27.5px,#00ff0e 28.5px,#00ff55 29.5px,#00ff7d 30.5px,#00ff84 84.5px,#00ff56 86.5px,#00ff12 87.5px,#8cff00 89.5px,#97ff00 92.5px,#d3ff00 95.5px,#d1ff00 104.5px,#8fff00 107.5px,#89ff00 112.5px,#79ff00 113.5px,#0fff00 114.5px,#00ff84 116.5px,#00ff89 132.5px,#00ff7b 137.5px,#00ff93 143.5px,#00ffad 253.5px,#00ffb1 393.5px,#00ffb9 401.5px,#00ffad 412.5px,#00ffab 437.5px,#00ff8e 440.5px,#00ff91 446.5px,#00ffad 449.5px,#00ffa5 454.5px,#00ff8e 457.5px,#00ff91 467px)"></i><i style="left:491px;width:1px;background:linear-gradient(#00ff84 0px,#00ff87 16.5px,#00ff5d 17.5px,#00ff12 18.5px,#56ff00 19.5px,#81ff00 21.5px,#9bff00 23.5px,#75ff00 26.5px,#56ff00 27.5px,#00ff13 28.5px,#00ff5f 29.5px,#00ff89 30.5px,#00ff8a 80.5px,#00ff05 85.5px,#29ff00 87.5px,#69ff00 89.5px,#4dff00 93.5px,#72ff00 102.5px,#5fff00 105.5px,#1fff00 108.5px,#08ff00 113.5px,#00ff28 114.5px,#00ff93 116.5px,#00ff94 132.5px,#00ff81 136.5px,#00ff9f 142.5px,#00ffba 255.5px,#00ffbe 393.5px,#00ffc5 401.5px,#00ffba 423.5px,#00ffb7 437.5px,#00ff9b 440.5px,#00ff9d 446.5px,#00ffba 449.5px,#00ffb2 454.5px,#00ff9b 457.5px,#00ff9d 467px)"></i><i style="left:492px;width:1px;background:linear-gradient(#00ff76 0px,#00ff78 16.5px,#00ff52 17.5px,#00ff0c 18.5px,#57ff00 19.5px,#81ff00 21.5px,#9bff00 23.5px,#75ff00 26.5px,#57ff00 27.5px,#00ff0d 28.5px,#00ff54 29.5px,#00ff7b 30.5px,#00ff81 75.5px,#00ff25 79.5px,#03ff00 81.5px,#00ff08 86.5px,#00ff40 92.5px,#00ff2e 98.5px,#00ff19 102.5px,#00ff2b 107.5px,#00ff43 111.5px,#00ff46 113.5px,#00ff88 116.5px,#00ff87 132.5px,#00ff7a 137.5px,#00ff91 143.5px,#00ffab 255.5px,#00ffaf 393.5px,#00ffb7 401.5px,#00ffab 413.5px,#00ffa9 437.5px,#00ff8c 440.5px,#00ff8e 446.5px,#00ffab 449.5px,#00ffa3 454.5px,#00ff8c 457.5px,#00ff8e 467px)"></i><i style="left:493px;width:1px;background:linear-gradient(#00ff7e 0px,#00ff81 16.5px,#00ff59 17.5px,#00ff10 18.5px,#57ff00 19.5px,#81ff00 21.5px,#9bff00 23.5px,#75ff00 26.5px,#56ff00 27.5px,#00ff10 28.5px,#00ff5a 29.5px,#00ff83 30.5px,#00ff84 71.5px,#00ff05 76.5px,#00ff01 81.5px,#00ff81 86.5px,#00ff84 97.5px,#00ff54 101.5px,#00ff56 106.5px,#00ff89 110.5px,#00ff8f 132.5px,#00ff7f 137.5px,#00ff99 142.5px,#00ffb4 255.5px,#00ffb8 393.5px,#00ffbf 401.5px,#00ffb4 423.5px,#00ffb1 437.5px,#00ff95 440.5px,#00ff97 446.5px,#00ffb4 449.5px,#00ffac 454.5px,#00ff95 457.5px,#00ff97 467px)"></i><i style="left:494px;width:1px;background:linear-gradient(#00ff8a 0px,#00ff8d 16.5px,#00ff62 17.5px,#00ff14 18.5px,#55ff00 19.5px,#81ff00 21.5px,#9bff00 23.5px,#75ff00 26.5px,#55ff00 27.5px,#00ff15 28.5px,#00ff64 29.5px,#00ff8f 30.5px,#00ff94 66.5px,#00ff4e 69.5px,#00ff00 72.5px,#00ff09 77.5px,#00ff93 82.5px,#00ff9a 97.5px,#00ff63 100.5px,#00ff63 106.5px,#00ff9c 109.5px,#00ff9a 132.5px,#00ff85 136.5px,#00ffa5 142.5px,#00ffc0 253.5px,#00ffc4 393.5px,#00ffcb 401.5px,#00ffc0 423.5px,#00ffbe 437.5px,#00ffa1 440.5px,#00ffa3 446.5px,#00ffc0 449.5px,#00ffb8 454.5px,#00ffa1 457.5px,#00ffa3 467px)"></i><i style="left:495px;width:1px;background:linear-gradient(#00ff80 0px,#00ff83 16.5px,#00ff5a 17.5px,#00ff10 18.5px,#56ff00 19.5px,#81ff00 21.5px,#9bff00 23.5px,#75ff00 26.5px,#56ff00 27.5px,#00ff11 28.5px,#00ff5c 29.5px,#00ff85 30.5px,#00ff8a 61.5px,#00ff50 64.5px,#00ff06 67.5px,#00ff00 72.5px,#00ff8e 78.5px,#00ff90 97.5px,#00ff5e 100.5px,#00ff5f 106.5px,#00ff92 109.5px,#00ff91 132.5px,#00ff7f 136.5px,#00ff9b 142.5px,#00ffb6 254.5px,#00ffba 393.5px,#00ffc1 401.5px,#00ffb6 423.5px,#00ffb4 437.5px,#00ff97 440.5px,#00ff99 446.5px,#00ffb6 449.5px,#00ffae 454.5px,#00ff97 457.5px,#00ff99 467px)"></i><i style="left:496px;width:1px;background:linear-gradient(#00ff78 0px,#00ff7b 16.5px,#00ff54 17.5px,#00ff0d 18.5px,#57ff00 19.5px,#81ff00 21.5px,#9bff00 23.5px,#75ff00 26.5px,#57ff00 27.5px,#00ff0e 28.5px,#00ff56 29.5px,#00ff7e 30.5px,#00ff79 57.5px,#00ff08 62.5px,#00ff06 68.5px,#00ff80 73.5px,#00ff89 97.5px,#00ff59 101.5px,#00ff5c 106.5px,#00ff8b 109.5px,#00ff8a 132.5px,#00ff7b 137.5px,#00ff93 142.5px,#00ffae 253.5px,#00ffb2 393.5px,#00ffb9 401.5px,#00ffae 423.5px,#00ffac 437.5px,#00ff8f 440.5px,#00ff91 446.5px,#00ffae 449.5px,#00ffa6 454.5px,#00ff8f 457.5px,#00ff91 467px)"></i><i style="left:497px;width:1px;background:linear-gradient(#00ff75 0px,#00ff78 16.5px,#00ff52 17.5px,#00ff0c 18.5px,#57ff00 19.5px,#81ff00 21.5px,#9bff00 23.5px,#75ff00 26.5px,#57ff00 27.5px,#00ff0d 28.5px,#00ff54 29.5px,#00ff7b 30.5px,#00ff77 52.5px,#05ff00 58.5px,#00ff03 63.5px,#00ff81 69.5px,#00ff86 97.5px,#00ff58 101.5px,#00ff5a 106.5px,#00ff8a 110.5px,#00ff87 132.5px,#00ff79 137.5px,#00ff90 142.5px,#00ffab 253.5px,#00ffaf 393.5px,#00ffb6 401.5px,#00ffab 423.5px,#00ffa9 437.5px,#00ff8c 440.5px,#00ff8e 446.5px,#00ffab 449.5px,#00ffa3 454.5px,#00ff8c 457.5px,#00ff8e 467px)"></i><i style="left:498px;width:1px;background:linear-gradient(#00ff79 0px,#00ff7c 16.5px,#00ff55 17.5px,#00ff0e 18.5px,#57ff00 19.5px,#81ff00 21.5px,#9bff00 23.5px,#75ff00 26.5px,#57ff00 27.5px,#00ff0f 28.5px,#00ff57 29.5px,#00ff7e 30.5px,#00ff7b 47.5px,#02ff00 53.5px,#00ff01 58.5px,#00ff82 64.5px,#00ff89 97.5px,#00ff59 101.5px,#00ff5c 106.5px,#00ff8c 109.5px,#00ff8b 132.5px,#00ff7c 137.5px,#00ff94 142.5px,#00ffaf 255.5px,#00ffb3 393.5px,#00ffba 401.5px,#00ffaf 423.5px,#00ffac 437.5px,#00ff90 440.5px,#00ff92 446.5px,#00ffaf 449.5px,#00ffa7 454.5px,#00ff90 457.5px,#00ff92 467px)"></i><i style="left:499px;width:1px;background:linear-gradient(#00ff7a 0px,#00ff7d 16.5px,#00ff56 17.5px,#00ff0e 18.5px,#57ff00 19.5px,#81ff00 21.5px,#9bff00 23.5px,#75ff00 26.5px,#57ff00 27.5px,#00ff0f 28.5px,#00ff57 29.5px,#00ff7f 30.5px,#00ff7d 42.5px,#00ff00 48.5px,#00ff00 53.5px,#00ff80 59.5px,#00ff8a 97.5px,#00ff5a 101.5px,#00ff5c 106.5px,#00ff8d 109.5px,#00ff8b 132.5px,#00ff7c 137.5px,#00ff95 142.5px,#00ffb0 255.5px,#00ffb4 393.5px,#00ffbb 401.5px,#00ffb0 423.5px,#00ffad 437.5px,#00ff91 440.5px,#00ff93 446.5px,#00ffb0 449.5px,#00ffa8 454.5px,#00ff91 457.5px,#00ff93 467px)"></i><i style="left:500px;width:1px;background:linear-gradient(#00ff77 0px,#00ff79 16.5px,#00ff53 17.5px,#00ff0d 18.5px,#57ff00 19.5px,#81ff00 21.5px,#9bff00 23.5px,#75ff00 26.5px,#57ff00 27.5px,#00ff0e 28.5px,#00ff55 29.5px,#00ff7c 30.5px,#00ff7a 37.5px,#00ff01 43.5px,#02ff00 48.5px,#00ff7a 54.5px,#00ff87 97.5px,#00ff58 101.5px,#00ff5b 106.5px,#00ff8b 110.5px,#00ff88 132.5px,#00ff7a 137.5px,#00ff92 143.5px,#00ffac 253.5px,#00ffb0 393.5px,#00ffb8 401.5px,#00ffac 413.5px,#00ffaa 437.5px,#00ff8d 440.5px,#00ff90 446.5px,#00ffac 449.5px,#00ffa4 454.5px,#00ff8d 457.5px,#00ff90 467px)"></i><i style="left:501px;width:1px;background:linear-gradient(#00ff7c 0px,#00ff7f 16.5px,#00ff57 17.5px,#00ff0f 18.5px,#57ff00 19.5px,#81ff00 21.5px,#9bff00 23.5px,#75ff00 26.5px,#57ff00 27.5px,#00ff10 28.5px,#00ff59 29.5px,#00ff82 30.5px,#00ff73 33.5px,#00ff03 38.5px,#00ff0a 44.5px,#00ff7d 49.5px,#00ff8c 97.5px,#00ff5d 100.5px,#00ff5d 106.5px,#00ff8f 109.5px,#00ff8d 132.5px,#00ff7e 137.5px,#00ff97 142.5px,#00ffb2 253.5px,#00ffb6 393.5px,#00ffbd 401.5px,#00ffb2 423.5px,#00ffb0 437.5px,#00ff93 440.5px,#00ff95 446.5px,#00ffb2 449.5px,#00ffaa 454.5px,#00ff93 457.5px,#00ff95 467px)"></i><i style="left:502px;width:1px;background:linear-gradient(#00ff71 0px,#00ff73 16.5px,#00ff4e 17.5px,#00ff0b 18.5px,#58ff00 19.5px,#81ff00 21.5px,#9bff00 23.5px,#75ff00 26.5px,#58ff00 27.5px,#00ff07 28.5px,#00ff39 29.5px,#00ff43 30.5px,#00ff04 33.5px,#00ff07 39.5px,#00ff6f 44.5px,#00ff7f 76.5px,#00ff81 97.5px,#00ff56 101.5px,#00ff58 106.5px,#00ff86 110.5px,#00ff83 132.5px,#00ff77 137.5px,#00ff8c 144.5px,#00ffa6 252.5px,#00ffaa 393.5px,#00ffb2 401.5px,#00ffa6 413.5px,#00ffa4 437.5px,#00ff87 440.5px,#00ff8a 446.5px,#00ffa6 449.5px,#00ff9e 454.5px,#00ff87 457.5px,#00ff8a 467px)"></i><i style="left:503px;width:1px;background:linear-gradient(#00ff79 0px,#00ff7c 16.5px,#00ff55 17.5px,#00ff0e 18.5px,#57ff00 19.5px,#81ff00 21.5px,#9bff00 23.5px,#60ff00 27.5px,#19ff00 29.5px,#0aff00 32.5px,#00ff05 34.5px,#00ff74 39.5px,#00ff83 49.5px,#00ff8a 97.5px,#00ff59 101.5px,#00ff5c 106.5px,#00ff8c 109.5px,#00ff8b 132.5px,#00ff7c 137.5px,#00ff94 142.5px,#00ffaf 253.5px,#00ffb3 393.5px,#00ffba 401.5px,#00ffaf 423.5px,#00ffad 437.5px,#00ff90 440.5px,#00ff92 446.5px,#00ffaf 449.5px,#00ffa7 454.5px,#00ff90 457.5px,#00ff92 467px)"></i><i style="left:504px;width:1px;background:linear-gradient(#00ff78 0px,#00ff7b 16.5px,#00ff54 17.5px,#00ff0a 18.5px,#59ff00 19.5px,#81ff00 21.5px,#9bff00 23.5px,#63ff00 27.5px,#0fff00 29.5px,#00ff2b 31.5px,#00ff7c 35.5px,#00ff88 97.5px,#00ff59 101.5px,#00ff5b 106.5px,#00ff8b 109.5px,#00ff8a 132.5px,#00ff7b 137.5px,#00ff93 142.5px,#00ffae 255.5px,#00ffb2 393.5px,#00ffb9 401.5px,#00ffae 423.5px,#00ffab 437.5px,#00ff8f 440.5px,#00ff91 446.5px,#00ffae 449.5px,#00ffa6 454.5px,#00ff8f 457.5px,#00ff91 467px)"></i><i style="left:505px;width:1px;background:linear-gradient(#00ff76 0px,#00ff72 13.5px,#00ff37 16.5px,#00ff0d 17.5px,#63ff00 19.5px,#9bff00 23.5px,#5dff00 27.5px,#00ff00 28.5px,#00ff47 29.5px,#00ff78 30.5px,#00ff86 97.5px,#00ff58 101.5px,#00ff5b 106.5px,#00ff8b 110.5px,#00ff88 132.5px,#00ff7a 137.5px,#00ff91 142.5px,#00ffac 255.5px,#00ffac 344.5px,#00ff9c 345.5px,#00ff70 346.5px,#00ff61 349.5px,#00ff61 361.5px,#00ff70 362.5px,#00ff9c 363.5px,#00ffac 365.5px,#00ffb0 393.5px,#00ffb7 401.5px,#00ffac 423.5px,#00ffa9 437.5px,#00ff8d 440.5px,#00ff8f 446.5px,#00ffac 449.5px,#00ffa4 454.5px,#00ff8d 457.5px,#00ff8f 467px)"></i><i style="left:506px;width:1px;background:linear-gradient(#00ff83 0px,#00ff80 8.5px,#00ff00 14.5px,#1cff00 17.5px,#63ff00 19.5px,#9bff00 23.5px,#75ff00 26.5px,#56ff00 27.5px,#00ff12 28.5px,#00ff5e 29.5px,#00ff89 30.5px,#00ff93 97.5px,#00ff60 100.5px,#00ff60 106.5px,#00ff95 109.5px,#00ff93 132.5px,#00ff81 136.5px,#00ff9e 142.5px,#00ffb9 253.5px,#00ffb9 344.5px,#00ff7b 345.5px,#5cff00 346.5px,#c8ff00 347.5px,#c8ff00 361.5px,#5cff00 362.5px,#00ff7b 363.5px,#00ffb9 364.5px,#00ffbd 393.5px,#00ffc4 401.5px,#00ffb9 423.5px,#00ffb7 437.5px,#00ff9a 440.5px,#00ff9c 446.5px,#00ffb9 449.5px,#00ffb1 454.5px,#00ff9a 457.5px,#00ff9c 467px)"></i><i style="left:507px;width:1px;background:linear-gradient(#00ff80 0px,#00ff70 4.5px,#00ff01 9.5px,#02ff00 14.5px,#00ff22 16.5px,#00ff23 17.5px,#00ff00 18.5px,#59ff00 19.5px,#81ff00 21.5px,#9bff00 23.5px,#75ff00 26.5px,#56ff00 27.5px,#00ff11 28.5px,#00ff5c 29.5px,#00ff86 30.5px,#00ff90 97.5px,#00ff5c 101.5px,#00ff5f 106.5px,#00ff93 109.5px,#00ff91 132.5px,#00ff7f 136.5px,#00ff9b 142.5px,#00ffb6 253.5px,#00ffb6 344.5px,#00ff69 345.5px,#c9ff00 346.5px,#ffe400 347.5px,#ffe400 361.5px,#c9ff00 362.5px,#00ff69 363.5px,#00ffb6 364.5px,#00ffba 393.5px,#00ffc1 401.5px,#00ffb6 423.5px,#00ffb4 437.5px,#00ff97 440.5px,#00ff99 446.5px,#00ffb6 449.5px,#00ffae 454.5px,#00ff97 457.5px,#00ff99 467px)"></i><i style="left:508px;width:1px;background:linear-gradient(#00ff50 0px,#00ff02 4.5px,#00ff08 10.5px,#00ff69 15.5px,#00ff70 16.5px,#00ff4c 17.5px,#00ff0a 18.5px,#58ff00 19.5px,#81ff00 21.5px,#9bff00 23.5px,#75ff00 26.5px,#58ff00 27.5px,#00ff0a 28.5px,#00ff4e 29.5px,#00ff73 30.5px,#00ff7e 97.5px,#00ff55 101.5px,#00ff63 107.5px,#00ff83 110.5px,#00ff81 132.5px,#00ff7a 138.5px,#00ff8a 146.5px,#00ffa3 252.5px,#00ffa3 344.5px,#00ff5a 345.5px,#cfff00 346.5px,#ffe400 347.5px,#ffe400 361.5px,#cfff00 362.5px,#00ff5a 363.5px,#00ffa3 364.5px,#00ffa8 393.5px,#00ffaf 401.5px,#00ffa3 413.5px,#00ffa1 437.5px,#00ff85 440.5px,#00ff87 446.5px,#00ffa3 449.5px,#00ff9b 454.5px,#00ff85 457.5px,#00ff87 467px)"></i><i style="left:509px;width:1px;background:linear-gradient(#08ff00 0px,#00ff07 5.5px,#00ff70 10.5px,#00ff7a 16.5px,#00ff54 17.5px,#00ff0d 18.5px,#57ff00 19.5px,#81ff00 21.5px,#9bff00 23.5px,#75ff00 26.5px,#57ff00 27.5px,#00ff0e 28.5px,#00ff56 29.5px,#00ff7d 30.5px,#00ff88 97.5px,#00ff59 101.5px,#00ff5b 106.5px,#00ff8d 110.5px,#00ff89 132.5px,#00ff7b 137.5px,#00ff93 143.5px,#00ffad 253.5px,#00ffad 344.5px,#00ff62 345.5px,#ccff00 346.5px,#ffe400 347.5px,#ffe400 361.5px,#ccff00 362.5px,#00ff62 363.5px,#00ffad 364.5px,#00ffb1 393.5px,#00ffb9 401.5px,#00ffad 412.5px,#00ffab 437.5px,#00ff8e 440.5px,#00ff91 446.5px,#00ffad 449.5px,#00ffa5 454.5px,#00ff8e 457.5px,#00ff91 467px)"></i><i style="left:510px;width:1px;background:linear-gradient(#00ff05 0px,#00ff7d 6.5px,#00ff7f 16.5px,#00ff58 17.5px,#00ff0f 18.5px,#57ff00 19.5px,#81ff00 21.5px,#9bff00 23.5px,#75ff00 26.5px,#57ff00 27.5px,#00ff10 28.5px,#00ff59 29.5px,#00ff82 30.5px,#00ff8d 97.5px,#00ff5d 100.5px,#00ff5e 106.5px,#00ff92 110.5px,#00ff8e 132.5px,#00ff7e 137.5px,#00ff98 142.5px,#00ffb2 252.5px,#00ffb2 344.5px,#00ff76 345.5px,#60ff00 346.5px,#caff00 347.5px,#caff00 361.5px,#60ff00 362.5px,#00ff76 363.5px,#00ffb2 364.5px,#00ffb6 393.5px,#00ffbe 401.5px,#00ffb2 413.5px,#00ffb0 437.5px,#00ff93 440.5px,#00ff96 446.5px,#00ffb2 449.5px,#00ffaa 454.5px,#00ff93 457.5px,#00ff96 467px)"></i><i style="left:511px;width:1px;background:linear-gradient(#00ff6a 0px,#00ff79 7.5px,#00ff7a 16.5px,#00ff54 17.5px,#00ff0d 18.5px,#57ff00 19.5px,#81ff00 21.5px,#9bff00 23.5px,#75ff00 26.5px,#57ff00 27.5px,#00ff0e 28.5px,#00ff55 29.5px,#00ff7d 30.5px,#00ff88 97.5px,#00ff59 101.5px,#00ff5b 106.5px,#00ff8d 110.5px,#00ff89 132.5px,#00ff7b 137.5px,#00ff93 143.5px,#00ffad 253.5px,#00ffad 344.5px,#00ff9e 345.5px,#00ff72 346.5px,#00ff62 348.5px,#00ff62 361.5px,#00ff72 362.5px,#00ff9e 363.5px,#00ffad 366.5px,#00ffb1 393.5px,#00ffb9 401.5px,#00ffad 412.5px,#00ffab 437.5px,#00ff8e 440.5px,#00ff91 446.5px,#00ffad 449.5px,#00ffa5 454.5px,#00ff8e 457.5px,#00ff91 467px)"></i><i style="left:512px;width:1px;background:linear-gradient(#00ff7f 0px,#00ff81 16.5px,#00ff59 17.5px,#00ff10 18.5px,#57ff00 19.5px,#81ff00 21.5px,#9bff00 23.5px,#75ff00 26.5px,#56ff00 27.5px,#00ff11 28.5px,#00ff5b 29.5px,#00ff84 30.5px,#00ff8f 97.5px,#00ff5b 101.5px,#00ff5e 106.5px,#00ff91 109.5px,#00ff8f 132.5px,#00ff7f 137.5px,#00ff99 142.5px,#00ffb4 251.5px,#00ffb8 393.5px,#00ffc0 401.5px,#00ffb4 413.5px,#00ffb2 437.5px,#00ff95 440.5px,#00ff97 446.5px,#00ffb4 449.5px,#00ffac 454.5px,#00ff95 457.5px,#00ff97 467px)"></i><i style="left:513px;width:1px;background:linear-gradient(#00ff78 0px,#00ff7b 16.5px,#00ff54 17.5px,#00ff0d 18.5px,#57ff00 19.5px,#81ff00 21.5px,#9bff00 23.5px,#75ff00 26.5px,#57ff00 27.5px,#00ff0e 28.5px,#00ff56 29.5px,#00ff7e 30.5px,#00ff88 97.5px,#00ff59 101.5px,#00ff5c 106.5px,#00ff8b 109.5px,#00ff8a 132.5px,#00ff7b 137.5px,#00ff93 142.5px,#00ffae 253.5px,#00ffb2 393.5px,#00ffb9 401.5px,#00ffae 423.5px,#00ffac 437.5px,#00ff8f 440.5px,#00ff91 446.5px,#00ffae 449.5px,#00ffa6 454.5px,#00ff8f 457.5px,#00ff91 467px)"></i><i style="left:514px;width:1px;background:linear-gradient(#00ff80 0px,#00ff83 16.5px,#00ff5a 17.5px,#00ff10 18.5px,#56ff00 19.5px,#81ff00 21.5px,#9bff00 23.5px,#75ff00 26.5px,#56ff00 27.5px,#00ff11 28.5px,#00ff5c 29.5px,#00ff85 30.5px,#00ff90 97.5px,#00ff5e 100.5px,#00ff5f 106.5px,#00ff92 109.5px,#00ff91 132.5px,#00ff7f 136.5px,#00ff9b 143.5px,#00ffb6 255.5px,#00ffba 393.5px,#00ffc1 401.5px,#00ffb6 423.5px,#00ffb3 437.5px,#00ff97 440.5px,#00ff99 446.5px,#00ffb6 449.5px,#00ffae 454.5px,#00ff97 457.5px,#00ff99 467px)"></i><i style="left:515px;width:1px;background:linear-gradient(#00ff78 0px,#00ff7b 16.5px,#00ff54 17.5px,#00ff0d 18.5px,#57ff00 19.5px,#81ff00 21.5px,#9bff00 23.5px,#75ff00 26.5px,#57ff00 27.5px,#00ff0e 28.5px,#00ff56 29.5px,#00ff7e 30.5px,#00ff88 97.5px,#00ff59 101.5px,#00ff5c 106.5px,#00ff8b 109.5px,#00ff8a 132.5px,#00ff7b 137.5px,#00ff93 142.5px,#00ffae 253.5px,#00ffb2 393.5px,#00ffb9 401.5px,#00ffae 423.5px,#00ffac 437.5px,#00ff8f 440.5px,#00ff91 446.5px,#00ffae 449.5px,#00ffa6 454.5px,#00ff8f 457.5px,#00ff91 467px)"></i><i style="left:516px;width:1px;background:linear-gradient(#00ff88 0px,#00ff8a 16.5px,#00ff60 17.5px,#00ff13 18.5px,#56ff00 19.5px,#81ff00 21.5px,#9bff00 23.5px,#75ff00 26.5px,#56ff00 27.5px,#00ff14 28.5px,#00ff62 29.5px,#00ff8d 30.5px,#00ff97 97.5px,#00ff62 100.5px,#00ff62 106.5px,#00ff9a 109.5px,#00ff97 132.5px,#00ff83 136.5px,#00ffa2 142.5px,#00ffbd 251.5px,#00ffc1 393.5px,#00ffc9 401.5px,#00ffbd 413.5px,#00ffbb 437.5px,#00ff9e 440.5px,#00ffa0 446.5px,#00ffbd 449.5px,#00ffb5 454.5px,#00ff9e 457.5px,#00ffa0 467px)"></i><i style="left:517px;width:1px;background:linear-gradient(#00ff70 0px,#00ff72 16.5px,#00ff4d 17.5px,#00ff0a 18.5px,#58ff00 19.5px,#81ff00 21.5px,#9bff00 23.5px,#75ff00 26.5px,#58ff00 27.5px,#00ff0b 28.5px,#00ff4f 29.5px,#00ff75 30.5px,#00ff80 97.5px,#00ff55 101.5px,#00ff64 107.5px,#00ff84 110.5px,#00ff82 132.5px,#00ff7c 138.5px,#00ff8c 148.5px,#00ffa5 254.5px,#00ffa9 393.5px,#00ffb1 401.5px,#00ffa5 413.5px,#00ffa3 437.5px,#00ff86 440.5px,#00ff88 446.5px,#00ffa5 449.5px,#00ff9d 454.5px,#00ff86 457.5px,#00ff88 467px)"></i><i style="left:518px;width:1px;background:linear-gradient(#00ff7f 0px,#00ff81 16.5px,#00ff59 17.5px,#00ff10 18.5px,#57ff00 19.5px,#81ff00 21.5px,#9bff00 23.5px,#75ff00 26.5px,#56ff00 27.5px,#00ff11 28.5px,#00ff5b 29.5px,#00ff84 30.5px,#00ff8f 97.5px,#00ff5e 100.5px,#00ff5e 106.5px,#00ff91 109.5px,#00ff8f 132.5px,#00ff7f 137.5px,#00ff9a 142.5px,#00ffb4 254.5px,#00ffb8 393.5px,#00ffc0 401.5px,#00ffb4 413.5px,#00ffb2 437.5px,#00ff95 440.5px,#00ff98 446.5px,#00ffb4 449.5px,#00ffac 454.5px,#00ff95 457.5px,#00ff98 467px)"></i><i style="left:519px;width:1px;background:linear-gradient(#00ff88 0px,#00ff8a 16.5px,#00ff60 17.5px,#00ff13 18.5px,#56ff00 19.5px,#81ff00 21.5px,#9bff00 23.5px,#75ff00 26.5px,#56ff00 27.5px,#00ff14 28.5px,#00ff62 29.5px,#00ff8d 30.5px,#00ff97 97.5px,#00ff62 100.5px,#00ff62 106.5px,#00ff9a 109.5px,#00ff97 132.5px,#00ff83 136.5px,#00ffa2 142.5px,#00ffbd 251.5px,#00ffc1 393.5px,#00ffc9 401.5px,#00ffbd 413.5px,#00ffbb 437.5px,#00ff9e 440.5px,#00ffa1 446.5px,#00ffbd 449.5px,#00ffb5 454.5px,#00ff9e 457.5px,#00ffa1 467px)"></i><i style="left:520px;width:1px;background:linear-gradient(#00ff7c 0px,#00ff7f 16.5px,#00ff57 17.5px,#00ff0f 18.5px,#57ff00 19.5px,#81ff00 21.5px,#9bff00 23.5px,#75ff00 26.5px,#57ff00 27.5px,#00ff10 28.5px,#00ff59 29.5px,#00ff82 30.5px,#00ff8d 97.5px,#00ff5d 100.5px,#00ff5d 106.5px,#00ff8f 109.5px,#00ff8d 132.5px,#00ff7e 137.5px,#00ff97 142.5px,#00ffb2 253.5px,#00ffb6 393.5px,#00ffbd 401.5px,#00ffb2 423.5px,#00ffb0 437.5px,#00ff93 440.5px,#00ff95 446.5px,#00ffb2 449.5px,#00ffaa 454.5px,#00ff93 457.5px,#00ff95 467px)"></i><i style="left:521px;width:1px;background:linear-gradient(#00ff7e 0px,#00ff80 16.5px,#00ff58 17.5px,#00ff0f 18.5px,#57ff00 19.5px,#81ff00 21.5px,#9bff00 23.5px,#75ff00 26.5px,#57ff00 27.5px,#00ff10 28.5px,#00ff5a 29.5px,#00ff83 30.5px,#00ff8e 97.5px,#00ff5d 100.5px,#00ff5e 106.5px,#00ff90 109.5px,#00ff8e 132.5px,#00ff7f 137.5px,#00ff98 142.5px,#00ffb3 251.5px,#00ffb5 393.5px,#00ffbd 401.5px,#00ffb1 413.5px,#00ffaf 437.5px,#00ff92 440.5px,#00ff95 446.5px,#00ffb1 449.5px,#00ffa9 454.5px,#00ff92 457.5px,#00ff95 467px)"></i><i style="left:522px;width:1px;background:linear-gradient(#00ff79 0px,#00ff7c 16.5px,#00ff55 17.5px,#00ff0e 18.5px,#57ff00 19.5px,#81ff00 21.5px,#9bff00 23.5px,#75ff00 26.5px,#57ff00 27.5px,#00ff0f 28.5px,#00ff57 29.5px,#00ff7f 30.5px,#00ff89 97.5px,#00ff59 101.5px,#00ff5c 106.5px,#00ff8c 109.5px,#00ff8b 132.5px,#00ff7c 137.5px,#00ff94 142.5px,#00ffaf 253.5px,#00ffa3 393.5px,#00ffaa 401.5px,#00ff9f 423.5px,#00ff9c 437.5px,#00ff80 440.5px,#00ff82 446.5px,#00ff9f 449.5px,#00ff97 454.5px,#00ff80 457.5px,#00ff7e 465.5px,#00ff88 467px)"></i><i style="left:523px;width:1px;background:linear-gradient(#00ff84 0px,#00ff87 16.5px,#00ff5d 17.5px,#00ff12 18.5px,#56ff00 19.5px,#81ff00 21.5px,#9bff00 23.5px,#75ff00 26.5px,#56ff00 27.5px,#00ff13 28.5px,#00ff5f 29.5px,#00ff89 30.5px,#00ff94 97.5px,#00ff60 100.5px,#00ff61 106.5px,#00ff96 109.5px,#00ff94 132.5px,#00ff81 136.5px,#00ff9f 142.5px,#00ffba 256.5px,#00ffa6 337.5px,#00ff91 364.5px,#00ff92 393.5px,#00ff99 401.5px,#00ff8e 423.5px,#00ff8b 437.5px,#00ff6f 440.5px,#00ff71 446.5px,#00ff8e 449.5px,#00ff86 454.5px,#00ff6f 457.5px,#00ff70 465.5px,#00ff81 467px)"></i><i style="left:524px;width:1px;background:linear-gradient(#00ff77 0px,#00ff7a 16.5px,#00ff53 17.5px,#00ff0d 18.5px,#57ff00 19.5px,#81ff00 21.5px,#9bff00 23.5px,#75ff00 26.5px,#57ff00 27.5px,#00ff0e 28.5px,#00ff55 29.5px,#00ff7d 30.5px,#00ff88 97.5px,#00ff59 101.5px,#00ff5b 106.5px,#00ff8a 109.5px,#00ff89 132.5px,#00ff7b 137.5px,#00ff92 142.5px,#00ffaa 229.5px,#00ff75 232.5px,#00ff60 335.5px,#00ff46 337.5px,#00ff13 339.5px,#00ff16 393.5px,#00ff1d 401.5px,#00ff12 423.5px,#00ff10 437.5px,#16ff00 441.5px,#12ff00 446.5px,#00ff10 448.5px,#00ff0a 454.5px,#16ff00 457.5px,#12ff00 465.5px,#00ff14 467px)"></i><i style="left:525px;width:1px;background:linear-gradient(#00ff5d 0px,#00ff5f 16.5px,#00ff3f 17.5px,#00ff03 18.5px,#5aff00 19.5px,#8eff00 22.5px,#9bff00 23.5px,#75ff00 26.5px,#5aff00 27.5px,#00ff04 28.5px,#00ff40 29.5px,#00ff62 30.5px,#00ff6e 97.5px,#00ff4e 101.5px,#00ff59 107.5px,#00ff71 110.5px,#00ff6d 133.5px,#00ff92 228.5px,#00ff8e 229.5px,#00ff3b 232.5px,#00ff22 351.5px,#00ff1c 393.5px,#00ff24 401.5px,#00ff18 413.5px,#00ff16 437.5px,#0aff00 440.5px,#00ff09 447.5px,#00ff18 452.5px,#0aff00 458.5px,#00ff00 465.5px,#00ff1e 467px)"></i><i style="left:526px;width:1px;background:linear-gradient(#00ff85 0px,#00ff88 16.5px,#00ff5e 17.5px,#00ff12 18.5px,#56ff00 19.5px,#81ff00 21.5px,#9bff00 23.5px,#75ff00 26.5px,#56ff00 27.5px,#00ff13 28.5px,#00ff60 29.5px,#00ff8a 30.5px,#00ff95 97.5px,#00ff61 100.5px,#00ff61 106.5px,#00ff97 109.5px,#00ff95 132.5px,#00ff82 136.5px,#00ffa0 142.5px,#00ffb5 229.5px,#00ff3d 232.5px,#00ff41 393.5px,#00ff48 401.5px,#00ff3d 423.5px,#00ff3b 437.5px,#00ff1e 440.5px,#00ff20 446.5px,#00ff3d 449.5px,#00ff35 454.5px,#00ff1e 457.5px,#00ff1f 465.5px,#00ff3b 467px)"></i><i style="left:527px;width:1px;background:linear-gradient(#00ff78 0px,#00ff7a 16.5px,#00ff54 17.5px,#00ff0d 18.5px,#57ff00 19.5px,#81ff00 21.5px,#9bff00 23.5px,#75ff00 26.5px,#57ff00 27.5px,#00ff0e 28.5px,#00ff55 29.5px,#00ff7d 30.5px,#00ff88 97.5px,#00ff59 101.5px,#00ff5b 106.5px,#00ff8d 110.5px,#00ff89 132.5px,#00ff7b 137.5px,#00ff93 143.5px,#00ffa8 229.5px,#00ff3c 232.5px,#00ff1e 375.5px,#00ff00 377.5px,#0dff00 381.5px,#0eff00 390.5px,#00ff00 391.5px,#00ff2c 395.5px,#00ff1c 416.5px,#00ff1a 437.5px,#03ff00 440.5px,#00ff00 446.5px,#00ff1c 449.5px,#00ff14 454.5px,#03ff00 458.5px,#00ff04 465.5px,#00ff24 467px)"></i><i style="left:528px;width:1px;background:linear-gradient(#00ff7d 0px,#00ff80 16.5px,#00ff58 17.5px,#00ff0f 18.5px,#57ff00 19.5px,#81ff00 21.5px,#9bff00 23.5px,#75ff00 26.5px,#57ff00 27.5px,#00ff10 28.5px,#00ff5a 29.5px,#00ff82 30.5px,#00ff8d 97.5px,#00ff5d 100.5px,#00ff5e 106.5px,#00ff92 110.5px,#00ff8e 132.5px,#00ff7e 137.5px,#00ff98 142.5px,#00ffad 229.5px,#00ff3d 232.5px,#00ff22 341.5px,#00ff12 375.5px,#0fff00 376.5px,#9aff00 377.5px,#caff00 378.5px,#cbff00 390.5px,#9bff00 391.5px,#11ff00 392.5px,#00ff1c 394.5px,#00ff15 402.5px,#00ff0e 437.5px,#18ff00 441.5px,#14ff00 446.5px,#00ff0e 448.5px,#00ff09 454.5px,#18ff00 457.5px,#16ff00 464.5px,#09ff00 465.5px,#00ff1d 467px)"></i><i style="left:529px;width:1px;background:linear-gradient(#00ff79 0px,#00ff7c 16.5px,#00ff55 17.5px,#00ff0e 18.5px,#57ff00 19.5px,#81ff00 21.5px,#9bff00 23.5px,#75ff00 26.5px,#57ff00 27.5px,#00ff0e 28.5px,#00ff56 29.5px,#00ff7e 30.5px,#00ff89 97.5px,#00ff59 101.5px,#00ff5c 106.5px,#00ff8e 110.5px,#00ff8a 132.5px,#00ff7c 137.5px,#00ff94 143.5px,#00ffa9 229.5px,#00ff3c 232.5px,#00ff1d 375.5px,#0cff00 376.5px,#c6ff00 377.5px,#fffc00 378.5px,#fffc00 390.5px,#c7ff00 391.5px,#0eff00 392.5px,#00ff20 393.5px,#00ff28 401.5px,#00ff1c 413.5px,#00ff1a 437.5px,#04ff00 440.5px,#00ff00 446.5px,#00ff1c 449.5px,#00ff14 454.5px,#04ff00 458.5px,#00ff03 465.5px,#00ff24 467px)"></i><i style="left:530px;width:1px;background:linear-gradient(#00ff76 0px,#00ff8a 3.5px,#00ff8c 16.5px,#00ff62 17.5px,#00ff14 18.5px,#56ff00 19.5px,#81ff00 21.5px,#9bff00 23.5px,#75ff00 26.5px,#55ff00 27.5px,#00ff15 28.5px,#00ff63 29.5px,#00ff8f 30.5px,#00ff99 97.5px,#00ff62 100.5px,#00ff63 106.5px,#00ff9b 109.5px,#00ff99 132.5px,#00ff84 136.5px,#00ffa4 142.5px,#00ffbf 228.5px,#00ffb9 229.5px,#00ff3d 232.5px,#00ff2a 375.5px,#00ff03 376.5px,#c1ff00 377.5px,#fffc00 378.5px,#fffc00 390.5px,#c2ff00 391.5px,#00ff02 392.5px,#00ff2e 393.5px,#00ff35 401.5px,#00ff2a 423.5px,#00ff27 437.5px,#00ff0b 440.5px,#00ff0d 446.5px,#00ff2a 449.5px,#00ff22 454.5px,#00ff0b 457.5px,#00ff0f 465.5px,#00ff2f 467px)"></i><i style="left:531px;width:1px;background:linear-gradient(#27ff00 0px,#02ff00 1.5px,#00ff7f 6.5px,#00ff87 16.5px,#00ff5d 17.5px,#00ff12 18.5px,#56ff00 19.5px,#81ff00 21.5px,#9bff00 23.5px,#75ff00 26.5px,#56ff00 27.5px,#00ff13 28.5px,#00ff5f 29.5px,#00ff89 30.5px,#00ff94 97.5px,#00ff60 100.5px,#00ff61 106.5px,#00ff96 109.5px,#00ff94 132.5px,#00ff81 136.5px,#00ff9f 142.5px,#00ffb7 229.5px,#00ff7b 232.5px,#00ff69 320.5px,#00ff3d 375.5px,#00ff11 376.5px,#bbff00 377.5px,#fffc00 378.5px,#ffdf00 382.5px,#ffe500 388.5px,#fffc00 390.5px,#bcff00 391.5px,#00ff10 392.5px,#00ff3f 393.5px,#00ff46 401.5px,#00ff3b 423.5px,#00ff38 437.5px,#00ff1c 440.5px,#00ff1e 446.5px,#00ff3b 449.5px,#00ff33 454.5px,#00ff1c 457.5px,#00ff26 465.5px,#00ff44 467px)"></i><i style="left:532px;width:1px;background:linear-gradient(#3dff00 0px,#3fff00 4.5px,#00ff0f 7.5px,#00ff70 11.5px,#00ff79 16.5px,#00ff53 17.5px,#00ff0d 18.5px,#57ff00 19.5px,#81ff00 21.5px,#9bff00 23.5px,#75ff00 26.5px,#57ff00 27.5px,#00ff0e 28.5px,#00ff55 29.5px,#00ff7c 30.5px,#00ff87 97.5px,#00ff58 101.5px,#00ff5b 106.5px,#00ff8c 110.5px,#00ff88 132.5px,#00ff7a 137.5px,#00ff92 143.5px,#00ffac 253.5px,#00ff9d 314.5px,#00ff58 375.5px,#00ff26 376.5px,#b1ff00 377.5px,#fffc00 378.5px,#ffd800 381.5px,#ffdf00 388.5px,#fffc00 390.5px,#b2ff00 391.5px,#00ff24 392.5px,#00ff58 393.5px,#00ff5f 401.5px,#00ff54 423.5px,#00ff52 437.5px,#00ff35 440.5px,#00ff37 446.5px,#00ff54 449.5px,#00ff4c 454.5px,#00ff35 457.5px,#00ff35 464.5px,#00ff5b 467px)"></i><i style="left:533px;width:1px;background:linear-gradient(#00ff53 0px,#00ff02 3.5px,#3aff00 5.5px,#40ff00 9.5px,#00ff0a 12.5px,#00ff71 16.5px,#00ff55 17.5px,#00ff0e 18.5px,#57ff00 19.5px,#81ff00 21.5px,#9bff00 23.5px,#75ff00 26.5px,#57ff00 27.5px,#00ff0f 28.5px,#00ff58 29.5px,#00ff80 30.5px,#00ff8b 97.5px,#00ff5c 100.5px,#00ff5d 106.5px,#00ff90 110.5px,#00ff8c 132.5px,#00ff7d 137.5px,#00ff96 142.5px,#00ffb0 252.5px,#00ffa2 311.5px,#00ff4f 375.5px,#00ff1f 376.5px,#b5ff00 377.5px,#fffc00 378.5px,#ffd800 381.5px,#ffdf00 388.5px,#fffc00 390.5px,#b6ff00 391.5px,#00ff1c 392.5px,#00ff4e 393.5px,#00ff56 401.5px,#00ff4a 413.5px,#00ff48 437.5px,#00ff2b 440.5px,#00ff2d 446.5px,#00ff4a 449.5px,#00ff42 454.5px,#00ff2b 457.5px,#00ff2c 464.5px,#00ff56 467px)"></i><i style="left:534px;width:1px;background:linear-gradient(#00ff6d 0px,#00ff61 4.5px,#00ff04 8.5px,#37ff00 10.5px,#39ff00 15.5px,#12ff00 17.5px,#27ff00 18.5px,#5eff00 19.5px,#9bff00 23.5px,#75ff00 26.5px,#58ff00 27.5px,#00ff0a 28.5px,#00ff4d 29.5px,#00ff72 30.5px,#00ff7e 97.5px,#00ff54 101.5px,#00ff63 107.5px,#00ff82 110.5px,#00ff80 132.5px,#00ff7a 138.5px,#00ff89 148.5px,#00ffa3 254.5px,#00ff92 318.5px,#00ff5c 375.5px,#00ff29 376.5px,#b0ff00 377.5px,#fffc00 378.5px,#ffd800 381.5px,#ffdf00 388.5px,#fffc00 390.5px,#b1ff00 391.5px,#00ff27 392.5px,#00ff5c 393.5px,#00ff64 401.5px,#00ff58 412.5px,#00ff56 437.5px,#00ff39 440.5px,#00ff3c 446.5px,#00ff58 449.5px,#00ff50 454.5px,#00ff39 457.5px,#00ff43 465.5px,#00ff5a 467px)"></i><i style="left:535px;width:1px;background:linear-gradient(#00ff80 0px,#00ff77 9.5px,#00ff10 13.5px,#30ff00 15.5px,#9bff00 23.5px,#75ff00 26.5px,#57ff00 27.5px,#00ff11 28.5px,#00ff5c 29.5px,#00ff86 30.5px,#00ff90 97.5px,#00ff5c 101.5px,#00ff5f 106.5px,#00ff93 109.5px,#00ff91 132.5px,#00ff7f 136.5px,#00ff9b 142.5px,#00ffb6 253.5px,#00ffa7 311.5px,#00ff53 375.5px,#00ff22 376.5px,#b3ff00 377.5px,#fffc00 378.5px,#ffd800 381.5px,#ffdf00 388.5px,#fffc00 390.5px,#b5ff00 391.5px,#00ff1f 392.5px,#00ff52 393.5px,#00ff5a 401.5px,#00ff4e 413.5px,#00ff4c 437.5px,#00ff2f 440.5px,#00ff32 446.5px,#00ff4e 449.5px,#00ff46 454.5px,#00ff2f 457.5px,#00ff30 464.5px,#00ff5b 467px)"></i><i style="left:536px;width:1px;background:linear-gradient(#00ff79 0px,#00ff75 14.5px,#00ff4c 16.5px,#00ff1a 17.5px,#2bff00 18.5px,#63ff00 19.5px,#9bff00 23.5px,#63ff00 27.5px,#2cff00 28.5px,#00ff19 29.5px,#00ff4c 30.5px,#00ff7f 33.5px,#00ff89 97.5px,#00ff59 101.5px,#00ff5c 106.5px,#00ff8c 109.5px,#00ff8b 132.5px,#00ff7c 137.5px,#00ff94 142.5px,#00ffaf 255.5px,#00ff9e 316.5px,#00ff5d 375.5px,#00ff2a 376.5px,#b0ff00 377.5px,#fffc00 378.5px,#ffd800 381.5px,#ffdf00 388.5px,#fffc00 390.5px,#b1ff00 391.5px,#00ff28 392.5px,#00ff5d 393.5px,#00ff65 401.5px,#00ff59 413.5px,#00ff57 437.5px,#00ff3a 440.5px,#00ff3c 446.5px,#00ff59 449.5px,#00ff51 454.5px,#00ff3a 457.5px,#00ff46 465.5px,#00ff5f 467px)"></i><i style="left:537px;width:1px;background:linear-gradient(#00ff62 0px,#00ff65 16.5px,#00ff43 17.5px,#00ff05 18.5px,#59ff00 19.5px,#81ff00 21.5px,#9bff00 23.5px,#34ff00 31.5px,#00ff06 33.5px,#00ff5f 37.5px,#00ff70 71.5px,#00ff73 97.5px,#00ff50 101.5px,#00ff5d 107.5px,#00ff77 110.5px,#00ff71 133.5px,#00ff98 231.5px,#00ff8a 319.5px,#00ff5e 375.5px,#00ff2b 376.5px,#afff00 377.5px,#fffc00 378.5px,#ffd800 381.5px,#ffdf00 388.5px,#fffc00 390.5px,#b0ff00 391.5px,#00ff29 392.5px,#00ff5f 393.5px,#00ff67 401.5px,#00ff5b 412.5px,#00ff59 437.5px,#00ff3c 440.5px,#00ff3f 446.5px,#00ff5b 449.5px,#00ff53 454.5px,#00ff3c 457.5px,#00ff44 465.5px,#00ff58 467px)"></i><i style="left:538px;width:1px;background:linear-gradient(#00ff81 0px,#00ff83 16.5px,#00ff5b 17.5px,#00ff11 18.5px,#56ff00 19.5px,#81ff00 21.5px,#9bff00 23.5px,#5cff00 27.5px,#20ff00 28.5px,#07ff00 29.5px,#40ff00 32.5px,#37ff00 36.5px,#00ff09 38.5px,#00ff78 42.5px,#00ff8a 46.5px,#00ff91 97.5px,#00ff5f 100.5px,#00ff5f 106.5px,#00ff93 109.5px,#00ff91 132.5px,#00ff7f 136.5px,#00ff9c 142.5px,#00ffb6 252.5px,#00ffa8 309.5px,#00ff3f 375.5px,#00ff12 376.5px,#bbff00 377.5px,#fffc00 378.5px,#ffd800 381.5px,#ffdf00 388.5px,#fffc00 390.5px,#bcff00 391.5px,#00ff0e 392.5px,#00ff3d 393.5px,#00ff45 401.5px,#00ff39 413.5px,#00ff37 437.5px,#00ff1a 440.5px,#00ff1d 446.5px,#00ff39 449.5px,#00ff31 454.5px,#00ff1a 457.5px,#00ff1b 464.5px,#00ff4e 467px)"></i><i style="left:539px;width:1px;background:linear-gradient(#00ff82 0px,#00ff85 16.5px,#00ff5c 17.5px,#00ff11 18.5px,#56ff00 19.5px,#81ff00 21.5px,#9bff00 23.5px,#75ff00 26.5px,#56ff00 27.5px,#00ff12 28.5px,#00ff5d 29.5px,#00ff7b 30.5px,#00ff10 34.5px,#32ff00 36.5px,#40ff00 39.5px,#3bff00 41.5px,#00ff03 43.5px,#00ff76 47.5px,#00ff8b 50.5px,#00ff92 97.5px,#00ff5f 100.5px,#00ff60 106.5px,#00ff94 109.5px,#00ff92 132.5px,#00ff80 136.5px,#00ff9d 142.5px,#00ffb8 256.5px,#00ffa7 317.5px,#00ff6e 375.5px,#00ff38 376.5px,#a9ff00 377.5px,#fffc00 378.5px,#ffd800 381.5px,#ffdf00 388.5px,#fffc00 390.5px,#aaff00 391.5px,#00ff36 392.5px,#00ff6f 393.5px,#00ff76 401.5px,#00ff6b 423.5px,#00ff68 437.5px,#00ff4c 440.5px,#00ff4e 446.5px,#00ff6b 449.5px,#00ff63 454.5px,#00ff4c 457.5px,#00ff56 465.5px,#00ff6d 467px)"></i><i style="left:540px;width:1px;background:linear-gradient(#00ff7b 0px,#00ff7d 16.5px,#00ff56 17.5px,#00ff0e 18.5px,#57ff00 19.5px,#81ff00 21.5px,#9bff00 23.5px,#75ff00 26.5px,#57ff00 27.5px,#00ff0f 28.5px,#00ff58 29.5px,#00ff80 30.5px,#00ff79 35.5px,#09ff00 40.5px,#3fff00 42.5px,#3eff00 46.5px,#05ff00 48.5px,#00ff7d 53.5px,#00ff8b 97.5px,#00ff5c 100.5px,#00ff5d 106.5px,#00ff90 110.5px,#00ff8c 132.5px,#00ff7d 137.5px,#00ff96 142.5px,#00ffb0 252.5px,#00ffa2 309.5px,#00ff39 375.5px,#00ff0d 376.5px,#bdff00 377.5px,#fffc00 378.5px,#ffd800 381.5px,#ffdf00 388.5px,#fffc00 390.5px,#beff00 391.5px,#00ff0a 392.5px,#00ff37 393.5px,#00ff3f 401.5px,#00ff33 413.5px,#00ff31 437.5px,#00ff14 440.5px,#00ff17 446.5px,#00ff33 449.5px,#00ff2b 454.5px,#00ff14 457.5px,#00ff15 464.5px,#00ff48 467px)"></i><i style="left:541px;width:1px;background:linear-gradient(#00ff7b 0px,#00ff7e 16.5px,#00ff56 17.5px,#00ff0e 18.5px,#57ff00 19.5px,#81ff00 21.5px,#9bff00 23.5px,#75ff00 26.5px,#57ff00 27.5px,#00ff0f 28.5px,#00ff58 29.5px,#00ff80 30.5px,#00ff7d 40.5px,#00ff00 45.5px,#3cff00 47.5px,#40ff00 51.5px,#0fff00 53.5px,#00ff2e 55.5px,#00ff7b 58.5px,#00ff8d 93.5px,#00ff8b 97.5px,#00ff5c 100.5px,#00ff5d 106.5px,#00ff90 110.5px,#00ff8c 132.5px,#00ff7d 137.5px,#00ff96 142.5px,#00ffb0 252.5px,#00ffa0 320.5px,#00ff70 375.5px,#00ff3a 376.5px,#a9ff00 377.5px,#fffc00 378.5px,#ffd800 381.5px,#ffdf00 388.5px,#fffc00 390.5px,#a9ff00 391.5px,#00ff38 392.5px,#00ff71 393.5px,#00ff79 401.5px,#00ff6d 413.5px,#00ff6b 437.5px,#00ff4e 440.5px,#00ff51 446.5px,#00ff6d 449.5px,#00ff65 454.5px,#00ff4e 457.5px,#00ff57 465.5px,#00ff6c 467px)"></i><i style="left:542px;width:1px;background:linear-gradient(#00ff74 0px,#00ff76 16.5px,#00ff50 17.5px,#00ff0c 18.5px,#58ff00 19.5px,#81ff00 21.5px,#9bff00 23.5px,#75ff00 26.5px,#57ff00 27.5px,#00ff0c 28.5px,#00ff52 29.5px,#00ff79 30.5px,#00ff79 45.5px,#00ff1f 49.5px,#00ff04 50.5px,#39ff00 52.5px,#36ff00 57.5px,#00ff09 59.5px,#00ff71 63.5px,#00ff80 68.5px,#00ff84 97.5px,#00ff57 101.5px,#00ff5a 106.5px,#00ff88 110.5px,#00ff86 132.5px,#00ff78 137.5px,#00ff8f 143.5px,#00ffa9 255.5px,#00ff9a 311.5px,#00ff42 375.5px,#00ff15 376.5px,#b9ff00 377.5px,#fffc00 378.5px,#ffd800 381.5px,#ffdf00 388.5px,#fffc00 390.5px,#bbff00 391.5px,#00ff12 392.5px,#00ff41 393.5px,#00ff49 401.5px,#00ff3d 413.5px,#00ff3b 437.5px,#00ff1e 440.5px,#00ff21 446.5px,#00ff3d 449.5px,#00ff35 454.5px,#00ff1e 457.5px,#00ff1f 464.5px,#00ff4c 467px)"></i><i style="left:543px;width:1px;background:linear-gradient(#00ff79 0px,#00ff7c 16.5px,#00ff55 17.5px,#00ff0e 18.5px,#57ff00 19.5px,#81ff00 21.5px,#9bff00 23.5px,#75ff00 26.5px,#57ff00 27.5px,#00ff0f 28.5px,#00ff57 29.5px,#00ff7f 30.5px,#00ff81 50.5px,#00ff46 53.5px,#00ff0c 55.5px,#40ff00 58.5px,#3aff00 62.5px,#00ff04 64.5px,#00ff73 68.5px,#00ff87 71.5px,#00ff8a 97.5px,#00ff59 101.5px,#00ff5c 106.5px,#00ff8c 109.5px,#00ff8b 132.5px,#00ff7c 137.5px,#00ff94 142.5px,#00ffaf 251.5px,#00ffa0 312.5px,#00ff4e 375.5px,#00ff1f 376.5px,#b5ff00 377.5px,#fffc00 378.5px,#ffdf00 382.5px,#ffe500 388.5px,#fffc00 390.5px,#b6ff00 391.5px,#00ff1c 392.5px,#00ff4e 393.5px,#00ff56 401.5px,#00ff4a 413.5px,#00ff48 437.5px,#00ff2b 440.5px,#00ff2d 446.5px,#00ff4a 449.5px,#00ff42 454.5px,#00ff2b 457.5px,#00ff2c 464.5px,#00ff56 467px)"></i><i style="left:544px;width:1px;background:linear-gradient(#00ff81 0px,#00ff83 16.5px,#00ff5b 17.5px,#00ff11 18.5px,#56ff00 19.5px,#81ff00 21.5px,#9bff00 23.5px,#75ff00 26.5px,#56ff00 27.5px,#00ff11 28.5px,#00ff5d 29.5px,#00ff86 30.5px,#00ff81 56.5px,#09ff00 61.5px,#3fff00 63.5px,#3dff00 67.5px,#00ff02 69.5px,#00ff7b 73.5px,#00ff8f 76.5px,#00ff91 97.5px,#00ff5f 100.5px,#00ff5f 106.5px,#00ff93 109.5px,#00ff91 132.5px,#00ff7f 136.5px,#00ff9c 142.5px,#00ffb6 254.5px,#00ffa6 317.5px,#00ff6a 375.5px,#00ff35 376.5px,#abff00 377.5px,#fffc00 378.5px,#fffc00 390.5px,#acff00 391.5px,#00ff33 392.5px,#00ff6b 393.5px,#00ff72 401.5px,#00ff67 423.5px,#00ff64 437.5px,#00ff48 440.5px,#00ff4a 446.5px,#00ff67 449.5px,#00ff5f 454.5px,#00ff48 457.5px,#00ff52 465.5px,#00ff6b 467px)"></i><i style="left:545px;width:1px;background:linear-gradient(#00ff79 0px,#00ff7b 16.5px,#00ff55 17.5px,#00ff0e 18.5px,#57ff00 19.5px,#81ff00 21.5px,#9bff00 23.5px,#75ff00 26.5px,#57ff00 27.5px,#00ff0e 28.5px,#00ff56 29.5px,#00ff7e 30.5px,#00ff7e 61.5px,#01ff00 66.5px,#3dff00 68.5px,#3dff00 72.5px,#00ff00 74.5px,#00ff74 78.5px,#00ff88 81.5px,#00ff89 97.5px,#00ff59 101.5px,#00ff5c 106.5px,#00ff8e 110.5px,#00ff8a 132.5px,#00ff7c 137.5px,#00ff94 143.5px,#00ffae 253.5px,#00ff9f 314.5px,#00ff58 375.5px,#00ff30 376.5px,#6dff00 377.5px,#b2ff00 378.5px,#b2ff00 390.5px,#6fff00 391.5px,#00ff2e 392.5px,#00ff58 393.5px,#00ff60 401.5px,#00ff54 413.5px,#00ff52 437.5px,#00ff35 440.5px,#00ff37 446.5px,#00ff54 449.5px,#00ff4c 454.5px,#00ff35 457.5px,#00ff41 465.5px,#00ff5c 467px)"></i><i style="left:546px;width:1px;background:linear-gradient(#00ff65 0px,#00ff67 16.5px,#00ff45 17.5px,#00ff06 18.5px,#59ff00 19.5px,#81ff00 21.5px,#9bff00 23.5px,#75ff00 26.5px,#59ff00 27.5px,#00ff07 28.5px,#00ff47 29.5px,#00ff6a 30.5px,#00ff6e 66.5px,#06ff00 71.5px,#3eff00 73.5px,#3eff00 77.5px,#05ff00 79.5px,#00ff72 84.5px,#00ff75 97.5px,#00ff51 101.5px,#00ff5e 107.5px,#00ff7a 110.5px,#00ff73 133.5px,#00ff7a 139.5px,#00ff9a 238.5px,#00ff8c 317.5px,#00ff4e 376.5px,#00ff26 378.5px,#00ff2f 391.5px,#00ff5a 393.5px,#00ff61 401.5px,#00ff56 423.5px,#00ff53 437.5px,#00ff37 440.5px,#00ff39 446.5px,#00ff56 449.5px,#00ff4e 454.5px,#00ff37 457.5px,#00ff3f 465.5px,#00ff55 467px)"></i><i style="left:547px;width:1px;background:linear-gradient(#00ff70 0px,#00ff73 16.5px,#00ff4e 17.5px,#00ff0a 18.5px,#58ff00 19.5px,#81ff00 21.5px,#9bff00 23.5px,#75ff00 26.5px,#58ff00 27.5px,#00ff0b 28.5px,#00ff4f 29.5px,#00ff75 30.5px,#00ff7a 71.5px,#00ff1a 75.5px,#01ff00 76.5px,#3eff00 78.5px,#3eff00 82.5px,#01ff00 84.5px,#00ff6e 88.5px,#00ff81 91.5px,#00ff80 97.5px,#00ff56 101.5px,#00ff58 106.5px,#00ff85 110.5px,#00ff83 132.5px,#00ff76 137.5px,#00ff8b 143.5px,#00ffa6 255.5px,#00ff95 317.5px,#00ff58 387.5px,#00ff63 401.5px,#00ff58 423.5px,#00ff56 437.5px,#00ff39 440.5px,#00ff3b 446.5px,#00ff58 449.5px,#00ff50 454.5px,#00ff39 457.5px,#00ff43 465.5px,#00ff5b 467px)"></i><i style="left:548px;width:1px;background:linear-gradient(#00ff92 0px,#00ff94 16.5px,#00ff68 17.5px,#00ff17 18.5px,#55ff00 19.5px,#81ff00 21.5px,#9bff00 23.5px,#75ff00 26.5px,#55ff00 27.5px,#00ff18 28.5px,#00ff6a 29.5px,#00ff97 30.5px,#00ff9c 76.5px,#00ff4c 79.5px,#00ff06 81.5px,#3dff00 83.5px,#3dff00 87.5px,#00ff06 89.5px,#00ff8d 93.5px,#00ffa4 95.5px,#00ffa1 97.5px,#00ff66 100.5px,#00ff66 106.5px,#00ffa3 109.5px,#00ffa0 132.5px,#00ff89 136.5px,#00ffac 141.5px,#00ffc7 252.5px,#00ffb9 308.5px,#00ff49 380.5px,#00ff4b 393.5px,#00ff53 401.5px,#00ff47 413.5px,#00ff45 437.5px,#00ff28 440.5px,#00ff2b 446.5px,#00ff47 449.5px,#00ff3f 454.5px,#00ff28 457.5px,#00ff2a 464.5px,#00ff5d 467px)"></i><i style="left:549px;width:1px;background:linear-gradient(#00ff7c 0px,#00ff7e 16.5px,#00ff57 17.5px,#00ff0f 18.5px,#57ff00 19.5px,#81ff00 21.5px,#9bff00 23.5px,#75ff00 26.5px,#57ff00 27.5px,#00ff0f 28.5px,#00ff59 29.5px,#00ff81 30.5px,#00ff87 81.5px,#00ff40 84.5px,#00ff01 86.5px,#3dff00 88.5px,#3dff00 92.5px,#00ff02 94.5px,#00ff5f 97.5px,#00ff69 99.5px,#00ff5b 104.5px,#00ff6c 107.5px,#00ff91 110.5px,#00ff8d 132.5px,#00ff7d 137.5px,#00ff97 142.5px,#00ffb1 254.5px,#00ffa2 315.5px,#00ff60 387.5px,#00ff6c 401.5px,#00ff60 413.5px,#00ff5e 437.5px,#00ff41 440.5px,#00ff44 446.5px,#00ff60 449.5px,#00ff58 454.5px,#00ff41 457.5px,#00ff4c 465.5px,#00ff65 467px)"></i><i style="left:550px;width:1px;background:linear-gradient(#00ff82 0px,#00ff84 16.5px,#00ff5c 17.5px,#00ff11 18.5px,#56ff00 19.5px,#81ff00 21.5px,#9bff00 23.5px,#75ff00 26.5px,#56ff00 27.5px,#00ff12 28.5px,#00ff5d 29.5px,#00ff87 30.5px,#00ff8e 86.5px,#00ff44 89.5px,#00ff03 91.5px,#3dff00 93.5px,#3dff00 97.5px,#0bff00 98.5px,#00ff4a 102.5px,#00ff6f 107.5px,#00ff94 109.5px,#00ff92 132.5px,#00ff80 136.5px,#00ff9d 142.5px,#00ffb7 254.5px,#00ffa6 322.5px,#00ff77 392.5px,#00ff87 400.5px,#00ff77 408.5px,#00ff75 437.5px,#00ff58 440.5px,#00ff5b 446.5px,#00ff77 449.5px,#00ff6f 454.5px,#00ff58 457.5px,#00ff60 465.5px,#00ff75 467px)"></i><i style="left:551px;width:1px;background:linear-gradient(#00ff75 0px,#00ff78 16.5px,#00ff52 17.5px,#00ff0c 18.5px,#57ff00 19.5px,#81ff00 21.5px,#9bff00 23.5px,#75ff00 26.5px,#57ff00 27.5px,#00ff0d 28.5px,#00ff54 29.5px,#00ff7b 30.5px,#00ff83 91.5px,#00ff3d 94.5px,#00ff00 96.5px,#3dff00 98.5px,#3dff00 102.5px,#00ff18 103.5px,#00ff4e 107.5px,#00ff84 109.5px,#00ff87 132.5px,#00ff7a 137.5px,#00ff90 143.5px,#00ffab 252.5px,#00ff9a 320.5px,#00ff65 390.5px,#00ff75 400.5px,#00ff65 408.5px,#00ff63 437.5px,#00ff46 440.5px,#00ff49 446.5px,#00ff65 449.5px,#00ff5d 454.5px,#00ff46 457.5px,#00ff4e 465.5px,#00ff64 467px)"></i><i style="left:552px;width:1px;background:linear-gradient(#00ff7c 0px,#00ff7f 16.5px,#00ff57 17.5px,#00ff0f 18.5px,#57ff00 19.5px,#81ff00 21.5px,#9bff00 23.5px,#75ff00 26.5px,#57ff00 27.5px,#00ff10 28.5px,#00ff59 29.5px,#00ff81 30.5px,#00ff8b 96.5px,#00ff2e 100.5px,#00ff18 102.5px,#3dff00 103.5px,#3dff00 107.5px,#0bff00 108.5px,#00ff04 109.5px,#00ff7d 113.5px,#00ff92 116.5px,#00ff8d 132.5px,#00ff7e 137.5px,#00ff97 142.5px,#00ffb2 256.5px,#00ff9c 341.5px,#00ff8e 393.5px,#00ff95 401.5px,#00ff8a 423.5px,#00ff88 437.5px,#00ff6b 440.5px,#00ff6d 446.5px,#00ff8a 449.5px,#00ff82 454.5px,#00ff6b 457.5px,#00ff6d 465.5px,#00ff7d 467px)"></i><i style="left:553px;width:1px;background:linear-gradient(#00ff6b 0px,#00ff6d 16.5px,#00ff49 17.5px,#00ff08 18.5px,#58ff00 19.5px,#81ff00 21.5px,#9bff00 23.5px,#75ff00 26.5px,#58ff00 27.5px,#00ff09 28.5px,#00ff4b 29.5px,#00ff70 30.5px,#00ff7b 97.5px,#00ff1f 106.5px,#00ff09 107.5px,#3eff00 108.5px,#3eff00 112.5px,#01ff00 114.5px,#00ff6e 118.5px,#00ff81 121.5px,#00ff7e 132.5px,#00ff73 137.5px,#00ff86 145.5px,#00ffa0 253.5px,#00ff96 393.5px,#00ff9e 401.5px,#00ff92 412.5px,#00ff90 437.5px,#00ff73 440.5px,#00ff76 446.5px,#00ff92 449.5px,#00ff8a 454.5px,#00ff73 457.5px,#00ff7b 467px)"></i><i style="left:554px;width:1px;background:linear-gradient(#00ff73 0px,#00ff75 16.5px,#00ff50 17.5px,#00ff0b 18.5px,#58ff00 19.5px,#81ff00 21.5px,#9bff00 23.5px,#75ff00 26.5px,#57ff00 27.5px,#00ff0c 28.5px,#00ff52 29.5px,#00ff78 30.5px,#00ff83 97.5px,#00ff57 101.5px,#00ff54 108.5px,#00ff01 111.5px,#3dff00 113.5px,#3dff00 117.5px,#00ff01 119.5px,#00ff77 123.5px,#00ff8b 126.5px,#00ff7d 133.5px,#00ff7e 138.5px,#00ff8f 146.5px,#00ffa8 252.5px,#00ffab 393.5px,#00ffb2 401.5px,#00ffa7 423.5px,#00ffa4 437.5px,#00ff88 440.5px,#00ff8a 446.5px,#00ffa7 449.5px,#00ff9f 454.5px,#00ff88 457.5px,#00ff8b 467px)"></i><i style="left:555px;width:1px;background:linear-gradient(#00ff73 0px,#00ff76 16.5px,#00ff50 17.5px,#00ff0c 18.5px,#58ff00 19.5px,#81ff00 21.5px,#9bff00 23.5px,#75ff00 26.5px,#57ff00 27.5px,#00ff0c 28.5px,#00ff52 29.5px,#00ff78 30.5px,#00ff83 97.5px,#00ff57 101.5px,#00ff59 106.5px,#00ff88 110.5px,#00ff75 112.5px,#00ff01 116.5px,#3dff00 118.5px,#3dff00 122.5px,#00ff01 124.5px,#00ff78 128.5px,#00ff8b 131.5px,#00ff78 137.5px,#00ff8e 143.5px,#00ffa9 254.5px,#00ffad 393.5px,#00ffb4 401.5px,#00ffa9 423.5px,#00ffa6 437.5px,#00ff8a 440.5px,#00ff8c 446.5px,#00ffa9 449.5px,#00ffa1 454.5px,#00ff8a 457.5px,#00ff8c 467px)"></i><i style="left:556px;width:1px;background:linear-gradient(#00ff79 0px,#00ff7c 16.5px,#00ff55 17.5px,#00ff0e 18.5px,#57ff00 19.5px,#81ff00 21.5px,#9bff00 23.5px,#75ff00 26.5px,#57ff00 27.5px,#00ff0e 28.5px,#00ff56 29.5px,#00ff7e 30.5px,#00ff89 97.5px,#00ff59 101.5px,#00ff5c 106.5px,#00ff8b 109.5px,#00ff8b 116.5px,#00ff42 119.5px,#00ff02 121.5px,#3dff00 123.5px,#3dff00 127.5px,#00ff02 129.5px,#00ff61 132.5px,#00ff7a 135.5px,#00ff94 144.5px,#00ffae 252.5px,#00ffb2 393.5px,#00ffba 401.5px,#00ffae 413.5px,#00ffac 437.5px,#00ff8f 440.5px,#00ff92 446.5px,#00ffae 449.5px,#00ffa6 454.5px,#00ff8f 457.5px,#00ff92 467px)"></i><i style="left:557px;width:1px;background:linear-gradient(#00ff7b 0px,#00ff7d 16.5px,#00ff56 17.5px,#00ff0e 18.5px,#57ff00 19.5px,#81ff00 21.5px,#9bff00 23.5px,#75ff00 26.5px,#57ff00 27.5px,#00ff0f 28.5px,#00ff58 29.5px,#00ff80 30.5px,#00ff8b 97.5px,#00ff5c 100.5px,#00ff5c 106.5px,#00ff8d 109.5px,#00ff8d 121.5px,#00ff43 124.5px,#00ff03 126.5px,#3dff00 128.5px,#3dff00 132.5px,#00ff08 133.5px,#00ff93 140.5px,#00ffb0 248.5px,#00ffb4 393.5px,#00ffbb 401.5px,#00ffb0 423.5px,#00ffae 437.5px,#00ff91 440.5px,#00ff93 446.5px,#00ffb0 449.5px,#00ffa8 454.5px,#00ff91 457.5px,#00ff93 467px)"></i><i style="left:558px;width:1px;background:linear-gradient(#00ff78 0px,#00ff7a 16.5px,#00ff54 17.5px,#00ff0d 18.5px,#57ff00 19.5px,#81ff00 21.5px,#9bff00 23.5px,#75ff00 26.5px,#57ff00 27.5px,#00ff0e 28.5px,#00ff55 29.5px,#00ff7d 30.5px,#00ff88 97.5px,#00ff59 101.5px,#00ff5b 106.5px,#00ff8c 110.5px,#00ff8a 126.5px,#00ff41 129.5px,#00ff03 131.5px,#0dff00 132.5px,#3dff00 133.5px,#3dff00 137.5px,#00ff08 138.5px,#00ff22 140.5px,#00ff77 143.5px,#00ff93 154.5px,#00ffac 245.5px,#00ffb0 393.5px,#00ffb8 401.5px,#00ffac 413.5px,#00ffaa 437.5px,#00ff8d 440.5px,#00ff90 446.5px,#00ffac 449.5px,#00ffa4 454.5px,#00ff8d 457.5px,#00ff90 467px)"></i><i style="left:559px;width:1px;background:linear-gradient(#00ff70 0px,#00ff72 16.5px,#00ff4e 17.5px,#00ff0a 18.5px,#58ff00 19.5px,#81ff00 21.5px,#9bff00 23.5px,#75ff00 26.5px,#58ff00 27.5px,#00ff0b 28.5px,#00ff4f 29.5px,#00ff75 30.5px,#00ff80 97.5px,#00ff55 101.5px,#00ff64 107.5px,#00ff84 110.5px,#00ff82 131.5px,#00ff13 137.5px,#3dff00 138.5px,#3dff00 142.5px,#00ff08 150.5px,#00ff85 169.5px,#00ffa4 219.5px,#00ffa8 393.5px,#00ffaf 401.5px,#00ffa4 423.5px,#00ffa2 437.5px,#00ff85 440.5px,#00ff87 446.5px,#00ffa4 449.5px,#00ff9c 454.5px,#00ff85 457.5px,#00ff88 467px)"></i><i style="left:560px;width:1px;background:linear-gradient(#00ff76 0px,#00ff79 16.5px,#00ff52 17.5px,#00ff0d 18.5px,#57ff00 19.5px,#81ff00 21.5px,#9bff00 23.5px,#75ff00 26.5px,#57ff00 27.5px,#00ff0d 28.5px,#00ff54 29.5px,#00ff7b 30.5px,#00ff86 97.5px,#00ff58 101.5px,#00ff5a 106.5px,#00ff8a 110.5px,#00ff85 132.5px,#00ff6b 137.5px,#00ff20 140.5px,#00ff01 141.5px,#26ff00 142.5px,#40ff00 146.5px,#36ff00 164.5px,#00ff0a 172.5px,#00ff9a 192.5px,#00ffa9 258.5px,#00ffad 393.5px,#00ffb5 401.5px,#00ffa9 413.5px,#00ffa7 437.5px,#00ff8a 440.5px,#00ff8d 446.5px,#00ffa9 449.5px,#00ffa1 454.5px,#00ff8a 457.5px,#00ff8e 467px)"></i><i style="left:561px;width:1px;background:linear-gradient(#00ff7d 0px,#00ff80 16.5px,#00ff58 17.5px,#00ff0f 18.5px,#57ff00 19.5px,#81ff00 21.5px,#9bff00 23.5px,#75ff00 26.5px,#57ff00 27.5px,#00ff10 28.5px,#00ff5a 29.5px,#00ff83 30.5px,#00ff8d 97.5px,#00ff5d 100.5px,#00ff5d 106.5px,#00ff8e 109.5px,#00ff89 132.5px,#00ff7a 137.5px,#00ff8d 141.5px,#00ff5e 146.5px,#01ff00 159.5px,#3dff00 167.5px,#36ff00 186.5px,#00ff06 193.5px,#00ffa2 213.5px,#00ffb0 236.5px,#00ffb4 393.5px,#00ffbb 401.5px,#00ffb0 423.5px,#00ffae 437.5px,#00ff91 440.5px,#00ff93 446.5px,#00ffb0 449.5px,#00ffa8 454.5px,#00ff91 457.5px,#00ff95 467px)"></i><i style="left:562px;width:1px;background:linear-gradient(#00ff70 0px,#00ff73 16.5px,#00ff4e 17.5px,#00ff0a 18.5px,#58ff00 19.5px,#81ff00 21.5px,#9bff00 23.5px,#75ff00 26.5px,#58ff00 27.5px,#00ff0b 28.5px,#00ff4f 29.5px,#00ff75 30.5px,#00ff80 97.5px,#00ff55 101.5px,#00ff64 107.5px,#00ff83 110.5px,#00ff7e 132.5px,#00ff78 138.5px,#00ff85 150.5px,#00ff74 163.5px,#02ff00 181.5px,#3dff00 189.5px,#37ff00 208.5px,#00ff0b 216.5px,#00ff96 235.5px,#00ffa2 295.5px,#00ffa6 393.5px,#00ffad 401.5px,#00ffa2 423.5px,#00ff9f 437.5px,#00ff83 440.5px,#00ff85 446.5px,#00ffa2 449.5px,#00ff9a 454.5px,#00ff83 457.5px,#00ff87 467px)"></i><i style="left:563px;width:1px;background:linear-gradient(#00ff79 0px,#00ff7c 16.5px,#00ff55 17.5px,#00ff0e 18.5px,#57ff00 19.5px,#81ff00 21.5px,#9bff00 23.5px,#75ff00 26.5px,#57ff00 27.5px,#00ff0e 28.5px,#00ff56 29.5px,#00ff7e 30.5px,#00ff89 97.5px,#00ff59 101.5px,#00ff5b 106.5px,#00ff8c 110.5px,#00ff84 132.5px,#00ff77 137.5px,#00ff8a 143.5px,#00ff85 183.5px,#00ff1f 199.5px,#06ff00 204.5px,#3fff00 212.5px,#37ff00 230.5px,#00ff04 237.5px,#00ff9d 257.5px,#00ffaa 289.5px,#00ffae 393.5px,#00ffb5 401.5px,#00ffaa 423.5px,#00ffa7 437.5px,#00ff8b 440.5px,#00ff8d 446.5px,#00ffaa 449.5px,#00ffa2 454.5px,#00ff8b 457.5px,#00ff8f 467px)"></i><i style="left:564px;width:1px;background:linear-gradient(#00ff7b 0px,#00ff7e 16.5px,#00ff56 17.5px,#00ff0f 18.5px,#57ff00 19.5px,#81ff00 21.5px,#9bff00 23.5px,#75ff00 26.5px,#57ff00 27.5px,#00ff0f 28.5px,#00ff58 29.5px,#00ff80 30.5px,#00ff8b 97.5px,#00ff5c 100.5px,#00ff5c 106.5px,#00ff8b 109.5px,#00ff85 132.5px,#00ff77 137.5px,#00ff8b 143.5px,#00ff8e 205.5px,#00ff1b 222.5px,#0eff00 227.5px,#40ff00 235.5px,#38ff00 252.5px,#00ff0b 260.5px,#00ff9d 279.5px,#00ffab 302.5px,#00ffaf 393.5px,#00ffbb 400.5px,#00ffab 408.5px,#00ffa9 437.5px,#00ff8c 440.5px,#00ff8e 446.5px,#00ffab 449.5px,#00ffa3 454.5px,#00ff8c 457.5px,#00ff91 467px)"></i><i style="left:565px;width:1px;background:linear-gradient(#00ff81 0px,#00ff84 16.5px,#00ff5b 17.5px,#00ff11 18.5px,#56ff00 19.5px,#81ff00 21.5px,#9bff00 23.5px,#75ff00 26.5px,#56ff00 27.5px,#00ff11 28.5px,#00ff5d 29.5px,#00ff86 30.5px,#00ff91 97.5px,#00ff5e 100.5px,#00ff5e 106.5px,#00ff91 109.5px,#00ff88 132.5px,#00ff79 137.5px,#00ff8d 143.5px,#00ff9c 217.5px,#00ff93 228.5px,#00ff00 248.5px,#3eff00 256.5px,#39ff00 274.5px,#00ff0b 282.5px,#00ffa9 302.5px,#00ffb4 393.5px,#00ffbb 401.5px,#00ffb0 423.5px,#00ffae 437.5px,#00ff91 440.5px,#00ff93 446.5px,#00ffb0 449.5px,#00ffa8 454.5px,#00ff91 457.5px,#00ff96 467px)"></i><i style="left:566px;width:1px;background:linear-gradient(#00ff7f 0px,#00ff82 16.5px,#00ff5a 17.5px,#00ff10 18.5px,#56ff00 19.5px,#81ff00 21.5px,#9bff00 23.5px,#75ff00 26.5px,#56ff00 27.5px,#00ff11 28.5px,#00ff5b 29.5px,#00ff84 30.5px,#00ff8f 97.5px,#00ff5b 101.5px,#00ff5e 106.5px,#00ff8f 109.5px,#00ff87 132.5px,#00ff78 137.5px,#00ff8b 143.5px,#00ff94 218.5px,#00ff95 249.5px,#00ff25 265.5px,#0aff00 271.5px,#40ff00 279.5px,#34ff00 297.5px,#00ff0b 303.5px,#00ff9c 318.5px,#00ffac 330.5px,#00ffb1 393.5px,#00ffb9 401.5px,#00ffad 412.5px,#00ffab 437.5px,#00ff8e 440.5px,#00ff91 446.5px,#00ffad 449.5px,#00ffa5 454.5px,#00ff8e 457.5px,#00ff94 467px)"></i><i style="left:567px;width:1px;background:linear-gradient(#00ff80 0px,#00ff82 16.5px,#00ff5a 17.5px,#00ff10 18.5px,#56ff00 19.5px,#81ff00 21.5px,#9bff00 23.5px,#75ff00 26.5px,#56ff00 27.5px,#00ff11 28.5px,#00ff5c 29.5px,#00ff85 30.5px,#00ff8f 97.5px,#00ff5e 100.5px,#00ff5e 106.5px,#00ff92 110.5px,#00ff87 132.5px,#00ff78 137.5px,#00ff8a 143.5px,#00ff8d 217.5px,#00ff95 271.5px,#00ff1e 288.5px,#09ff00 293.5px,#40ff00 301.5px,#3aff00 314.5px,#00ff04 320.5px,#00ff9c 336.5px,#00ffad 353.5px,#00ffb1 393.5px,#00ffb8 401.5px,#00ffad 423.5px,#00ffab 437.5px,#00ff8e 440.5px,#00ff90 446.5px,#00ffad 449.5px,#00ffa5 454.5px,#00ff8e 457.5px,#00ff94 467px)"></i><i style="left:568px;width:1px;background:linear-gradient(#00ff92 0px,#00ff94 16.5px,#00ff68 17.5px,#00ff17 18.5px,#55ff00 19.5px,#81ff00 21.5px,#9bff00 23.5px,#75ff00 26.5px,#55ff00 27.5px,#00ff18 28.5px,#00ff6a 29.5px,#00ff97 30.5px,#00ffa0 97.5px,#00ff65 100.5px,#00ff65 106.5px,#00ffa0 109.5px,#00ff92 132.5px,#00ff7e 136.5px,#00ff96 142.5px,#00ff8a 210.5px,#00ffa1 293.5px,#00ff60 302.5px,#07ff00 312.5px,#3bff00 318.5px,#28ff00 332.5px,#00ff09 337.5px,#00ffae 354.5px,#00ffa8 356.5px,#00ff8b 357.5px,#00ff9e 359.5px,#00ffbe 363.5px,#00ffc2 393.5px,#00ffc9 401.5px,#00ffbe 423.5px,#00ffbc 437.5px,#00ff9f 440.5px,#00ffa1 446.5px,#00ffbe 449.5px,#00ffb6 454.5px,#00ff9f 457.5px,#00ffa6 467px)"></i><i style="left:569px;width:1px;background:linear-gradient(#00ff72 0px,#00ff75 16.5px,#00ff4f 17.5px,#00ff0b 18.5px,#58ff00 19.5px,#81ff00 21.5px,#9bff00 23.5px,#75ff00 26.5px,#58ff00 27.5px,#00ff0c 28.5px,#00ff51 29.5px,#00ff77 30.5px,#00ff82 97.5px,#00ff56 101.5px,#00ff58 106.5px,#00ff85 110.5px,#00ff7e 132.5px,#00ff76 138.5px,#00ff7f 151.5px,#00ff84 253.5px,#00ff88 312.5px,#03ff00 330.5px,#29ff00 336.5px,#06ff00 351.5px,#00ff0e 356.5px,#00ff12 359.5px,#00ff77 367.5px,#00ff9e 377.5px,#00ffa9 394.5px,#00ffa2 402.5px,#00ff9b 437.5px,#00ff7f 440.5px,#00ff81 446.5px,#00ff9e 449.5px,#00ff96 454.5px,#00ff7f 457.5px,#00ff86 467px)"></i><i style="left:570px;width:1px;background:linear-gradient(#00ff76 0px,#00ff78 16.5px,#00ff52 17.5px,#00ff0d 18.5px,#57ff00 19.5px,#81ff00 21.5px,#9bff00 23.5px,#75ff00 26.5px,#57ff00 27.5px,#00ff0d 28.5px,#00ff54 29.5px,#00ff7b 30.5px,#00ff86 97.5px,#00ff58 101.5px,#00ff5a 106.5px,#00ff88 110.5px,#00ff80 132.5px,#00ff78 138.5px,#00ff82 148.5px,#00ff7d 236.5px,#00ff89 330.5px,#00ff00 351.5px,#10ff00 356.5px,#17ff00 361.5px,#00ff0f 368.5px,#00ffa1 390.5px,#00ffac 401.5px,#00ffa1 423.5px,#00ff9e 437.5px,#00ff82 440.5px,#00ff84 446.5px,#00ffa1 449.5px,#00ff99 454.5px,#00ff82 457.5px,#00ff89 467px)"></i><i style="left:571px;width:1px;background:linear-gradient(#00ff7c 0px,#00ff7f 16.5px,#00ff57 17.5px,#00ff0f 18.5px,#57ff00 19.5px,#81ff00 21.5px,#9bff00 23.5px,#75ff00 26.5px,#57ff00 27.5px,#00ff10 28.5px,#00ff59 29.5px,#00ff82 30.5px,#00ff8c 97.5px,#00ff5c 100.5px,#00ff5c 106.5px,#00ff8c 109.5px,#00ff84 132.5px,#00ff76 137.5px,#00ff88 143.5px,#00ff78 226.5px,#00ff8d 348.5px,#00ff59 356.5px,#00ff1b 360.5px,#00ff07 367.5px,#00ff33 387.5px,#00ff43 388.5px,#00ff9a 389.5px,#00ffb6 398.5px,#00ffa7 413.5px,#00ffa4 437.5px,#00ff88 440.5px,#00ff8a 446.5px,#00ffa7 449.5px,#00ff9e 454.5px,#00ff88 457.5px,#00ff8f 467px)"></i><i style="left:572px;width:1px;background:linear-gradient(#00ff72 0px,#00ff75 16.5px,#00ff4f 17.5px,#00ff0b 18.5px,#58ff00 19.5px,#81ff00 21.5px,#9bff00 23.5px,#75ff00 26.5px,#58ff00 27.5px,#00ff0c 28.5px,#00ff51 29.5px,#00ff77 30.5px,#00ff82 97.5px,#00ff56 101.5px,#00ff58 106.5px,#00ff85 110.5px,#00ff7d 132.5px,#00ff76 138.5px,#00ff7e 154.5px,#00ff77 259.5px,#00ff89 358.5px,#00ff41 366.5px,#00ff4f 372.5px,#00ff58 377.5px,#00ff30 387.5px,#00ff3e 388.5px,#00ff90 389.5px,#00ffab 398.5px,#00ff9c 413.5px,#00ff99 437.5px,#00ff7d 440.5px,#00ff7f 446.5px,#00ff9c 449.5px,#00ff94 454.5px,#00ff7d 457.5px,#00ff84 467px)"></i><i style="left:573px;width:1px;background:linear-gradient(#00ff77 0px,#00ff7a 16.5px,#00ff53 17.5px,#00ff0d 18.5px,#57ff00 19.5px,#81ff00 21.5px,#9bff00 23.5px,#75ff00 26.5px,#57ff00 27.5px,#00ff0e 28.5px,#00ff55 29.5px,#00ff7c 30.5px,#00ff87 97.5px,#00ff58 101.5px,#00ff5a 106.5px,#00ff89 110.5px,#00ff81 132.5px,#00ff74 137.5px,#00ff84 145.5px,#00ff73 250.5px,#00ff88 362.5px,#00ff46 369.5px,#00ff56 374.5px,#00ff9c 380.5px,#00ff94 388.5px,#00ffb0 398.5px,#00ffa0 411.5px,#00ff9e 437.5px,#00ff81 440.5px,#00ff84 446.5px,#00ffa0 449.5px,#00ff98 454.5px,#00ff81 457.5px,#00ff89 467px)"></i><i style="left:574px;width:1px;background:linear-gradient(#00ff77 0px,#00ff7a 16.5px,#00ff54 17.5px,#00ff0d 18.5px,#57ff00 19.5px,#81ff00 21.5px,#9bff00 23.5px,#75ff00 26.5px,#57ff00 27.5px,#00ff0e 28.5px,#00ff55 29.5px,#00ff7d 30.5px,#00ff87 97.5px,#00ff58 101.5px,#00ff5b 106.5px,#00ff8a 110.5px,#00ff81 132.5px,#00ff74 137.5px,#00ff84 143.5px,#00ff71 258.5px,#00ff8b 365.5px,#00ff45 373.5px,#00ff59 378.5px,#00ff9c 384.5px,#00ffab 394.5px,#00ffa5 402.5px,#00ff9e 437.5px,#00ff82 440.5px,#00ff84 446.5px,#00ffa1 449.5px,#00ff99 454.5px,#00ff82 457.5px,#00ff8a 467px)"></i><i style="left:575px;width:1px;background:linear-gradient(#00ff8f 0px,#00ff92 16.5px,#00ff66 17.5px,#00ff16 18.5px,#55ff00 19.5px,#81ff00 21.5px,#9bff00 23.5px,#75ff00 26.5px,#55ff00 27.5px,#00ff17 28.5px,#00ff68 29.5px,#00ff94 30.5px,#00ff9e 97.5px,#00ff64 100.5px,#00ff64 106.5px,#00ff9d 109.5px,#00ff91 132.5px,#00ff7d 136.5px,#00ff94 143.5px,#00ff72 232.5px,#00ff8c 356.5px,#00ff95 369.5px,#00ff4a 376.5px,#00ff59 381.5px,#00ffac 387.5px,#00ffc8 400.5px,#00ffb8 408.5px,#00ffb6 437.5px,#00ff99 440.5px,#00ff9b 446.5px,#00ffb8 449.5px,#00ffb0 454.5px,#00ff99 457.5px,#00ffa1 467px)"></i><i style="left:576px;width:1px;background:linear-gradient(#00ff7c 0px,#00ff7f 16.5px,#00ff57 17.5px,#00ff0f 18.5px,#57ff00 19.5px,#81ff00 21.5px,#9bff00 23.5px,#75ff00 26.5px,#57ff00 27.5px,#00ff10 28.5px,#00ff59 29.5px,#00ff82 30.5px,#00ff8c 97.5px,#00ff5c 100.5px,#00ff5d 106.5px,#00ff8f 110.5px,#00ff84 132.5px,#00ff76 137.5px,#00ff88 143.5px,#00ff6f 258.5px,#00ff84 362.5px,#00ff85 373.5px,#00ff45 380.5px,#00ff56 385.5px,#00ff9c 391.5px,#00ffb4 400.5px,#00ffa6 410.5px,#00ffa3 437.5px,#00ff87 440.5px,#00ff89 446.5px,#00ffa6 449.5px,#00ff9e 454.5px,#00ff87 457.5px,#00ff8f 467px)"></i><i style="left:577px;width:1px;background:linear-gradient(#00ff76 0px,#00ff79 16.5px,#00ff52 17.5px,#00ff0d 18.5px,#57ff00 19.5px,#81ff00 21.5px,#9bff00 23.5px,#75ff00 26.5px,#57ff00 27.5px,#00ff0d 28.5px,#00ff54 29.5px,#00ff7b 30.5px,#00ff86 97.5px,#00ff58 101.5px,#00ff5a 106.5px,#00ff89 110.5px,#00ff80 132.5px,#00ff78 138.5px,#00ff82 148.5px,#00ff6e 281.5px,#00ff80 367.5px,#00ff7d 377.5px,#00ff43 384.5px,#00ff56 389.5px,#00ffa5 395.5px,#00ff9d 437.5px,#00ff80 440.5px,#00ff83 446.5px,#00ff9f 449.5px,#00ff97 454.5px,#00ff80 457.5px,#00ff88 467px)"></i><i style="left:578px;width:1px;background:linear-gradient(#00ff6d 0px,#00ff70 16.5px,#00ff4c 17.5px,#00ff09 18.5px,#58ff00 19.5px,#81ff00 21.5px,#9bff00 23.5px,#75ff00 26.5px,#58ff00 27.5px,#00ff0a 28.5px,#00ff4d 29.5px,#00ff73 30.5px,#00ff7d 97.5px,#00ff54 101.5px,#00ff62 107.5px,#00ff80 110.5px,#00ff7a 132.5px,#00ff74 138.5px,#00ff75 179.5px,#00ff77 366.5px,#00ff7b 380.5px,#00ff41 387.5px,#00ff4c 392.5px,#00ff93 397.5px,#00ff9e 401.5px,#00ff94 437.5px,#00ff77 440.5px,#00ff7a 446.5px,#00ff96 449.5px,#00ff8e 454.5px,#00ff77 457.5px,#00ff80 467px)"></i><i style="left:579px;width:1px;background:linear-gradient(#00ff6b 0px,#00ff6e 16.5px,#00ff4a 17.5px,#00ff09 18.5px,#58ff00 19.5px,#81ff00 21.5px,#9bff00 23.5px,#75ff00 26.5px,#58ff00 27.5px,#00ff09 28.5px,#00ff4c 29.5px,#00ff71 30.5px,#00ff7c 97.5px,#00ff54 101.5px,#00ff61 107.5px,#00ff7f 110.5px,#00ff73 133.5px,#00ff78 139.5px,#00ff73 366.5px,#00ff77 384.5px,#00ff40 391.5px,#00ff68 397.5px,#00ff93 401.5px,#00ff92 437.5px,#00ff76 440.5px,#00ff78 446.5px,#00ff95 449.5px,#00ff8d 454.5px,#00ff76 457.5px,#00ff7e 467px)"></i><i style="left:580px;width:1px;background:linear-gradient(#00ff6f 0px,#00ff71 16.5px,#00ff4d 17.5px,#00ff0a 18.5px,#58ff00 19.5px,#81ff00 21.5px,#9bff00 23.5px,#75ff00 26.5px,#58ff00 27.5px,#00ff0b 28.5px,#00ff4f 29.5px,#00ff74 30.5px,#00ff7f 97.5px,#00ff55 101.5px,#00ff63 107.5px,#00ff82 110.5px,#00ff7b 132.5px,#00ff74 138.5px,#00ff7b 159.5px,#00ff6c 339.5px,#00ff74 388.5px,#00ff4a 393.5px,#00ff62 400.5px,#00ff96 407.5px,#00ff96 437.5px,#00ff79 440.5px,#00ff7b 446.5px,#00ff98 449.5px,#00ff90 454.5px,#00ff79 457.5px,#00ff81 467px)"></i><i style="left:581px;width:1px;background:linear-gradient(#00ff84 0px,#00ff87 16.5px,#00ff5d 17.5px,#00ff12 18.5px,#56ff00 19.5px,#81ff00 21.5px,#9bff00 23.5px,#75ff00 26.5px,#56ff00 27.5px,#00ff13 28.5px,#00ff5f 29.5px,#00ff89 30.5px,#00ff93 97.5px,#00ff60 100.5px,#00ff60 106.5px,#00ff93 109.5px,#00ff89 132.5px,#00ff79 137.5px,#00ff8d 142.5px,#00ff6e 243.5px,#00ff7a 380.5px,#00ff78 392.5px,#00ff53 399.5px,#00ff53 403.5px,#00ffa7 409.5px,#00ffab 437.5px,#00ff8e 440.5px,#00ff91 446.5px,#00ffad 449.5px,#00ffa5 454.5px,#00ff8e 457.5px,#00ff96 467px)"></i><i style="left:582px;width:1px;background:linear-gradient(#00ff8d 0px,#00ff8f 16.5px,#00ff64 17.5px,#00ff15 18.5px,#55ff00 19.5px,#81ff00 21.5px,#9bff00 23.5px,#75ff00 26.5px,#55ff00 27.5px,#00ff16 28.5px,#00ff66 29.5px,#00ff92 30.5px,#00ff9c 97.5px,#00ff63 100.5px,#00ff63 106.5px,#00ff9b 109.5px,#00ff8f 132.5px,#00ff7d 137.5px,#00ff92 142.5px,#00ff6e 236.5px,#00ff7a 385.5px,#00ff85 396.5px,#00ff47 403.5px,#00ff5c 407.5px,#00ffb3 413.5px,#00ffb4 437.5px,#00ff97 440.5px,#00ff99 446.5px,#00ffb6 449.5px,#00ffae 454.5px,#00ff97 457.5px,#00ff9f 467px)"></i><i style="left:583px;width:1px;background:linear-gradient(#00ff76 0px,#00ff78 16.5px,#00ff52 17.5px,#00ff0d 18.5px,#57ff00 19.5px,#81ff00 21.5px,#9bff00 23.5px,#75ff00 26.5px,#57ff00 27.5px,#00ff0d 28.5px,#00ff54 29.5px,#00ff7b 30.5px,#00ff86 97.5px,#00ff58 101.5px,#00ff5a 106.5px,#00ff88 110.5px,#00ff80 132.5px,#00ff73 137.5px,#00ff83 144.5px,#00ff6a 271.5px,#00ff75 392.5px,#00ff87 398.5px,#00ff5e 402.5px,#00ff43 406.5px,#00ff59 411.5px,#00ff9d 415.5px,#00ff9d 437.5px,#00ff80 440.5px,#00ff82 446.5px,#00ff9f 449.5px,#00ff97 454.5px,#00ff80 457.5px,#00ff88 467px)"></i><i style="left:584px;width:1px;background:linear-gradient(#00ff7a 0px,#00ff7d 16.5px,#00ff56 17.5px,#00ff0e 18.5px,#57ff00 19.5px,#81ff00 21.5px,#9bff00 23.5px,#75ff00 26.5px,#57ff00 27.5px,#00ff0f 28.5px,#00ff57 29.5px,#00ff80 30.5px,#00ff8a 97.5px,#00ff59 101.5px,#00ff5c 106.5px,#00ff8c 110.5px,#00ff83 132.5px,#00ff75 137.5px,#00ff86 143.5px,#00ff6a 258.5px,#00ff77 393.5px,#00ff89 401.5px,#00ff45 409.5px,#00ff4d 413.5px,#00ff98 416.5px,#00ffa4 436.5px,#00ff85 440.5px,#00ff87 446.5px,#00ffa4 449.5px,#00ff9b 454.5px,#00ff85 457.5px,#00ff8d 467px)"></i><i style="left:585px;width:1px;background:linear-gradient(#00ff73 0px,#00ff75 16.5px,#00ff50 17.5px,#00ff0b 18.5px,#58ff00 19.5px,#81ff00 21.5px,#9bff00 23.5px,#75ff00 26.5px,#58ff00 27.5px,#00ff0c 28.5px,#00ff51 29.5px,#00ff78 30.5px,#00ff83 97.5px,#00ff56 101.5px,#00ff65 107.5px,#00ff85 110.5px,#00ff7d 132.5px,#00ff76 138.5px,#00ff7e 153.5px,#00ff68 282.5px,#00ff72 393.5px,#00ff82 401.5px,#00ff6b 408.5px,#00ff44 413.5px,#00ff50 415.5px,#00ff96 418.5px,#00ff99 437.5px,#00ff7d 440.5px,#00ff7f 446.5px,#00ff9c 449.5px,#00ff94 454.5px,#00ff7d 457.5px,#00ff85 467px)"></i><i style="left:586px;width:1px;background:linear-gradient(#00ff7c 0px,#00ff7e 16.5px,#00ff57 17.5px,#00ff0f 18.5px,#57ff00 19.5px,#81ff00 21.5px,#9bff00 23.5px,#75ff00 26.5px,#57ff00 27.5px,#00ff0f 28.5px,#00ff58 29.5px,#00ff81 30.5px,#00ff8b 97.5px,#00ff5c 100.5px,#00ff5c 106.5px,#00ff8e 110.5px,#00ff83 132.5px,#00ff7a 138.5px,#00ff84 148.5px,#00ff68 258.5px,#00ff71 393.5px,#00ff7a 402.5px,#00ff80 410.5px,#00ff47 414.5px,#00ff49 416.5px,#00ffa1 420.5px,#00ffa2 437.5px,#00ff86 440.5px,#00ff88 446.5px,#00ffa5 449.5px,#00ff9d 454.5px,#00ff86 457.5px,#00ff8e 467px)"></i><i style="left:587px;width:1px;background:linear-gradient(#00ff79 0px,#00ff7b 16.5px,#00ff54 17.5px,#00ff0e 18.5px,#57ff00 19.5px,#81ff00 21.5px,#9bff00 23.5px,#75ff00 26.5px,#57ff00 27.5px,#00ff0e 28.5px,#00ff56 29.5px,#00ff7e 30.5px,#00ff88 97.5px,#00ff59 101.5px,#00ff5b 106.5px,#00ff8b 110.5px,#00ff81 132.5px,#00ff74 137.5px,#00ff84 144.5px,#00ff66 260.5px,#00ff6f 393.5px,#00ff7b 401.5px,#00ff84 410.5px,#00ff78 413.5px,#00ff45 416.5px,#00ff4c 418.5px,#00ff95 421.5px,#00ffa2 436.5px,#00ff83 440.5px,#00ff85 446.5px,#00ffa2 449.5px,#00ff9a 454.5px,#00ff83 457.5px,#00ff8b 467px)"></i><i style="left:588px;width:1px;background:linear-gradient(#00ff87 0px,#00ff8a 16.5px,#00ff60 17.5px,#00ff13 18.5px,#56ff00 19.5px,#81ff00 21.5px,#9bff00 23.5px,#75ff00 26.5px,#56ff00 27.5px,#00ff14 28.5px,#00ff61 29.5px,#00ff8c 30.5px,#00ff96 97.5px,#00ff61 100.5px,#00ff61 106.5px,#00ff96 109.5px,#00ff8b 132.5px,#00ff7a 137.5px,#00ff8e 142.5px,#00ff67 237.5px,#00ff70 393.5px,#00ff79 401.5px,#00ff80 409.5px,#00ff89 414.5px,#00ff4d 417.5px,#00ff56 420.5px,#00ffa7 423.5px,#00ffae 437.5px,#00ff91 440.5px,#00ff93 446.5px,#00ffb0 449.5px,#00ffa8 454.5px,#00ff91 457.5px,#00ff99 467px)"></i><i style="left:589px;width:1px;background:linear-gradient(#00ff77 0px,#00ff79 16.5px,#00ff53 17.5px,#00ff0d 18.5px,#57ff00 19.5px,#81ff00 21.5px,#9bff00 23.5px,#75ff00 26.5px,#57ff00 27.5px,#00ff0e 28.5px,#00ff55 29.5px,#00ff7c 30.5px,#00ff87 97.5px,#00ff58 101.5px,#00ff5a 106.5px,#00ff89 110.5px,#00ff80 132.5px,#00ff73 137.5px,#00ff82 144.5px,#00ff62 260.5px,#00ff6d 393.5px,#00ff76 401.5px,#00ff71 407.5px,#00ff84 415.5px,#00ff45 419.5px,#00ff46 421.5px,#00ff9b 425.5px,#00ff9e 437.5px,#00ff81 440.5px,#00ff83 446.5px,#00ffa0 449.5px,#00ff98 454.5px,#00ff81 457.5px,#00ff89 467px)"></i><i style="left:590px;width:1px;background:linear-gradient(#00ff7e 0px,#00ff81 16.5px,#00ff59 17.5px,#00ff10 18.5px,#57ff00 19.5px,#81ff00 21.5px,#9bff00 23.5px,#75ff00 26.5px,#56ff00 27.5px,#00ff10 28.5px,#00ff5b 29.5px,#00ff83 30.5px,#00ff8e 97.5px,#00ff5d 100.5px,#00ff5d 106.5px,#00ff8e 109.5px,#00ff84 132.5px,#00ff76 137.5px,#00ff86 143.5px,#00ff61 248.5px,#00ff6d 393.5px,#00ff75 401.5px,#00ff71 409.5px,#00ff84 417.5px,#00ff45 421.5px,#00ff4c 423.5px,#00ff98 426.5px,#00ffa5 437.5px,#00ff88 440.5px,#00ff8b 446.5px,#00ffa7 449.5px,#00ff9f 454.5px,#00ff88 457.5px,#00ff90 467px)"></i><i style="left:591px;width:1px;background:linear-gradient(#00ff44 0px,#00ff2c 2.5px,#00ff2c 16.5px,#00ff16 17.5px,#1cff00 18.5px,#5eff00 19.5px,#9bff00 23.5px,#5eff00 27.5px,#1bff00 28.5px,#00ff16 29.5px,#00ff2c 30.5px,#00ff3c 131.5px,#00ff53 177.5px,#00ff61 393.5px,#00ff69 401.5px,#00ff47 419.5px,#00ff2b 424.5px,#00ff2e 437.5px,#00ff11 440.5px,#00ff13 446.5px,#00ff30 449.5px,#00ff28 454.5px,#00ff11 457.5px,#00ff16 465.5px,#00ff3d 467px)"></i><i style="left:592px;width:1px;background:linear-gradient(#00ff3d 0px,#00ff23 2.5px,#00ff23 16.5px,#00ff0f 17.5px,#22ff00 18.5px,#5fff00 19.5px,#9bff00 23.5px,#5fff00 27.5px,#22ff00 28.5px,#00ff0f 29.5px,#00ff23 31.5px,#00ff2c 99.5px,#00ff38 132.5px,#00ff3c 139.5px,#00ff53 227.5px,#00ff5f 393.5px,#00ff67 401.5px,#00ff3f 421.5px,#00ff28 426.5px,#00ff20 437.5px,#00ff04 440.5px,#00ff06 446.5px,#00ff23 449.5px,#00ff1b 454.5px,#00ff04 457.5px,#00ff09 465.5px,#00ff33 467px)"></i><i style="left:593px;width:1px;background:linear-gradient(#00ff75 0px,#00ff75 16.5px,#00ff4f 17.5px,#00ff0b 18.5px,#58ff00 19.5px,#81ff00 21.5px,#9bff00 23.5px,#75ff00 26.5px,#58ff00 27.5px,#00ff0c 28.5px,#00ff51 29.5px,#00ff77 30.5px,#00ff80 97.5px,#00ff55 101.5px,#00ff57 106.5px,#00ff83 110.5px,#00ff73 133.5px,#00ff6a 178.5px,#00ff57 313.5px,#00ff68 393.5px,#00ff71 401.5px,#00ff67 411.5px,#00ff78 422.5px,#00ff40 426.5px,#00ff46 428.5px,#00ff91 432.5px,#00ff95 437.5px,#00ff78 440.5px,#00ff7b 446.5px,#00ff97 449.5px,#00ff8f 454.5px,#00ff78 457.5px,#00ff79 465.5px,#00ff85 467px)"></i><i style="left:594px;width:1px;background:linear-gradient(#00ff78 0px,#00ff7b 16.5px,#00ff54 17.5px,#00ff0d 18.5px,#57ff00 19.5px,#81ff00 21.5px,#9bff00 23.5px,#75ff00 26.5px,#57ff00 27.5px,#00ff0e 28.5px,#00ff56 29.5px,#00ff7d 30.5px,#00ff88 97.5px,#00ff58 101.5px,#00ff5b 106.5px,#00ff8a 110.5px,#00ff7e 132.5px,#00ff75 138.5px,#00ff7a 152.5px,#00ff54 252.5px,#00ff67 393.5px,#00ff70 401.5px,#00ff68 414.5px,#00ff78 424.5px,#00ff42 428.5px,#00ff4e 430.5px,#00ff94 433.5px,#00ff9d 437.5px,#00ff82 440.5px,#00ff84 446.5px,#00ffa1 449.5px,#00ff99 454.5px,#00ff82 457.5px,#00ff8a 467px)"></i><i style="left:595px;width:1px;background:linear-gradient(#00ff7b 0px,#00ff7d 16.5px,#00ff56 17.5px,#00ff0e 18.5px,#57ff00 19.5px,#81ff00 21.5px,#9bff00 23.5px,#75ff00 26.5px,#57ff00 27.5px,#00ff0f 28.5px,#00ff58 29.5px,#00ff80 30.5px,#00ff8a 97.5px,#00ff5a 101.5px,#00ff5c 106.5px,#00ff8c 110.5px,#00ff7f 132.5px,#00ff76 138.5px,#00ff76 158.5px,#00ff51 251.5px,#00ff66 393.5px,#00ff6f 401.5px,#00ff67 415.5px,#00ff74 426.5px,#00ff43 429.5px,#00ff55 432.5px,#00ff99 435.5px,#00ff92 438.5px,#00ff85 445.5px,#00ffa4 449.5px,#00ff9c 454.5px,#00ff85 457.5px,#00ff8d 467px)"></i><i style="left:596px;width:1px;background:linear-gradient(#00ff74 0px,#00ff77 16.5px,#00ff51 17.5px,#00ff0c 18.5px,#57ff00 19.5px,#81ff00 21.5px,#9bff00 23.5px,#75ff00 26.5px,#57ff00 27.5px,#00ff0d 28.5px,#00ff53 29.5px,#00ff7a 30.5px,#00ff84 97.5px,#00ff57 101.5px,#00ff59 106.5px,#00ff87 110.5px,#00ff74 133.5px,#00ff66 176.5px,#00ff4b 292.5px,#00ff64 393.5px,#00ff6d 401.5px,#00ff65 417.5px,#00ff76 427.5px,#00ff40 431.5px,#00ff47 433.5px,#00ff8a 436.5px,#00ff88 438.5px,#00ff81 446.5px,#00ff9d 449.5px,#00ff95 454.5px,#00ff7e 457.5px,#00ff87 467px)"></i><i style="left:597px;width:1px;background:linear-gradient(#00ff76 0px,#00ff79 16.5px,#00ff53 17.5px,#00ff0d 18.5px,#57ff00 19.5px,#81ff00 21.5px,#9bff00 23.5px,#75ff00 26.5px,#57ff00 27.5px,#00ff0d 28.5px,#00ff54 29.5px,#00ff7c 30.5px,#00ff86 97.5px,#00ff58 101.5px,#00ff5a 106.5px,#00ff88 110.5px,#00ff7b 132.5px,#00ff72 138.5px,#00ff6b 166.5px,#00ff48 266.5px,#00ff62 393.5px,#00ff6c 401.5px,#00ff64 417.5px,#00ff73 429.5px,#00ff40 433.5px,#00ff4c 435.5px,#00ff83 438.5px,#00ff83 446.5px,#00ffa0 449.5px,#00ff98 454.5px,#00ff81 457.5px,#00ff89 467px)"></i><i style="left:598px;width:1px;background:linear-gradient(#00ff7f 0px,#00ff82 16.5px,#00ff59 17.5px,#00ff10 18.5px,#57ff00 19.5px,#81ff00 21.5px,#9bff00 23.5px,#75ff00 26.5px,#56ff00 27.5px,#00ff11 28.5px,#00ff5b 29.5px,#00ff84 30.5px,#00ff8f 97.5px,#00ff5b 101.5px,#00ff5d 106.5px,#00ff8e 109.5px,#00ff7f 132.5px,#00ff75 138.5px,#00ff75 154.5px,#00ff48 244.5px,#00ff56 372.5px,#00ff61 393.5px,#00ff6b 401.5px,#00ff63 417.5px,#00ff70 431.5px,#00ff42 434.5px,#00ff53 437.5px,#00ff88 441.5px,#00ff8c 446.5px,#00ffa8 449.5px,#00ffa0 454.5px,#00ff89 457.5px,#00ff91 467px)"></i><i style="left:599px;width:1px;background:linear-gradient(#00ff7f 0px,#00ff82 16.5px,#00ff5a 17.5px,#00ff10 18.5px,#56ff00 19.5px,#81ff00 21.5px,#9bff00 23.5px,#75ff00 26.5px,#56ff00 27.5px,#00ff11 28.5px,#00ff5b 29.5px,#00ff85 30.5px,#00ff8f 97.5px,#00ff5b 101.5px,#00ff5e 106.5px,#00ff8f 109.5px,#00ff7e 132.5px,#00ff75 138.5px,#00ff6d 162.5px,#00ff45 246.5px,#00ff52 368.5px,#00ff5f 393.5px,#00ff69 401.5px,#00ff62 415.5px,#00ff75 432.5px,#00ff40 436.5px,#00ff44 439.5px,#00ff7d 441.5px,#00ff99 447.5px,#00ffa9 452.5px,#00ff8a 457.5px,#00ff92 467px)"></i><i style="left:600px;width:1px;background:linear-gradient(#00ff6c 0px,#00ff6f 16.5px,#00ff4b 17.5px,#00ff09 18.5px,#58ff00 19.5px,#81ff00 21.5px,#9bff00 23.5px,#75ff00 26.5px,#58ff00 27.5px,#00ff0a 28.5px,#00ff4c 29.5px,#00ff71 30.5px,#00ff7c 97.5px,#00ff54 101.5px,#00ff62 107.5px,#00ff7f 110.5px,#00ff6f 139.5px,#00ff3f 260.5px,#00ff51 377.5px,#00ff63 394.5px,#00ff5e 402.5px,#00ff6b 434.5px,#00ff24 439.5px,#00ff73 443.5px,#00ff86 447.5px,#00ff95 452.5px,#00ff76 457.5px,#00ff7e 467px)"></i><i style="left:601px;width:1px;background:linear-gradient(#00ff7b 0px,#00ff7e 16.5px,#00ff57 17.5px,#00ff0f 18.5px,#57ff00 19.5px,#81ff00 21.5px,#9bff00 23.5px,#75ff00 26.5px,#57ff00 27.5px,#00ff0f 28.5px,#00ff58 29.5px,#00ff81 30.5px,#00ff8b 97.5px,#00ff5c 100.5px,#00ff5c 106.5px,#00ff8b 109.5px,#00ff7a 132.5px,#00ff71 138.5px,#00ff3e 253.5px,#00ff48 358.5px,#00ff5a 393.5px,#00ff68 400.5px,#00ff5c 409.5px,#00ff6b 436.5px,#00ff28 439.5px,#00ff2b 441.5px,#00ff86 445.5px,#00ffa5 450.5px,#00ff9d 454.5px,#00ff86 457.5px,#00ff8e 467px)"></i><i style="left:602px;width:1px;background:linear-gradient(#00ff72 0px,#00ff75 16.5px,#00ff50 17.5px,#00ff0b 18.5px,#58ff00 19.5px,#81ff00 21.5px,#9bff00 23.5px,#75ff00 26.5px,#58ff00 27.5px,#00ff0c 28.5px,#00ff51 29.5px,#00ff78 30.5px,#00ff82 97.5px,#00ff56 101.5px,#00ff58 106.5px,#00ff84 110.5px,#00ff6f 133.5px,#00ff3b 257.5px,#00ff42 354.5px,#00ff57 393.5px,#00ff66 400.5px,#00ff59 407.5px,#00ff6c 437.5px,#00ff26 441.5px,#00ff2e 443.5px,#00ff7c 445.5px,#00ff9c 450.5px,#00ff94 454.5px,#00ff7d 457.5px,#00ff85 467px)"></i><i style="left:603px;width:1px;background:linear-gradient(#00ff77 0px,#00ff7a 16.5px,#00ff53 17.5px,#00ff0d 18.5px,#57ff00 19.5px,#81ff00 21.5px,#9bff00 23.5px,#75ff00 26.5px,#57ff00 27.5px,#00ff0e 28.5px,#00ff55 29.5px,#00ff7d 30.5px,#00ff87 97.5px,#00ff58 101.5px,#00ff5a 106.5px,#00ff89 110.5px,#00ff71 133.5px,#00ff3a 249.5px,#00ff3b 345.5px,#00ff55 393.5px,#00ff64 400.5px,#00ff58 409.5px,#00ff67 438.5px,#00ff4c 440.5px,#00ff30 441.5px,#00ff30 443.5px,#00ff81 445.5px,#00ffa0 449.5px,#00ff98 454.5px,#00ff82 457.5px,#00ff8a 467px)"></i><i style="left:604px;width:1px;background:linear-gradient(#00ff7f 0px,#00ff82 16.5px,#00ff5a 17.5px,#00ff10 18.5px,#56ff00 19.5px,#81ff00 21.5px,#9bff00 23.5px,#75ff00 26.5px,#56ff00 27.5px,#00ff11 28.5px,#00ff5b 29.5px,#00ff84 30.5px,#00ff8f 97.5px,#00ff5b 101.5px,#00ff5d 106.5px,#00ff8e 109.5px,#00ff74 133.5px,#00ff3a 240.5px,#00ff35 340.5px,#00ff54 393.5px,#00ff5f 401.5px,#00ff59 413.5px,#00ff64 438.5px,#00ff32 440.5px,#00ff2f 442.5px,#00ff7b 444.5px,#00ffa8 449.5px,#00ffa0 454.5px,#00ff89 457.5px,#00ff91 467px)"></i><i style="left:605px;width:1px;background:linear-gradient(#00ff81 0px,#00ff83 16.5px,#00ff5b 17.5px,#00ff11 18.5px,#56ff00 19.5px,#81ff00 21.5px,#9bff00 23.5px,#75ff00 26.5px,#56ff00 27.5px,#00ff11 28.5px,#00ff5c 29.5px,#00ff86 30.5px,#00ff90 97.5px,#00ff5e 100.5px,#00ff5e 106.5px,#00ff8f 109.5px,#00ff7b 132.5px,#00ff71 138.5px,#00ff38 239.5px,#00ff30 338.5px,#00ff51 393.5px,#00ff5d 401.5px,#00ff57 413.5px,#00ff67 437.5px,#00ff32 439.5px,#00ff2c 441.5px,#00ff78 443.5px,#00ff8b 445.5px,#00ffaa 449.5px,#00ffa2 454.5px,#00ff8b 457.5px,#00ff93 467px)"></i><i style="left:606px;width:1px;background:linear-gradient(#00ff7a 0px,#00ff7c 16.5px,#00ff55 17.5px,#00ff0e 18.5px,#57ff00 19.5px,#81ff00 21.5px,#9bff00 23.5px,#75ff00 26.5px,#57ff00 27.5px,#00ff0f 28.5px,#00ff57 29.5px,#00ff7f 30.5px,#00ff89 97.5px,#00ff59 101.5px,#00ff5b 106.5px,#00ff8b 110.5px,#00ff70 133.5px,#00ff35 244.5px,#00ff2a 335.5px,#00ff4f 393.5px,#00ff5a 401.5px,#00ff5a 425.5px,#00ff65 436.5px,#00ff24 439.5px,#00ff26 440.5px,#00ff84 443.5px,#00ff93 447.5px,#00ffa3 452.5px,#00ff84 457.5px,#00ff8c 467px)"></i><i style="left:607px;width:1px;background:linear-gradient(#00ff78 0px,#00ff7b 16.5px,#00ff54 17.5px,#00ff0e 18.5px,#57ff00 19.5px,#81ff00 21.5px,#9bff00 23.5px,#75ff00 26.5px,#57ff00 27.5px,#00ff0e 28.5px,#00ff56 29.5px,#00ff7e 30.5px,#00ff88 97.5px,#00ff59 101.5px,#00ff5b 106.5px,#00ff8a 110.5px,#00ff70 133.5px,#00ff33 242.5px,#00ff21 311.5px,#00ff4c 393.5px,#00ff58 401.5px,#00ff58 423.5px,#00ff66 435.5px,#00ff25 439.5px,#00ff81 442.5px,#00ff92 447.5px,#00ffa2 452.5px,#00ff83 457.5px,#00ff8b 467px)"></i><i style="left:608px;width:1px;background:linear-gradient(#00ff75 0px,#00ff78 16.5px,#00ff52 17.5px,#00ff0c 18.5px,#57ff00 19.5px,#81ff00 21.5px,#9bff00 23.5px,#75ff00 26.5px,#57ff00 27.5px,#00ff0d 28.5px,#00ff54 29.5px,#00ff7b 30.5px,#00ff85 97.5px,#00ff57 101.5px,#00ff59 106.5px,#00ff87 110.5px,#00ff6e 133.5px,#00ff30 246.5px,#00ff1f 309.5px,#00ff45 392.5px,#00ff5a 400.5px,#00ff4f 408.5px,#00ff5f 435.5px,#00ff2e 438.5px,#00ff35 439.5px,#00ff7b 441.5px,#00ff8f 447.5px,#00ff9f 452.5px,#00ff80 457.5px,#00ff88 467px)"></i><i style="left:609px;width:1px;background:linear-gradient(#00ff85 0px,#00ff88 16.5px,#00ff5e 17.5px,#00ff12 18.5px,#56ff00 19.5px,#81ff00 21.5px,#9bff00 23.5px,#75ff00 26.5px,#56ff00 27.5px,#00ff13 28.5px,#00ff60 29.5px,#00ff8a 30.5px,#00ff94 97.5px,#00ff60 100.5px,#00ff60 106.5px,#00ff93 109.5px,#00ff7c 132.5px,#00ff71 138.5px,#00ff31 235.5px,#00ff1d 308.5px,#00ff27 350.5px,#00ff48 393.5px,#00ff55 401.5px,#00ff55 421.5px,#00ff67 434.5px,#00ff3f 436.5px,#00ff3f 438.5px,#00ff84 440.5px,#00ff9f 447.5px,#00ffae 452.5px,#00ff8f 457.5px,#00ff97 467px)"></i><i style="left:610px;width:1px;background:linear-gradient(#00ff7f 0px,#00ff82 16.5px,#00ff5a 17.5px,#00ff10 18.5px,#56ff00 19.5px,#81ff00 21.5px,#9bff00 23.5px,#75ff00 26.5px,#56ff00 27.5px,#00ff11 28.5px,#00ff5b 29.5px,#00ff85 30.5px,#00ff8f 97.5px,#00ff5b 101.5px,#00ff5d 106.5px,#00ff8e 109.5px,#00ff72 133.5px,#00ff2f 236.5px,#00ff1c 307.5px,#00ff18 332.5px,#00ff46 393.5px,#00ff53 401.5px,#00ff53 420.5px,#00ff6a 433.5px,#00ff40 435.5px,#00ff46 437.5px,#00ff7b 439.5px,#00ff99 447.5px,#00ffa9 452.5px,#00ff8a 457.5px,#00ff92 467px)"></i><i style="left:611px;width:1px;background:linear-gradient(#00ff7b 0px,#00ff7e 16.5px,#00ff56 17.5px,#00ff0f 18.5px,#57ff00 19.5px,#81ff00 21.5px,#9bff00 23.5px,#75ff00 26.5px,#57ff00 27.5px,#00ff0f 28.5px,#00ff58 29.5px,#00ff81 30.5px,#00ff8b 97.5px,#00ff5c 100.5px,#00ff5c 106.5px,#00ff8c 110.5px,#00ff70 133.5px,#00ff2c 239.5px,#00ff19 307.5px,#00ff13 330.5px,#00ff44 393.5px,#00ff51 401.5px,#00ff51 419.5px,#00ff6d 432.5px,#00ff43 434.5px,#00ff46 436.5px,#00ff7c 438.5px,#00ff88 446.5px,#00ffa5 449.5px,#00ff9c 454.5px,#00ff86 457.5px,#00ff8e 467px)"></i><i style="left:612px;width:1px;background:linear-gradient(#00ff6d 0px,#00ff70 16.5px,#00ff4c 17.5px,#00ff09 18.5px,#58ff00 19.5px,#81ff00 21.5px,#9bff00 23.5px,#75ff00 26.5px,#58ff00 27.5px,#00ff0a 28.5px,#00ff4d 29.5px,#00ff73 30.5px,#00ff7d 97.5px,#00ff54 101.5px,#00ff62 107.5px,#00ff7f 110.5px,#00ff2c 235.5px,#00ff1a 306.5px,#00ff0d 325.5px,#00ff41 393.5px,#00ff4f 401.5px,#00ff4a 411.5px,#00ff6c 431.5px,#00ff3d 434.5px,#00ff42 435.5px,#00ff7a 437.5px,#00ff7a 446.5px,#00ff97 449.5px,#00ff8e 454.5px,#00ff78 457.5px,#00ff80 467px)"></i><i style="left:613px;width:1px;background:linear-gradient(#00ff8e 0px,#00ff91 16.5px,#00ff65 17.5px,#00ff16 18.5px,#55ff00 19.5px,#81ff00 21.5px,#9bff00 23.5px,#75ff00 26.5px,#55ff00 27.5px,#00ff16 28.5px,#00ff67 29.5px,#00ff93 30.5px,#00ff9d 97.5px,#00ff64 100.5px,#00ff63 106.5px,#00ff9b 109.5px,#00ff80 132.5px,#00ff74 138.5px,#00ff2d 228.5px,#00ff1a 306.5px,#00ff0b 327.5px,#00ff41 393.5px,#00ff4f 401.5px,#00ff4f 417.5px,#00ff7f 430.5px,#00ff44 433.5px,#00ff48 434.5px,#00ff91 436.5px,#00ffa3 437.5px,#00ff9b 446.5px,#00ffb7 449.5px,#00ffaf 454.5px,#00ff98 457.5px,#00ffa0 467px)"></i><i style="left:614px;width:1px;background:linear-gradient(#00ff77 0px,#00ff7a 16.5px,#00ff53 17.5px,#00ff0d 18.5px,#57ff00 19.5px,#81ff00 21.5px,#9bff00 23.5px,#75ff00 26.5px,#57ff00 27.5px,#00ff0e 28.5px,#00ff55 29.5px,#00ff7c 30.5px,#00ff87 97.5px,#00ff58 101.5px,#00ff5a 106.5px,#00ff88 110.5px,#00ff6e 133.5px,#00ff27 241.5px,#00ff1a 306.5px,#00ff09 328.5px,#00ff3f 393.5px,#00ff4c 401.5px,#00ff4b 415.5px,#00ff79 429.5px,#00ff41 432.5px,#00ff43 433.5px,#00ff95 436.5px,#00ff81 443.5px,#00ff91 447.5px,#00ffa0 452.5px,#00ff81 457.5px,#00ff89 467px)"></i><i style="left:615px;width:1px;background:linear-gradient(#00ff7f 0px,#00ff82 16.5px,#00ff59 17.5px,#00ff10 18.5px,#57ff00 19.5px,#81ff00 21.5px,#9bff00 23.5px,#75ff00 26.5px,#56ff00 27.5px,#00ff11 28.5px,#00ff5b 29.5px,#00ff84 30.5px,#00ff8e 97.5px,#00ff5d 100.5px,#00ff5d 106.5px,#00ff8d 109.5px,#00ff71 133.5px,#00ff28 235.5px,#00ff1a 306.5px,#00ff09 330.5px,#00ff3e 393.5px,#00ff4c 401.5px,#00ff4c 414.5px,#00ff82 428.5px,#00ff44 431.5px,#00ff45 432.5px,#00ff9f 435.5px,#00ff98 438.5px,#00ff89 444.5px,#00ff99 447.5px,#00ffa8 452.5px,#00ff89 457.5px,#00ff91 467px)"></i><i style="left:616px;width:1px;background:linear-gradient(#00ff77 0px,#00ff7a 16.5px,#00ff53 17.5px,#00ff0d 18.5px,#57ff00 19.5px,#81ff00 21.5px,#9bff00 23.5px,#75ff00 26.5px,#57ff00 27.5px,#00ff0e 28.5px,#00ff55 29.5px,#00ff7c 30.5px,#00ff87 97.5px,#00ff58 101.5px,#00ff5a 106.5px,#00ff88 110.5px,#00ff6e 133.5px,#00ff25 240.5px,#00ff1a 306.5px,#00ff09 330.5px,#00ff3d 393.5px,#00ff4a 401.5px,#00ff4e 414.5px,#00ff82 427.5px,#00ff44 430.5px,#00ff58 432.5px,#00ff9a 434.5px,#00ff91 438.5px,#00ff81 442.5px,#00ff83 446.5px,#00ffa0 449.5px,#00ff98 454.5px,#00ff81 457.5px,#00ff89 467px)"></i><i style="left:617px;width:1px;background:linear-gradient(#00ff7f 0px,#00ff81 16.5px,#00ff59 17.5px,#00ff10 18.5px,#57ff00 19.5px,#81ff00 21.5px,#9bff00 23.5px,#75ff00 26.5px,#56ff00 27.5px,#00ff11 28.5px,#00ff5b 29.5px,#00ff84 30.5px,#00ff8e 97.5px,#00ff5d 100.5px,#00ff5d 106.5px,#00ff8d 109.5px,#00ff71 133.5px,#00ff26 235.5px,#00ff1a 306.5px,#00ff09 330.5px,#00ff3c 393.5px,#00ff4a 401.5px,#00ff4a 411.5px,#00ff8b 426.5px,#00ff81 427.5px,#00ff48 429.5px,#00ff59 431.5px,#00ffa2 433.5px,#00ffa6 437.5px,#00ff89 440.5px,#00ff8b 446.5px,#00ffa8 449.5px,#00ffa0 454.5px,#00ff89 457.5px,#00ff91 467px)"></i><i style="left:618px;width:1px;background:linear-gradient(#00ff78 0px,#00ff7a 16.5px,#00ff54 17.5px,#00ff0d 18.5px,#57ff00 19.5px,#81ff00 21.5px,#9bff00 23.5px,#75ff00 26.5px,#57ff00 27.5px,#00ff0e 28.5px,#00ff55 29.5px,#00ff7d 30.5px,#00ff87 97.5px,#00ff58 101.5px,#00ff5a 106.5px,#00ff87 109.5px,#00ff6e 133.5px,#00ff25 239.5px,#00ff1a 306.5px,#00ff09 330.5px,#00ff3b 393.5px,#00ff49 401.5px,#00ff48 409.5px,#00ff84 425.5px,#00ff65 427.5px,#00ff49 428.5px,#00ff53 430.5px,#00ff9b 432.5px,#00ff9e 437.5px,#00ff82 440.5px,#00ff84 446.5px,#00ffa1 449.5px,#00ff99 454.5px,#00ff82 457.5px,#00ff8a 467px)"></i><i style="left:619px;width:1px;background:linear-gradient(#00ff6e 0px,#00ff70 16.5px,#00ff4c 17.5px,#00ff09 18.5px,#58ff00 19.5px,#81ff00 21.5px,#9bff00 23.5px,#75ff00 26.5px,#58ff00 27.5px,#00ff0a 28.5px,#00ff4e 29.5px,#00ff73 30.5px,#00ff7e 97.5px,#00ff54 101.5px,#00ff62 107.5px,#00ff7f 110.5px,#00ff25 236.5px,#00ff1a 306.5px,#00ff09 330.5px,#00ff3b 393.5px,#00ff49 401.5px,#00ff48 408.5px,#00ff7c 422.5px,#00ff44 428.5px,#00ff4d 429.5px,#00ff90 431.5px,#00ff95 437.5px,#00ff78 440.5px,#00ff7a 446.5px,#00ff97 449.5px,#00ff8f 454.5px,#00ff78 457.5px,#00ff80 467px)"></i><i style="left:620px;width:1px;background:linear-gradient(#00ff78 0px,#00ff7a 16.5px,#00ff54 17.5px,#00ff0d 18.5px,#57ff00 19.5px,#81ff00 21.5px,#9bff00 23.5px,#75ff00 26.5px,#57ff00 27.5px,#00ff0e 28.5px,#00ff55 29.5px,#00ff7d 30.5px,#00ff87 97.5px,#00ff58 101.5px,#00ff5a 106.5px,#00ff89 110.5px,#00ff6e 133.5px,#00ff25 238.5px,#00ff1a 306.5px,#00ff09 330.5px,#00ff3b 393.5px,#00ff49 401.5px,#00ff4f 408.5px,#00ff7b 420.5px,#00ff47 425.5px,#00ff4f 428.5px,#00ff97 430.5px,#00ff9f 437.5px,#00ff82 440.5px,#00ff84 446.5px,#00ffa1 449.5px,#00ff99 454.5px,#00ff82 457.5px,#00ff8a 467px)"></i><i style="left:621px;width:1px;background:linear-gradient(#00ff77 0px,#00ff7a 16.5px,#00ff53 17.5px,#00ff0d 18.5px,#57ff00 19.5px,#81ff00 21.5px,#9bff00 23.5px,#75ff00 26.5px,#57ff00 27.5px,#00ff0e 28.5px,#00ff55 29.5px,#00ff7c 30.5px,#00ff87 97.5px,#00ff58 101.5px,#00ff5a 106.5px,#00ff88 110.5px,#00ff6d 133.5px,#00ff25 240.5px,#00ff1a 306.5px,#00ff09 330.5px,#00ff3b 393.5px,#00ff4b 401.5px,#00ff52 407.5px,#00ff79 417.5px,#00ff46 423.5px,#00ff55 426.5px,#00ffa0 430.5px,#00ff9e 437.5px,#00ff81 440.5px,#00ff83 446.5px,#00ffa0 449.5px,#00ff98 454.5px,#00ff81 457.5px,#00ff89 467px)"></i><i style="left:622px;width:1px;background:linear-gradient(#00ff77 0px,#00ff7a 16.5px,#00ff53 17.5px,#00ff0d 18.5px,#57ff00 19.5px,#81ff00 21.5px,#9bff00 23.5px,#75ff00 26.5px,#57ff00 27.5px,#00ff0e 28.5px,#00ff55 29.5px,#00ff7d 30.5px,#00ff87 97.5px,#00ff58 101.5px,#00ff5a 106.5px,#00ff87 109.5px,#00ff6e 133.5px,#00ff25 239.5px,#00ff1a 306.5px,#00ff09 330.5px,#00ff3c 393.5px,#00ff4a 402.5px,#00ff77 414.5px,#00ff45 420.5px,#00ff52 423.5px,#00ff9f 428.5px,#00ff9e 437.5px,#00ff82 440.5px,#00ff84 446.5px,#00ffa1 449.5px,#00ff99 454.5px,#00ff82 457.5px,#00ff8a 467px)"></i><i style="left:623px;width:1px;background:linear-gradient(#00ff81 0px,#00ff83 16.5px,#00ff5b 17.5px,#00ff11 18.5px,#56ff00 19.5px,#81ff00 21.5px,#9bff00 23.5px,#75ff00 26.5px,#56ff00 27.5px,#00ff11 28.5px,#00ff5c 29.5px,#00ff86 30.5px,#00ff90 97.5px,#00ff5e 100.5px,#00ff5e 106.5px,#00ff8f 109.5px,#00ff72 133.5px,#00ff28 233.5px,#00ff1a 306.5px,#00ff09 330.5px,#00ff3d 393.5px,#00ff6c 408.5px,#00ff75 412.5px,#00ff47 417.5px,#00ff51 420.5px,#00ffa7 425.5px,#00ffa8 437.5px,#00ff8b 440.5px,#00ff8d 446.5px,#00ffaa 449.5px,#00ffa2 454.5px,#00ff8b 457.5px,#00ff93 467px)"></i><i style="left:624px;width:1px;background:linear-gradient(#00ff76 0px,#00ff79 16.5px,#00ff52 17.5px,#00ff0d 18.5px,#57ff00 19.5px,#81ff00 21.5px,#9bff00 23.5px,#75ff00 26.5px,#57ff00 27.5px,#00ff0d 28.5px,#00ff54 29.5px,#00ff7b 30.5px,#00ff86 97.5px,#00ff58 101.5px,#00ff5a 106.5px,#00ff87 110.5px,#00ff6d 133.5px,#00ff26 241.5px,#00ff1a 306.5px,#00ff09 330.5px,#00ff40 393.5px,#00ff59 402.5px,#00ff6e 409.5px,#00ff44 415.5px,#00ff57 418.5px,#00ff9a 422.5px,#00ff9d 437.5px,#00ff80 440.5px,#00ff83 446.5px,#00ff9f 449.5px,#00ff97 454.5px,#00ff80 457.5px,#00ff88 467px)"></i><i style="left:625px;width:1px;background:linear-gradient(#00ff7c 0px,#00ff7f 16.5px,#00ff57 17.5px,#00ff0f 18.5px,#57ff00 19.5px,#81ff00 21.5px,#9bff00 23.5px,#75ff00 26.5px,#57ff00 27.5px,#00ff10 28.5px,#00ff59 29.5px,#00ff82 30.5px,#00ff8c 97.5px,#00ff5c 100.5px,#00ff5c 106.5px,#00ff8b 109.5px,#00ff70 133.5px,#00ff28 238.5px,#00ff1a 306.5px,#00ff09 328.5px,#00ff46 393.5px,#00ff64 402.5px,#00ff68 407.5px,#00ff45 412.5px,#00ff55 415.5px,#00ffa5 420.5px,#00ffa3 437.5px,#00ff86 440.5px,#00ff89 446.5px,#00ffa5 449.5px,#00ff9d 454.5px,#00ff86 457.5px,#00ff8f 467px)"></i><i style="left:626px;width:1px;background:linear-gradient(#00ff81 0px,#00ff84 16.5px,#00ff5b 17.5px,#00ff11 18.5px,#56ff00 19.5px,#81ff00 21.5px,#9bff00 23.5px,#75ff00 26.5px,#56ff00 27.5px,#00ff12 28.5px,#00ff5d 29.5px,#00ff86 30.5px,#00ff91 97.5px,#00ff5e 100.5px,#00ff5e 106.5px,#00ff92 110.5px,#00ff72 133.5px,#00ff2a 236.5px,#00ff1a 306.5px,#00ff0b 327.5px,#00ff47 392.5px,#00ff73 401.5px,#00ff44 409.5px,#00ff53 412.5px,#00ffa9 417.5px,#00ffa8 437.5px,#00ff8b 440.5px,#00ff8e 446.5px,#00ffaa 449.5px,#00ffa2 454.5px,#00ff8b 457.5px,#00ff93 467px)"></i><i style="left:627px;width:1px;background:linear-gradient(#00ff7b 0px,#00ff7d 16.5px,#00ff56 17.5px,#00ff0e 18.5px,#57ff00 19.5px,#81ff00 21.5px,#9bff00 23.5px,#75ff00 26.5px,#57ff00 27.5px,#00ff0f 28.5px,#00ff58 29.5px,#00ff80 30.5px,#00ff8a 97.5px,#00ff59 101.5px,#00ff5c 106.5px,#00ff8c 110.5px,#00ff70 133.5px,#00ff2b 238.5px,#00ff1a 306.5px,#00ff0d 325.5px,#00ff45 388.5px,#00ff77 400.5px,#00ff42 406.5px,#00ff5b 410.5px,#00ffa0 414.5px,#00ffa2 437.5px,#00ff85 440.5px,#00ff87 446.5px,#00ffa4 449.5px,#00ff9c 454.5px,#00ff85 457.5px,#00ff8d 467px)"></i><i style="left:628px;width:1px;background:linear-gradient(#00ff7c 0px,#00ff7f 16.5px,#00ff57 17.5px,#00ff0f 18.5px,#57ff00 19.5px,#81ff00 21.5px,#9bff00 23.5px,#75ff00 26.5px,#57ff00 27.5px,#00ff10 28.5px,#00ff59 29.5px,#00ff82 30.5px,#00ff8c 97.5px,#00ff5c 100.5px,#00ff5c 106.5px,#00ff8b 109.5px,#00ff71 133.5px,#00ff2d 237.5px,#00ff19 307.5px,#00ff13 330.5px,#00ff47 385.5px,#00ff6b 394.5px,#00ff6e 399.5px,#00ff41 403.5px,#00ff56 407.5px,#00ff9f 411.5px,#00ffa3 437.5px,#00ff87 440.5px,#00ff89 446.5px,#00ffa6 449.5px,#00ff9e 454.5px,#00ff87 457.5px,#00ff8f 467px)"></i><i style="left:629px;width:1px;background:linear-gradient(#00ff74 0px,#00ff77 16.5px,#00ff51 17.5px,#00ff0c 18.5px,#57ff00 19.5px,#81ff00 21.5px,#9bff00 23.5px,#75ff00 26.5px,#57ff00 27.5px,#00ff0d 28.5px,#00ff53 29.5px,#00ff7a 30.5px,#00ff84 97.5px,#00ff57 101.5px,#00ff59 106.5px,#00ff86 110.5px,#00ff6d 133.5px,#00ff2c 245.5px,#00ff1a 308.5px,#00ff1d 341.5px,#00ff48 382.5px,#00ff74 395.5px,#00ff44 403.5px,#00ff9c 409.5px,#00ff9b 437.5px,#00ff7f 440.5px,#00ff81 446.5px,#00ff9e 449.5px,#00ff95 454.5px,#00ff7f 457.5px,#00ff87 467px)"></i><i style="left:630px;width:1px;background:linear-gradient(#00ff7b 0px,#00ff7e 16.5px,#00ff56 17.5px,#00ff0e 18.5px,#57ff00 19.5px,#81ff00 21.5px,#9bff00 23.5px,#75ff00 26.5px,#57ff00 27.5px,#00ff0f 28.5px,#00ff58 29.5px,#00ff80 30.5px,#00ff8a 97.5px,#00ff5a 101.5px,#00ff5c 106.5px,#00ff8c 110.5px,#00ff71 133.5px,#00ff2f 240.5px,#00ff1d 308.5px,#00ff26 349.5px,#00ff4e 380.5px,#00ff69 393.5px,#00ff50 399.5px,#00ff6f 403.5px,#00ff9f 406.5px,#00ffa2 437.5px,#00ff85 440.5px,#00ff87 446.5px,#00ffa4 449.5px,#00ff9c 454.5px,#00ff85 457.5px,#00ff8d 467px)"></i><i style="left:631px;width:1px;background:linear-gradient(#00ff7f 0px,#00ff82 16.5px,#00ff59 17.5px,#00ff10 18.5px,#57ff00 19.5px,#81ff00 21.5px,#9bff00 23.5px,#75ff00 26.5px,#56ff00 27.5px,#00ff11 28.5px,#00ff5b 29.5px,#00ff84 30.5px,#00ff8e 97.5px,#00ff5d 100.5px,#00ff5d 106.5px,#00ff8e 109.5px,#00ff73 133.5px,#00ff31 239.5px,#00ff1c 312.5px,#00ff3f 369.5px,#00ff72 389.5px,#00ff4f 394.5px,#00ff59 398.5px,#00ffa0 403.5px,#00ffa6 437.5px,#00ff89 440.5px,#00ff8c 446.5px,#00ffa8 449.5px,#00ffa0 454.5px,#00ff89 457.5px,#00ff91 467px)"></i><i style="left:632px;width:1px;background:linear-gradient(#00ff6f 0px,#00ff71 16.5px,#00ff4d 17.5px,#00ff0a 18.5px,#58ff00 19.5px,#81ff00 21.5px,#9bff00 23.5px,#75ff00 26.5px,#58ff00 27.5px,#00ff0a 28.5px,#00ff4e 29.5px,#00ff74 30.5px,#00ff7f 97.5px,#00ff55 101.5px,#00ff63 107.5px,#00ff81 110.5px,#00ff6d 139.5px,#00ff31 244.5px,#00ff25 334.5px,#00ff48 370.5px,#00ff6a 387.5px,#00ff3f 392.5px,#00ff6d 397.5px,#00ff9d 400.5px,#00ff96 437.5px,#00ff79 440.5px,#00ff7c 446.5px,#00ff98 449.5px,#00ff90 454.5px,#00ff79 457.5px,#00ff81 467px)"></i><i style="left:633px;width:1px;background:linear-gradient(#00ff72 0px,#00ff75 16.5px,#00ff50 17.5px,#00ff0b 18.5px,#58ff00 19.5px,#81ff00 21.5px,#9bff00 23.5px,#75ff00 26.5px,#58ff00 27.5px,#00ff0c 28.5px,#00ff51 29.5px,#00ff78 30.5px,#00ff82 97.5px,#00ff56 101.5px,#00ff58 106.5px,#00ff84 110.5px,#00ff6e 133.5px,#00ff30 255.5px,#00ff2b 338.5px,#00ff51 369.5px,#00ff71 384.5px,#00ff41 390.5px,#00ff52 393.5px,#00ff9d 397.5px,#00ffa7 401.5px,#00ff9a 437.5px,#00ff7e 440.5px,#00ff80 446.5px,#00ff9d 449.5px,#00ff95 454.5px,#00ff7e 457.5px,#00ff85 467px)"></i><i style="left:634px;width:1px;background:linear-gradient(#00ff70 0px,#00ff73 16.5px,#00ff4e 17.5px,#00ff0a 18.5px,#58ff00 19.5px,#81ff00 21.5px,#9bff00 23.5px,#75ff00 26.5px,#58ff00 27.5px,#00ff0b 28.5px,#00ff50 29.5px,#00ff75 30.5px,#00ff80 97.5px,#00ff55 101.5px,#00ff57 106.5px,#00ff82 110.5px,#00ff6f 139.5px,#00ff33 249.5px,#00ff30 339.5px,#00ff59 368.5px,#00ff75 381.5px,#00ff41 387.5px,#00ff59 391.5px,#00ffa4 395.5px,#00ff9f 402.5px,#00ff99 437.5px,#00ff7c 440.5px,#00ff7e 446.5px,#00ff9b 449.5px,#00ff93 454.5px,#00ff7c 457.5px,#00ff83 467px)"></i><i style="left:635px;width:1px;background:linear-gradient(#00ff76 0px,#00ff78 16.5px,#00ff52 17.5px,#00ff0c 18.5px,#57ff00 19.5px,#81ff00 21.5px,#9bff00 23.5px,#75ff00 26.5px,#57ff00 27.5px,#00ff0d 28.5px,#00ff54 29.5px,#00ff7b 30.5px,#00ff85 97.5px,#00ff57 101.5px,#00ff5a 106.5px,#00ff87 110.5px,#00ff71 133.5px,#00ff34 258.5px,#00ff36 340.5px,#00ff69 369.5px,#00ff7d 378.5px,#00ff43 384.5px,#00ff59 388.5px,#00ffa2 393.5px,#00ffb0 400.5px,#00ffa1 409.5px,#00ff9f 437.5px,#00ff82 440.5px,#00ff84 446.5px,#00ffa1 449.5px,#00ff99 454.5px,#00ff82 457.5px,#00ff89 467px)"></i><i style="left:636px;width:1px;background:linear-gradient(#00ff7b 0px,#00ff7e 16.5px,#00ff57 17.5px,#00ff0f 18.5px,#57ff00 19.5px,#81ff00 21.5px,#9bff00 23.5px,#75ff00 26.5px,#57ff00 27.5px,#00ff0f 28.5px,#00ff58 29.5px,#00ff81 30.5px,#00ff8b 97.5px,#00ff5c 100.5px,#00ff5c 106.5px,#00ff8b 109.5px,#00ff7b 132.5px,#00ff72 138.5px,#00ff37 256.5px,#00ff3d 338.5px,#00ff65 362.5px,#00ff80 376.5px,#00ff46 381.5px,#00ff59 385.5px,#00ff9f 389.5px,#00ffb7 399.5px,#00ffa8 411.5px,#00ffa5 437.5px,#00ff89 440.5px,#00ff8b 446.5px,#00ffa8 449.5px,#00ffa0 454.5px,#00ff89 457.5px,#00ff8f 467px)"></i><i style="left:637px;width:1px;background:linear-gradient(#00ff7e 0px,#00ff81 16.5px,#00ff59 17.5px,#00ff10 18.5px,#57ff00 19.5px,#81ff00 21.5px,#9bff00 23.5px,#75ff00 26.5px,#56ff00 27.5px,#00ff10 28.5px,#00ff5a 29.5px,#00ff83 30.5px,#00ff8d 97.5px,#00ff5d 100.5px,#00ff5d 106.5px,#00ff8d 109.5px,#00ff7d 132.5px,#00ff74 138.5px,#00ff6d 160.5px,#00ff3c 244.5px,#00ff44 334.5px,#00ff65 357.5px,#00ff88 373.5px,#00ff49 378.5px,#00ff57 382.5px,#00ffa9 387.5px,#00ffb7 401.5px,#00ffab 413.5px,#00ffa9 437.5px,#00ff8c 440.5px,#00ff8e 446.5px,#00ffab 449.5px,#00ffa3 454.5px,#00ff8c 457.5px,#00ff92 467px)"></i><i style="left:638px;width:1px;background:linear-gradient(#00ff7d 0px,#00ff7f 16.5px,#00ff58 17.5px,#00ff0f 18.5px,#57ff00 19.5px,#81ff00 21.5px,#9bff00 23.5px,#75ff00 26.5px,#57ff00 27.5px,#00ff10 28.5px,#00ff59 29.5px,#00ff82 30.5px,#00ff8c 97.5px,#00ff5a 101.5px,#00ff5d 106.5px,#00ff8c 109.5px,#00ff7e 132.5px,#00ff74 138.5px,#00ff6f 159.5px,#00ff3f 246.5px,#00ff4c 329.5px,#00ff69 354.5px,#00ff94 370.5px,#00ff4b 375.5px,#00ff55 379.5px,#00ffa8 384.5px,#00ffb6 394.5px,#00ffaf 402.5px,#00ffa9 437.5px,#00ff8c 440.5px,#00ff8e 446.5px,#00ffab 449.5px,#00ffa3 454.5px,#00ff8c 457.5px,#00ff92 467px)"></i><i style="left:639px;width:1px;background:linear-gradient(#00ff73 0px,#00ff75 16.5px,#00ff50 17.5px,#00ff0b 18.5px,#58ff00 19.5px,#81ff00 21.5px,#9bff00 23.5px,#75ff00 26.5px,#58ff00 27.5px,#00ff0c 28.5px,#00ff52 29.5px,#00ff78 30.5px,#00ff83 97.5px,#00ff56 101.5px,#00ff58 106.5px,#00ff85 110.5px,#00ff72 133.5px,#00ff62 176.5px,#00ff40 268.5px,#00ff66 349.5px,#00ff95 370.5px,#00ff4d 372.5px,#00ff4f 376.5px,#00ff9e 381.5px,#00ffad 394.5px,#00ffa6 402.5px,#00ff9f 437.5px,#00ff83 440.5px,#00ff85 446.5px,#00ffa2 449.5px,#00ff9a 454.5px,#00ff83 457.5px,#00ff88 467px)"></i><i style="left:640px;width:1px;background:linear-gradient(#00ff7a 0px,#00ff7c 16.5px,#00ff55 17.5px,#00ff0e 18.5px,#57ff00 19.5px,#81ff00 21.5px,#9bff00 23.5px,#75ff00 26.5px,#57ff00 27.5px,#00ff0f 28.5px,#00ff57 29.5px,#00ff7f 30.5px,#00ff89 97.5px,#00ff59 101.5px,#00ff5b 106.5px,#00ff8b 110.5px,#00ff7d 132.5px,#00ff74 138.5px,#00ff75 155.5px,#00ff48 243.5px,#00ff61 325.5px,#00ff81 354.5px,#00ffa2 370.5px,#00ff51 372.5px,#00ff5d 374.5px,#00ffa4 378.5px,#00ffb5 394.5px,#00ffad 402.5px,#00ffa7 437.5px,#00ff8b 440.5px,#00ff8d 446.5px,#00ffa9 449.5px,#00ffa1 454.5px,#00ff8a 457.5px,#00ff8f 467px)"></i><i style="left:641px;width:1px;background:linear-gradient(#00ff87 0px,#00ff89 16.5px,#00ff5f 17.5px,#00ff13 18.5px,#56ff00 19.5px,#81ff00 21.5px,#9bff00 23.5px,#75ff00 26.5px,#56ff00 27.5px,#00ff14 28.5px,#00ff61 29.5px,#00ff8c 30.5px,#00ff96 97.5px,#00ff61 100.5px,#00ff61 106.5px,#00ff95 109.5px,#00ff86 132.5px,#00ff76 137.5px,#00ff86 143.5px,#00ff50 230.5px,#00ff6c 315.5px,#00ff93 353.5px,#00ffb6 370.5px,#00ff88 372.5px,#00ff9e 374.5px,#00ffb8 377.5px,#00ffc3 394.5px,#00ffbc 402.5px,#00ffb5 437.5px,#00ff99 440.5px,#00ff9b 446.5px,#00ffb8 449.5px,#00ffb0 454.5px,#00ff99 457.5px,#00ff9d 467px)"></i><i style="left:642px;width:1px;background:linear-gradient(#00ff7b 0px,#00ff7d 16.5px,#00ff56 17.5px,#00ff0e 18.5px,#57ff00 19.5px,#81ff00 21.5px,#9bff00 23.5px,#75ff00 26.5px,#57ff00 27.5px,#00ff0f 28.5px,#00ff58 29.5px,#00ff80 30.5px,#00ff8b 97.5px,#00ff5c 100.5px,#00ff5c 106.5px,#00ff8d 110.5px,#00ff80 132.5px,#00ff77 138.5px,#00ff78 156.5px,#00ff57 233.5px,#00ff7f 330.5px,#00ffa2 359.5px,#00ffb8 394.5px,#00ffb1 402.5px,#00ffaa 437.5px,#00ff8e 440.5px,#00ff90 446.5px,#00ffad 449.5px,#00ffa4 454.5px,#00ff8e 457.5px,#00ff92 467px)"></i><i style="left:643px;width:1px;background:linear-gradient(#00ff86 0px,#00ff89 16.5px,#00ff5f 17.5px,#00ff13 18.5px,#56ff00 19.5px,#81ff00 21.5px,#9bff00 23.5px,#75ff00 26.5px,#56ff00 27.5px,#00ff13 28.5px,#00ff61 29.5px,#00ff8b 30.5px,#00ff95 97.5px,#00ff60 100.5px,#00ff60 106.5px,#00ff95 109.5px,#00ff88 132.5px,#00ff77 137.5px,#00ff88 143.5px,#00ff58 226.5px,#00ff55 228.5px,#00ff62 232.5px,#00ff9f 348.5px,#00ffb9 374.5px,#00ffc4 394.5px,#00ffbd 402.5px,#00ffb6 437.5px,#00ff9a 440.5px,#00ff9c 446.5px,#00ffb9 449.5px,#00ffb1 454.5px,#00ff9a 457.5px,#00ff9d 467px)"></i><i style="left:644px;width:1px;background:linear-gradient(#00ff79 0px,#00ff7c 16.5px,#00ff55 17.5px,#00ff0e 18.5px,#57ff00 19.5px,#81ff00 21.5px,#9bff00 23.5px,#75ff00 26.5px,#57ff00 27.5px,#00ff0e 28.5px,#00ff57 29.5px,#00ff7e 30.5px,#00ff89 97.5px,#00ff59 101.5px,#00ff5b 106.5px,#00ff8b 110.5px,#00ff80 132.5px,#00ff77 138.5px,#00ff7e 150.5px,#00ff5f 215.5px,#05ff00 225.5px,#20ff00 227.5px,#09ff00 228.5px,#00ff5c 229.5px,#00ff6a 232.5px,#00ffac 381.5px,#00ffb0 393.5px,#00ffb8 401.5px,#00ffac 413.5px,#00ffaa 437.5px,#00ff8d 440.5px,#00ff90 446.5px,#00ffac 449.5px,#00ffa4 454.5px,#00ff8d 457.5px,#00ff91 467px)"></i><i style="left:645px;width:1px;background:linear-gradient(#00ff84 0px,#00ff87 16.5px,#00ff5e 17.5px,#00ff12 18.5px,#56ff00 19.5px,#81ff00 21.5px,#9bff00 23.5px,#75ff00 26.5px,#56ff00 27.5px,#00ff13 28.5px,#00ff5f 29.5px,#00ff8a 30.5px,#00ff94 97.5px,#00ff60 100.5px,#00ff60 106.5px,#00ff93 109.5px,#00ff88 132.5px,#00ff78 137.5px,#00ff89 143.5px,#00ff6c 204.5px,#00ff02 214.5px,#2eff00 219.5px,#28ff00 227.5px,#05ff00 228.5px,#00ff69 229.5px,#00ff79 232.5px,#00ffb8 378.5px,#00ffbc 393.5px,#00ffc4 401.5px,#00ffb8 413.5px,#00ffb6 437.5px,#00ff99 440.5px,#00ff9c 446.5px,#00ffb8 449.5px,#00ffb0 454.5px,#00ff99 457.5px,#00ff9d 467px)"></i><i style="left:646px;width:1px;background:linear-gradient(#00ff85 0px,#00ff88 16.5px,#00ff5e 17.5px,#00ff12 18.5px,#56ff00 19.5px,#81ff00 21.5px,#9bff00 23.5px,#75ff00 26.5px,#56ff00 27.5px,#00ff13 28.5px,#00ff60 29.5px,#00ff8a 30.5px,#00ff94 97.5px,#00ff60 100.5px,#00ff60 106.5px,#00ff94 109.5px,#00ff89 132.5px,#00ff79 137.5px,#00ff8b 143.5px,#00ff72 194.5px,#03ff00 204.5px,#2eff00 208.5px,#22ff00 217.5px,#00ff08 220.5px,#00ff84 229.5px,#00ffba 381.5px,#00ffc5 394.5px,#00ffbe 402.5px,#00ffb7 437.5px,#00ff9b 440.5px,#00ff9d 446.5px,#00ffba 449.5px,#00ffb2 454.5px,#00ff9b 457.5px,#00ff9d 467px)"></i><i style="left:647px;width:1px;background:linear-gradient(#00ff7a 0px,#00ff7c 16.5px,#00ff55 17.5px,#00ff0e 18.5px,#57ff00 19.5px,#81ff00 21.5px,#9bff00 23.5px,#75ff00 26.5px,#57ff00 27.5px,#00ff0f 28.5px,#00ff57 29.5px,#00ff7f 30.5px,#00ff89 97.5px,#00ff59 101.5px,#00ff5b 106.5px,#00ff8a 109.5px,#00ff82 132.5px,#00ff79 138.5px,#00ff84 148.5px,#00ff79 183.5px,#00ff02 193.5px,#2dff00 197.5px,#25ff00 206.5px,#00ff10 210.5px,#00ff7e 219.5px,#00ffaf 356.5px,#00ffb3 393.5px,#00ffba 401.5px,#00ffaf 423.5px,#00ffac 437.5px,#00ff90 440.5px,#00ff92 446.5px,#00ffaf 449.5px,#00ffa7 454.5px,#00ff90 457.5px,#00ff92 467px)"></i><i style="left:648px;width:1px;background:linear-gradient(#00ff7b 0px,#00ff7e 16.5px,#00ff56 17.5px,#00ff0f 18.5px,#57ff00 19.5px,#81ff00 21.5px,#9bff00 23.5px,#75ff00 26.5px,#57ff00 27.5px,#00ff0f 28.5px,#00ff58 29.5px,#00ff80 30.5px,#00ff8b 97.5px,#00ff5c 100.5px,#00ff5c 106.5px,#00ff8b 109.5px,#00ff84 132.5px,#00ff76 137.5px,#00ff88 143.5px,#00ff82 172.5px,#05ff00 183.5px,#2eff00 187.5px,#28ff00 195.5px,#00ff0d 199.5px,#00ff82 208.5px,#00ffad 304.5px,#00ffb5 393.5px,#00ffbc 401.5px,#00ffb1 423.5px,#00ffae 437.5px,#00ff92 440.5px,#00ff94 446.5px,#00ffb1 449.5px,#00ffa9 454.5px,#00ff92 457.5px,#00ff94 467px)"></i><i style="left:649px;width:1px;background:linear-gradient(#00ff88 0px,#00ff8b 16.5px,#00ff61 17.5px,#00ff13 18.5px,#56ff00 19.5px,#81ff00 21.5px,#9bff00 23.5px,#75ff00 26.5px,#56ff00 27.5px,#00ff14 28.5px,#00ff62 29.5px,#00ff8e 30.5px,#00ff97 97.5px,#00ff61 100.5px,#00ff61 106.5px,#00ff97 109.5px,#00ff8e 132.5px,#00ff7c 136.5px,#00ff94 143.5px,#00ff86 162.5px,#00ff03 172.5px,#2eff00 176.5px,#2aff00 184.5px,#00ff0b 188.5px,#00ff93 198.5px,#00ffbe 317.5px,#00ffc2 393.5px,#00ffc9 401.5px,#00ffbe 423.5px,#00ffbc 437.5px,#00ff9f 440.5px,#00ffa1 446.5px,#00ffbe 449.5px,#00ffb6 454.5px,#00ff9f 457.5px,#00ffa1 467px)"></i><i style="left:650px;width:1px;background:linear-gradient(#00ff74 0px,#00ff77 16.5px,#00ff51 17.5px,#00ff0c 18.5px,#57ff00 19.5px,#81ff00 21.5px,#9bff00 23.5px,#75ff00 26.5px,#57ff00 27.5px,#00ff0d 28.5px,#00ff53 29.5px,#00ff7a 30.5px,#00ff84 97.5px,#00ff57 101.5px,#00ff59 106.5px,#00ff87 110.5px,#00ff81 132.5px,#00ff74 137.5px,#00ff86 143.5px,#00ff77 152.5px,#09ff00 162.5px,#2eff00 166.5px,#26ff00 174.5px,#00ff12 178.5px,#00ff88 187.5px,#00ffaa 294.5px,#00ffae 393.5px,#00ffb5 401.5px,#00ffaa 423.5px,#00ffa8 437.5px,#00ff8b 440.5px,#00ff8d 446.5px,#00ffaa 449.5px,#00ffa2 454.5px,#00ff8b 457.5px,#00ff8d 467px)"></i><i style="left:651px;width:1px;background:linear-gradient(#00ff69 0px,#00ff6b 16.5px,#00ff48 17.5px,#00ff08 18.5px,#59ff00 19.5px,#81ff00 21.5px,#9bff00 23.5px,#75ff00 26.5px,#58ff00 27.5px,#00ff08 28.5px,#00ff4a 29.5px,#00ff6e 30.5px,#00ff79 97.5px,#00ff53 101.5px,#00ff60 107.5px,#00ff7c 110.5px,#00ff73 133.5px,#00ff76 141.5px,#05ff00 151.5px,#2eff00 155.5px,#29ff00 163.5px,#00ff0a 167.5px,#00ff87 177.5px,#00ff9e 312.5px,#00ffa2 393.5px,#00ffaa 401.5px,#00ff9e 412.5px,#00ff9c 437.5px,#00ff7f 440.5px,#00ff82 446.5px,#00ff9e 449.5px,#00ff96 454.5px,#00ff7f 457.5px,#00ff82 467px)"></i><i style="left:652px;width:1px;background:linear-gradient(#00ff87 0px,#00ff89 16.5px,#00ff5f 17.5px,#00ff13 18.5px,#56ff00 19.5px,#81ff00 21.5px,#9bff00 23.5px,#75ff00 26.5px,#56ff00 27.5px,#00ff14 28.5px,#00ff61 29.5px,#00ff8c 30.5px,#00ff96 97.5px,#00ff61 100.5px,#00ff61 106.5px,#00ff97 109.5px,#00ff90 132.5px,#00ff2a 139.5px,#00ff00 141.5px,#2dff00 144.5px,#22ff00 153.5px,#00ff0a 156.5px,#00ff98 166.5px,#00ffb5 212.5px,#00ffc0 393.5px,#00ffc8 401.5px,#00ffbc 412.5px,#00ffba 437.5px,#00ff9d 440.5px,#00ffa0 446.5px,#00ffbc 449.5px,#00ffb4 454.5px,#00ff9d 457.5px,#00ffa0 467px)"></i><i style="left:653px;width:1px;background:linear-gradient(#00ff6c 0px,#00ff6e 16.5px,#00ff4a 17.5px,#00ff09 18.5px,#58ff00 19.5px,#81ff00 21.5px,#9bff00 23.5px,#75ff00 26.5px,#58ff00 27.5px,#00ff09 28.5px,#00ff4c 29.5px,#00ff71 30.5px,#00ff7c 97.5px,#00ff54 101.5px,#00ff62 107.5px,#00ff80 110.5px,#00ff7b 125.5px,#00ff16 132.5px,#00ff12 136.5px,#2eff00 137.5px,#29ff00 142.5px,#00ff01 145.5px,#00ff7c 155.5px,#00ff9b 200.5px,#00ffa5 393.5px,#00ffad 401.5px,#00ffa1 412.5px,#00ff9f 437.5px,#00ff82 440.5px,#00ff84 446.5px,#00ffa1 449.5px,#00ff99 454.5px,#00ff82 457.5px,#00ff84 467px)"></i><i style="left:654px;width:1px;background:linear-gradient(#00ff80 0px,#00ff83 16.5px,#00ff5a 17.5px,#00ff10 18.5px,#56ff00 19.5px,#81ff00 21.5px,#9bff00 23.5px,#75ff00 26.5px,#56ff00 27.5px,#00ff11 28.5px,#00ff5c 29.5px,#00ff85 30.5px,#00ff90 97.5px,#00ff5e 100.5px,#00ff5f 106.5px,#00ff91 109.5px,#00ff8f 117.5px,#00ff3d 122.5px,#00ff03 125.5px,#2eff00 128.5px,#2eff00 133.5px,#00ff12 134.5px,#00ff4a 140.5px,#00ff8b 144.5px,#00ff9d 162.5px,#00ffb6 249.5px,#00ffba 393.5px,#00ffc1 401.5px,#00ffb6 423.5px,#00ffb4 437.5px,#00ff97 440.5px,#00ff99 446.5px,#00ffb6 449.5px,#00ffae 454.5px,#00ff97 457.5px,#00ff99 467px)"></i><i style="left:655px;width:1px;background:linear-gradient(#00ff7f 0px,#00ff81 16.5px,#00ff59 17.5px,#00ff10 18.5px,#57ff00 19.5px,#81ff00 21.5px,#9bff00 23.5px,#75ff00 26.5px,#56ff00 27.5px,#00ff11 28.5px,#00ff5b 29.5px,#00ff84 30.5px,#00ff8e 97.5px,#00ff5b 101.5px,#00ff5e 106.5px,#00ff8c 109.5px,#00ff3f 114.5px,#00ff05 117.5px,#2dff00 120.5px,#2bff00 126.5px,#00ff0a 129.5px,#00ff65 134.5px,#00ff97 141.5px,#00ffb4 238.5px,#00ffb8 393.5px,#00ffc0 401.5px,#00ffb4 413.5px,#00ffb2 437.5px,#00ff95 440.5px,#00ff98 446.5px,#00ffb4 449.5px,#00ffac 454.5px,#00ff95 457.5px,#00ff98 467px)"></i><i style="left:656px;width:1px;background:linear-gradient(#00ff7c 0px,#00ff7f 16.5px,#00ff57 17.5px,#00ff0f 18.5px,#57ff00 19.5px,#81ff00 21.5px,#9bff00 23.5px,#75ff00 26.5px,#57ff00 27.5px,#00ff10 28.5px,#00ff59 29.5px,#00ff81 30.5px,#00ff8c 97.5px,#00ff59 101.5px,#00ff31 107.5px,#0dff00 110.5px,#2eff00 113.5px,#21ff00 119.5px,#00ff07 121.5px,#00ff87 128.5px,#00ff93 131.5px,#00ff7c 136.5px,#00ff96 143.5px,#00ffb2 238.5px,#00ffb6 393.5px,#00ffbd 401.5px,#00ffb2 423.5px,#00ffaf 437.5px,#00ff93 440.5px,#00ff95 446.5px,#00ffb2 449.5px,#00ffaa 454.5px,#00ff93 457.5px,#00ff95 467px)"></i><i style="left:657px;width:1px;background:linear-gradient(#00ff86 0px,#00ff89 16.5px,#00ff5f 17.5px,#00ff13 18.5px,#56ff00 19.5px,#81ff00 21.5px,#9bff00 23.5px,#75ff00 26.5px,#56ff00 27.5px,#00ff14 28.5px,#00ff61 29.5px,#00ff8c 30.5px,#00ff95 93.5px,#00ff5c 97.5px,#00ff2d 100.5px,#00ff17 104.5px,#2eff00 105.5px,#22ff00 111.5px,#00ff07 113.5px,#00ff8e 120.5px,#00ff9e 126.5px,#00ff96 132.5px,#00ff82 136.5px,#00ffa1 142.5px,#00ffbc 239.5px,#00ffc0 393.5px,#00ffc8 401.5px,#00ffbc 412.5px,#00ffba 437.5px,#00ff9d 440.5px,#00ff9f 446.5px,#00ffbc 449.5px,#00ffb4 454.5px,#00ff9d 457.5px,#00ff9f 467px)"></i><i style="left:658px;width:1px;background:linear-gradient(#00ff70 0px,#00ff72 16.5px,#00ff4e 17.5px,#00ff0a 18.5px,#58ff00 19.5px,#81ff00 21.5px,#9bff00 23.5px,#75ff00 26.5px,#58ff00 27.5px,#00ff0b 28.5px,#00ff4f 29.5px,#00ff75 30.5px,#00ff7c 86.5px,#09ff00 94.5px,#2eff00 97.5px,#2eff00 101.5px,#00ff16 102.5px,#00ff35 108.5px,#00ff80 113.5px,#00ff82 132.5px,#00ff7c 138.5px,#00ff8c 147.5px,#00ffa5 240.5px,#00ffa9 393.5px,#00ffb1 401.5px,#00ffa5 413.5px,#00ffa3 437.5px,#00ff86 440.5px,#00ff89 446.5px,#00ffa5 449.5px,#00ff9d 454.5px,#00ff86 457.5px,#00ff89 467px)"></i><i style="left:659px;width:1px;background:linear-gradient(#00ff76 0px,#00ff79 16.5px,#00ff53 17.5px,#00ff0d 18.5px,#57ff00 19.5px,#81ff00 21.5px,#9bff00 23.5px,#75ff00 26.5px,#57ff00 27.5px,#00ff0d 28.5px,#00ff54 29.5px,#00ff7c 30.5px,#00ff7d 81.5px,#00ff06 86.5px,#29ff00 88.5px,#27ff00 95.5px,#00ff00 97.5px,#00ff36 100.5px,#00ff69 107.5px,#00ff8b 110.5px,#00ff88 132.5px,#00ff7a 137.5px,#00ff92 143.5px,#00ffac 244.5px,#00ffb0 393.5px,#00ffb8 401.5px,#00ffac 413.5px,#00ffaa 437.5px,#00ff8d 440.5px,#00ff8f 446.5px,#00ffac 449.5px,#00ffa4 454.5px,#00ff8d 457.5px,#00ff8f 467px)"></i><i style="left:660px;width:1px;background:linear-gradient(#00ff81 0px,#00ff83 16.5px,#00ff5b 17.5px,#00ff11 18.5px,#56ff00 19.5px,#81ff00 21.5px,#9bff00 23.5px,#75ff00 26.5px,#56ff00 27.5px,#00ff11 28.5px,#00ff5c 29.5px,#00ff86 30.5px,#00ff8c 75.5px,#00ff32 79.5px,#02ff00 81.5px,#2eff00 83.5px,#2bff00 87.5px,#02ff00 89.5px,#00ff89 97.5px,#00ff5c 101.5px,#00ff5f 106.5px,#00ff93 109.5px,#00ff91 132.5px,#00ff7f 136.5px,#00ff9c 142.5px,#00ffb6 243.5px,#00ffba 393.5px,#00ffc2 401.5px,#00ffb6 412.5px,#00ffb4 437.5px,#00ff97 440.5px,#00ff9a 446.5px,#00ffb6 449.5px,#00ffae 454.5px,#00ff97 457.5px,#00ff9a 467px)"></i><i style="left:661px;width:1px;background:linear-gradient(#00ff7d 0px,#00ff7f 16.5px,#00ff58 17.5px,#00ff0f 18.5px,#57ff00 19.5px,#81ff00 21.5px,#9bff00 23.5px,#75ff00 26.5px,#57ff00 27.5px,#00ff10 28.5px,#00ff59 29.5px,#00ff82 30.5px,#00ff83 70.5px,#00ff0a 75.5px,#29ff00 77.5px,#24ff00 82.5px,#00ff11 84.5px,#00ff79 88.5px,#00ff8e 92.5px,#00ff8d 97.5px,#00ff5d 100.5px,#00ff5d 106.5px,#00ff8f 109.5px,#00ff8e 132.5px,#00ff7e 137.5px,#00ff98 142.5px,#00ffb2 243.5px,#00ffb6 393.5px,#00ffbe 401.5px,#00ffb2 413.5px,#00ffb0 437.5px,#00ff93 440.5px,#00ff96 446.5px,#00ffb2 449.5px,#00ffaa 454.5px,#00ff93 457.5px,#00ff96 467px)"></i><i style="left:662px;width:1px;background:linear-gradient(#00ff87 0px,#00ff8a 16.5px,#00ff60 17.5px,#00ff13 18.5px,#56ff00 19.5px,#81ff00 21.5px,#9bff00 23.5px,#75ff00 26.5px,#56ff00 27.5px,#00ff14 28.5px,#00ff61 29.5px,#00ff8c 30.5px,#00ff91 64.5px,#00ff55 67.5px,#00ff02 70.5px,#2dff00 72.5px,#2cff00 76.5px,#00ff05 78.5px,#00ff8b 83.5px,#00ff99 96.5px,#00ff87 98.5px,#00ff61 100.5px,#00ff62 106.5px,#00ff99 109.5px,#00ff97 132.5px,#00ff83 136.5px,#00ffa2 142.5px,#00ffbc 246.5px,#00ffc0 393.5px,#00ffc8 401.5px,#00ffbc 412.5px,#00ffba 437.5px,#00ff9d 440.5px,#00ff9f 446.5px,#00ffbc 449.5px,#00ffb4 454.5px,#00ff9d 457.5px,#00ffa0 467px)"></i><i style="left:663px;width:1px;background:linear-gradient(#00ff7d 0px,#00ff80 16.5px,#00ff58 17.5px,#00ff0f 18.5px,#57ff00 19.5px,#81ff00 21.5px,#9bff00 23.5px,#75ff00 26.5px,#57ff00 27.5px,#00ff10 28.5px,#00ff5a 29.5px,#00ff83 30.5px,#00ff83 59.5px,#00ff0d 64.5px,#2eff00 67.5px,#27ff00 71.5px,#00ff0d 73.5px,#00ff86 78.5px,#00ff8e 97.5px,#00ff5d 100.5px,#00ff5e 106.5px,#00ff90 109.5px,#00ff8e 132.5px,#00ff7e 137.5px,#00ff98 142.5px,#00ffb2 246.5px,#00ffb6 393.5px,#00ffbd 401.5px,#00ffb2 423.5px,#00ffb0 437.5px,#00ff93 440.5px,#00ff95 446.5px,#00ffb2 449.5px,#00ffaa 454.5px,#00ff93 457.5px,#00ff96 467px)"></i><i style="left:664px;width:1px;background:linear-gradient(#00ff73 0px,#00ff75 16.5px,#00ff50 17.5px,#00ff0b 18.5px,#58ff00 19.5px,#81ff00 21.5px,#9bff00 23.5px,#75ff00 26.5px,#57ff00 27.5px,#00ff0c 28.5px,#00ff52 29.5px,#00ff78 30.5px,#00ff73 54.5px,#00ff01 59.5px,#2dff00 61.5px,#2dff00 65.5px,#02ff00 67.5px,#00ff74 72.5px,#00ff82 81.5px,#00ff83 97.5px,#00ff57 101.5px,#00ff59 106.5px,#00ff88 110.5px,#00ff85 132.5px,#00ff78 137.5px,#00ff8e 143.5px,#00ffa7 258.5px,#00ffab 393.5px,#00ffb2 401.5px,#00ffa7 423.5px,#00ffa4 437.5px,#00ff88 440.5px,#00ff8a 446.5px,#00ffa7 449.5px,#00ff9f 454.5px,#00ff88 457.5px,#00ff8b 467px)"></i><i style="left:665px;width:1px;background:linear-gradient(#00ff89 0px,#00ff8b 16.5px,#00ff61 17.5px,#00ff14 18.5px,#56ff00 19.5px,#81ff00 21.5px,#9bff00 23.5px,#75ff00 26.5px,#55ff00 27.5px,#00ff14 28.5px,#00ff63 29.5px,#00ff8e 30.5px,#00ff92 48.5px,#07ff00 54.5px,#2eff00 56.5px,#29ff00 60.5px,#00ff0c 62.5px,#00ff8d 67.5px,#00ff99 97.5px,#00ff62 100.5px,#00ff63 106.5px,#00ff9b 109.5px,#00ff98 132.5px,#00ff84 136.5px,#00ffa4 142.5px,#00ffbc 265.5px,#00ffc0 393.5px,#00ffc7 401.5px,#00ffbc 423.5px,#00ffba 437.5px,#00ff9d 440.5px,#00ff9f 446.5px,#00ffbc 449.5px,#00ffb4 454.5px,#00ff9d 457.5px,#00ffa0 467px)"></i><i style="left:666px;width:1px;background:linear-gradient(#00ff7e 0px,#00ff81 16.5px,#00ff59 17.5px,#00ff10 18.5px,#57ff00 19.5px,#81ff00 21.5px,#9bff00 23.5px,#75ff00 26.5px,#56ff00 27.5px,#00ff10 28.5px,#00ff5a 29.5px,#00ff83 30.5px,#00ff87 47.5px,#00ff76 48.5px,#00ff00 49.5px,#2bff00 50.5px,#2eff00 54.5px,#04ff00 56.5px,#00ff7a 61.5px,#00ff8b 66.5px,#00ff8e 97.5px,#00ff5b 101.5px,#00ff5e 106.5px,#00ff90 109.5px,#00ff8f 132.5px,#00ff7f 137.5px,#00ff99 142.5px,#00ffb1 270.5px,#00ffb5 393.5px,#00ffbc 401.5px,#00ffb1 423.5px,#00ffae 437.5px,#00ff92 440.5px,#00ff94 446.5px,#00ffb1 449.5px,#00ffa9 454.5px,#00ff92 457.5px,#00ff95 467px)"></i><i style="left:667px;width:1px;background:linear-gradient(#00ff79 0px,#00ff7c 16.5px,#00ff55 17.5px,#00ff0e 18.5px,#57ff00 19.5px,#81ff00 21.5px,#9bff00 23.5px,#75ff00 26.5px,#57ff00 27.5px,#00ff0f 28.5px,#00ff57 29.5px,#00ff7f 30.5px,#00ff82 47.5px,#00ff72 48.5px,#02ff00 49.5px,#17ff00 50.5px,#00ff05 51.5px,#00ff7b 56.5px,#00ff8a 97.5px,#00ff59 101.5px,#00ff5c 106.5px,#00ff8c 109.5px,#00ff8b 132.5px,#00ff7c 137.5px,#00ff94 142.5px,#00ffab 271.5px,#00ffaf 393.5px,#00ffb6 401.5px,#00ffab 423.5px,#00ffa9 437.5px,#00ff8c 440.5px,#00ff8e 446.5px,#00ffab 449.5px,#00ffa3 454.5px,#00ff8c 457.5px,#00ff90 467px)"></i><i style="left:668px;width:1px;background:linear-gradient(#00ff72 0px,#00ff75 16.5px,#00ff4f 17.5px,#00ff0b 18.5px,#58ff00 19.5px,#81ff00 21.5px,#9bff00 23.5px,#75ff00 26.5px,#58ff00 27.5px,#00ff0c 28.5px,#00ff51 29.5px,#00ff77 30.5px,#00ff7b 48.5px,#00ff6a 50.5px,#00ff7c 54.5px,#00ff82 97.5px,#00ff56 101.5px,#00ff59 106.5px,#00ff87 110.5px,#00ff84 132.5px,#00ff77 137.5px,#00ff8d 143.5px,#00ffa3 278.5px,#00ffa7 393.5px,#00ffae 401.5px,#00ffa3 423.5px,#00ffa0 437.5px,#00ff84 440.5px,#00ff86 446.5px,#00ffa3 449.5px,#00ff9b 454.5px,#00ff84 457.5px,#00ff88 467px)"></i><i style="left:669px;width:1px;background:linear-gradient(#00ff6f 0px,#00ff72 16.5px,#00ff4d 17.5px,#00ff0a 18.5px,#58ff00 19.5px,#81ff00 21.5px,#9bff00 23.5px,#75ff00 26.5px,#58ff00 27.5px,#00ff0b 28.5px,#00ff4f 29.5px,#00ff75 30.5px,#00ff80 97.5px,#00ff55 101.5px,#00ff64 107.5px,#00ff84 110.5px,#00ff82 132.5px,#00ff76 137.5px,#00ff8b 144.5px,#00ff9f 284.5px,#00ffa3 393.5px,#00ffab 401.5px,#00ff9f 413.5px,#00ff9d 437.5px,#00ff80 440.5px,#00ff83 446.5px,#00ff9f 449.5px,#00ff97 454.5px,#00ff80 457.5px,#00ff85 467px)"></i></div>
<svg width="1345" height="916" viewBox="0 0 1345 916" shape-rendering="crispEdges" style="position:absolute;left:0;top:0"><g font-family="Liberation Sans, sans-serif" style="white-space:pre">
<rect x="105" y="59" width="231" height="287" fill="#6382bf" />
<rect x="106" y="60" width="229" height="285" fill="#ffffff" />
<rect x="107" y="61" width="228" height="283" fill="#eeeeee" />
<rect x="106" y="119" width="229" height="1" fill="#6382bf" />
<rect x="106" y="120" width="229" height="1" fill="#ffffff" />
<rect x="106" y="180" width="229" height="1" fill="#6382bf" />
<rect x="106" y="181" width="229" height="1" fill="#ffffff" />
<rect x="106" y="240" width="229" height="1" fill="#6382bf" />
<rect x="106" y="241" width="229" height="1" fill="#ffffff" />
<rect x="106" y="263" width="229" height="1" fill="#6382bf" />
<rect x="106" y="264" width="229" height="1" fill="#ffffff" />
<rect x="106" y="304" width="229" height="1" fill="#6382bf" />
<rect x="106" y="305" width="229" height="1" fill="#ffffff" />
<rect x="106" y="182" width="229" height="18" fill="#a3b8cc" />
<rect x="106" y="182" width="229" height="1" fill="#7f9bc0" />
<text xml:space="preserve" x="132.5" y="76" font-size="12.5" font-weight="bold" fill="#333333" textLength="90.92" lengthAdjust="spacingAndGlyphs" >New Window</text>
<text xml:space="preserve" x="132.5" y="95" font-size="12.5" font-weight="bold" fill="#333333" textLength="153.64" lengthAdjust="spacingAndGlyphs" >Clone to New Window</text>
<text xml:space="preserve" x="132.5" y="114" font-size="12.5" font-weight="bold" fill="#333333" textLength="113.88" lengthAdjust="spacingAndGlyphs" >Reset Window...</text>
<text xml:space="preserve" x="132.5" y="135" font-size="12.5" font-weight="bold" fill="#333333" textLength="99.83" lengthAdjust="spacingAndGlyphs" >Add Plot From</text>
<text xml:space="preserve" x="132.5" y="154" font-size="12.5" font-weight="bold" fill="#333333" textLength="74.19" lengthAdjust="spacingAndGlyphs" >Add Plot...</text>
<text xml:space="preserve" x="132.5" y="174" font-size="12.5" font-weight="bold" fill="#333333" textLength="134.30" lengthAdjust="spacingAndGlyphs" >Open URI History...</text>
<text xml:space="preserve" x="132.5" y="196" font-size="12.5" font-weight="bold" fill="#333333" textLength="115.80" lengthAdjust="spacingAndGlyphs" >Open .vap File...</text>
<text xml:space="preserve" x="132.5" y="215" font-size="12.5" font-weight="bold" fill="#333333" textLength="55.53" lengthAdjust="spacingAndGlyphs" >Save As</text>
<text xml:space="preserve" x="132.5" y="234" font-size="12.5" font-weight="bold" fill="#333333" textLength="34.06" lengthAdjust="spacingAndGlyphs" >Save</text>
<text xml:space="preserve" x="132.5" y="257" font-size="12.5" font-weight="bold" fill="#333333" textLength="53.41" lengthAdjust="spacingAndGlyphs" >Print to</text>
<text xml:space="preserve" x="132.5" y="280" font-size="12.5" font-weight="bold" fill="#333333" textLength="98.11" lengthAdjust="spacingAndGlyphs" >Export Data...</text>
<text xml:space="preserve" x="132.5" y="299" font-size="12.5" font-weight="bold" fill="#333333" textLength="120.70" lengthAdjust="spacingAndGlyphs" >Export All Data...</text>
<text xml:space="preserve" x="132.5" y="320" font-size="12.5" font-weight="bold" fill="#333333" textLength="37.97" lengthAdjust="spacingAndGlyphs" >Close</text>
<text xml:space="preserve" x="132.5" y="339" font-size="12.5" font-weight="bold" fill="#333333" textLength="29.78" lengthAdjust="spacingAndGlyphs" >Quit</text>
<text xml:space="preserve" x="292.5" y="234" font-size="10.5" fill="#6382bf" textLength="28.50" lengthAdjust="spacingAndGlyphs" >Ctrl-S</text>
<path d="M325.3 125 L329.5 129.5 L325.3 134 Z" fill="#333" shape-rendering="geometricPrecision"/>
<path d="M325.3 248 L329.5 252.5 L325.3 257 Z" fill="#333" shape-rendering="geometricPrecision"/>
<rect x="112" y="161" width="16" height="16" fill="#ffffff" />
<g shape-rendering="geometricPrecision">
<circle cx="113.5" cy="162.5" r="1.3" fill="#7ea6e8"/><circle cx="117.5" cy="166.5" r="1.3" fill="#5a8de0"/>
<circle cx="117.5" cy="170.5" r="1.3" fill="#5a8de0"/><circle cx="113.5" cy="174.5" r="1.3" fill="#3f7ad8"/>
</g>
<rect x="116" y="162" width="6" height="1" fill="#555" />
<rect x="120" y="166" width="8" height="1" fill="#111" />
<rect x="120" y="170" width="8" height="1" fill="#111" />
<rect x="116" y="174" width="8" height="1" fill="#111" />
<path d="M190 200.5 L190.3 228.5 L198 223.8 L206.5 241.8 L216 237 L208 219.5 L214.5 215.5 Z" fill="url(#gCur)" stroke="#111" stroke-width="3.4" stroke-linejoin="round" shape-rendering="geometricPrecision"/>
</g></svg>
</body></html>
